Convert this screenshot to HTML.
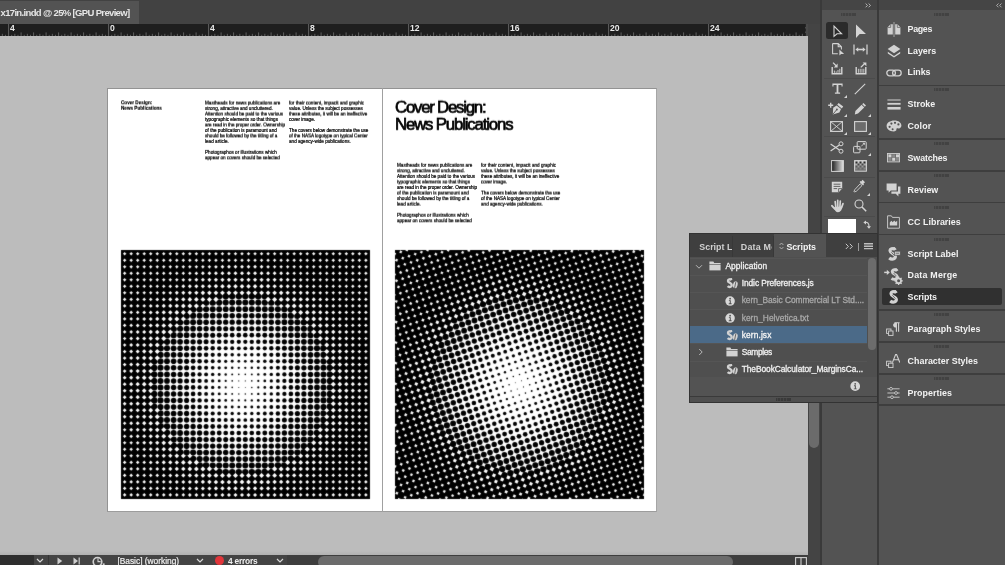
<!DOCTYPE html>
<html lang="en">
<head>
<meta charset="utf-8">
<title>x17in.indd @ 25% [GPU Preview]</title>
<style>
*{box-sizing:border-box;margin:0;padding:0}
html,body{width:1005px;height:565px;overflow:hidden;background:#bcbcbc}
body{position:relative;font-family:"Liberation Sans",sans-serif;color:#f0f0f0;-webkit-font-smoothing:antialiased}
.abs{position:absolute}
#tabbar{left:0;top:0;width:822px;height:23.5px;background:#424242}
#doctab{left:0;top:1px;width:139px;height:22.5px;background:#535353;font-weight:bold;font-size:9.5px;line-height:23.5px;letter-spacing:-0.655px;color:#e6e6e6;white-space:nowrap;padding-left:0.5px}
#ruler{left:0;top:23.6px;width:805.3px;height:12px;background:#1e1e1e;overflow:hidden}
#ruler .lbl{position:absolute;top:0.6px;font-size:8.6px;line-height:9px;color:#e8e8e8;font-weight:bold;letter-spacing:-0.2px}
#rulerend{left:805.3px;top:23.5px;width:2.7px;height:12px;background:#4a4a4a;border-left:1px dashed #262626}
#canvas{left:0;top:35.5px;width:808px;height:519.5px;background:linear-gradient(#bcbcbc 0,#bcbcbc 515px,#b0b0b0 519.5px)}
#vscroll{left:808px;top:23.5px;width:11.5px;height:541.5px;background:#444}
#vthumb{left:808.5px;top:240px;width:10.5px;height:208px;background:#6b6b6b;border-radius:0 0 5px 5px}
#vdiv{left:819.5px;top:0;width:2.5px;height:565px;background:#3a3a3a}
#spread{left:107px;top:87.7px;width:550.1px;height:424.8px;background:#fff;border:1.3px solid #939393;border-right:1px solid #a6a6a6;border-bottom:1px solid #9c9c9c}
#spine{left:381.8px;top:88px;width:1px;height:423.5px;background:#a0a0a0}
.doc{color:#000;font-family:"Liberation Sans",sans-serif}
.ht{position:absolute;overflow:hidden;background:#fff;filter:url(#soft)}
.ht svg{display:block}
/* toolbar */
#tbhead{left:822px;top:0;width:54.5px;height:10px;background:#454545}
#tb{left:822px;top:10px;width:54.5px;height:555px;background:#535353}
#tbgap{left:876.5px;top:0;width:2px;height:565px;background:#3a3a3a}
#dockhead{left:878.5px;top:0;width:126.5px;height:10.3px;background:#454545}
#dock{left:878.5px;top:10.3px;width:126.5px;height:554.7px;background:#535353}
.grip{position:absolute;height:3px;width:15.4px;background:repeating-linear-gradient(90deg,#424242 0 1.15px,#4c4c4c 1.15px 1.55px)}
.ddiv{position:absolute;left:878.5px;width:126.5px;height:1.6px;background:#3e3e3e}
.dlabel{position:absolute;left:907.6px;font-weight:bold;font-size:8.9px;line-height:12px;letter-spacing:0;color:#f2f2f2;white-space:nowrap}
.dicon{position:absolute}
.tdiv{position:absolute;left:824px;width:51px;height:1px;background:#4b4b4b}
/* status bar */
#status{left:0;top:554.8px;width:819.5px;height:11px;background:#444}
/* scripts panel */
#sp{left:688.5px;top:232.5px;width:189px;height:170px;background:#535353;border:1.5px solid #333;border-right-width:1px}
.dlabel,.sprt,.sptx,.stx,#doctab,#ruler .lbl{filter:blur(0.28px)}

#doctext{position:absolute;left:0;top:0;width:1005px;height:565px;pointer-events:none}
.dl{position:absolute;white-space:nowrap;color:#000;font-family:"Liberation Sans",sans-serif}
.bt{font-size:4.62px;line-height:6px;height:6px;-webkit-text-stroke:0.2px #000}
.sh{font-size:4.62px;line-height:6px;height:6px;font-weight:bold;-webkit-text-stroke:0.15px #000}
.bh{font-size:16.8px;line-height:20px;height:20px;-webkit-text-stroke:0.7px #000}

#st-left{left:0;top:554.8px;width:33.5px;height:11px;background:#2e2e2e}
#st-track{left:287px;top:554.8px;width:521px;height:11px;background:#3e3e3e}
.stx{position:absolute;-webkit-text-stroke:0.2px currentColor;top:555.3px;font-size:8.4px;line-height:12px;color:#f0f0f0;white-space:nowrap}
#hthumb{left:318px;top:556.2px;width:415px;height:12px;background:#6b6b6b;border-radius:6px}

.ti{position:absolute;overflow:visible}

#sptabs{left:690px;top:234px;width:187px;height:23px;background:#3f3f3f}
#sptab{left:773.5px;top:234px;width:52px;height:23px;background:#535353}
.sptx{position:absolute;top:240.8px;font-size:8.9px;font-weight:bold;line-height:12px;white-space:nowrap;color:#d0d0d0;overflow:hidden}
#splist{left:690px;top:257px;width:177px;height:119.7px;background:#4f4f4f}
.sprow{position:absolute;left:690px;width:177px;height:17.1px;border-top:1px solid #555}
.sprt{position:absolute;font-size:8.4px;-webkit-text-stroke:0.3px currentColor;line-height:12px;white-space:nowrap;color:#f0f0f0}
#spsb{left:867px;top:257px;width:10px;height:119.7px;background:#4f4f4f}
#spthumb{left:867.8px;top:258px;width:7.8px;height:91.5px;background:#6c6c6c;border-radius:4px}
#spfoot{left:690px;top:376.7px;width:187px;height:19px;background:#535353}
#spfootline{left:690px;top:395.6px;width:187px;height:1.4px;background:#3a3a3a}
#spbot{left:690px;top:397px;width:187px;height:4.6px;background:#4f4f4f}
</style>
</head>
<body>
<svg width="0" height="0" style="position:absolute"><filter id="soft" x="-2%" y="-2%" width="104%" height="104%" color-interpolation-filters="sRGB"><feConvolveMatrix order="3" kernelMatrix="0.3 1 0.3 1 9 1 0.3 1 0.3" divisor="14.2" edgeMode="duplicate" preserveAlpha="false"/></filter></svg>
<div id="canvas" class="abs"></div>
<div id="tabbar" class="abs"></div>
<div id="doctab" class="abs">x17in.indd @ 25% [GPU Preview]</div>
<div id="ruler" class="abs">
<svg width="805" height="12" style="position:absolute;left:0;top:0"><g stroke="#7c7c7c" stroke-width="0.7"><path d="M2.35 12v-2.2"/>
<path d="M5.47 12v-1.2"/>
<path d="M8.60 12v-12.0"/>
<path d="M11.72 12v-1.2"/>
<path d="M14.85 12v-2.2"/>
<path d="M17.97 12v-1.2"/>
<path d="M21.10 12v-3.6"/>
<path d="M24.22 12v-1.2"/>
<path d="M27.35 12v-2.2"/>
<path d="M30.47 12v-1.2"/>
<path d="M33.60 12v-3.6"/>
<path d="M36.72 12v-1.2"/>
<path d="M39.85 12v-2.2"/>
<path d="M42.97 12v-1.2"/>
<path d="M46.10 12v-3.6"/>
<path d="M49.22 12v-1.2"/>
<path d="M52.35 12v-2.2"/>
<path d="M55.47 12v-1.2"/>
<path d="M58.60 12v-3.6"/>
<path d="M61.72 12v-1.2"/>
<path d="M64.85 12v-2.2"/>
<path d="M67.97 12v-1.2"/>
<path d="M71.10 12v-3.6"/>
<path d="M74.22 12v-1.2"/>
<path d="M77.35 12v-2.2"/>
<path d="M80.47 12v-1.2"/>
<path d="M83.60 12v-3.6"/>
<path d="M86.72 12v-1.2"/>
<path d="M89.85 12v-2.2"/>
<path d="M92.97 12v-1.2"/>
<path d="M96.10 12v-3.6"/>
<path d="M99.22 12v-1.2"/>
<path d="M102.35 12v-2.2"/>
<path d="M105.47 12v-1.2"/>
<path d="M108.60 12v-12.0"/>
<path d="M111.72 12v-1.2"/>
<path d="M114.85 12v-2.2"/>
<path d="M117.97 12v-1.2"/>
<path d="M121.10 12v-3.6"/>
<path d="M124.22 12v-1.2"/>
<path d="M127.35 12v-2.2"/>
<path d="M130.47 12v-1.2"/>
<path d="M133.60 12v-3.6"/>
<path d="M136.72 12v-1.2"/>
<path d="M139.85 12v-2.2"/>
<path d="M142.97 12v-1.2"/>
<path d="M146.10 12v-3.6"/>
<path d="M149.22 12v-1.2"/>
<path d="M152.35 12v-2.2"/>
<path d="M155.47 12v-1.2"/>
<path d="M158.60 12v-3.6"/>
<path d="M161.72 12v-1.2"/>
<path d="M164.85 12v-2.2"/>
<path d="M167.97 12v-1.2"/>
<path d="M171.10 12v-3.6"/>
<path d="M174.22 12v-1.2"/>
<path d="M177.35 12v-2.2"/>
<path d="M180.47 12v-1.2"/>
<path d="M183.60 12v-3.6"/>
<path d="M186.72 12v-1.2"/>
<path d="M189.85 12v-2.2"/>
<path d="M192.97 12v-1.2"/>
<path d="M196.10 12v-3.6"/>
<path d="M199.22 12v-1.2"/>
<path d="M202.35 12v-2.2"/>
<path d="M205.47 12v-1.2"/>
<path d="M208.60 12v-12.0"/>
<path d="M211.72 12v-1.2"/>
<path d="M214.85 12v-2.2"/>
<path d="M217.97 12v-1.2"/>
<path d="M221.10 12v-3.6"/>
<path d="M224.22 12v-1.2"/>
<path d="M227.35 12v-2.2"/>
<path d="M230.47 12v-1.2"/>
<path d="M233.60 12v-3.6"/>
<path d="M236.72 12v-1.2"/>
<path d="M239.85 12v-2.2"/>
<path d="M242.97 12v-1.2"/>
<path d="M246.10 12v-3.6"/>
<path d="M249.22 12v-1.2"/>
<path d="M252.35 12v-2.2"/>
<path d="M255.47 12v-1.2"/>
<path d="M258.60 12v-3.6"/>
<path d="M261.73 12v-1.2"/>
<path d="M264.85 12v-2.2"/>
<path d="M267.98 12v-1.2"/>
<path d="M271.10 12v-3.6"/>
<path d="M274.23 12v-1.2"/>
<path d="M277.35 12v-2.2"/>
<path d="M280.48 12v-1.2"/>
<path d="M283.60 12v-3.6"/>
<path d="M286.73 12v-1.2"/>
<path d="M289.85 12v-2.2"/>
<path d="M292.98 12v-1.2"/>
<path d="M296.10 12v-3.6"/>
<path d="M299.23 12v-1.2"/>
<path d="M302.35 12v-2.2"/>
<path d="M305.48 12v-1.2"/>
<path d="M308.60 12v-12.0"/>
<path d="M311.73 12v-1.2"/>
<path d="M314.85 12v-2.2"/>
<path d="M317.98 12v-1.2"/>
<path d="M321.10 12v-3.6"/>
<path d="M324.23 12v-1.2"/>
<path d="M327.35 12v-2.2"/>
<path d="M330.48 12v-1.2"/>
<path d="M333.60 12v-3.6"/>
<path d="M336.73 12v-1.2"/>
<path d="M339.85 12v-2.2"/>
<path d="M342.98 12v-1.2"/>
<path d="M346.10 12v-3.6"/>
<path d="M349.23 12v-1.2"/>
<path d="M352.35 12v-2.2"/>
<path d="M355.48 12v-1.2"/>
<path d="M358.60 12v-3.6"/>
<path d="M361.73 12v-1.2"/>
<path d="M364.85 12v-2.2"/>
<path d="M367.98 12v-1.2"/>
<path d="M371.10 12v-3.6"/>
<path d="M374.23 12v-1.2"/>
<path d="M377.35 12v-2.2"/>
<path d="M380.48 12v-1.2"/>
<path d="M383.60 12v-3.6"/>
<path d="M386.73 12v-1.2"/>
<path d="M389.85 12v-2.2"/>
<path d="M392.98 12v-1.2"/>
<path d="M396.10 12v-3.6"/>
<path d="M399.23 12v-1.2"/>
<path d="M402.35 12v-2.2"/>
<path d="M405.48 12v-1.2"/>
<path d="M408.60 12v-12.0"/>
<path d="M411.73 12v-1.2"/>
<path d="M414.85 12v-2.2"/>
<path d="M417.98 12v-1.2"/>
<path d="M421.10 12v-3.6"/>
<path d="M424.23 12v-1.2"/>
<path d="M427.35 12v-2.2"/>
<path d="M430.48 12v-1.2"/>
<path d="M433.60 12v-3.6"/>
<path d="M436.73 12v-1.2"/>
<path d="M439.85 12v-2.2"/>
<path d="M442.98 12v-1.2"/>
<path d="M446.10 12v-3.6"/>
<path d="M449.23 12v-1.2"/>
<path d="M452.35 12v-2.2"/>
<path d="M455.48 12v-1.2"/>
<path d="M458.60 12v-3.6"/>
<path d="M461.73 12v-1.2"/>
<path d="M464.85 12v-2.2"/>
<path d="M467.98 12v-1.2"/>
<path d="M471.10 12v-3.6"/>
<path d="M474.23 12v-1.2"/>
<path d="M477.35 12v-2.2"/>
<path d="M480.48 12v-1.2"/>
<path d="M483.60 12v-3.6"/>
<path d="M486.73 12v-1.2"/>
<path d="M489.85 12v-2.2"/>
<path d="M492.98 12v-1.2"/>
<path d="M496.10 12v-3.6"/>
<path d="M499.23 12v-1.2"/>
<path d="M502.35 12v-2.2"/>
<path d="M505.48 12v-1.2"/>
<path d="M508.60 12v-12.0"/>
<path d="M511.73 12v-1.2"/>
<path d="M514.85 12v-2.2"/>
<path d="M517.98 12v-1.2"/>
<path d="M521.10 12v-3.6"/>
<path d="M524.23 12v-1.2"/>
<path d="M527.35 12v-2.2"/>
<path d="M530.48 12v-1.2"/>
<path d="M533.60 12v-3.6"/>
<path d="M536.73 12v-1.2"/>
<path d="M539.85 12v-2.2"/>
<path d="M542.98 12v-1.2"/>
<path d="M546.10 12v-3.6"/>
<path d="M549.23 12v-1.2"/>
<path d="M552.35 12v-2.2"/>
<path d="M555.48 12v-1.2"/>
<path d="M558.60 12v-3.6"/>
<path d="M561.73 12v-1.2"/>
<path d="M564.85 12v-2.2"/>
<path d="M567.98 12v-1.2"/>
<path d="M571.10 12v-3.6"/>
<path d="M574.23 12v-1.2"/>
<path d="M577.35 12v-2.2"/>
<path d="M580.48 12v-1.2"/>
<path d="M583.60 12v-3.6"/>
<path d="M586.73 12v-1.2"/>
<path d="M589.85 12v-2.2"/>
<path d="M592.98 12v-1.2"/>
<path d="M596.10 12v-3.6"/>
<path d="M599.23 12v-1.2"/>
<path d="M602.35 12v-2.2"/>
<path d="M605.48 12v-1.2"/>
<path d="M608.60 12v-12.0"/>
<path d="M611.73 12v-1.2"/>
<path d="M614.85 12v-2.2"/>
<path d="M617.98 12v-1.2"/>
<path d="M621.10 12v-3.6"/>
<path d="M624.23 12v-1.2"/>
<path d="M627.35 12v-2.2"/>
<path d="M630.48 12v-1.2"/>
<path d="M633.60 12v-3.6"/>
<path d="M636.73 12v-1.2"/>
<path d="M639.85 12v-2.2"/>
<path d="M642.98 12v-1.2"/>
<path d="M646.10 12v-3.6"/>
<path d="M649.23 12v-1.2"/>
<path d="M652.35 12v-2.2"/>
<path d="M655.48 12v-1.2"/>
<path d="M658.60 12v-3.6"/>
<path d="M661.73 12v-1.2"/>
<path d="M664.85 12v-2.2"/>
<path d="M667.98 12v-1.2"/>
<path d="M671.10 12v-3.6"/>
<path d="M674.23 12v-1.2"/>
<path d="M677.35 12v-2.2"/>
<path d="M680.48 12v-1.2"/>
<path d="M683.60 12v-3.6"/>
<path d="M686.73 12v-1.2"/>
<path d="M689.85 12v-2.2"/>
<path d="M692.98 12v-1.2"/>
<path d="M696.10 12v-3.6"/>
<path d="M699.23 12v-1.2"/>
<path d="M702.35 12v-2.2"/>
<path d="M705.48 12v-1.2"/>
<path d="M708.60 12v-12.0"/>
<path d="M711.73 12v-1.2"/>
<path d="M714.85 12v-2.2"/>
<path d="M717.98 12v-1.2"/>
<path d="M721.10 12v-3.6"/>
<path d="M724.23 12v-1.2"/>
<path d="M727.35 12v-2.2"/>
<path d="M730.48 12v-1.2"/>
<path d="M733.60 12v-3.6"/>
<path d="M736.73 12v-1.2"/>
<path d="M739.85 12v-2.2"/>
<path d="M742.98 12v-1.2"/>
<path d="M746.10 12v-3.6"/>
<path d="M749.23 12v-1.2"/>
<path d="M752.35 12v-2.2"/>
<path d="M755.48 12v-1.2"/>
<path d="M758.60 12v-3.6"/>
<path d="M761.73 12v-1.2"/>
<path d="M764.85 12v-2.2"/>
<path d="M767.98 12v-1.2"/>
<path d="M771.10 12v-3.6"/>
<path d="M774.23 12v-1.2"/>
<path d="M777.35 12v-2.2"/>
<path d="M780.48 12v-1.2"/>
<path d="M783.60 12v-3.6"/>
<path d="M786.73 12v-1.2"/>
<path d="M789.85 12v-2.2"/>
<path d="M792.98 12v-1.2"/>
<path d="M796.10 12v-3.6"/>
<path d="M799.23 12v-1.2"/>
<path d="M802.35 12v-2.2"/>
<path d="M805.48 12v-1.2"/></g></svg>
<div class="lbl" style="left:10.1px">4</div>
<div class="lbl" style="left:110.1px">0</div>
<div class="lbl" style="left:210.1px">4</div>
<div class="lbl" style="left:310.1px">8</div>
<div class="lbl" style="left:410.1px">12</div>
<div class="lbl" style="left:510.1px">16</div>
<div class="lbl" style="left:610.1px">20</div>
<div class="lbl" style="left:710.1px">24</div>
</div>
<div id="rulerend" class="abs"></div>

<!-- document spread -->
<div id="spread" class="abs"></div>
<div id="spine" class="abs"></div>
<div id="doctext">
<div class="dl bt" style="left:204.8px;top:100px;letter-spacing:0.013px;transform:perspective(1000px) translate3d(0,0.55px,0.1px)">Mastheads for news publications are</div>
<div class="dl bt" style="left:204.8px;top:106px;letter-spacing:-0.021px;transform:perspective(1000px) translate3d(0,0.03px,0.1px)">strong, attractive and uncluttered.</div>
<div class="dl bt" style="left:204.8px;top:111px;letter-spacing:-0.008px;transform:perspective(1000px) translate3d(0,0.51px,0.1px)">Attention should be paid to the various</div>
<div class="dl bt" style="left:204.8px;top:116px;letter-spacing:0.014px;transform:perspective(1000px) translate3d(0,0.99px,0.1px)">typographic elements so that things</div>
<div class="dl bt" style="left:204.8px;top:122px;letter-spacing:-0.018px;transform:perspective(1000px) translate3d(0,0.47px,0.1px)">are read in the proper order. Ownership</div>
<div class="dl bt" style="left:204.8px;top:127px;letter-spacing:0.001px;transform:perspective(1000px) translate3d(0,0.95px,0.1px)">of the publication is paramount and</div>
<div class="dl bt" style="left:204.8px;top:133px;letter-spacing:-0.017px;transform:perspective(1000px) translate3d(0,0.43px,0.1px)">should be followed by the titling of a</div>
<div class="dl bt" style="left:204.8px;top:138px;letter-spacing:0.017px;transform:perspective(1000px) translate3d(0,0.91px,0.1px)">lead article.</div>
<div class="dl bt" style="left:204.8px;top:149px;letter-spacing:0.009px;transform:perspective(1000px) translate3d(0,0.87px,0.1px)">Photographos or illustrations which</div>
<div class="dl bt" style="left:204.8px;top:155px;letter-spacing:-0.013px;transform:perspective(1000px) translate3d(0,0.35px,0.1px)">appear on covers should be selected</div>
<div class="dl bt" style="left:289.2px;top:100px;letter-spacing:0.007px;transform:perspective(1000px) translate3d(0,0.55px,0.1px)">for their content, impactt and graphic</div>
<div class="dl bt" style="left:289.2px;top:106px;letter-spacing:-0.017px;transform:perspective(1000px) translate3d(0,0.03px,0.1px)">value. Unless the subject possesses</div>
<div class="dl bt" style="left:289.2px;top:111px;letter-spacing:-0.013px;transform:perspective(1000px) translate3d(0,0.51px,0.1px)">these attributes, it will be an ineffective</div>
<div class="dl bt" style="left:289.2px;top:116px;letter-spacing:-0.041px;transform:perspective(1000px) translate3d(0,0.99px,0.1px)">cover image.</div>
<div class="dl bt" style="left:289.2px;top:127px;letter-spacing:-0.001px;transform:perspective(1000px) translate3d(0,0.95px,0.1px)">The covers below demonstrate the use</div>
<div class="dl bt" style="left:289.2px;top:133px;letter-spacing:-0.023px;transform:perspective(1000px) translate3d(0,0.43px,0.1px)">of the NASA logotype on typical Center</div>
<div class="dl bt" style="left:289.2px;top:138px;letter-spacing:0.001px;transform:perspective(1000px) translate3d(0,0.91px,0.1px)">and agency-wide publications.</div>
<div class="dl bt" style="left:396.6px;top:162px;letter-spacing:0.013px;transform:perspective(1000px) translate3d(0,0.80px,0.1px)">Mastheads for news publications are</div>
<div class="dl bt" style="left:396.6px;top:168px;letter-spacing:-0.021px;transform:perspective(1000px) translate3d(0,0.35px,0.1px)">strong, attractive and uncluttered.</div>
<div class="dl bt" style="left:396.6px;top:173px;letter-spacing:-0.008px;transform:perspective(1000px) translate3d(0,0.90px,0.1px)">Attention should be paid to the various</div>
<div class="dl bt" style="left:396.6px;top:179px;letter-spacing:0.014px;transform:perspective(1000px) translate3d(0,0.45px,0.1px)">typographic elements so that things</div>
<div class="dl bt" style="left:396.6px;top:185px;letter-spacing:-0.018px;transform:perspective(1000px) translate3d(0,0.00px,0.1px)">are read in the proper order. Ownership</div>
<div class="dl bt" style="left:396.6px;top:190px;letter-spacing:0.001px;transform:perspective(1000px) translate3d(0,0.55px,0.1px)">of the publication is paramount and</div>
<div class="dl bt" style="left:396.6px;top:196px;letter-spacing:-0.017px;transform:perspective(1000px) translate3d(0,0.10px,0.1px)">should be followed by the titling of a</div>
<div class="dl bt" style="left:396.6px;top:201px;letter-spacing:0.017px;transform:perspective(1000px) translate3d(0,0.65px,0.1px)">lead article.</div>
<div class="dl bt" style="left:396.6px;top:212px;letter-spacing:0.009px;transform:perspective(1000px) translate3d(0,0.75px,0.1px)">Photographos or illustrations which</div>
<div class="dl bt" style="left:396.6px;top:218px;letter-spacing:-0.013px;transform:perspective(1000px) translate3d(0,0.30px,0.1px)">appear on covers should be selected</div>
<div class="dl bt" style="left:481.0px;top:162px;letter-spacing:0.007px;transform:perspective(1000px) translate3d(0,0.80px,0.1px)">for their content, impactt and graphic</div>
<div class="dl bt" style="left:481.0px;top:168px;letter-spacing:-0.017px;transform:perspective(1000px) translate3d(0,0.35px,0.1px)">value. Unless the subject possesses</div>
<div class="dl bt" style="left:481.0px;top:173px;letter-spacing:-0.013px;transform:perspective(1000px) translate3d(0,0.90px,0.1px)">these attributes, it will be an ineffective</div>
<div class="dl bt" style="left:481.0px;top:179px;letter-spacing:-0.041px;transform:perspective(1000px) translate3d(0,0.45px,0.1px)">cover image.</div>
<div class="dl bt" style="left:481.0px;top:190px;letter-spacing:-0.001px;transform:perspective(1000px) translate3d(0,0.55px,0.1px)">The covers below demonstrate the use</div>
<div class="dl bt" style="left:481.0px;top:196px;letter-spacing:-0.023px;transform:perspective(1000px) translate3d(0,0.10px,0.1px)">of the NASA logotype on typical Center</div>
<div class="dl bt" style="left:481.0px;top:201px;letter-spacing:0.001px;transform:perspective(1000px) translate3d(0,0.65px,0.1px)">and agency-wide publications.</div>
<div class="dl sh" style="left:120.9px;top:100px;letter-spacing:0.004px;transform:perspective(1000px) translate3d(0,0.30px,0.1px)">Cover Design:</div>
<div class="dl sh" style="left:120.9px;top:105px;letter-spacing:0.010px;transform:perspective(1000px) translate3d(0,0.75px,0.1px)">News Publications</div>
<div class="dl bh" style="left:395.0px;top:97px;letter-spacing:-1.233px;transform:perspective(1000px) translate3d(0,0.70px,0.1px)">Cover Design:</div>
<div class="dl bh" style="left:395.0px;top:114px;letter-spacing:-1.160px;transform:perspective(1000px) translate3d(0,0.80px,0.1px)">News Publications</div>
</div>
<div class="ht" style="left:120.8px;top:250px;width:248.8px;height:248.8px"><svg width="248.8" height="248.8" viewBox="0 0 248.8 248.8" fill="#000">
<circle cx=".4" cy=".5" r="4.7"/>
<circle cx=".4" cy="7" r="4.7"/>
<circle cx=".4" cy="13.5" r="4.7"/>
<circle cx=".4" cy="20.1" r="4.7"/>
<circle cx=".4" cy="26.6" r="4.7"/>
<circle cx=".4" cy="33.1" r="4.7"/>
<circle cx=".4" cy="39.6" r="4.7"/>
<circle cx=".4" cy="46.1" r="4.7"/>
<circle cx=".4" cy="52.6" r="4.7"/>
<circle cx=".4" cy="59.2" r="4.7"/>
<circle cx=".4" cy="65.7" r="4.7"/>
<circle cx=".4" cy="72.2" r="4.7"/>
<circle cx=".4" cy="78.7" r="4.7"/>
<circle cx=".4" cy="85.2" r="4.7"/>
<circle cx=".4" cy="91.8" r="4.7"/>
<circle cx=".4" cy="98.3" r="4.7"/>
<circle cx=".4" cy="104.8" r="4.7"/>
<circle cx=".4" cy="111.3" r="4.7"/>
<circle cx=".4" cy="117.8" r="4.7"/>
<circle cx=".4" cy="124.4" r="4.7"/>
<circle cx=".4" cy="130.9" r="4.7"/>
<circle cx=".4" cy="137.4" r="4.7"/>
<circle cx=".4" cy="143.9" r="4.7"/>
<circle cx=".4" cy="150.4" r="4.7"/>
<circle cx=".4" cy="157" r="4.7"/>
<circle cx=".4" cy="163.5" r="4.7"/>
<circle cx=".4" cy="170" r="4.7"/>
<circle cx=".4" cy="176.5" r="4.7"/>
<circle cx=".4" cy="183" r="4.7"/>
<circle cx=".4" cy="189.6" r="4.7"/>
<circle cx=".4" cy="196.1" r="4.7"/>
<circle cx=".4" cy="202.6" r="4.7"/>
<circle cx=".4" cy="209.1" r="4.7"/>
<circle cx=".4" cy="215.6" r="4.7"/>
<circle cx=".4" cy="222.2" r="4.7"/>
<circle cx=".4" cy="228.7" r="4.7"/>
<circle cx=".4" cy="235.2" r="4.7"/>
<circle cx=".4" cy="241.7" r="4.7"/>
<circle cx=".4" cy="248.2" r="4.7"/>
<circle cx="6.9" cy=".5" r="4.7"/>
<circle cx="6.9" cy="7" r="4.7"/>
<circle cx="6.9" cy="13.5" r="4.7"/>
<circle cx="6.9" cy="20.1" r="4.7"/>
<circle cx="6.9" cy="26.6" r="4.7"/>
<circle cx="6.9" cy="33.1" r="4.7"/>
<circle cx="6.9" cy="39.6" r="4.7"/>
<circle cx="6.9" cy="46.1" r="4.7"/>
<circle cx="6.9" cy="52.6" r="4.7"/>
<circle cx="6.9" cy="59.2" r="4.7"/>
<circle cx="6.9" cy="65.7" r="4.7"/>
<circle cx="6.9" cy="72.2" r="4.7"/>
<circle cx="6.9" cy="78.7" r="4.7"/>
<circle cx="6.9" cy="85.2" r="4.7"/>
<circle cx="6.9" cy="91.8" r="4.7"/>
<circle cx="6.9" cy="98.3" r="4.7"/>
<circle cx="6.9" cy="104.8" r="4.7"/>
<circle cx="6.9" cy="111.3" r="4.7"/>
<circle cx="6.9" cy="117.8" r="4.7"/>
<circle cx="6.9" cy="124.4" r="4.7"/>
<circle cx="6.9" cy="130.9" r="4.7"/>
<circle cx="6.9" cy="137.4" r="4.7"/>
<circle cx="6.9" cy="143.9" r="4.7"/>
<circle cx="6.9" cy="150.4" r="4.7"/>
<circle cx="6.9" cy="157" r="4.7"/>
<circle cx="6.9" cy="163.5" r="4.7"/>
<circle cx="6.9" cy="170" r="4.7"/>
<circle cx="6.9" cy="176.5" r="4.7"/>
<circle cx="6.9" cy="183" r="4.7"/>
<circle cx="6.9" cy="189.6" r="4.7"/>
<circle cx="6.9" cy="196.1" r="4.7"/>
<circle cx="6.9" cy="202.6" r="4.7"/>
<circle cx="6.9" cy="209.1" r="4.7"/>
<circle cx="6.9" cy="215.6" r="4.7"/>
<circle cx="6.9" cy="222.2" r="4.7"/>
<circle cx="6.9" cy="228.7" r="4.7"/>
<circle cx="6.9" cy="235.2" r="4.7"/>
<circle cx="6.9" cy="241.7" r="4.7"/>
<circle cx="6.9" cy="248.2" r="4.7"/>
<circle cx="13.4" cy=".5" r="4.7"/>
<circle cx="13.4" cy="7" r="4.7"/>
<circle cx="13.4" cy="13.5" r="4.7"/>
<circle cx="13.4" cy="20.1" r="4.7"/>
<circle cx="13.4" cy="26.6" r="4.7"/>
<circle cx="13.4" cy="33.1" r="4.7"/>
<circle cx="13.4" cy="39.6" r="4.7"/>
<circle cx="13.4" cy="46.1" r="4.7"/>
<circle cx="13.4" cy="52.6" r="4.7"/>
<circle cx="13.4" cy="59.2" r="4.7"/>
<circle cx="13.4" cy="65.7" r="4.7"/>
<circle cx="13.4" cy="72.2" r="4.7"/>
<circle cx="13.4" cy="78.7" r="4.7"/>
<circle cx="13.4" cy="85.2" r="4.7"/>
<circle cx="13.4" cy="91.8" r="4.7"/>
<circle cx="13.4" cy="98.3" r="4.7"/>
<circle cx="13.4" cy="104.8" r="4.7"/>
<circle cx="13.4" cy="111.3" r="4.7"/>
<circle cx="13.4" cy="117.8" r="4.7"/>
<circle cx="13.4" cy="124.4" r="4.7"/>
<circle cx="13.4" cy="130.9" r="4.7"/>
<circle cx="13.4" cy="137.4" r="4.7"/>
<circle cx="13.4" cy="143.9" r="4.7"/>
<circle cx="13.4" cy="150.4" r="4.7"/>
<circle cx="13.4" cy="157" r="4.7"/>
<circle cx="13.4" cy="163.5" r="4.7"/>
<circle cx="13.4" cy="170" r="4.7"/>
<circle cx="13.4" cy="176.5" r="4.7"/>
<circle cx="13.4" cy="183" r="4.7"/>
<circle cx="13.4" cy="189.6" r="4.7"/>
<circle cx="13.4" cy="196.1" r="4.7"/>
<circle cx="13.4" cy="202.6" r="4.7"/>
<circle cx="13.4" cy="209.1" r="4.7"/>
<circle cx="13.4" cy="215.6" r="4.7"/>
<circle cx="13.4" cy="222.2" r="4.7"/>
<circle cx="13.4" cy="228.7" r="4.7"/>
<circle cx="13.4" cy="235.2" r="4.7"/>
<circle cx="13.4" cy="241.7" r="4.7"/>
<circle cx="13.4" cy="248.2" r="4.7"/>
<circle cx="20" cy=".5" r="4.7"/>
<circle cx="20" cy="7" r="4.7"/>
<circle cx="20" cy="13.5" r="4.7"/>
<circle cx="20" cy="20.1" r="4.7"/>
<circle cx="20" cy="26.6" r="4.7"/>
<circle cx="20" cy="33.1" r="4.7"/>
<circle cx="20" cy="39.6" r="4.7"/>
<circle cx="20" cy="46.1" r="4.7"/>
<circle cx="20" cy="52.6" r="4.7"/>
<circle cx="20" cy="59.2" r="4.7"/>
<circle cx="20" cy="65.7" r="4.7"/>
<circle cx="20" cy="72.2" r="4.7"/>
<circle cx="20" cy="78.7" r="4.7"/>
<circle cx="20" cy="85.2" r="4.7"/>
<circle cx="20" cy="91.8" r="4.7"/>
<circle cx="20" cy="98.3" r="4.7"/>
<circle cx="20" cy="104.8" r="4.7"/>
<circle cx="20" cy="111.3" r="4.7"/>
<circle cx="20" cy="117.8" r="4.7"/>
<circle cx="20" cy="124.4" r="4.7"/>
<circle cx="20" cy="130.9" r="4.7"/>
<circle cx="20" cy="137.4" r="4.7"/>
<circle cx="20" cy="143.9" r="4.7"/>
<circle cx="20" cy="150.4" r="4.7"/>
<circle cx="20" cy="157" r="4.7"/>
<circle cx="20" cy="163.5" r="4.7"/>
<circle cx="20" cy="170" r="4.7"/>
<circle cx="20" cy="176.5" r="4.7"/>
<circle cx="20" cy="183" r="4.7"/>
<circle cx="20" cy="189.6" r="4.7"/>
<circle cx="20" cy="196.1" r="4.7"/>
<circle cx="20" cy="202.6" r="4.7"/>
<circle cx="20" cy="209.1" r="4.7"/>
<circle cx="20" cy="215.6" r="4.7"/>
<circle cx="20" cy="222.2" r="4.7"/>
<circle cx="20" cy="228.7" r="4.7"/>
<circle cx="20" cy="235.2" r="4.7"/>
<circle cx="20" cy="241.7" r="4.7"/>
<circle cx="20" cy="248.2" r="4.7"/>
<circle cx="26.5" cy=".5" r="4.7"/>
<circle cx="26.5" cy="7" r="4.7"/>
<circle cx="26.5" cy="13.5" r="4.7"/>
<circle cx="26.5" cy="20.1" r="4.7"/>
<circle cx="26.5" cy="26.6" r="4.7"/>
<circle cx="26.5" cy="33.1" r="4.7"/>
<circle cx="26.5" cy="39.6" r="4.7"/>
<circle cx="26.5" cy="46.1" r="4.7"/>
<circle cx="26.5" cy="52.6" r="4.7"/>
<circle cx="26.5" cy="59.2" r="4.7"/>
<circle cx="26.5" cy="65.7" r="4.7"/>
<circle cx="26.5" cy="72.2" r="4.7"/>
<circle cx="26.5" cy="78.7" r="4.7"/>
<circle cx="26.5" cy="85.2" r="4.7"/>
<circle cx="26.5" cy="91.8" r="4.7"/>
<circle cx="26.5" cy="98.3" r="4.7"/>
<circle cx="26.5" cy="104.8" r="4.7"/>
<circle cx="26.5" cy="111.3" r="4.7"/>
<circle cx="26.5" cy="117.8" r="4.52"/>
<circle cx="26.5" cy="124.4" r="4.29"/>
<circle cx="26.5" cy="130.9" r="4.17"/>
<circle cx="26.5" cy="137.4" r="4.16"/>
<circle cx="26.5" cy="143.9" r="4.26"/>
<circle cx="26.5" cy="150.4" r="4.46"/>
<circle cx="26.5" cy="157" r="4.7"/>
<circle cx="26.5" cy="163.5" r="4.7"/>
<circle cx="26.5" cy="170" r="4.7"/>
<circle cx="26.5" cy="176.5" r="4.7"/>
<circle cx="26.5" cy="183" r="4.7"/>
<circle cx="26.5" cy="189.6" r="4.7"/>
<circle cx="26.5" cy="196.1" r="4.7"/>
<circle cx="26.5" cy="202.6" r="4.7"/>
<circle cx="26.5" cy="209.1" r="4.7"/>
<circle cx="26.5" cy="215.6" r="4.7"/>
<circle cx="26.5" cy="222.2" r="4.7"/>
<circle cx="26.5" cy="228.7" r="4.7"/>
<circle cx="26.5" cy="235.2" r="4.7"/>
<circle cx="26.5" cy="241.7" r="4.7"/>
<circle cx="26.5" cy="248.2" r="4.7"/>
<circle cx="33" cy=".5" r="4.7"/>
<circle cx="33" cy="7" r="4.7"/>
<circle cx="33" cy="13.5" r="4.7"/>
<circle cx="33" cy="20.1" r="4.7"/>
<circle cx="33" cy="26.6" r="4.7"/>
<circle cx="33" cy="33.1" r="4.7"/>
<circle cx="33" cy="39.6" r="4.7"/>
<circle cx="33" cy="46.1" r="4.7"/>
<circle cx="33" cy="52.6" r="4.7"/>
<circle cx="33" cy="59.2" r="4.7"/>
<circle cx="33" cy="65.7" r="4.7"/>
<circle cx="33" cy="72.2" r="4.7"/>
<circle cx="33" cy="78.7" r="4.7"/>
<circle cx="33" cy="85.2" r="4.7"/>
<circle cx="33" cy="91.8" r="4.7"/>
<circle cx="33" cy="98.3" r="4.33"/>
<circle cx="33" cy="104.8" r="3.78"/>
<circle cx="33" cy="111.3" r="3.45"/>
<circle cx="33" cy="117.8" r="3.34"/>
<circle cx="33" cy="124.4" r="3.26"/>
<circle cx="33" cy="130.9" r="3.22"/>
<circle cx="33" cy="137.4" r="3.22"/>
<circle cx="33" cy="143.9" r="3.25"/>
<circle cx="33" cy="150.4" r="3.32"/>
<circle cx="33" cy="157" r="3.42"/>
<circle cx="33" cy="163.5" r="3.68"/>
<circle cx="33" cy="170" r="4.21"/>
<circle cx="33" cy="176.5" r="4.7"/>
<circle cx="33" cy="183" r="4.7"/>
<circle cx="33" cy="189.6" r="4.7"/>
<circle cx="33" cy="196.1" r="4.7"/>
<circle cx="33" cy="202.6" r="4.7"/>
<circle cx="33" cy="209.1" r="4.7"/>
<circle cx="33" cy="215.6" r="4.7"/>
<circle cx="33" cy="222.2" r="4.7"/>
<circle cx="33" cy="228.7" r="4.7"/>
<circle cx="33" cy="235.2" r="4.7"/>
<circle cx="33" cy="241.7" r="4.7"/>
<circle cx="33" cy="248.2" r="4.7"/>
<circle cx="39.5" cy=".5" r="4.7"/>
<circle cx="39.5" cy="7" r="4.7"/>
<circle cx="39.5" cy="13.5" r="4.7"/>
<circle cx="39.5" cy="20.1" r="4.7"/>
<circle cx="39.5" cy="26.6" r="4.7"/>
<circle cx="39.5" cy="33.1" r="4.7"/>
<circle cx="39.5" cy="39.6" r="4.7"/>
<circle cx="39.5" cy="46.1" r="4.7"/>
<circle cx="39.5" cy="52.6" r="4.7"/>
<circle cx="39.5" cy="59.2" r="4.7"/>
<circle cx="39.5" cy="65.7" r="4.7"/>
<circle cx="39.5" cy="72.2" r="4.7"/>
<circle cx="39.5" cy="78.7" r="4.7"/>
<circle cx="39.5" cy="85.2" r="4.35"/>
<circle cx="39.5" cy="91.8" r="3.58"/>
<circle cx="39.5" cy="98.3" r="3.31"/>
<circle cx="39.5" cy="104.8" r="3.17"/>
<circle cx="39.5" cy="111.3" r="3.1"/>
<circle cx="39.5" cy="117.8" r="3.05"/>
<circle cx="39.5" cy="124.4" r="3.01"/>
<circle cx="39.5" cy="130.9" r="3"/>
<circle cx="39.5" cy="137.4" r="2.99"/>
<circle cx="39.5" cy="143.9" r="3.01"/>
<circle cx="39.5" cy="150.4" r="3.04"/>
<circle cx="39.5" cy="157" r="3.09"/>
<circle cx="39.5" cy="163.5" r="3.15"/>
<circle cx="39.5" cy="170" r="3.27"/>
<circle cx="39.5" cy="176.5" r="3.48"/>
<circle cx="39.5" cy="183" r="4.19"/>
<circle cx="39.5" cy="189.6" r="4.7"/>
<circle cx="39.5" cy="196.1" r="4.7"/>
<circle cx="39.5" cy="202.6" r="4.7"/>
<circle cx="39.5" cy="209.1" r="4.7"/>
<circle cx="39.5" cy="215.6" r="4.7"/>
<circle cx="39.5" cy="222.2" r="4.7"/>
<circle cx="39.5" cy="228.7" r="4.7"/>
<circle cx="39.5" cy="235.2" r="4.7"/>
<circle cx="39.5" cy="241.7" r="4.7"/>
<circle cx="39.5" cy="248.2" r="4.7"/>
<circle cx="46" cy=".5" r="4.7"/>
<circle cx="46" cy="7" r="4.7"/>
<circle cx="46" cy="13.5" r="4.7"/>
<circle cx="46" cy="20.1" r="4.7"/>
<circle cx="46" cy="26.6" r="4.7"/>
<circle cx="46" cy="33.1" r="4.7"/>
<circle cx="46" cy="39.6" r="4.7"/>
<circle cx="46" cy="46.1" r="4.7"/>
<circle cx="46" cy="52.6" r="4.7"/>
<circle cx="46" cy="59.2" r="4.7"/>
<circle cx="46" cy="65.7" r="4.7"/>
<circle cx="46" cy="72.2" r="4.7"/>
<circle cx="46" cy="78.7" r="3.93"/>
<circle cx="46" cy="85.2" r="3.35"/>
<circle cx="46" cy="91.8" r="3.15"/>
<circle cx="46" cy="98.3" r="3.05"/>
<circle cx="46" cy="104.8" r="2.98"/>
<circle cx="46" cy="111.3" r="2.93"/>
<circle cx="46" cy="117.8" r="2.89"/>
<circle cx="46" cy="124.4" r="2.87"/>
<circle cx="46" cy="130.9" r="2.86"/>
<circle cx="46" cy="137.4" r="2.85"/>
<circle cx="46" cy="143.9" r="2.87"/>
<circle cx="46" cy="150.4" r="2.89"/>
<circle cx="46" cy="157" r="2.92"/>
<circle cx="46" cy="163.5" r="2.97"/>
<circle cx="46" cy="170" r="3.03"/>
<circle cx="46" cy="176.5" r="3.13"/>
<circle cx="46" cy="183" r="3.3"/>
<circle cx="46" cy="189.6" r="3.74"/>
<circle cx="46" cy="196.1" r="4.7"/>
<circle cx="46" cy="202.6" r="4.7"/>
<circle cx="46" cy="209.1" r="4.7"/>
<circle cx="46" cy="215.6" r="4.7"/>
<circle cx="46" cy="222.2" r="4.7"/>
<circle cx="46" cy="228.7" r="4.7"/>
<circle cx="46" cy="235.2" r="4.7"/>
<circle cx="46" cy="241.7" r="4.7"/>
<circle cx="46" cy="248.2" r="4.7"/>
<circle cx="52.6" cy=".5" r="4.7"/>
<circle cx="52.6" cy="7" r="4.7"/>
<circle cx="52.6" cy="13.5" r="4.7"/>
<circle cx="52.6" cy="20.1" r="4.7"/>
<circle cx="52.6" cy="26.6" r="4.7"/>
<circle cx="52.6" cy="33.1" r="4.7"/>
<circle cx="52.6" cy="39.6" r="4.7"/>
<circle cx="52.6" cy="46.1" r="4.7"/>
<circle cx="52.6" cy="52.6" r="4.7"/>
<circle cx="52.6" cy="59.2" r="4.7"/>
<circle cx="52.6" cy="65.7" r="4.7"/>
<circle cx="52.6" cy="72.2" r="3.72"/>
<circle cx="52.6" cy="78.7" r="3.25"/>
<circle cx="52.6" cy="85.2" r="3.09"/>
<circle cx="52.6" cy="91.8" r="2.98"/>
<circle cx="52.6" cy="98.3" r="2.91"/>
<circle cx="52.6" cy="104.8" r="2.85"/>
<circle cx="52.6" cy="111.3" r="2.8"/>
<circle cx="52.6" cy="117.8" r="2.77"/>
<circle cx="52.6" cy="124.4" r="2.75"/>
<circle cx="52.6" cy="130.9" r="2.73"/>
<circle cx="52.6" cy="137.4" r="2.73"/>
<circle cx="52.6" cy="143.9" r="2.74"/>
<circle cx="52.6" cy="150.4" r="2.76"/>
<circle cx="52.6" cy="157" r="2.8"/>
<circle cx="52.6" cy="163.5" r="2.84"/>
<circle cx="52.6" cy="170" r="2.9"/>
<circle cx="52.6" cy="176.5" r="2.96"/>
<circle cx="52.6" cy="183" r="3.06"/>
<circle cx="52.6" cy="189.6" r="3.19"/>
<circle cx="52.6" cy="196.1" r="3.51"/>
<circle cx="52.6" cy="202.6" r="4.58"/>
<circle cx="52.6" cy="209.1" r="4.7"/>
<circle cx="52.6" cy="215.6" r="4.7"/>
<circle cx="52.6" cy="222.2" r="4.7"/>
<circle cx="52.6" cy="228.7" r="4.7"/>
<circle cx="52.6" cy="235.2" r="4.7"/>
<circle cx="52.6" cy="241.7" r="4.7"/>
<circle cx="52.6" cy="248.2" r="4.7"/>
<circle cx="59.1" cy=".5" r="4.7"/>
<circle cx="59.1" cy="7" r="4.7"/>
<circle cx="59.1" cy="13.5" r="4.7"/>
<circle cx="59.1" cy="20.1" r="4.7"/>
<circle cx="59.1" cy="26.6" r="4.7"/>
<circle cx="59.1" cy="33.1" r="4.7"/>
<circle cx="59.1" cy="39.6" r="4.7"/>
<circle cx="59.1" cy="46.1" r="4.7"/>
<circle cx="59.1" cy="52.6" r="4.7"/>
<circle cx="59.1" cy="59.2" r="4.7"/>
<circle cx="59.1" cy="65.7" r="3.72"/>
<circle cx="59.1" cy="72.2" r="3.21"/>
<circle cx="59.1" cy="78.7" r="3.06"/>
<circle cx="59.1" cy="85.2" r="2.95"/>
<circle cx="59.1" cy="91.8" r="2.86"/>
<circle cx="59.1" cy="98.3" r="2.8"/>
<circle cx="59.1" cy="104.8" r="2.74"/>
<circle cx="59.1" cy="111.3" r="2.69"/>
<circle cx="59.1" cy="117.8" r="2.66"/>
<circle cx="59.1" cy="124.4" r="2.64"/>
<circle cx="59.1" cy="130.9" r="2.62"/>
<circle cx="59.1" cy="137.4" r="2.62"/>
<circle cx="59.1" cy="143.9" r="2.63"/>
<circle cx="59.1" cy="150.4" r="2.65"/>
<circle cx="59.1" cy="157" r="2.69"/>
<circle cx="59.1" cy="163.5" r="2.73"/>
<circle cx="59.1" cy="170" r="2.78"/>
<circle cx="59.1" cy="176.5" r="2.85"/>
<circle cx="59.1" cy="183" r="2.93"/>
<circle cx="59.1" cy="189.6" r="3.03"/>
<circle cx="59.1" cy="196.1" r="3.18"/>
<circle cx="59.1" cy="202.6" r="3.5"/>
<circle cx="59.1" cy="209.1" r="4.67"/>
<circle cx="59.1" cy="215.6" r="4.7"/>
<circle cx="59.1" cy="222.2" r="4.7"/>
<circle cx="59.1" cy="228.7" r="4.7"/>
<circle cx="59.1" cy="235.2" r="4.7"/>
<circle cx="59.1" cy="241.7" r="4.7"/>
<circle cx="59.1" cy="248.2" r="4.7"/>
<circle cx="65.6" cy=".5" r="4.7"/>
<circle cx="65.6" cy="7" r="4.7"/>
<circle cx="65.6" cy="13.5" r="4.7"/>
<circle cx="65.6" cy="20.1" r="4.7"/>
<circle cx="65.6" cy="26.6" r="4.7"/>
<circle cx="65.6" cy="33.1" r="4.7"/>
<circle cx="65.6" cy="39.6" r="4.7"/>
<circle cx="65.6" cy="46.1" r="4.7"/>
<circle cx="65.6" cy="52.6" r="4.7"/>
<circle cx="65.6" cy="59.2" r="3.95"/>
<circle cx="65.6" cy="65.7" r="3.25"/>
<circle cx="65.6" cy="72.2" r="3.06"/>
<circle cx="65.6" cy="78.7" r="2.94"/>
<circle cx="65.6" cy="85.2" r="2.84"/>
<circle cx="65.6" cy="91.8" r="2.76"/>
<circle cx="65.6" cy="98.3" r="2.7"/>
<circle cx="65.6" cy="104.8" r="2.64"/>
<circle cx="65.6" cy="111.3" r="2.59"/>
<circle cx="65.6" cy="117.8" r="2.55"/>
<circle cx="65.6" cy="124.4" r="2.53"/>
<circle cx="65.6" cy="130.9" r="2.51"/>
<circle cx="65.6" cy="137.4" r="2.51"/>
<circle cx="65.6" cy="143.9" r="2.52"/>
<circle cx="65.6" cy="150.4" r="2.55"/>
<circle cx="65.6" cy="157" r="2.58"/>
<circle cx="65.6" cy="163.5" r="2.63"/>
<circle cx="65.6" cy="170" r="2.68"/>
<circle cx="65.6" cy="176.5" r="2.75"/>
<circle cx="65.6" cy="183" r="2.82"/>
<circle cx="65.6" cy="189.6" r="2.92"/>
<circle cx="65.6" cy="196.1" r="3.03"/>
<circle cx="65.6" cy="202.6" r="3.19"/>
<circle cx="65.6" cy="209.1" r="3.7"/>
<circle cx="65.6" cy="215.6" r="4.7"/>
<circle cx="65.6" cy="222.2" r="4.7"/>
<circle cx="65.6" cy="228.7" r="4.7"/>
<circle cx="65.6" cy="235.2" r="4.7"/>
<circle cx="65.6" cy="241.7" r="4.7"/>
<circle cx="65.6" cy="248.2" r="4.7"/>
<circle cx="72.1" cy=".5" r="4.7"/>
<circle cx="72.1" cy="7" r="4.7"/>
<circle cx="72.1" cy="13.5" r="4.7"/>
<circle cx="72.1" cy="20.1" r="4.7"/>
<circle cx="72.1" cy="26.6" r="4.7"/>
<circle cx="72.1" cy="33.1" r="4.7"/>
<circle cx="72.1" cy="39.6" r="4.7"/>
<circle cx="72.1" cy="46.1" r="4.7"/>
<circle cx="72.1" cy="52.6" r="4.39"/>
<circle cx="72.1" cy="59.2" r="3.36"/>
<circle cx="72.1" cy="65.7" r="3.09"/>
<circle cx="72.1" cy="72.2" r="2.95"/>
<circle cx="72.1" cy="78.7" r="2.84"/>
<circle cx="72.1" cy="85.2" r="2.75"/>
<circle cx="72.1" cy="91.8" r="2.67"/>
<circle cx="72.1" cy="98.3" r="2.61"/>
<circle cx="72.1" cy="104.8" r="2.54"/>
<circle cx="72.1" cy="111.3" r="2.48"/>
<circle cx="72.1" cy="117.8" r="2.4"/>
<circle cx="72.1" cy="124.4" r="2.35"/>
<circle cx="72.1" cy="130.9" r="2.32"/>
<circle cx="72.1" cy="137.4" r="2.32"/>
<circle cx="72.1" cy="143.9" r="2.34"/>
<circle cx="72.1" cy="150.4" r="2.39"/>
<circle cx="72.1" cy="157" r="2.46"/>
<circle cx="72.1" cy="163.5" r="2.53"/>
<circle cx="72.1" cy="170" r="2.59"/>
<circle cx="72.1" cy="176.5" r="2.66"/>
<circle cx="72.1" cy="183" r="2.74"/>
<circle cx="72.1" cy="189.6" r="2.82"/>
<circle cx="72.1" cy="196.1" r="2.93"/>
<circle cx="72.1" cy="202.6" r="3.06"/>
<circle cx="72.1" cy="209.1" r="3.28"/>
<circle cx="72.1" cy="215.6" r="4.12"/>
<circle cx="72.1" cy="222.2" r="4.7"/>
<circle cx="72.1" cy="228.7" r="4.7"/>
<circle cx="72.1" cy="235.2" r="4.7"/>
<circle cx="72.1" cy="241.7" r="4.7"/>
<circle cx="72.1" cy="248.2" r="4.7"/>
<circle cx="78.6" cy=".5" r="4.7"/>
<circle cx="78.6" cy="7" r="4.7"/>
<circle cx="78.6" cy="13.5" r="4.7"/>
<circle cx="78.6" cy="20.1" r="4.7"/>
<circle cx="78.6" cy="26.6" r="4.7"/>
<circle cx="78.6" cy="33.1" r="4.7"/>
<circle cx="78.6" cy="39.6" r="4.7"/>
<circle cx="78.6" cy="46.1" r="4.7"/>
<circle cx="78.6" cy="52.6" r="3.63"/>
<circle cx="78.6" cy="59.2" r="3.16"/>
<circle cx="78.6" cy="65.7" r="2.98"/>
<circle cx="78.6" cy="72.2" r="2.86"/>
<circle cx="78.6" cy="78.7" r="2.76"/>
<circle cx="78.6" cy="85.2" r="2.68"/>
<circle cx="78.6" cy="91.8" r="2.59"/>
<circle cx="78.6" cy="98.3" r="2.52"/>
<circle cx="78.6" cy="104.8" r="2.41"/>
<circle cx="78.6" cy="111.3" r="2.3"/>
<circle cx="78.6" cy="117.8" r="2.22"/>
<circle cx="78.6" cy="124.4" r="2.16"/>
<circle cx="78.6" cy="130.9" r="2.13"/>
<circle cx="78.6" cy="137.4" r="2.13"/>
<circle cx="78.6" cy="143.9" r="2.15"/>
<circle cx="78.6" cy="150.4" r="2.2"/>
<circle cx="78.6" cy="157" r="2.28"/>
<circle cx="78.6" cy="163.5" r="2.39"/>
<circle cx="78.6" cy="170" r="2.5"/>
<circle cx="78.6" cy="176.5" r="2.58"/>
<circle cx="78.6" cy="183" r="2.66"/>
<circle cx="78.6" cy="189.6" r="2.75"/>
<circle cx="78.6" cy="196.1" r="2.84"/>
<circle cx="78.6" cy="202.6" r="2.96"/>
<circle cx="78.6" cy="209.1" r="3.12"/>
<circle cx="78.6" cy="215.6" r="3.45"/>
<circle cx="78.6" cy="222.2" r="4.7"/>
<circle cx="78.6" cy="228.7" r="4.7"/>
<circle cx="78.6" cy="235.2" r="4.7"/>
<circle cx="78.6" cy="241.7" r="4.7"/>
<circle cx="78.6" cy="248.2" r="4.7"/>
<circle cx="85.1" cy=".5" r="4.7"/>
<circle cx="85.1" cy="7" r="4.7"/>
<circle cx="85.1" cy="13.5" r="4.7"/>
<circle cx="85.1" cy="20.1" r="4.7"/>
<circle cx="85.1" cy="26.6" r="4.7"/>
<circle cx="85.1" cy="33.1" r="4.7"/>
<circle cx="85.1" cy="39.6" r="4.7"/>
<circle cx="85.1" cy="46.1" r="4.39"/>
<circle cx="85.1" cy="52.6" r="3.33"/>
<circle cx="85.1" cy="59.2" r="3.06"/>
<circle cx="85.1" cy="65.7" r="2.91"/>
<circle cx="85.1" cy="72.2" r="2.8"/>
<circle cx="85.1" cy="78.7" r="2.7"/>
<circle cx="85.1" cy="85.2" r="2.61"/>
<circle cx="85.1" cy="91.8" r="2.52"/>
<circle cx="85.1" cy="98.3" r="2.38"/>
<circle cx="85.1" cy="104.8" r="2.25"/>
<circle cx="85.1" cy="111.3" r="2.14"/>
<circle cx="85.1" cy="117.8" r="2.04"/>
<circle cx="85.1" cy="124.4" r="1.95"/>
<circle cx="85.1" cy="130.9" r="1.91"/>
<circle cx="85.1" cy="137.4" r="1.9"/>
<circle cx="85.1" cy="143.9" r="1.94"/>
<circle cx="85.1" cy="150.4" r="2.02"/>
<circle cx="85.1" cy="157" r="2.12"/>
<circle cx="85.1" cy="163.5" r="2.22"/>
<circle cx="85.1" cy="170" r="2.36"/>
<circle cx="85.1" cy="176.5" r="2.5"/>
<circle cx="85.1" cy="183" r="2.59"/>
<circle cx="85.1" cy="189.6" r="2.68"/>
<circle cx="85.1" cy="196.1" r="2.78"/>
<circle cx="85.1" cy="202.6" r="2.89"/>
<circle cx="85.1" cy="209.1" r="3.02"/>
<circle cx="85.1" cy="215.6" r="3.24"/>
<circle cx="85.1" cy="222.2" r="4.1"/>
<circle cx="85.1" cy="228.7" r="4.7"/>
<circle cx="85.1" cy="235.2" r="4.7"/>
<circle cx="85.1" cy="241.7" r="4.7"/>
<circle cx="85.1" cy="248.2" r="4.7"/>
<circle cx="91.7" cy=".5" r="4.7"/>
<circle cx="91.7" cy="7" r="4.7"/>
<circle cx="91.7" cy="13.5" r="4.7"/>
<circle cx="91.7" cy="20.1" r="4.7"/>
<circle cx="91.7" cy="26.6" r="4.7"/>
<circle cx="91.7" cy="33.1" r="4.7"/>
<circle cx="91.7" cy="39.6" r="4.7"/>
<circle cx="91.7" cy="46.1" r="3.85"/>
<circle cx="91.7" cy="52.6" r="3.18"/>
<circle cx="91.7" cy="59.2" r="2.98"/>
<circle cx="91.7" cy="65.7" r="2.85"/>
<circle cx="91.7" cy="72.2" r="2.74"/>
<circle cx="91.7" cy="78.7" r="2.64"/>
<circle cx="91.7" cy="85.2" r="2.55"/>
<circle cx="91.7" cy="91.8" r="2.41"/>
<circle cx="91.7" cy="98.3" r="2.25"/>
<circle cx="91.7" cy="104.8" r="2.11"/>
<circle cx="91.7" cy="111.3" r="1.96"/>
<circle cx="91.7" cy="117.8" r="1.82"/>
<circle cx="91.7" cy="124.4" r="1.72"/>
<circle cx="91.7" cy="130.9" r="1.66"/>
<circle cx="91.7" cy="137.4" r="1.65"/>
<circle cx="91.7" cy="143.9" r="1.7"/>
<circle cx="91.7" cy="150.4" r="1.8"/>
<circle cx="91.7" cy="157" r="1.93"/>
<circle cx="91.7" cy="163.5" r="2.08"/>
<circle cx="91.7" cy="170" r="2.22"/>
<circle cx="91.7" cy="176.5" r="2.38"/>
<circle cx="91.7" cy="183" r="2.53"/>
<circle cx="91.7" cy="189.6" r="2.62"/>
<circle cx="91.7" cy="196.1" r="2.72"/>
<circle cx="91.7" cy="202.6" r="2.83"/>
<circle cx="91.7" cy="209.1" r="2.96"/>
<circle cx="91.7" cy="215.6" r="3.14"/>
<circle cx="91.7" cy="222.2" r="3.55"/>
<circle cx="91.7" cy="228.7" r="4.7"/>
<circle cx="91.7" cy="235.2" r="4.7"/>
<circle cx="91.7" cy="241.7" r="4.7"/>
<circle cx="91.7" cy="248.2" r="4.7"/>
<circle cx="98.2" cy=".5" r="4.7"/>
<circle cx="98.2" cy="7" r="4.7"/>
<circle cx="98.2" cy="13.5" r="4.7"/>
<circle cx="98.2" cy="20.1" r="4.7"/>
<circle cx="98.2" cy="26.6" r="4.7"/>
<circle cx="98.2" cy="33.1" r="4.7"/>
<circle cx="98.2" cy="39.6" r="4.7"/>
<circle cx="98.2" cy="46.1" r="3.47"/>
<circle cx="98.2" cy="52.6" r="3.11"/>
<circle cx="98.2" cy="59.2" r="2.94"/>
<circle cx="98.2" cy="65.7" r="2.81"/>
<circle cx="98.2" cy="72.2" r="2.7"/>
<circle cx="98.2" cy="78.7" r="2.6"/>
<circle cx="98.2" cy="85.2" r="2.49"/>
<circle cx="98.2" cy="91.8" r="2.31"/>
<circle cx="98.2" cy="98.3" r="2.14"/>
<circle cx="98.2" cy="104.8" r="1.97"/>
<circle cx="98.2" cy="111.3" r="1.78"/>
<circle cx="98.2" cy="117.8" r="1.61"/>
<circle cx="98.2" cy="124.4" r="1.48"/>
<circle cx="98.2" cy="130.9" r="1.4"/>
<circle cx="98.2" cy="137.4" r="1.39"/>
<circle cx="98.2" cy="143.9" r="1.46"/>
<circle cx="98.2" cy="150.4" r="1.58"/>
<circle cx="98.2" cy="157" r="1.74"/>
<circle cx="98.2" cy="163.5" r="1.93"/>
<circle cx="98.2" cy="170" r="2.11"/>
<circle cx="98.2" cy="176.5" r="2.27"/>
<circle cx="98.2" cy="183" r="2.45"/>
<circle cx="98.2" cy="189.6" r="2.58"/>
<circle cx="98.2" cy="196.1" r="2.68"/>
<circle cx="98.2" cy="202.6" r="2.79"/>
<circle cx="98.2" cy="209.1" r="2.91"/>
<circle cx="98.2" cy="215.6" r="3.07"/>
<circle cx="98.2" cy="222.2" r="3.38"/>
<circle cx="98.2" cy="228.7" r="4.62"/>
<circle cx="98.2" cy="235.2" r="4.7"/>
<circle cx="98.2" cy="241.7" r="4.7"/>
<circle cx="98.2" cy="248.2" r="4.7"/>
<circle cx="104.7" cy=".5" r="4.7"/>
<circle cx="104.7" cy="7" r="4.7"/>
<circle cx="104.7" cy="13.5" r="4.7"/>
<circle cx="104.7" cy="20.1" r="4.7"/>
<circle cx="104.7" cy="26.6" r="4.7"/>
<circle cx="104.7" cy="33.1" r="4.7"/>
<circle cx="104.7" cy="39.6" r="4.61"/>
<circle cx="104.7" cy="46.1" r="3.36"/>
<circle cx="104.7" cy="52.6" r="3.06"/>
<circle cx="104.7" cy="59.2" r="2.9"/>
<circle cx="104.7" cy="65.7" r="2.78"/>
<circle cx="104.7" cy="72.2" r="2.67"/>
<circle cx="104.7" cy="78.7" r="2.56"/>
<circle cx="104.7" cy="85.2" r="2.41"/>
<circle cx="104.7" cy="91.8" r="2.22"/>
<circle cx="104.7" cy="98.3" r="2.05"/>
<circle cx="104.7" cy="104.8" r="1.83"/>
<circle cx="104.7" cy="111.3" r="1.61"/>
<circle cx="104.7" cy="117.8" r="1.41"/>
<circle cx="104.7" cy="124.4" r="1.23"/>
<circle cx="104.7" cy="130.9" r="1.1"/>
<circle cx="104.7" cy="137.4" r="1.08"/>
<circle cx="104.7" cy="143.9" r="1.19"/>
<circle cx="104.7" cy="150.4" r="1.37"/>
<circle cx="104.7" cy="157" r="1.57"/>
<circle cx="104.7" cy="163.5" r="1.78"/>
<circle cx="104.7" cy="170" r="2.01"/>
<circle cx="104.7" cy="176.5" r="2.19"/>
<circle cx="104.7" cy="183" r="2.37"/>
<circle cx="104.7" cy="189.6" r="2.54"/>
<circle cx="104.7" cy="196.1" r="2.64"/>
<circle cx="104.7" cy="202.6" r="2.75"/>
<circle cx="104.7" cy="209.1" r="2.87"/>
<circle cx="104.7" cy="215.6" r="3.02"/>
<circle cx="104.7" cy="222.2" r="3.27"/>
<circle cx="104.7" cy="228.7" r="4.3"/>
<circle cx="104.7" cy="235.2" r="4.7"/>
<circle cx="104.7" cy="241.7" r="4.7"/>
<circle cx="104.7" cy="248.2" r="4.7"/>
<circle cx="111.2" cy=".5" r="4.7"/>
<circle cx="111.2" cy="7" r="4.7"/>
<circle cx="111.2" cy="13.5" r="4.7"/>
<circle cx="111.2" cy="20.1" r="4.7"/>
<circle cx="111.2" cy="26.6" r="4.7"/>
<circle cx="111.2" cy="33.1" r="4.7"/>
<circle cx="111.2" cy="39.6" r="4.39"/>
<circle cx="111.2" cy="46.1" r="3.29"/>
<circle cx="111.2" cy="52.6" r="3.03"/>
<circle cx="111.2" cy="59.2" r="2.88"/>
<circle cx="111.2" cy="65.7" r="2.75"/>
<circle cx="111.2" cy="72.2" r="2.64"/>
<circle cx="111.2" cy="78.7" r="2.53"/>
<circle cx="111.2" cy="85.2" r="2.36"/>
<circle cx="111.2" cy="91.8" r="2.17"/>
<circle cx="111.2" cy="98.3" r="1.97"/>
<circle cx="111.2" cy="104.8" r="1.73"/>
<circle cx="111.2" cy="111.3" r="1.49"/>
<circle cx="111.2" cy="117.8" r="1.23"/>
<circle cx="111.2" cy="124.4" r=".97"/>
<circle cx="111.2" cy="130.9" r=".8"/>
<circle cx="111.2" cy="137.4" r=".78"/>
<circle cx="111.2" cy="143.9" r=".93"/>
<circle cx="111.2" cy="150.4" r="1.18"/>
<circle cx="111.2" cy="157" r="1.44"/>
<circle cx="111.2" cy="163.5" r="1.68"/>
<circle cx="111.2" cy="170" r="1.92"/>
<circle cx="111.2" cy="176.5" r="2.13"/>
<circle cx="111.2" cy="183" r="2.32"/>
<circle cx="111.2" cy="189.6" r="2.51"/>
<circle cx="111.2" cy="196.1" r="2.62"/>
<circle cx="111.2" cy="202.6" r="2.73"/>
<circle cx="111.2" cy="209.1" r="2.85"/>
<circle cx="111.2" cy="215.6" r="2.99"/>
<circle cx="111.2" cy="222.2" r="3.2"/>
<circle cx="111.2" cy="228.7" r="4.08"/>
<circle cx="111.2" cy="235.2" r="4.7"/>
<circle cx="111.2" cy="241.7" r="4.7"/>
<circle cx="111.2" cy="248.2" r="4.7"/>
<circle cx="117.8" cy=".5" r="4.7"/>
<circle cx="117.8" cy="7" r="4.7"/>
<circle cx="117.8" cy="13.5" r="4.7"/>
<circle cx="117.8" cy="20.1" r="4.7"/>
<circle cx="117.8" cy="26.6" r="4.7"/>
<circle cx="117.8" cy="33.1" r="4.7"/>
<circle cx="117.8" cy="39.6" r="4.28"/>
<circle cx="117.8" cy="46.1" r="3.26"/>
<circle cx="117.8" cy="52.6" r="3.01"/>
<circle cx="117.8" cy="59.2" r="2.87"/>
<circle cx="117.8" cy="65.7" r="2.74"/>
<circle cx="117.8" cy="72.2" r="2.63"/>
<circle cx="117.8" cy="78.7" r="2.52"/>
<circle cx="117.8" cy="85.2" r="2.33"/>
<circle cx="117.8" cy="91.8" r="2.14"/>
<circle cx="117.8" cy="98.3" r="1.92"/>
<circle cx="117.8" cy="104.8" r="1.67"/>
<circle cx="117.8" cy="111.3" r="1.41"/>
<circle cx="117.8" cy="117.8" r="1.11"/>
<circle cx="117.8" cy="124.4" r=".81"/>
<circle cx="117.8" cy="130.9" r=".54"/>
<circle cx="117.8" cy="137.4" r=".5"/>
<circle cx="117.8" cy="143.9" r=".75"/>
<circle cx="117.8" cy="150.4" r="1.05"/>
<circle cx="117.8" cy="157" r="1.36"/>
<circle cx="117.8" cy="163.5" r="1.62"/>
<circle cx="117.8" cy="170" r="1.87"/>
<circle cx="117.8" cy="176.5" r="2.1"/>
<circle cx="117.8" cy="183" r="2.29"/>
<circle cx="117.8" cy="189.6" r="2.5"/>
<circle cx="117.8" cy="196.1" r="2.61"/>
<circle cx="117.8" cy="202.6" r="2.72"/>
<circle cx="117.8" cy="209.1" r="2.84"/>
<circle cx="117.8" cy="215.6" r="2.98"/>
<circle cx="117.8" cy="222.2" r="3.18"/>
<circle cx="117.8" cy="228.7" r="3.97"/>
<circle cx="117.8" cy="235.2" r="4.7"/>
<circle cx="117.8" cy="241.7" r="4.7"/>
<circle cx="117.8" cy="248.2" r="4.7"/>
<circle cx="124.3" cy=".5" r="4.7"/>
<circle cx="124.3" cy="7" r="4.7"/>
<circle cx="124.3" cy="13.5" r="4.7"/>
<circle cx="124.3" cy="20.1" r="4.7"/>
<circle cx="124.3" cy="26.6" r="4.7"/>
<circle cx="124.3" cy="33.1" r="4.7"/>
<circle cx="124.3" cy="39.6" r="4.28"/>
<circle cx="124.3" cy="46.1" r="3.25"/>
<circle cx="124.3" cy="52.6" r="3.01"/>
<circle cx="124.3" cy="59.2" r="2.86"/>
<circle cx="124.3" cy="65.7" r="2.74"/>
<circle cx="124.3" cy="72.2" r="2.63"/>
<circle cx="124.3" cy="78.7" r="2.52"/>
<circle cx="124.3" cy="85.2" r="2.33"/>
<circle cx="124.3" cy="91.8" r="2.14"/>
<circle cx="124.3" cy="98.3" r="1.92"/>
<circle cx="124.3" cy="104.8" r="1.67"/>
<circle cx="124.3" cy="111.3" r="1.41"/>
<circle cx="124.3" cy="117.8" r="1.11"/>
<circle cx="124.3" cy="124.4" r=".8"/>
<circle cx="124.3" cy="130.9" r=".53"/>
<circle cx="124.3" cy="137.4" r=".49"/>
<circle cx="124.3" cy="143.9" r=".75"/>
<circle cx="124.3" cy="150.4" r="1.05"/>
<circle cx="124.3" cy="157" r="1.36"/>
<circle cx="124.3" cy="163.5" r="1.62"/>
<circle cx="124.3" cy="170" r="1.87"/>
<circle cx="124.3" cy="176.5" r="2.1"/>
<circle cx="124.3" cy="183" r="2.29"/>
<circle cx="124.3" cy="189.6" r="2.5"/>
<circle cx="124.3" cy="196.1" r="2.61"/>
<circle cx="124.3" cy="202.6" r="2.72"/>
<circle cx="124.3" cy="209.1" r="2.84"/>
<circle cx="124.3" cy="215.6" r="2.98"/>
<circle cx="124.3" cy="222.2" r="3.18"/>
<circle cx="124.3" cy="228.7" r="3.97"/>
<circle cx="124.3" cy="235.2" r="4.7"/>
<circle cx="124.3" cy="241.7" r="4.7"/>
<circle cx="124.3" cy="248.2" r="4.7"/>
<circle cx="130.8" cy=".5" r="4.7"/>
<circle cx="130.8" cy="7" r="4.7"/>
<circle cx="130.8" cy="13.5" r="4.7"/>
<circle cx="130.8" cy="20.1" r="4.7"/>
<circle cx="130.8" cy="26.6" r="4.7"/>
<circle cx="130.8" cy="33.1" r="4.7"/>
<circle cx="130.8" cy="39.6" r="4.38"/>
<circle cx="130.8" cy="46.1" r="3.29"/>
<circle cx="130.8" cy="52.6" r="3.02"/>
<circle cx="130.8" cy="59.2" r="2.88"/>
<circle cx="130.8" cy="65.7" r="2.75"/>
<circle cx="130.8" cy="72.2" r="2.64"/>
<circle cx="130.8" cy="78.7" r="2.53"/>
<circle cx="130.8" cy="85.2" r="2.36"/>
<circle cx="130.8" cy="91.8" r="2.17"/>
<circle cx="130.8" cy="98.3" r="1.96"/>
<circle cx="130.8" cy="104.8" r="1.72"/>
<circle cx="130.8" cy="111.3" r="1.48"/>
<circle cx="130.8" cy="117.8" r="1.22"/>
<circle cx="130.8" cy="124.4" r=".96"/>
<circle cx="130.8" cy="130.9" r=".78"/>
<circle cx="130.8" cy="137.4" r=".76"/>
<circle cx="130.8" cy="143.9" r=".91"/>
<circle cx="130.8" cy="150.4" r="1.17"/>
<circle cx="130.8" cy="157" r="1.43"/>
<circle cx="130.8" cy="163.5" r="1.68"/>
<circle cx="130.8" cy="170" r="1.92"/>
<circle cx="130.8" cy="176.5" r="2.13"/>
<circle cx="130.8" cy="183" r="2.32"/>
<circle cx="130.8" cy="189.6" r="2.51"/>
<circle cx="130.8" cy="196.1" r="2.62"/>
<circle cx="130.8" cy="202.6" r="2.73"/>
<circle cx="130.8" cy="209.1" r="2.85"/>
<circle cx="130.8" cy="215.6" r="2.99"/>
<circle cx="130.8" cy="222.2" r="3.2"/>
<circle cx="130.8" cy="228.7" r="4.07"/>
<circle cx="130.8" cy="235.2" r="4.7"/>
<circle cx="130.8" cy="241.7" r="4.7"/>
<circle cx="130.8" cy="248.2" r="4.7"/>
<circle cx="137.3" cy=".5" r="4.7"/>
<circle cx="137.3" cy="7" r="4.7"/>
<circle cx="137.3" cy="13.5" r="4.7"/>
<circle cx="137.3" cy="20.1" r="4.7"/>
<circle cx="137.3" cy="26.6" r="4.7"/>
<circle cx="137.3" cy="33.1" r="4.7"/>
<circle cx="137.3" cy="39.6" r="4.59"/>
<circle cx="137.3" cy="46.1" r="3.36"/>
<circle cx="137.3" cy="52.6" r="3.06"/>
<circle cx="137.3" cy="59.2" r="2.9"/>
<circle cx="137.3" cy="65.7" r="2.78"/>
<circle cx="137.3" cy="72.2" r="2.66"/>
<circle cx="137.3" cy="78.7" r="2.56"/>
<circle cx="137.3" cy="85.2" r="2.41"/>
<circle cx="137.3" cy="91.8" r="2.22"/>
<circle cx="137.3" cy="98.3" r="2.05"/>
<circle cx="137.3" cy="104.8" r="1.82"/>
<circle cx="137.3" cy="111.3" r="1.61"/>
<circle cx="137.3" cy="117.8" r="1.4"/>
<circle cx="137.3" cy="124.4" r="1.21"/>
<circle cx="137.3" cy="130.9" r="1.08"/>
<circle cx="137.3" cy="137.4" r="1.07"/>
<circle cx="137.3" cy="143.9" r="1.18"/>
<circle cx="137.3" cy="150.4" r="1.36"/>
<circle cx="137.3" cy="157" r="1.57"/>
<circle cx="137.3" cy="163.5" r="1.78"/>
<circle cx="137.3" cy="170" r="2"/>
<circle cx="137.3" cy="176.5" r="2.19"/>
<circle cx="137.3" cy="183" r="2.37"/>
<circle cx="137.3" cy="189.6" r="2.54"/>
<circle cx="137.3" cy="196.1" r="2.64"/>
<circle cx="137.3" cy="202.6" r="2.75"/>
<circle cx="137.3" cy="209.1" r="2.87"/>
<circle cx="137.3" cy="215.6" r="3.01"/>
<circle cx="137.3" cy="222.2" r="3.26"/>
<circle cx="137.3" cy="228.7" r="4.28"/>
<circle cx="137.3" cy="235.2" r="4.7"/>
<circle cx="137.3" cy="241.7" r="4.7"/>
<circle cx="137.3" cy="248.2" r="4.7"/>
<circle cx="143.8" cy=".5" r="4.7"/>
<circle cx="143.8" cy="7" r="4.7"/>
<circle cx="143.8" cy="13.5" r="4.7"/>
<circle cx="143.8" cy="20.1" r="4.7"/>
<circle cx="143.8" cy="26.6" r="4.7"/>
<circle cx="143.8" cy="33.1" r="4.7"/>
<circle cx="143.8" cy="39.6" r="4.7"/>
<circle cx="143.8" cy="46.1" r="3.46"/>
<circle cx="143.8" cy="52.6" r="3.11"/>
<circle cx="143.8" cy="59.2" r="2.93"/>
<circle cx="143.8" cy="65.7" r="2.81"/>
<circle cx="143.8" cy="72.2" r="2.7"/>
<circle cx="143.8" cy="78.7" r="2.59"/>
<circle cx="143.8" cy="85.2" r="2.48"/>
<circle cx="143.8" cy="91.8" r="2.3"/>
<circle cx="143.8" cy="98.3" r="2.13"/>
<circle cx="143.8" cy="104.8" r="1.96"/>
<circle cx="143.8" cy="111.3" r="1.77"/>
<circle cx="143.8" cy="117.8" r="1.6"/>
<circle cx="143.8" cy="124.4" r="1.46"/>
<circle cx="143.8" cy="130.9" r="1.38"/>
<circle cx="143.8" cy="137.4" r="1.37"/>
<circle cx="143.8" cy="143.9" r="1.44"/>
<circle cx="143.8" cy="150.4" r="1.57"/>
<circle cx="143.8" cy="157" r="1.73"/>
<circle cx="143.8" cy="163.5" r="1.92"/>
<circle cx="143.8" cy="170" r="2.1"/>
<circle cx="143.8" cy="176.5" r="2.26"/>
<circle cx="143.8" cy="183" r="2.45"/>
<circle cx="143.8" cy="189.6" r="2.57"/>
<circle cx="143.8" cy="196.1" r="2.68"/>
<circle cx="143.8" cy="202.6" r="2.78"/>
<circle cx="143.8" cy="209.1" r="2.91"/>
<circle cx="143.8" cy="215.6" r="3.07"/>
<circle cx="143.8" cy="222.2" r="3.37"/>
<circle cx="143.8" cy="228.7" r="4.6"/>
<circle cx="143.8" cy="235.2" r="4.7"/>
<circle cx="143.8" cy="241.7" r="4.7"/>
<circle cx="143.8" cy="248.2" r="4.7"/>
<circle cx="150.3" cy=".5" r="4.7"/>
<circle cx="150.3" cy="7" r="4.7"/>
<circle cx="150.3" cy="13.5" r="4.7"/>
<circle cx="150.3" cy="20.1" r="4.7"/>
<circle cx="150.3" cy="26.6" r="4.7"/>
<circle cx="150.3" cy="33.1" r="4.7"/>
<circle cx="150.3" cy="39.6" r="4.7"/>
<circle cx="150.3" cy="46.1" r="3.82"/>
<circle cx="150.3" cy="52.6" r="3.17"/>
<circle cx="150.3" cy="59.2" r="2.98"/>
<circle cx="150.3" cy="65.7" r="2.85"/>
<circle cx="150.3" cy="72.2" r="2.74"/>
<circle cx="150.3" cy="78.7" r="2.64"/>
<circle cx="150.3" cy="85.2" r="2.54"/>
<circle cx="150.3" cy="91.8" r="2.41"/>
<circle cx="150.3" cy="98.3" r="2.24"/>
<circle cx="150.3" cy="104.8" r="2.1"/>
<circle cx="150.3" cy="111.3" r="1.95"/>
<circle cx="150.3" cy="117.8" r="1.81"/>
<circle cx="150.3" cy="124.4" r="1.7"/>
<circle cx="150.3" cy="130.9" r="1.64"/>
<circle cx="150.3" cy="137.4" r="1.64"/>
<circle cx="150.3" cy="143.9" r="1.69"/>
<circle cx="150.3" cy="150.4" r="1.78"/>
<circle cx="150.3" cy="157" r="1.92"/>
<circle cx="150.3" cy="163.5" r="2.08"/>
<circle cx="150.3" cy="170" r="2.21"/>
<circle cx="150.3" cy="176.5" r="2.37"/>
<circle cx="150.3" cy="183" r="2.52"/>
<circle cx="150.3" cy="189.6" r="2.62"/>
<circle cx="150.3" cy="196.1" r="2.72"/>
<circle cx="150.3" cy="202.6" r="2.83"/>
<circle cx="150.3" cy="209.1" r="2.95"/>
<circle cx="150.3" cy="215.6" r="3.13"/>
<circle cx="150.3" cy="222.2" r="3.53"/>
<circle cx="150.3" cy="228.7" r="4.7"/>
<circle cx="150.3" cy="235.2" r="4.7"/>
<circle cx="150.3" cy="241.7" r="4.7"/>
<circle cx="150.3" cy="248.2" r="4.7"/>
<circle cx="156.9" cy=".5" r="4.7"/>
<circle cx="156.9" cy="7" r="4.7"/>
<circle cx="156.9" cy="13.5" r="4.7"/>
<circle cx="156.9" cy="20.1" r="4.7"/>
<circle cx="156.9" cy="26.6" r="4.7"/>
<circle cx="156.9" cy="33.1" r="4.7"/>
<circle cx="156.9" cy="39.6" r="4.7"/>
<circle cx="156.9" cy="46.1" r="4.36"/>
<circle cx="156.9" cy="52.6" r="3.32"/>
<circle cx="156.9" cy="59.2" r="3.05"/>
<circle cx="156.9" cy="65.7" r="2.91"/>
<circle cx="156.9" cy="72.2" r="2.8"/>
<circle cx="156.9" cy="78.7" r="2.69"/>
<circle cx="156.9" cy="85.2" r="2.6"/>
<circle cx="156.9" cy="91.8" r="2.52"/>
<circle cx="156.9" cy="98.3" r="2.38"/>
<circle cx="156.9" cy="104.8" r="2.24"/>
<circle cx="156.9" cy="111.3" r="2.13"/>
<circle cx="156.9" cy="117.8" r="2.03"/>
<circle cx="156.9" cy="124.4" r="1.94"/>
<circle cx="156.9" cy="130.9" r="1.89"/>
<circle cx="156.9" cy="137.4" r="1.89"/>
<circle cx="156.9" cy="143.9" r="1.93"/>
<circle cx="156.9" cy="150.4" r="2.01"/>
<circle cx="156.9" cy="157" r="2.11"/>
<circle cx="156.9" cy="163.5" r="2.22"/>
<circle cx="156.9" cy="170" r="2.35"/>
<circle cx="156.9" cy="176.5" r="2.5"/>
<circle cx="156.9" cy="183" r="2.59"/>
<circle cx="156.9" cy="189.6" r="2.68"/>
<circle cx="156.9" cy="196.1" r="2.77"/>
<circle cx="156.9" cy="202.6" r="2.88"/>
<circle cx="156.9" cy="209.1" r="3.01"/>
<circle cx="156.9" cy="215.6" r="3.23"/>
<circle cx="156.9" cy="222.2" r="4.07"/>
<circle cx="156.9" cy="228.7" r="4.7"/>
<circle cx="156.9" cy="235.2" r="4.7"/>
<circle cx="156.9" cy="241.7" r="4.7"/>
<circle cx="156.9" cy="248.2" r="4.7"/>
<circle cx="163.4" cy=".5" r="4.7"/>
<circle cx="163.4" cy="7" r="4.7"/>
<circle cx="163.4" cy="13.5" r="4.7"/>
<circle cx="163.4" cy="20.1" r="4.7"/>
<circle cx="163.4" cy="26.6" r="4.7"/>
<circle cx="163.4" cy="33.1" r="4.7"/>
<circle cx="163.4" cy="39.6" r="4.7"/>
<circle cx="163.4" cy="46.1" r="4.7"/>
<circle cx="163.4" cy="52.6" r="3.58"/>
<circle cx="163.4" cy="59.2" r="3.15"/>
<circle cx="163.4" cy="65.7" r="2.98"/>
<circle cx="163.4" cy="72.2" r="2.86"/>
<circle cx="163.4" cy="78.7" r="2.76"/>
<circle cx="163.4" cy="85.2" r="2.67"/>
<circle cx="163.4" cy="91.8" r="2.59"/>
<circle cx="163.4" cy="98.3" r="2.51"/>
<circle cx="163.4" cy="104.8" r="2.4"/>
<circle cx="163.4" cy="111.3" r="2.29"/>
<circle cx="163.4" cy="117.8" r="2.21"/>
<circle cx="163.4" cy="124.4" r="2.15"/>
<circle cx="163.4" cy="130.9" r="2.12"/>
<circle cx="163.4" cy="137.4" r="2.11"/>
<circle cx="163.4" cy="143.9" r="2.14"/>
<circle cx="163.4" cy="150.4" r="2.19"/>
<circle cx="163.4" cy="157" r="2.27"/>
<circle cx="163.4" cy="163.5" r="2.38"/>
<circle cx="163.4" cy="170" r="2.5"/>
<circle cx="163.4" cy="176.5" r="2.57"/>
<circle cx="163.4" cy="183" r="2.65"/>
<circle cx="163.4" cy="189.6" r="2.74"/>
<circle cx="163.4" cy="196.1" r="2.84"/>
<circle cx="163.4" cy="202.6" r="2.95"/>
<circle cx="163.4" cy="209.1" r="3.12"/>
<circle cx="163.4" cy="215.6" r="3.44"/>
<circle cx="163.4" cy="222.2" r="4.7"/>
<circle cx="163.4" cy="228.7" r="4.7"/>
<circle cx="163.4" cy="235.2" r="4.7"/>
<circle cx="163.4" cy="241.7" r="4.7"/>
<circle cx="163.4" cy="248.2" r="4.7"/>
<circle cx="169.9" cy=".5" r="4.7"/>
<circle cx="169.9" cy="7" r="4.7"/>
<circle cx="169.9" cy="13.5" r="4.7"/>
<circle cx="169.9" cy="20.1" r="4.7"/>
<circle cx="169.9" cy="26.6" r="4.7"/>
<circle cx="169.9" cy="33.1" r="4.7"/>
<circle cx="169.9" cy="39.6" r="4.7"/>
<circle cx="169.9" cy="46.1" r="4.7"/>
<circle cx="169.9" cy="52.6" r="4.34"/>
<circle cx="169.9" cy="59.2" r="3.35"/>
<circle cx="169.9" cy="65.7" r="3.09"/>
<circle cx="169.9" cy="72.2" r="2.94"/>
<circle cx="169.9" cy="78.7" r="2.84"/>
<circle cx="169.9" cy="85.2" r="2.75"/>
<circle cx="169.9" cy="91.8" r="2.67"/>
<circle cx="169.9" cy="98.3" r="2.6"/>
<circle cx="169.9" cy="104.8" r="2.54"/>
<circle cx="169.9" cy="111.3" r="2.47"/>
<circle cx="169.9" cy="117.8" r="2.39"/>
<circle cx="169.9" cy="124.4" r="2.34"/>
<circle cx="169.9" cy="130.9" r="2.31"/>
<circle cx="169.9" cy="137.4" r="2.31"/>
<circle cx="169.9" cy="143.9" r="2.33"/>
<circle cx="169.9" cy="150.4" r="2.38"/>
<circle cx="169.9" cy="157" r="2.45"/>
<circle cx="169.9" cy="163.5" r="2.53"/>
<circle cx="169.9" cy="170" r="2.59"/>
<circle cx="169.9" cy="176.5" r="2.66"/>
<circle cx="169.9" cy="183" r="2.73"/>
<circle cx="169.9" cy="189.6" r="2.82"/>
<circle cx="169.9" cy="196.1" r="2.92"/>
<circle cx="169.9" cy="202.6" r="3.05"/>
<circle cx="169.9" cy="209.1" r="3.27"/>
<circle cx="169.9" cy="215.6" r="4.07"/>
<circle cx="169.9" cy="222.2" r="4.7"/>
<circle cx="169.9" cy="228.7" r="4.7"/>
<circle cx="169.9" cy="235.2" r="4.7"/>
<circle cx="169.9" cy="241.7" r="4.7"/>
<circle cx="169.9" cy="248.2" r="4.7"/>
<circle cx="176.4" cy=".5" r="4.7"/>
<circle cx="176.4" cy="7" r="4.7"/>
<circle cx="176.4" cy="13.5" r="4.7"/>
<circle cx="176.4" cy="20.1" r="4.7"/>
<circle cx="176.4" cy="26.6" r="4.7"/>
<circle cx="176.4" cy="33.1" r="4.7"/>
<circle cx="176.4" cy="39.6" r="4.7"/>
<circle cx="176.4" cy="46.1" r="4.7"/>
<circle cx="176.4" cy="52.6" r="4.7"/>
<circle cx="176.4" cy="59.2" r="3.9"/>
<circle cx="176.4" cy="65.7" r="3.24"/>
<circle cx="176.4" cy="72.2" r="3.05"/>
<circle cx="176.4" cy="78.7" r="2.93"/>
<circle cx="176.4" cy="85.2" r="2.84"/>
<circle cx="176.4" cy="91.8" r="2.76"/>
<circle cx="176.4" cy="98.3" r="2.69"/>
<circle cx="176.4" cy="104.8" r="2.63"/>
<circle cx="176.4" cy="111.3" r="2.59"/>
<circle cx="176.4" cy="117.8" r="2.55"/>
<circle cx="176.4" cy="124.4" r="2.52"/>
<circle cx="176.4" cy="130.9" r="2.51"/>
<circle cx="176.4" cy="137.4" r="2.5"/>
<circle cx="176.4" cy="143.9" r="2.52"/>
<circle cx="176.4" cy="150.4" r="2.54"/>
<circle cx="176.4" cy="157" r="2.58"/>
<circle cx="176.4" cy="163.5" r="2.62"/>
<circle cx="176.4" cy="170" r="2.68"/>
<circle cx="176.4" cy="176.5" r="2.74"/>
<circle cx="176.4" cy="183" r="2.82"/>
<circle cx="176.4" cy="189.6" r="2.91"/>
<circle cx="176.4" cy="196.1" r="3.02"/>
<circle cx="176.4" cy="202.6" r="3.18"/>
<circle cx="176.4" cy="209.1" r="3.64"/>
<circle cx="176.4" cy="215.6" r="4.7"/>
<circle cx="176.4" cy="222.2" r="4.7"/>
<circle cx="176.4" cy="228.7" r="4.7"/>
<circle cx="176.4" cy="235.2" r="4.7"/>
<circle cx="176.4" cy="241.7" r="4.7"/>
<circle cx="176.4" cy="248.2" r="4.7"/>
<circle cx="182.9" cy=".5" r="4.7"/>
<circle cx="182.9" cy="7" r="4.7"/>
<circle cx="182.9" cy="13.5" r="4.7"/>
<circle cx="182.9" cy="20.1" r="4.7"/>
<circle cx="182.9" cy="26.6" r="4.7"/>
<circle cx="182.9" cy="33.1" r="4.7"/>
<circle cx="182.9" cy="39.6" r="4.7"/>
<circle cx="182.9" cy="46.1" r="4.7"/>
<circle cx="182.9" cy="52.6" r="4.7"/>
<circle cx="182.9" cy="59.2" r="4.7"/>
<circle cx="182.9" cy="65.7" r="3.66"/>
<circle cx="182.9" cy="72.2" r="3.2"/>
<circle cx="182.9" cy="78.7" r="3.05"/>
<circle cx="182.9" cy="85.2" r="2.94"/>
<circle cx="182.9" cy="91.8" r="2.86"/>
<circle cx="182.9" cy="98.3" r="2.79"/>
<circle cx="182.9" cy="104.8" r="2.73"/>
<circle cx="182.9" cy="111.3" r="2.69"/>
<circle cx="182.9" cy="117.8" r="2.65"/>
<circle cx="182.9" cy="124.4" r="2.63"/>
<circle cx="182.9" cy="130.9" r="2.62"/>
<circle cx="182.9" cy="137.4" r="2.62"/>
<circle cx="182.9" cy="143.9" r="2.63"/>
<circle cx="182.9" cy="150.4" r="2.65"/>
<circle cx="182.9" cy="157" r="2.68"/>
<circle cx="182.9" cy="163.5" r="2.72"/>
<circle cx="182.9" cy="170" r="2.78"/>
<circle cx="182.9" cy="176.5" r="2.84"/>
<circle cx="182.9" cy="183" r="2.92"/>
<circle cx="182.9" cy="189.6" r="3.02"/>
<circle cx="182.9" cy="196.1" r="3.17"/>
<circle cx="182.9" cy="202.6" r="3.48"/>
<circle cx="182.9" cy="209.1" r="4.61"/>
<circle cx="182.9" cy="215.6" r="4.7"/>
<circle cx="182.9" cy="222.2" r="4.7"/>
<circle cx="182.9" cy="228.7" r="4.7"/>
<circle cx="182.9" cy="235.2" r="4.7"/>
<circle cx="182.9" cy="241.7" r="4.7"/>
<circle cx="182.9" cy="248.2" r="4.7"/>
<circle cx="189.5" cy=".5" r="4.7"/>
<circle cx="189.5" cy="7" r="4.7"/>
<circle cx="189.5" cy="13.5" r="4.7"/>
<circle cx="189.5" cy="20.1" r="4.7"/>
<circle cx="189.5" cy="26.6" r="4.7"/>
<circle cx="189.5" cy="33.1" r="4.7"/>
<circle cx="189.5" cy="39.6" r="4.7"/>
<circle cx="189.5" cy="46.1" r="4.7"/>
<circle cx="189.5" cy="52.6" r="4.7"/>
<circle cx="189.5" cy="59.2" r="4.7"/>
<circle cx="189.5" cy="65.7" r="4.7"/>
<circle cx="189.5" cy="72.2" r="3.65"/>
<circle cx="189.5" cy="78.7" r="3.23"/>
<circle cx="189.5" cy="85.2" r="3.08"/>
<circle cx="189.5" cy="91.8" r="2.97"/>
<circle cx="189.5" cy="98.3" r="2.9"/>
<circle cx="189.5" cy="104.8" r="2.84"/>
<circle cx="189.5" cy="111.3" r="2.8"/>
<circle cx="189.5" cy="117.8" r="2.76"/>
<circle cx="189.5" cy="124.4" r="2.74"/>
<circle cx="189.5" cy="130.9" r="2.73"/>
<circle cx="189.5" cy="137.4" r="2.73"/>
<circle cx="189.5" cy="143.9" r="2.74"/>
<circle cx="189.5" cy="150.4" r="2.76"/>
<circle cx="189.5" cy="157" r="2.79"/>
<circle cx="189.5" cy="163.5" r="2.83"/>
<circle cx="189.5" cy="170" r="2.89"/>
<circle cx="189.5" cy="176.5" r="2.96"/>
<circle cx="189.5" cy="183" r="3.05"/>
<circle cx="189.5" cy="189.6" r="3.18"/>
<circle cx="189.5" cy="196.1" r="3.48"/>
<circle cx="189.5" cy="202.6" r="4.51"/>
<circle cx="189.5" cy="209.1" r="4.7"/>
<circle cx="189.5" cy="215.6" r="4.7"/>
<circle cx="189.5" cy="222.2" r="4.7"/>
<circle cx="189.5" cy="228.7" r="4.7"/>
<circle cx="189.5" cy="235.2" r="4.7"/>
<circle cx="189.5" cy="241.7" r="4.7"/>
<circle cx="189.5" cy="248.2" r="4.7"/>
<circle cx="196" cy=".5" r="4.7"/>
<circle cx="196" cy="7" r="4.7"/>
<circle cx="196" cy="13.5" r="4.7"/>
<circle cx="196" cy="20.1" r="4.7"/>
<circle cx="196" cy="26.6" r="4.7"/>
<circle cx="196" cy="33.1" r="4.7"/>
<circle cx="196" cy="39.6" r="4.7"/>
<circle cx="196" cy="46.1" r="4.7"/>
<circle cx="196" cy="52.6" r="4.7"/>
<circle cx="196" cy="59.2" r="4.7"/>
<circle cx="196" cy="65.7" r="4.7"/>
<circle cx="196" cy="72.2" r="4.7"/>
<circle cx="196" cy="78.7" r="3.85"/>
<circle cx="196" cy="85.2" r="3.33"/>
<circle cx="196" cy="91.8" r="3.14"/>
<circle cx="196" cy="98.3" r="3.04"/>
<circle cx="196" cy="104.8" r="2.97"/>
<circle cx="196" cy="111.3" r="2.92"/>
<circle cx="196" cy="117.8" r="2.89"/>
<circle cx="196" cy="124.4" r="2.86"/>
<circle cx="196" cy="130.9" r="2.85"/>
<circle cx="196" cy="137.4" r="2.85"/>
<circle cx="196" cy="143.9" r="2.86"/>
<circle cx="196" cy="150.4" r="2.88"/>
<circle cx="196" cy="157" r="2.91"/>
<circle cx="196" cy="163.5" r="2.96"/>
<circle cx="196" cy="170" r="3.02"/>
<circle cx="196" cy="176.5" r="3.12"/>
<circle cx="196" cy="183" r="3.28"/>
<circle cx="196" cy="189.6" r="3.67"/>
<circle cx="196" cy="196.1" r="4.63"/>
<circle cx="196" cy="202.6" r="4.7"/>
<circle cx="196" cy="209.1" r="4.7"/>
<circle cx="196" cy="215.6" r="4.7"/>
<circle cx="196" cy="222.2" r="4.7"/>
<circle cx="196" cy="228.7" r="4.7"/>
<circle cx="196" cy="235.2" r="4.7"/>
<circle cx="196" cy="241.7" r="4.7"/>
<circle cx="196" cy="248.2" r="4.7"/>
<circle cx="202.5" cy=".5" r="4.7"/>
<circle cx="202.5" cy="7" r="4.7"/>
<circle cx="202.5" cy="13.5" r="4.7"/>
<circle cx="202.5" cy="20.1" r="4.7"/>
<circle cx="202.5" cy="26.6" r="4.7"/>
<circle cx="202.5" cy="33.1" r="4.7"/>
<circle cx="202.5" cy="39.6" r="4.7"/>
<circle cx="202.5" cy="46.1" r="4.7"/>
<circle cx="202.5" cy="52.6" r="4.7"/>
<circle cx="202.5" cy="59.2" r="4.7"/>
<circle cx="202.5" cy="65.7" r="4.7"/>
<circle cx="202.5" cy="72.2" r="4.7"/>
<circle cx="202.5" cy="78.7" r="4.7"/>
<circle cx="202.5" cy="85.2" r="4.27"/>
<circle cx="202.5" cy="91.8" r="3.5"/>
<circle cx="202.5" cy="98.3" r="3.28"/>
<circle cx="202.5" cy="104.8" r="3.16"/>
<circle cx="202.5" cy="111.3" r="3.09"/>
<circle cx="202.5" cy="117.8" r="3.04"/>
<circle cx="202.5" cy="124.4" r="3"/>
<circle cx="202.5" cy="130.9" r="2.99"/>
<circle cx="202.5" cy="137.4" r="2.99"/>
<circle cx="202.5" cy="143.9" r="3"/>
<circle cx="202.5" cy="150.4" r="3.03"/>
<circle cx="202.5" cy="157" r="3.08"/>
<circle cx="202.5" cy="163.5" r="3.14"/>
<circle cx="202.5" cy="170" r="3.25"/>
<circle cx="202.5" cy="176.5" r="3.45"/>
<circle cx="202.5" cy="183" r="4.11"/>
<circle cx="202.5" cy="189.6" r="4.7"/>
<circle cx="202.5" cy="196.1" r="4.7"/>
<circle cx="202.5" cy="202.6" r="4.7"/>
<circle cx="202.5" cy="209.1" r="4.7"/>
<circle cx="202.5" cy="215.6" r="4.7"/>
<circle cx="202.5" cy="222.2" r="4.7"/>
<circle cx="202.5" cy="228.7" r="4.7"/>
<circle cx="202.5" cy="235.2" r="4.7"/>
<circle cx="202.5" cy="241.7" r="4.7"/>
<circle cx="202.5" cy="248.2" r="4.7"/>
<circle cx="209" cy=".5" r="4.7"/>
<circle cx="209" cy="7" r="4.7"/>
<circle cx="209" cy="13.5" r="4.7"/>
<circle cx="209" cy="20.1" r="4.7"/>
<circle cx="209" cy="26.6" r="4.7"/>
<circle cx="209" cy="33.1" r="4.7"/>
<circle cx="209" cy="39.6" r="4.7"/>
<circle cx="209" cy="46.1" r="4.7"/>
<circle cx="209" cy="52.6" r="4.7"/>
<circle cx="209" cy="59.2" r="4.7"/>
<circle cx="209" cy="65.7" r="4.7"/>
<circle cx="209" cy="72.2" r="4.7"/>
<circle cx="209" cy="78.7" r="4.7"/>
<circle cx="209" cy="85.2" r="4.7"/>
<circle cx="209" cy="91.8" r="4.7"/>
<circle cx="209" cy="98.3" r="4.25"/>
<circle cx="209" cy="104.8" r="3.69"/>
<circle cx="209" cy="111.3" r="3.42"/>
<circle cx="209" cy="117.8" r="3.31"/>
<circle cx="209" cy="124.4" r="3.23"/>
<circle cx="209" cy="130.9" r="3.2"/>
<circle cx="209" cy="137.4" r="3.2"/>
<circle cx="209" cy="143.9" r="3.22"/>
<circle cx="209" cy="150.4" r="3.29"/>
<circle cx="209" cy="157" r="3.39"/>
<circle cx="209" cy="163.5" r="3.6"/>
<circle cx="209" cy="170" r="4.13"/>
<circle cx="209" cy="176.5" r="4.7"/>
<circle cx="209" cy="183" r="4.7"/>
<circle cx="209" cy="189.6" r="4.7"/>
<circle cx="209" cy="196.1" r="4.7"/>
<circle cx="209" cy="202.6" r="4.7"/>
<circle cx="209" cy="209.1" r="4.7"/>
<circle cx="209" cy="215.6" r="4.7"/>
<circle cx="209" cy="222.2" r="4.7"/>
<circle cx="209" cy="228.7" r="4.7"/>
<circle cx="209" cy="235.2" r="4.7"/>
<circle cx="209" cy="241.7" r="4.7"/>
<circle cx="209" cy="248.2" r="4.7"/>
<circle cx="215.6" cy=".5" r="4.7"/>
<circle cx="215.6" cy="7" r="4.7"/>
<circle cx="215.6" cy="13.5" r="4.7"/>
<circle cx="215.6" cy="20.1" r="4.7"/>
<circle cx="215.6" cy="26.6" r="4.7"/>
<circle cx="215.6" cy="33.1" r="4.7"/>
<circle cx="215.6" cy="39.6" r="4.7"/>
<circle cx="215.6" cy="46.1" r="4.7"/>
<circle cx="215.6" cy="52.6" r="4.7"/>
<circle cx="215.6" cy="59.2" r="4.7"/>
<circle cx="215.6" cy="65.7" r="4.7"/>
<circle cx="215.6" cy="72.2" r="4.7"/>
<circle cx="215.6" cy="78.7" r="4.7"/>
<circle cx="215.6" cy="85.2" r="4.7"/>
<circle cx="215.6" cy="91.8" r="4.7"/>
<circle cx="215.6" cy="98.3" r="4.7"/>
<circle cx="215.6" cy="104.8" r="4.7"/>
<circle cx="215.6" cy="111.3" r="4.7"/>
<circle cx="215.6" cy="117.8" r="4.43"/>
<circle cx="215.6" cy="124.4" r="4.2"/>
<circle cx="215.6" cy="130.9" r="4.08"/>
<circle cx="215.6" cy="137.4" r="4.07"/>
<circle cx="215.6" cy="143.9" r="4.17"/>
<circle cx="215.6" cy="150.4" r="4.37"/>
<circle cx="215.6" cy="157" r="4.68"/>
<circle cx="215.6" cy="163.5" r="4.7"/>
<circle cx="215.6" cy="170" r="4.7"/>
<circle cx="215.6" cy="176.5" r="4.7"/>
<circle cx="215.6" cy="183" r="4.7"/>
<circle cx="215.6" cy="189.6" r="4.7"/>
<circle cx="215.6" cy="196.1" r="4.7"/>
<circle cx="215.6" cy="202.6" r="4.7"/>
<circle cx="215.6" cy="209.1" r="4.7"/>
<circle cx="215.6" cy="215.6" r="4.7"/>
<circle cx="215.6" cy="222.2" r="4.7"/>
<circle cx="215.6" cy="228.7" r="4.7"/>
<circle cx="215.6" cy="235.2" r="4.7"/>
<circle cx="215.6" cy="241.7" r="4.7"/>
<circle cx="215.6" cy="248.2" r="4.7"/>
<circle cx="222.1" cy=".5" r="4.7"/>
<circle cx="222.1" cy="7" r="4.7"/>
<circle cx="222.1" cy="13.5" r="4.7"/>
<circle cx="222.1" cy="20.1" r="4.7"/>
<circle cx="222.1" cy="26.6" r="4.7"/>
<circle cx="222.1" cy="33.1" r="4.7"/>
<circle cx="222.1" cy="39.6" r="4.7"/>
<circle cx="222.1" cy="46.1" r="4.7"/>
<circle cx="222.1" cy="52.6" r="4.7"/>
<circle cx="222.1" cy="59.2" r="4.7"/>
<circle cx="222.1" cy="65.7" r="4.7"/>
<circle cx="222.1" cy="72.2" r="4.7"/>
<circle cx="222.1" cy="78.7" r="4.7"/>
<circle cx="222.1" cy="85.2" r="4.7"/>
<circle cx="222.1" cy="91.8" r="4.7"/>
<circle cx="222.1" cy="98.3" r="4.7"/>
<circle cx="222.1" cy="104.8" r="4.7"/>
<circle cx="222.1" cy="111.3" r="4.7"/>
<circle cx="222.1" cy="117.8" r="4.7"/>
<circle cx="222.1" cy="124.4" r="4.7"/>
<circle cx="222.1" cy="130.9" r="4.7"/>
<circle cx="222.1" cy="137.4" r="4.7"/>
<circle cx="222.1" cy="143.9" r="4.7"/>
<circle cx="222.1" cy="150.4" r="4.7"/>
<circle cx="222.1" cy="157" r="4.7"/>
<circle cx="222.1" cy="163.5" r="4.7"/>
<circle cx="222.1" cy="170" r="4.7"/>
<circle cx="222.1" cy="176.5" r="4.7"/>
<circle cx="222.1" cy="183" r="4.7"/>
<circle cx="222.1" cy="189.6" r="4.7"/>
<circle cx="222.1" cy="196.1" r="4.7"/>
<circle cx="222.1" cy="202.6" r="4.7"/>
<circle cx="222.1" cy="209.1" r="4.7"/>
<circle cx="222.1" cy="215.6" r="4.7"/>
<circle cx="222.1" cy="222.2" r="4.7"/>
<circle cx="222.1" cy="228.7" r="4.7"/>
<circle cx="222.1" cy="235.2" r="4.7"/>
<circle cx="222.1" cy="241.7" r="4.7"/>
<circle cx="222.1" cy="248.2" r="4.7"/>
<circle cx="228.6" cy=".5" r="4.7"/>
<circle cx="228.6" cy="7" r="4.7"/>
<circle cx="228.6" cy="13.5" r="4.7"/>
<circle cx="228.6" cy="20.1" r="4.7"/>
<circle cx="228.6" cy="26.6" r="4.7"/>
<circle cx="228.6" cy="33.1" r="4.7"/>
<circle cx="228.6" cy="39.6" r="4.7"/>
<circle cx="228.6" cy="46.1" r="4.7"/>
<circle cx="228.6" cy="52.6" r="4.7"/>
<circle cx="228.6" cy="59.2" r="4.7"/>
<circle cx="228.6" cy="65.7" r="4.7"/>
<circle cx="228.6" cy="72.2" r="4.7"/>
<circle cx="228.6" cy="78.7" r="4.7"/>
<circle cx="228.6" cy="85.2" r="4.7"/>
<circle cx="228.6" cy="91.8" r="4.7"/>
<circle cx="228.6" cy="98.3" r="4.7"/>
<circle cx="228.6" cy="104.8" r="4.7"/>
<circle cx="228.6" cy="111.3" r="4.7"/>
<circle cx="228.6" cy="117.8" r="4.7"/>
<circle cx="228.6" cy="124.4" r="4.7"/>
<circle cx="228.6" cy="130.9" r="4.7"/>
<circle cx="228.6" cy="137.4" r="4.7"/>
<circle cx="228.6" cy="143.9" r="4.7"/>
<circle cx="228.6" cy="150.4" r="4.7"/>
<circle cx="228.6" cy="157" r="4.7"/>
<circle cx="228.6" cy="163.5" r="4.7"/>
<circle cx="228.6" cy="170" r="4.7"/>
<circle cx="228.6" cy="176.5" r="4.7"/>
<circle cx="228.6" cy="183" r="4.7"/>
<circle cx="228.6" cy="189.6" r="4.7"/>
<circle cx="228.6" cy="196.1" r="4.7"/>
<circle cx="228.6" cy="202.6" r="4.7"/>
<circle cx="228.6" cy="209.1" r="4.7"/>
<circle cx="228.6" cy="215.6" r="4.7"/>
<circle cx="228.6" cy="222.2" r="4.7"/>
<circle cx="228.6" cy="228.7" r="4.7"/>
<circle cx="228.6" cy="235.2" r="4.7"/>
<circle cx="228.6" cy="241.7" r="4.7"/>
<circle cx="228.6" cy="248.2" r="4.7"/>
<circle cx="235.1" cy=".5" r="4.7"/>
<circle cx="235.1" cy="7" r="4.7"/>
<circle cx="235.1" cy="13.5" r="4.7"/>
<circle cx="235.1" cy="20.1" r="4.7"/>
<circle cx="235.1" cy="26.6" r="4.7"/>
<circle cx="235.1" cy="33.1" r="4.7"/>
<circle cx="235.1" cy="39.6" r="4.7"/>
<circle cx="235.1" cy="46.1" r="4.7"/>
<circle cx="235.1" cy="52.6" r="4.7"/>
<circle cx="235.1" cy="59.2" r="4.7"/>
<circle cx="235.1" cy="65.7" r="4.7"/>
<circle cx="235.1" cy="72.2" r="4.7"/>
<circle cx="235.1" cy="78.7" r="4.7"/>
<circle cx="235.1" cy="85.2" r="4.7"/>
<circle cx="235.1" cy="91.8" r="4.7"/>
<circle cx="235.1" cy="98.3" r="4.7"/>
<circle cx="235.1" cy="104.8" r="4.7"/>
<circle cx="235.1" cy="111.3" r="4.7"/>
<circle cx="235.1" cy="117.8" r="4.7"/>
<circle cx="235.1" cy="124.4" r="4.7"/>
<circle cx="235.1" cy="130.9" r="4.7"/>
<circle cx="235.1" cy="137.4" r="4.7"/>
<circle cx="235.1" cy="143.9" r="4.7"/>
<circle cx="235.1" cy="150.4" r="4.7"/>
<circle cx="235.1" cy="157" r="4.7"/>
<circle cx="235.1" cy="163.5" r="4.7"/>
<circle cx="235.1" cy="170" r="4.7"/>
<circle cx="235.1" cy="176.5" r="4.7"/>
<circle cx="235.1" cy="183" r="4.7"/>
<circle cx="235.1" cy="189.6" r="4.7"/>
<circle cx="235.1" cy="196.1" r="4.7"/>
<circle cx="235.1" cy="202.6" r="4.7"/>
<circle cx="235.1" cy="209.1" r="4.7"/>
<circle cx="235.1" cy="215.6" r="4.7"/>
<circle cx="235.1" cy="222.2" r="4.7"/>
<circle cx="235.1" cy="228.7" r="4.7"/>
<circle cx="235.1" cy="235.2" r="4.7"/>
<circle cx="235.1" cy="241.7" r="4.7"/>
<circle cx="235.1" cy="248.2" r="4.7"/>
<circle cx="241.6" cy=".5" r="4.7"/>
<circle cx="241.6" cy="7" r="4.7"/>
<circle cx="241.6" cy="13.5" r="4.7"/>
<circle cx="241.6" cy="20.1" r="4.7"/>
<circle cx="241.6" cy="26.6" r="4.7"/>
<circle cx="241.6" cy="33.1" r="4.7"/>
<circle cx="241.6" cy="39.6" r="4.7"/>
<circle cx="241.6" cy="46.1" r="4.7"/>
<circle cx="241.6" cy="52.6" r="4.7"/>
<circle cx="241.6" cy="59.2" r="4.7"/>
<circle cx="241.6" cy="65.7" r="4.7"/>
<circle cx="241.6" cy="72.2" r="4.7"/>
<circle cx="241.6" cy="78.7" r="4.7"/>
<circle cx="241.6" cy="85.2" r="4.7"/>
<circle cx="241.6" cy="91.8" r="4.7"/>
<circle cx="241.6" cy="98.3" r="4.7"/>
<circle cx="241.6" cy="104.8" r="4.7"/>
<circle cx="241.6" cy="111.3" r="4.7"/>
<circle cx="241.6" cy="117.8" r="4.7"/>
<circle cx="241.6" cy="124.4" r="4.7"/>
<circle cx="241.6" cy="130.9" r="4.7"/>
<circle cx="241.6" cy="137.4" r="4.7"/>
<circle cx="241.6" cy="143.9" r="4.7"/>
<circle cx="241.6" cy="150.4" r="4.7"/>
<circle cx="241.6" cy="157" r="4.7"/>
<circle cx="241.6" cy="163.5" r="4.7"/>
<circle cx="241.6" cy="170" r="4.7"/>
<circle cx="241.6" cy="176.5" r="4.7"/>
<circle cx="241.6" cy="183" r="4.7"/>
<circle cx="241.6" cy="189.6" r="4.7"/>
<circle cx="241.6" cy="196.1" r="4.7"/>
<circle cx="241.6" cy="202.6" r="4.7"/>
<circle cx="241.6" cy="209.1" r="4.7"/>
<circle cx="241.6" cy="215.6" r="4.7"/>
<circle cx="241.6" cy="222.2" r="4.7"/>
<circle cx="241.6" cy="228.7" r="4.7"/>
<circle cx="241.6" cy="235.2" r="4.7"/>
<circle cx="241.6" cy="241.7" r="4.7"/>
<circle cx="241.6" cy="248.2" r="4.7"/>
<circle cx="248.1" cy=".5" r="4.7"/>
<circle cx="248.1" cy="7" r="4.7"/>
<circle cx="248.1" cy="13.5" r="4.7"/>
<circle cx="248.1" cy="20.1" r="4.7"/>
<circle cx="248.1" cy="26.6" r="4.7"/>
<circle cx="248.1" cy="33.1" r="4.7"/>
<circle cx="248.1" cy="39.6" r="4.7"/>
<circle cx="248.1" cy="46.1" r="4.7"/>
<circle cx="248.1" cy="52.6" r="4.7"/>
<circle cx="248.1" cy="59.2" r="4.7"/>
<circle cx="248.1" cy="65.7" r="4.7"/>
<circle cx="248.1" cy="72.2" r="4.7"/>
<circle cx="248.1" cy="78.7" r="4.7"/>
<circle cx="248.1" cy="85.2" r="4.7"/>
<circle cx="248.1" cy="91.8" r="4.7"/>
<circle cx="248.1" cy="98.3" r="4.7"/>
<circle cx="248.1" cy="104.8" r="4.7"/>
<circle cx="248.1" cy="111.3" r="4.7"/>
<circle cx="248.1" cy="117.8" r="4.7"/>
<circle cx="248.1" cy="124.4" r="4.7"/>
<circle cx="248.1" cy="130.9" r="4.7"/>
<circle cx="248.1" cy="137.4" r="4.7"/>
<circle cx="248.1" cy="143.9" r="4.7"/>
<circle cx="248.1" cy="150.4" r="4.7"/>
<circle cx="248.1" cy="157" r="4.7"/>
<circle cx="248.1" cy="163.5" r="4.7"/>
<circle cx="248.1" cy="170" r="4.7"/>
<circle cx="248.1" cy="176.5" r="4.7"/>
<circle cx="248.1" cy="183" r="4.7"/>
<circle cx="248.1" cy="189.6" r="4.7"/>
<circle cx="248.1" cy="196.1" r="4.7"/>
<circle cx="248.1" cy="202.6" r="4.7"/>
<circle cx="248.1" cy="209.1" r="4.7"/>
<circle cx="248.1" cy="215.6" r="4.7"/>
<circle cx="248.1" cy="222.2" r="4.7"/>
<circle cx="248.1" cy="228.7" r="4.7"/>
<circle cx="248.1" cy="235.2" r="4.7"/>
<circle cx="248.1" cy="241.7" r="4.7"/>
<circle cx="248.1" cy="248.2" r="4.7"/>
<path fill="#fff" d="M-2.87 -4.63q.77 1.09 1.86 1.86q-1.09 .77 -1.86 1.86q-.77 -1.09 -1.86 -1.86q1.09 -.77 1.86 -1.86z
M-2.87 1.89q.77 1.09 1.86 1.86q-1.09 .77 -1.86 1.86q-.77 -1.09 -1.86 -1.86q1.09 -.77 1.86 -1.86z
M-2.87 8.41q.77 1.09 1.86 1.86q-1.09 .77 -1.86 1.86q-.77 -1.09 -1.86 -1.86q1.09 -.77 1.86 -1.86z
M-2.87 14.93q.77 1.09 1.86 1.86q-1.09 .77 -1.86 1.86q-.77 -1.09 -1.86 -1.86q1.09 -.77 1.86 -1.86z
M-2.87 21.44q.77 1.09 1.87 1.87q-1.09 .77 -1.87 1.87q-.77 -1.09 -1.87 -1.87q1.09 -.77 1.87 -1.87z
M-2.87 27.96q.78 1.09 1.87 1.87q-1.09 .78 -1.87 1.87q-.78 -1.09 -1.87 -1.87q1.09 -.78 1.87 -1.87z
M-2.87 34.48q.78 1.09 1.87 1.87q-1.09 .78 -1.87 1.87q-.78 -1.09 -1.87 -1.87q1.09 -.78 1.87 -1.87z
M-2.87 41q.78 1.09 1.87 1.87q-1.09 .78 -1.87 1.87q-.78 -1.09 -1.87 -1.87q1.09 -.78 1.87 -1.87z
M-2.87 47.52q.78 1.09 1.87 1.87q-1.09 .78 -1.87 1.87q-.78 -1.09 -1.87 -1.87q1.09 -.78 1.87 -1.87z
M-2.87 54.04q.78 1.09 1.87 1.87q-1.09 .78 -1.87 1.87q-.78 -1.09 -1.87 -1.87q1.09 -.78 1.87 -1.87z
M-2.87 60.56q.78 1.09 1.87 1.87q-1.09 .78 -1.87 1.87q-.78 -1.09 -1.87 -1.87q1.09 -.78 1.87 -1.87z
M-2.87 67.08q.78 1.09 1.87 1.87q-1.09 .78 -1.87 1.87q-.78 -1.09 -1.87 -1.87q1.09 -.78 1.87 -1.87z
M-2.87 73.6q.78 1.09 1.87 1.87q-1.09 .78 -1.87 1.87q-.78 -1.09 -1.87 -1.87q1.09 -.78 1.87 -1.87z
M-2.87 80.12q.78 1.09 1.87 1.87q-1.09 .78 -1.87 1.87q-.78 -1.09 -1.87 -1.87q1.09 -.78 1.87 -1.87z
M-2.87 86.64q.78 1.09 1.87 1.87q-1.09 .78 -1.87 1.87q-.78 -1.09 -1.87 -1.87q1.09 -.78 1.87 -1.87z
M-2.87 93.16q.78 1.09 1.87 1.87q-1.09 .78 -1.87 1.87q-.78 -1.09 -1.87 -1.87q1.09 -.78 1.87 -1.87z
M-2.87 99.68q.78 1.09 1.87 1.87q-1.09 .78 -1.87 1.87q-.78 -1.09 -1.87 -1.87q1.09 -.78 1.87 -1.87z
M-2.87 106.2q.78 1.09 1.87 1.87q-1.09 .78 -1.87 1.87q-.78 -1.09 -1.87 -1.87q1.09 -.78 1.87 -1.87z
M-2.87 112.72q.78 1.09 1.87 1.87q-1.09 .78 -1.87 1.87q-.78 -1.09 -1.87 -1.87q1.09 -.78 1.87 -1.87z
M-2.87 119.24q.79 1.09 1.87 1.87q-1.09 .79 -1.87 1.87q-.79 -1.09 -1.87 -1.87q1.09 -.79 1.87 -1.87z
M-2.87 125.75q.79 1.09 1.88 1.88q-1.09 .79 -1.88 1.88q-.79 -1.09 -1.88 -1.88q1.09 -.79 1.88 -1.88z
M-2.87 132.27q.79 1.09 1.88 1.88q-1.09 .79 -1.88 1.88q-.79 -1.09 -1.88 -1.88q1.09 -.79 1.88 -1.88z
M-2.87 138.79q.79 1.09 1.88 1.88q-1.09 .79 -1.88 1.88q-.79 -1.09 -1.88 -1.88q1.09 -.79 1.88 -1.88z
M-2.87 145.32q.79 1.09 1.87 1.87q-1.09 .79 -1.87 1.87q-.79 -1.09 -1.87 -1.87q1.09 -.79 1.87 -1.87z
M-2.87 151.84q.78 1.09 1.87 1.87q-1.09 .78 -1.87 1.87q-.78 -1.09 -1.87 -1.87q1.09 -.78 1.87 -1.87z
M-2.87 158.36q.78 1.09 1.87 1.87q-1.09 .78 -1.87 1.87q-.78 -1.09 -1.87 -1.87q1.09 -.78 1.87 -1.87z
M-2.87 164.88q.78 1.09 1.87 1.87q-1.09 .78 -1.87 1.87q-.78 -1.09 -1.87 -1.87q1.09 -.78 1.87 -1.87z
M-2.87 171.4q.78 1.09 1.87 1.87q-1.09 .78 -1.87 1.87q-.78 -1.09 -1.87 -1.87q1.09 -.78 1.87 -1.87z
M-2.87 177.92q.78 1.09 1.87 1.87q-1.09 .78 -1.87 1.87q-.78 -1.09 -1.87 -1.87q1.09 -.78 1.87 -1.87z
M-2.87 184.44q.78 1.09 1.87 1.87q-1.09 .78 -1.87 1.87q-.78 -1.09 -1.87 -1.87q1.09 -.78 1.87 -1.87z
M-2.87 190.96q.78 1.09 1.87 1.87q-1.09 .78 -1.87 1.87q-.78 -1.09 -1.87 -1.87q1.09 -.78 1.87 -1.87z
M-2.87 197.48q.78 1.09 1.87 1.87q-1.09 .78 -1.87 1.87q-.78 -1.09 -1.87 -1.87q1.09 -.78 1.87 -1.87z
M-2.87 204q.78 1.09 1.87 1.87q-1.09 .78 -1.87 1.87q-.78 -1.09 -1.87 -1.87q1.09 -.78 1.87 -1.87z
M-2.87 210.52q.78 1.09 1.87 1.87q-1.09 .78 -1.87 1.87q-.78 -1.09 -1.87 -1.87q1.09 -.78 1.87 -1.87z
M-2.87 217.04q.78 1.09 1.87 1.87q-1.09 .78 -1.87 1.87q-.78 -1.09 -1.87 -1.87q1.09 -.78 1.87 -1.87z
M-2.87 223.56q.78 1.09 1.87 1.87q-1.09 .78 -1.87 1.87q-.78 -1.09 -1.87 -1.87q1.09 -.78 1.87 -1.87z
M-2.87 230.08q.78 1.09 1.87 1.87q-1.09 .78 -1.87 1.87q-.78 -1.09 -1.87 -1.87q1.09 -.78 1.87 -1.87z
M-2.87 236.6q.78 1.09 1.87 1.87q-1.09 .78 -1.87 1.87q-.78 -1.09 -1.87 -1.87q1.09 -.78 1.87 -1.87z
M-2.87 243.12q.77 1.09 1.87 1.87q-1.09 .77 -1.87 1.87q-.77 -1.09 -1.87 -1.87q1.09 -.77 1.87 -1.87z
M-2.87 249.65q.77 1.09 1.86 1.86q-1.09 .77 -1.86 1.86q-.77 -1.09 -1.86 -1.86q1.09 -.77 1.86 -1.86z
M3.65 -4.63q.77 1.09 1.86 1.86q-1.09 .77 -1.86 1.86q-.77 -1.09 -1.86 -1.86q1.09 -.77 1.86 -1.86z
M3.65 1.89q.77 1.09 1.86 1.86q-1.09 .77 -1.86 1.86q-.77 -1.09 -1.86 -1.86q1.09 -.77 1.86 -1.86z
M3.65 8.41q.77 1.09 1.86 1.86q-1.09 .77 -1.86 1.86q-.77 -1.09 -1.86 -1.86q1.09 -.77 1.86 -1.86z
M3.65 14.92q.77 1.09 1.87 1.87q-1.09 .77 -1.87 1.87q-.77 -1.09 -1.87 -1.87q1.09 -.77 1.87 -1.87z
M3.65 21.44q.78 1.09 1.87 1.87q-1.09 .78 -1.87 1.87q-.78 -1.09 -1.87 -1.87q1.09 -.78 1.87 -1.87z
M3.65 27.96q.78 1.09 1.87 1.87q-1.09 .78 -1.87 1.87q-.78 -1.09 -1.87 -1.87q1.09 -.78 1.87 -1.87z
M3.65 34.48q.78 1.09 1.87 1.87q-1.09 .78 -1.87 1.87q-.78 -1.09 -1.87 -1.87q1.09 -.78 1.87 -1.87z
M3.65 41q.78 1.09 1.87 1.87q-1.09 .78 -1.87 1.87q-.78 -1.09 -1.87 -1.87q1.09 -.78 1.87 -1.87z
M3.65 47.52q.78 1.09 1.87 1.87q-1.09 .78 -1.87 1.87q-.78 -1.09 -1.87 -1.87q1.09 -.78 1.87 -1.87z
M3.65 54.04q.78 1.09 1.87 1.87q-1.09 .78 -1.87 1.87q-.78 -1.09 -1.87 -1.87q1.09 -.78 1.87 -1.87z
M3.65 60.56q.78 1.09 1.87 1.87q-1.09 .78 -1.87 1.87q-.78 -1.09 -1.87 -1.87q1.09 -.78 1.87 -1.87z
M3.65 67.08q.78 1.09 1.87 1.87q-1.09 .78 -1.87 1.87q-.78 -1.09 -1.87 -1.87q1.09 -.78 1.87 -1.87z
M3.65 73.6q.78 1.09 1.87 1.87q-1.09 .78 -1.87 1.87q-.78 -1.09 -1.87 -1.87q1.09 -.78 1.87 -1.87z
M3.65 80.12q.78 1.09 1.87 1.87q-1.09 .78 -1.87 1.87q-.78 -1.09 -1.87 -1.87q1.09 -.78 1.87 -1.87z
M3.65 86.64q.78 1.09 1.87 1.87q-1.09 .78 -1.87 1.87q-.78 -1.09 -1.87 -1.87q1.09 -.78 1.87 -1.87z
M3.65 93.15q.79 1.09 1.88 1.88q-1.09 .79 -1.88 1.88q-.79 -1.09 -1.88 -1.88q1.09 -.79 1.88 -1.88z
M3.65 99.65q.8 1.1 1.9 1.9q-1.1 .8 -1.9 1.9q-.8 -1.1 -1.9 -1.9q1.1 -.8 1.9 -1.9z
M3.65 106.16q.81 1.1 1.91 1.91q-1.1 .81 -1.91 1.91q-.81 -1.1 -1.91 -1.91q1.1 -.81 1.91 -1.91z
M3.65 112.66q.83 1.1 1.93 1.93q-1.1 .83 -1.93 1.93q-.83 -1.1 -1.93 -1.93q1.1 -.83 1.93 -1.93z
M3.65 119.17q.84 1.1 1.94 1.94q-1.1 .84 -1.94 1.94q-.84 -1.1 -1.94 -1.94q1.1 -.84 1.94 -1.94z
M3.65 125.69q.85 1.1 1.94 1.94q-1.1 .85 -1.94 1.94q-.85 -1.1 -1.94 -1.94q1.1 -.85 1.94 -1.94z
M3.65 132.21q.85 1.1 1.94 1.94q-1.1 .85 -1.94 1.94q-.85 -1.1 -1.94 -1.94q1.1 -.85 1.94 -1.94z
M3.65 138.73q.85 1.1 1.94 1.94q-1.1 .85 -1.94 1.94q-.85 -1.1 -1.94 -1.94q1.1 -.85 1.94 -1.94z
M3.65 145.25q.84 1.1 1.94 1.94q-1.1 .84 -1.94 1.94q-.84 -1.1 -1.94 -1.94q1.1 -.84 1.94 -1.94z
M3.65 151.78q.83 1.1 1.93 1.93q-1.1 .83 -1.93 1.93q-.83 -1.1 -1.93 -1.93q1.1 -.83 1.93 -1.93z
M3.65 158.31q.82 1.1 1.92 1.92q-1.1 .82 -1.92 1.92q-.82 -1.1 -1.92 -1.92q1.1 -.82 1.92 -1.92z
M3.65 164.85q.8 1.1 1.9 1.9q-1.1 .8 -1.9 1.9q-.8 -1.1 -1.9 -1.9q1.1 -.8 1.9 -1.9z
M3.65 171.39q.79 1.09 1.88 1.88q-1.09 .79 -1.88 1.88q-.79 -1.09 -1.88 -1.88q1.09 -.79 1.88 -1.88z
M3.65 177.92q.78 1.09 1.87 1.87q-1.09 .78 -1.87 1.87q-.78 -1.09 -1.87 -1.87q1.09 -.78 1.87 -1.87z
M3.65 184.44q.78 1.09 1.87 1.87q-1.09 .78 -1.87 1.87q-.78 -1.09 -1.87 -1.87q1.09 -.78 1.87 -1.87z
M3.65 190.96q.78 1.09 1.87 1.87q-1.09 .78 -1.87 1.87q-.78 -1.09 -1.87 -1.87q1.09 -.78 1.87 -1.87z
M3.65 197.48q.78 1.09 1.87 1.87q-1.09 .78 -1.87 1.87q-.78 -1.09 -1.87 -1.87q1.09 -.78 1.87 -1.87z
M3.65 204q.78 1.09 1.87 1.87q-1.09 .78 -1.87 1.87q-.78 -1.09 -1.87 -1.87q1.09 -.78 1.87 -1.87z
M3.65 210.52q.78 1.09 1.87 1.87q-1.09 .78 -1.87 1.87q-.78 -1.09 -1.87 -1.87q1.09 -.78 1.87 -1.87z
M3.65 217.04q.78 1.09 1.87 1.87q-1.09 .78 -1.87 1.87q-.78 -1.09 -1.87 -1.87q1.09 -.78 1.87 -1.87z
M3.65 223.56q.78 1.09 1.87 1.87q-1.09 .78 -1.87 1.87q-.78 -1.09 -1.87 -1.87q1.09 -.78 1.87 -1.87z
M3.65 230.08q.78 1.09 1.87 1.87q-1.09 .78 -1.87 1.87q-.78 -1.09 -1.87 -1.87q1.09 -.78 1.87 -1.87z
M3.65 236.6q.78 1.09 1.87 1.87q-1.09 .78 -1.87 1.87q-.78 -1.09 -1.87 -1.87q1.09 -.78 1.87 -1.87z
M3.65 243.12q.78 1.09 1.87 1.87q-1.09 .78 -1.87 1.87q-.78 -1.09 -1.87 -1.87q1.09 -.78 1.87 -1.87z
M3.65 249.64q.77 1.09 1.87 1.87q-1.09 .77 -1.87 1.87q-.77 -1.09 -1.87 -1.87q1.09 -.77 1.87 -1.87z
M10.17 -4.63q.77 1.09 1.86 1.86q-1.09 .77 -1.86 1.86q-.77 -1.09 -1.86 -1.86q1.09 -.77 1.86 -1.86z
M10.17 1.89q.77 1.09 1.86 1.86q-1.09 .77 -1.86 1.86q-.77 -1.09 -1.86 -1.86q1.09 -.77 1.86 -1.86z
M10.17 8.4q.77 1.09 1.87 1.87q-1.09 .77 -1.87 1.87q-.77 -1.09 -1.87 -1.87q1.09 -.77 1.87 -1.87z
M10.17 14.92q.78 1.09 1.87 1.87q-1.09 .78 -1.87 1.87q-.78 -1.09 -1.87 -1.87q1.09 -.78 1.87 -1.87z
M10.17 21.44q.78 1.09 1.87 1.87q-1.09 .78 -1.87 1.87q-.78 -1.09 -1.87 -1.87q1.09 -.78 1.87 -1.87z
M10.17 27.96q.78 1.09 1.87 1.87q-1.09 .78 -1.87 1.87q-.78 -1.09 -1.87 -1.87q1.09 -.78 1.87 -1.87z
M10.17 34.48q.78 1.09 1.87 1.87q-1.09 .78 -1.87 1.87q-.78 -1.09 -1.87 -1.87q1.09 -.78 1.87 -1.87z
M10.17 41q.78 1.09 1.87 1.87q-1.09 .78 -1.87 1.87q-.78 -1.09 -1.87 -1.87q1.09 -.78 1.87 -1.87z
M10.17 47.52q.78 1.09 1.87 1.87q-1.09 .78 -1.87 1.87q-.78 -1.09 -1.87 -1.87q1.09 -.78 1.87 -1.87z
M10.17 54.04q.78 1.09 1.87 1.87q-1.09 .78 -1.87 1.87q-.78 -1.09 -1.87 -1.87q1.09 -.78 1.87 -1.87z
M10.17 60.56q.78 1.09 1.87 1.87q-1.09 .78 -1.87 1.87q-.78 -1.09 -1.87 -1.87q1.09 -.78 1.87 -1.87z
M10.17 67.08q.78 1.09 1.87 1.87q-1.09 .78 -1.87 1.87q-.78 -1.09 -1.87 -1.87q1.09 -.78 1.87 -1.87z
M10.17 73.6q.78 1.09 1.87 1.87q-1.09 .78 -1.87 1.87q-.78 -1.09 -1.87 -1.87q1.09 -.78 1.87 -1.87z
M10.17 80.1q.79 1.1 1.89 1.89q-1.1 .79 -1.89 1.89q-.79 -1.1 -1.89 -1.89q1.1 -.79 1.89 -1.89z
M10.17 86.59q.82 1.1 1.92 1.92q-1.1 .82 -1.92 1.92q-.82 -1.1 -1.92 -1.92q1.1 -.82 1.92 -1.92z
M10.17 93.09q.84 1.1 1.94 1.94q-1.1 .84 -1.94 1.94q-.84 -1.1 -1.94 -1.94q1.1 -.84 1.94 -1.94z
M10.17 99.59q.87 1.09 1.96 1.96q-1.09 .87 -1.96 1.96q-.87 -1.09 -1.96 -1.96q1.09 -.87 1.96 -1.96z
M10.17 106.09q.89 1.09 1.98 1.98q-1.09 .89 -1.98 1.98q-.89 -1.09 -1.98 -1.98q1.09 -.89 1.98 -1.98z
M10.17 112.58q.91 1.1 2.01 2.01q-1.1 .91 -2.01 2.01q-.91 -1.1 -2.01 -2.01q1.1 -.91 2.01 -2.01z
M10.17 119.08q.93 1.1 2.03 2.03q-1.1 .93 -2.03 2.03q-.93 -1.1 -2.03 -2.03q1.1 -.93 2.03 -2.03z
M10.17 125.59q.94 1.1 2.04 2.04q-1.1 .94 -2.04 2.04q-.94 -1.1 -2.04 -2.04q1.1 -.94 2.04 -2.04z
M10.17 132.11q.94 1.1 2.04 2.04q-1.1 .94 -2.04 2.04q-.94 -1.1 -2.04 -2.04q1.1 -.94 2.04 -2.04z
M10.17 138.63q.94 1.1 2.04 2.04q-1.1 .94 -2.04 2.04q-.94 -1.1 -2.04 -2.04q1.1 -.94 2.04 -2.04z
M10.17 145.16q.93 1.1 2.03 2.03q-1.1 .93 -2.03 2.03q-.93 -1.1 -2.03 -2.03q1.1 -.93 2.03 -2.03z
M10.17 151.7q.91 1.1 2.01 2.01q-1.1 .91 -2.01 2.01q-.91 -1.1 -2.01 -2.01q1.1 -.91 2.01 -2.01z
M10.17 158.24q.89 1.1 1.99 1.99q-1.1 .89 -1.99 1.99q-.89 -1.1 -1.99 -1.99q1.1 -.89 1.99 -1.99z
M10.17 164.79q.87 1.09 1.96 1.96q-1.09 .87 -1.96 1.96q-.87 -1.09 -1.96 -1.96q1.09 -.87 1.96 -1.96z
M10.17 171.33q.85 1.1 1.94 1.94q-1.1 .85 -1.94 1.94q-.85 -1.1 -1.94 -1.94q1.1 -.85 1.94 -1.94z
M10.17 177.87q.82 1.1 1.92 1.92q-1.1 .82 -1.92 1.92q-.82 -1.1 -1.92 -1.92q1.1 -.82 1.92 -1.92z
M10.17 184.41q.8 1.1 1.9 1.9q-1.1 .8 -1.9 1.9q-.8 -1.1 -1.9 -1.9q1.1 -.8 1.9 -1.9z
M10.17 190.96q.78 1.09 1.87 1.87q-1.09 .78 -1.87 1.87q-.78 -1.09 -1.87 -1.87q1.09 -.78 1.87 -1.87z
M10.17 197.48q.78 1.09 1.87 1.87q-1.09 .78 -1.87 1.87q-.78 -1.09 -1.87 -1.87q1.09 -.78 1.87 -1.87z
M10.17 204q.78 1.09 1.87 1.87q-1.09 .78 -1.87 1.87q-.78 -1.09 -1.87 -1.87q1.09 -.78 1.87 -1.87z
M10.17 210.52q.78 1.09 1.87 1.87q-1.09 .78 -1.87 1.87q-.78 -1.09 -1.87 -1.87q1.09 -.78 1.87 -1.87z
M10.17 217.04q.78 1.09 1.87 1.87q-1.09 .78 -1.87 1.87q-.78 -1.09 -1.87 -1.87q1.09 -.78 1.87 -1.87z
M10.17 223.56q.78 1.09 1.87 1.87q-1.09 .78 -1.87 1.87q-.78 -1.09 -1.87 -1.87q1.09 -.78 1.87 -1.87z
M10.17 230.08q.78 1.09 1.87 1.87q-1.09 .78 -1.87 1.87q-.78 -1.09 -1.87 -1.87q1.09 -.78 1.87 -1.87z
M10.17 236.6q.78 1.09 1.87 1.87q-1.09 .78 -1.87 1.87q-.78 -1.09 -1.87 -1.87q1.09 -.78 1.87 -1.87z
M10.17 243.12q.78 1.09 1.87 1.87q-1.09 .78 -1.87 1.87q-.78 -1.09 -1.87 -1.87q1.09 -.78 1.87 -1.87z
M10.17 249.64q.78 1.09 1.87 1.87q-1.09 .78 -1.87 1.87q-.78 -1.09 -1.87 -1.87q1.09 -.78 1.87 -1.87z
M16.69 -4.63q.77 1.09 1.86 1.86q-1.09 .77 -1.86 1.86q-.77 -1.09 -1.86 -1.86q1.09 -.77 1.86 -1.86z
M16.69 1.88q.77 1.09 1.87 1.87q-1.09 .77 -1.87 1.87q-.77 -1.09 -1.87 -1.87q1.09 -.77 1.87 -1.87z
M16.69 8.4q.78 1.09 1.87 1.87q-1.09 .78 -1.87 1.87q-.78 -1.09 -1.87 -1.87q1.09 -.78 1.87 -1.87z
M16.69 14.92q.78 1.09 1.87 1.87q-1.09 .78 -1.87 1.87q-.78 -1.09 -1.87 -1.87q1.09 -.78 1.87 -1.87z
M16.69 21.44q.78 1.09 1.87 1.87q-1.09 .78 -1.87 1.87q-.78 -1.09 -1.87 -1.87q1.09 -.78 1.87 -1.87z
M16.69 27.96q.78 1.09 1.87 1.87q-1.09 .78 -1.87 1.87q-.78 -1.09 -1.87 -1.87q1.09 -.78 1.87 -1.87z
M16.69 34.48q.78 1.09 1.87 1.87q-1.09 .78 -1.87 1.87q-.78 -1.09 -1.87 -1.87q1.09 -.78 1.87 -1.87z
M16.69 41q.78 1.09 1.87 1.87q-1.09 .78 -1.87 1.87q-.78 -1.09 -1.87 -1.87q1.09 -.78 1.87 -1.87z
M16.69 47.52q.78 1.09 1.87 1.87q-1.09 .78 -1.87 1.87q-.78 -1.09 -1.87 -1.87q1.09 -.78 1.87 -1.87z
M16.69 54.04q.78 1.09 1.87 1.87q-1.09 .78 -1.87 1.87q-.78 -1.09 -1.87 -1.87q1.09 -.78 1.87 -1.87z
M16.69 60.56q.78 1.09 1.87 1.87q-1.09 .78 -1.87 1.87q-.78 -1.09 -1.87 -1.87q1.09 -.78 1.87 -1.87z
M16.69 67.07q.79 1.09 1.88 1.88q-1.09 .79 -1.88 1.88q-.79 -1.09 -1.88 -1.88q1.09 -.79 1.88 -1.88z
M16.69 73.55q.82 1.1 1.92 1.92q-1.1 .82 -1.92 1.92q-.82 -1.1 -1.92 -1.92q1.1 -.82 1.92 -1.92z
M16.69 80.04q.85 1.1 1.95 1.95q-1.1 .85 -1.95 1.95q-.85 -1.1 -1.95 -1.95q1.1 -.85 1.95 -1.95z
M16.69 86.53q.89 1.09 1.98 1.98q-1.09 .89 -1.98 1.98q-.89 -1.09 -1.98 -1.98q1.09 -.89 1.98 -1.98z
M16.69 93q.93 1.1 2.03 2.03q-1.1 .93 -2.03 2.03q-.93 -1.1 -2.03 -2.03q1.1 -.93 2.03 -2.03z
M16.69 99.48q.96 1.11 2.07 2.07q-1.11 .96 -2.07 2.07q-.96 -1.11 -2.07 -2.07q1.11 -.96 2.07 -2.07z
M16.69 105.97q.99 1.11 2.1 2.1q-1.11 .99 -2.1 2.1q-.99 -1.11 -2.1 -2.1q1.11 -.99 2.1 -2.1z
M16.69 112.47q1.01 1.11 2.12 2.12q-1.11 1.01 -2.12 2.12q-1.01 -1.11 -2.12 -2.12q1.11 -1.01 2.12 -2.12z
M16.69 118.97q1.03 1.11 2.14 2.14q-1.11 1.03 -2.14 2.14q-1.03 -1.11 -2.14 -2.14q1.11 -1.03 2.14 -2.14z
M16.69 125.47q1.04 1.12 2.16 2.16q-1.12 1.04 -2.16 2.16q-1.04 -1.12 -2.16 -2.16q1.12 -1.04 2.16 -2.16z
M16.69 131.99q1.05 1.12 2.16 2.16q-1.12 1.05 -2.16 2.16q-1.05 -1.12 -2.16 -2.16q1.12 -1.05 2.16 -2.16z
M16.69 138.51q1.04 1.12 2.16 2.16q-1.12 1.04 -2.16 2.16q-1.04 -1.12 -2.16 -2.16q1.12 -1.04 2.16 -2.16z
M16.69 145.04q1.03 1.11 2.15 2.15q-1.11 1.03 -2.15 2.15q-1.03 -1.11 -2.15 -2.15q1.11 -1.03 2.15 -2.15z
M16.69 151.58q1.02 1.11 2.13 2.13q-1.11 1.02 -2.13 2.13q-1.02 -1.11 -2.13 -2.13q1.11 -1.02 2.13 -2.13z
M16.69 158.13q.99 1.11 2.1 2.1q-1.11 .99 -2.1 2.1q-.99 -1.11 -2.1 -2.1q1.11 -.99 2.1 -2.1z
M16.69 164.68q.97 1.11 2.07 2.07q-1.11 .97 -2.07 2.07q-.97 -1.11 -2.07 -2.07q1.11 -.97 2.07 -2.07z
M16.69 171.23q.93 1.1 2.04 2.04q-1.1 .93 -2.04 2.04q-.93 -1.1 -2.04 -2.04q1.1 -.93 2.04 -2.04z
M16.69 177.8q.9 1.1 1.99 1.99q-1.1 .9 -1.99 1.99q-.9 -1.1 -1.99 -1.99q1.1 -.9 1.99 -1.99z
M16.69 184.36q.86 1.09 1.95 1.95q-1.09 .86 -1.95 1.95q-.86 -1.09 -1.95 -1.95q1.09 -.86 1.95 -1.95z
M16.69 190.91q.83 1.1 1.92 1.92q-1.1 .83 -1.92 1.92q-.83 -1.1 -1.92 -1.92q1.1 -.83 1.92 -1.92z
M16.69 197.46q.79 1.1 1.89 1.89q-1.1 .79 -1.89 1.89q-.79 -1.1 -1.89 -1.89q1.1 -.79 1.89 -1.89z
M16.69 204q.78 1.09 1.87 1.87q-1.09 .78 -1.87 1.87q-.78 -1.09 -1.87 -1.87q1.09 -.78 1.87 -1.87z
M16.69 210.52q.78 1.09 1.87 1.87q-1.09 .78 -1.87 1.87q-.78 -1.09 -1.87 -1.87q1.09 -.78 1.87 -1.87z
M16.69 217.04q.78 1.09 1.87 1.87q-1.09 .78 -1.87 1.87q-.78 -1.09 -1.87 -1.87q1.09 -.78 1.87 -1.87z
M16.69 223.56q.78 1.09 1.87 1.87q-1.09 .78 -1.87 1.87q-.78 -1.09 -1.87 -1.87q1.09 -.78 1.87 -1.87z
M16.69 230.08q.78 1.09 1.87 1.87q-1.09 .78 -1.87 1.87q-.78 -1.09 -1.87 -1.87q1.09 -.78 1.87 -1.87z
M16.69 236.6q.78 1.09 1.87 1.87q-1.09 .78 -1.87 1.87q-.78 -1.09 -1.87 -1.87q1.09 -.78 1.87 -1.87z
M16.69 243.12q.78 1.09 1.87 1.87q-1.09 .78 -1.87 1.87q-.78 -1.09 -1.87 -1.87q1.09 -.78 1.87 -1.87z
M16.69 249.64q.78 1.09 1.87 1.87q-1.09 .78 -1.87 1.87q-.78 -1.09 -1.87 -1.87q1.09 -.78 1.87 -1.87z
M23.21 -4.63q.77 1.09 1.86 1.86q-1.09 .77 -1.86 1.86q-.77 -1.09 -1.86 -1.86q1.09 -.77 1.86 -1.86z
M23.21 1.88q.77 1.09 1.87 1.87q-1.09 .77 -1.87 1.87q-.77 -1.09 -1.87 -1.87q1.09 -.77 1.87 -1.87z
M23.21 8.4q.78 1.09 1.87 1.87q-1.09 .78 -1.87 1.87q-.78 -1.09 -1.87 -1.87q1.09 -.78 1.87 -1.87z
M23.21 14.92q.78 1.09 1.87 1.87q-1.09 .78 -1.87 1.87q-.78 -1.09 -1.87 -1.87q1.09 -.78 1.87 -1.87z
M23.21 21.44q.78 1.09 1.87 1.87q-1.09 .78 -1.87 1.87q-.78 -1.09 -1.87 -1.87q1.09 -.78 1.87 -1.87z
M23.21 27.96q.78 1.09 1.87 1.87q-1.09 .78 -1.87 1.87q-.78 -1.09 -1.87 -1.87q1.09 -.78 1.87 -1.87z
M23.21 34.48q.78 1.09 1.87 1.87q-1.09 .78 -1.87 1.87q-.78 -1.09 -1.87 -1.87q1.09 -.78 1.87 -1.87z
M23.21 41q.78 1.09 1.87 1.87q-1.09 .78 -1.87 1.87q-.78 -1.09 -1.87 -1.87q1.09 -.78 1.87 -1.87z
M23.21 47.52q.78 1.09 1.87 1.87q-1.09 .78 -1.87 1.87q-.78 -1.09 -1.87 -1.87q1.09 -.78 1.87 -1.87z
M23.21 54.04q.78 1.09 1.87 1.87q-1.09 .78 -1.87 1.87q-.78 -1.09 -1.87 -1.87q1.09 -.78 1.87 -1.87z
M23.21 60.53q.8 1.1 1.9 1.9q-1.1 .8 -1.9 1.9q-.8 -1.1 -1.9 -1.9q1.1 -.8 1.9 -1.9z
M23.21 67.01q.84 1.1 1.94 1.94q-1.1 .84 -1.94 1.94q-.84 -1.1 -1.94 -1.94q1.1 -.84 1.94 -1.94z
M23.21 73.49q.88 1.09 1.98 1.98q-1.09 .88 -1.98 1.98q-.88 -1.09 -1.98 -1.98q1.09 -.88 1.98 -1.98z
M23.21 79.95q.93 1.1 2.04 2.04q-1.1 .93 -2.04 2.04q-.93 -1.1 -2.04 -2.04q1.1 -.93 2.04 -2.04z
M23.21 86.42q.98 1.11 2.09 2.09q-1.11 .98 -2.09 2.09q-.98 -1.11 -2.09 -2.09q1.11 -.98 2.09 -2.09z
M23.21 92.89q1.02 1.11 2.14 2.14q-1.11 1.02 -2.14 2.14q-1.02 -1.11 -2.14 -2.14q1.11 -1.02 2.14 -2.14z
M23.21 99.36q1.07 1.12 2.19 2.19q-1.12 1.07 -2.19 2.19q-1.07 -1.12 -2.19 -2.19q1.12 -1.07 2.19 -2.19z
M23.21 105.83q1.11 1.13 2.24 2.24q-1.13 1.11 -2.24 2.24q-1.11 -1.13 -2.24 -2.24q1.13 -1.11 2.24 -2.24z
M23.21 112.32q1.14 1.14 2.27 2.27q-1.14 1.14 -2.27 2.27q-1.14 -1.14 -2.27 -2.27q1.14 -1.14 2.27 -2.27z
M23.21 118.81q1.15 1.15 2.3 2.3q-1.15 1.15 -2.3 2.3q-1.15 -1.15 -2.3 -2.3q1.15 -1.15 2.3 -2.3z
M23.21 125.31q1.16 1.16 2.32 2.32q-1.16 1.16 -2.32 2.32q-1.16 -1.16 -2.32 -2.32q1.16 -1.16 2.32 -2.32z
M23.21 131.82q1.16 1.16 2.33 2.33q-1.16 1.16 -2.33 2.33q-1.16 -1.16 -2.33 -2.33q1.16 -1.16 2.33 -2.33z
M23.21 138.35q1.16 1.16 2.32 2.32q-1.16 1.16 -2.32 2.32q-1.16 -1.16 -2.32 -2.32q1.16 -1.16 2.32 -2.32z
M23.21 144.88q1.15 1.15 2.31 2.31q-1.15 1.15 -2.31 2.31q-1.15 -1.15 -2.31 -2.31q1.15 -1.15 2.31 -2.31z
M23.21 151.43q1.14 1.14 2.28 2.28q-1.14 1.14 -2.28 2.28q-1.14 -1.14 -2.28 -2.28q1.14 -1.14 2.28 -2.28z
M23.21 157.99q1.11 1.13 2.24 2.24q-1.13 1.11 -2.24 2.24q-1.11 -1.13 -2.24 -2.24q1.13 -1.11 2.24 -2.24z
M23.21 164.55q1.07 1.12 2.2 2.2q-1.12 1.07 -2.2 2.2q-1.07 -1.12 -2.2 -2.2q1.12 -1.07 2.2 -2.2z
M23.21 171.12q1.03 1.11 2.15 2.15q-1.11 1.03 -2.15 2.15q-1.03 -1.11 -2.15 -2.15q1.11 -1.03 2.15 -2.15z
M23.21 177.69q.99 1.11 2.1 2.1q-1.11 .99 -2.1 2.1q-.99 -1.11 -2.1 -2.1q1.11 -.99 2.1 -2.1z
M23.21 184.26q.94 1.1 2.05 2.05q-1.1 .94 -2.05 2.05q-.94 -1.1 -2.05 -2.05q1.1 -.94 2.05 -2.05z
M23.21 190.84q.89 1.1 1.99 1.99q-1.1 .89 -1.99 1.99q-.89 -1.1 -1.99 -1.99q1.1 -.89 1.99 -1.99z
M23.21 197.4q.85 1.1 1.95 1.95q-1.1 .85 -1.95 1.95q-.85 -1.1 -1.95 -1.95q1.1 -.85 1.95 -1.95z
M23.21 203.96q.81 1.1 1.91 1.91q-1.1 .81 -1.91 1.91q-.81 -1.1 -1.91 -1.91q1.1 -.81 1.91 -1.91z
M23.21 210.52q.78 1.09 1.87 1.87q-1.09 .78 -1.87 1.87q-.78 -1.09 -1.87 -1.87q1.09 -.78 1.87 -1.87z
M23.21 217.04q.78 1.09 1.87 1.87q-1.09 .78 -1.87 1.87q-.78 -1.09 -1.87 -1.87q1.09 -.78 1.87 -1.87z
M23.21 223.56q.78 1.09 1.87 1.87q-1.09 .78 -1.87 1.87q-.78 -1.09 -1.87 -1.87q1.09 -.78 1.87 -1.87z
M23.21 230.08q.78 1.09 1.87 1.87q-1.09 .78 -1.87 1.87q-.78 -1.09 -1.87 -1.87q1.09 -.78 1.87 -1.87z
M23.21 236.6q.78 1.09 1.87 1.87q-1.09 .78 -1.87 1.87q-.78 -1.09 -1.87 -1.87q1.09 -.78 1.87 -1.87z
M23.21 243.12q.78 1.09 1.87 1.87q-1.09 .78 -1.87 1.87q-.78 -1.09 -1.87 -1.87q1.09 -.78 1.87 -1.87z
M23.21 249.64q.78 1.09 1.87 1.87q-1.09 .78 -1.87 1.87q-.78 -1.09 -1.87 -1.87q1.09 -.78 1.87 -1.87z
M29.73 -4.64q.77 1.09 1.87 1.87q-1.09 .77 -1.87 1.87q-.77 -1.09 -1.87 -1.87q1.09 -.77 1.87 -1.87z
M29.73 1.88q.78 1.09 1.87 1.87q-1.09 .78 -1.87 1.87q-.78 -1.09 -1.87 -1.87q1.09 -.78 1.87 -1.87z
M29.73 8.4q.78 1.09 1.87 1.87q-1.09 .78 -1.87 1.87q-.78 -1.09 -1.87 -1.87q1.09 -.78 1.87 -1.87z
M29.73 14.92q.78 1.09 1.87 1.87q-1.09 .78 -1.87 1.87q-.78 -1.09 -1.87 -1.87q1.09 -.78 1.87 -1.87z
M29.73 21.44q.78 1.09 1.87 1.87q-1.09 .78 -1.87 1.87q-.78 -1.09 -1.87 -1.87q1.09 -.78 1.87 -1.87z
M29.73 27.96q.78 1.09 1.87 1.87q-1.09 .78 -1.87 1.87q-.78 -1.09 -1.87 -1.87q1.09 -.78 1.87 -1.87z
M29.73 34.48q.78 1.09 1.87 1.87q-1.09 .78 -1.87 1.87q-.78 -1.09 -1.87 -1.87q1.09 -.78 1.87 -1.87z
M29.73 41q.78 1.09 1.87 1.87q-1.09 .78 -1.87 1.87q-.78 -1.09 -1.87 -1.87q1.09 -.78 1.87 -1.87z
M29.73 47.52q.78 1.09 1.87 1.87q-1.09 .78 -1.87 1.87q-.78 -1.09 -1.87 -1.87q1.09 -.78 1.87 -1.87z
M29.73 54q.81 1.1 1.91 1.91q-1.1 .81 -1.91 1.91q-.81 -1.1 -1.91 -1.91q1.1 -.81 1.91 -1.91z
M29.73 60.48q.86 1.1 1.95 1.95q-1.1 .86 -1.95 1.95q-.86 -1.1 -1.95 -1.95q1.1 -.86 1.95 -1.95z
M29.73 66.94q.91 1.1 2.01 2.01q-1.1 .91 -2.01 2.01q-.91 -1.1 -2.01 -2.01q1.1 -.91 2.01 -2.01z
M29.73 73.39q.97 1.11 2.08 2.08q-1.11 .97 -2.08 2.08q-.97 -1.11 -2.08 -2.08q1.11 -.97 2.08 -2.08z
M29.73 79.85q1.03 1.11 2.14 2.14q-1.11 1.03 -2.14 2.14q-1.03 -1.11 -2.14 -2.14q1.11 -1.03 2.14 -2.14z
M29.73 86.3q1.09 1.13 2.21 2.21q-1.13 1.09 -2.21 2.21q-1.09 -1.13 -2.21 -2.21q1.13 -1.09 2.21 -2.21z
M29.73 92.75q1.14 1.14 2.28 2.28q-1.14 1.14 -2.28 2.28q-1.14 -1.14 -2.28 -2.28q1.14 -1.14 2.28 -2.28z
M29.73 99.21q1.17 1.17 2.34 2.34q-1.17 1.17 -2.34 2.34q-1.17 -1.17 -2.34 -2.34q1.17 -1.17 2.34 -2.34z
M29.73 105.68q1.2 1.2 2.39 2.39q-1.2 1.2 -2.39 2.39q-1.2 -1.2 -2.39 -2.39q1.2 -1.2 2.39 -2.39z
M29.73 112.15q1.22 1.22 2.44 2.44q-1.22 1.22 -2.44 2.44q-1.22 -1.22 -2.44 -2.44q1.22 -1.22 2.44 -2.44z
M29.73 118.63q1.24 1.24 2.48 2.48q-1.24 1.24 -2.48 2.48q-1.24 -1.24 -2.48 -2.48q1.24 -1.24 2.48 -2.48z
M29.73 125.13q1.25 1.25 2.5 2.5q-1.25 1.25 -2.5 2.5q-1.25 -1.25 -2.5 -2.5q1.25 -1.25 2.5 -2.5z
M29.73 131.64q1.25 1.25 2.51 2.51q-1.25 1.25 -2.51 2.51q-1.25 -1.25 -2.51 -2.51q1.25 -1.25 2.51 -2.51z
M29.73 138.17q1.25 1.25 2.5 2.5q-1.25 1.25 -2.5 2.5q-1.25 -1.25 -2.5 -2.5q1.25 -1.25 2.5 -2.5z
M29.73 144.71q1.24 1.24 2.48 2.48q-1.24 1.24 -2.48 2.48q-1.24 -1.24 -2.48 -2.48q1.24 -1.24 2.48 -2.48z
M29.73 151.26q1.22 1.22 2.45 2.45q-1.22 1.22 -2.45 2.45q-1.22 -1.22 -2.45 -2.45q1.22 -1.22 2.45 -2.45z
M29.73 157.83q1.2 1.2 2.4 2.4q-1.2 1.2 -2.4 2.4q-1.2 -1.2 -2.4 -2.4q1.2 -1.2 2.4 -2.4z
M29.73 164.4q1.18 1.18 2.35 2.35q-1.18 1.18 -2.35 2.35q-1.18 -1.18 -2.35 -2.35q1.18 -1.18 2.35 -2.35z
M29.73 170.98q1.15 1.15 2.29 2.29q-1.15 1.15 -2.29 2.29q-1.15 -1.15 -2.29 -2.29q1.15 -1.15 2.29 -2.29z
M29.73 177.56q1.1 1.13 2.23 2.23q-1.13 1.1 -2.23 2.23q-1.1 -1.13 -2.23 -2.23q1.13 -1.1 2.23 -2.23z
M29.73 184.16q1.04 1.11 2.15 2.15q-1.11 1.04 -2.15 2.15q-1.04 -1.11 -2.15 -2.15q1.11 -1.04 2.15 -2.15z
M29.73 190.74q.98 1.11 2.09 2.09q-1.11 .98 -2.09 2.09q-.98 -1.11 -2.09 -2.09q1.11 -.98 2.09 -2.09z
M29.73 197.33q.92 1.1 2.02 2.02q-1.1 .92 -2.02 2.02q-.92 -1.1 -2.02 -2.02q1.1 -.92 2.02 -2.02z
M29.73 203.91q.87 1.09 1.96 1.96q-1.09 .87 -1.96 1.96q-.87 -1.09 -1.96 -1.96q1.09 -.87 1.96 -1.96z
M29.73 210.47q.82 1.1 1.92 1.92q-1.1 .82 -1.92 1.92q-.82 -1.1 -1.92 -1.92q1.1 -.82 1.92 -1.92z
M29.73 217.03q.79 1.09 1.88 1.88q-1.09 .79 -1.88 1.88q-.79 -1.09 -1.88 -1.88q1.09 -.79 1.88 -1.88z
M29.73 223.56q.78 1.09 1.87 1.87q-1.09 .78 -1.87 1.87q-.78 -1.09 -1.87 -1.87q1.09 -.78 1.87 -1.87z
M29.73 230.08q.78 1.09 1.87 1.87q-1.09 .78 -1.87 1.87q-.78 -1.09 -1.87 -1.87q1.09 -.78 1.87 -1.87z
M29.73 236.6q.78 1.09 1.87 1.87q-1.09 .78 -1.87 1.87q-.78 -1.09 -1.87 -1.87q1.09 -.78 1.87 -1.87z
M29.73 243.12q.78 1.09 1.87 1.87q-1.09 .78 -1.87 1.87q-.78 -1.09 -1.87 -1.87q1.09 -.78 1.87 -1.87z
M29.73 249.64q.78 1.09 1.87 1.87q-1.09 .78 -1.87 1.87q-.78 -1.09 -1.87 -1.87q1.09 -.78 1.87 -1.87z
M36.25 -4.64q.78 1.09 1.87 1.87q-1.09 .78 -1.87 1.87q-.78 -1.09 -1.87 -1.87q1.09 -.78 1.87 -1.87z
M36.25 1.88q.78 1.09 1.87 1.87q-1.09 .78 -1.87 1.87q-.78 -1.09 -1.87 -1.87q1.09 -.78 1.87 -1.87z
M36.25 8.4q.78 1.09 1.87 1.87q-1.09 .78 -1.87 1.87q-.78 -1.09 -1.87 -1.87q1.09 -.78 1.87 -1.87z
M36.25 14.92q.78 1.09 1.87 1.87q-1.09 .78 -1.87 1.87q-.78 -1.09 -1.87 -1.87q1.09 -.78 1.87 -1.87z
M36.25 21.44q.78 1.09 1.87 1.87q-1.09 .78 -1.87 1.87q-.78 -1.09 -1.87 -1.87q1.09 -.78 1.87 -1.87z
M36.25 27.96q.78 1.09 1.87 1.87q-1.09 .78 -1.87 1.87q-.78 -1.09 -1.87 -1.87q1.09 -.78 1.87 -1.87z
M36.25 34.48q.78 1.09 1.87 1.87q-1.09 .78 -1.87 1.87q-.78 -1.09 -1.87 -1.87q1.09 -.78 1.87 -1.87z
M36.25 41q.78 1.09 1.87 1.87q-1.09 .78 -1.87 1.87q-.78 -1.09 -1.87 -1.87q1.09 -.78 1.87 -1.87z
M36.25 47.47q.82 1.1 1.92 1.92q-1.1 .82 -1.92 1.92q-.82 -1.1 -1.92 -1.92q1.1 -.82 1.92 -1.92z
M36.25 53.95q.87 1.09 1.96 1.96q-1.09 .87 -1.96 1.96q-.87 -1.09 -1.96 -1.96q1.09 -.87 1.96 -1.96z
M36.25 60.4q.93 1.1 2.03 2.03q-1.1 .93 -2.03 2.03q-.93 -1.1 -2.03 -2.03q1.1 -.93 2.03 -2.03z
M36.25 66.84q1 1.11 2.11 2.11q-1.11 1 -2.11 2.11q-1 -1.11 -2.11 -2.11q1.11 -1 2.11 -2.11z
M36.25 73.29q1.06 1.12 2.18 2.18q-1.12 1.06 -2.18 2.18q-1.06 -1.12 -2.18 -2.18q1.12 -1.06 2.18 -2.18z
M36.25 79.72q1.14 1.14 2.27 2.27q-1.14 1.14 -2.27 2.27q-1.14 -1.14 -2.27 -2.27q1.14 -1.14 2.27 -2.27z
M36.25 86.15q1.18 1.18 2.36 2.36q-1.18 1.18 -2.36 2.36q-1.18 -1.18 -2.36 -2.36q1.18 -1.18 2.36 -2.36z
M36.25 92.59q1.22 1.22 2.44 2.44q-1.22 1.22 -2.44 2.44q-1.22 -1.22 -2.44 -2.44q1.22 -1.22 2.44 -2.44z
M36.25 99.03q1.26 1.26 2.52 2.52q-1.26 1.26 -2.52 2.52q-1.26 -1.26 -2.52 -2.52q1.26 -1.26 2.52 -2.52z
M36.25 105.49q1.29 1.29 2.58 2.58q-1.29 1.29 -2.58 2.58q-1.29 -1.29 -2.58 -2.58q1.29 -1.29 2.58 -2.58z
M36.25 113.52q.53 .53 1.07 1.07q-.53 .53 -1.07 1.07q-.53 -.53 -1.07 -1.07q.53 -.53 1.07 -1.07z
M36.25 153.02q.34 .34 .69 .69q-.34 .34 -.69 .69q-.34 -.34 -.69 -.69q.34 -.34 .69 -.69z
M36.25 157.64q1.3 1.3 2.59 2.59q-1.3 1.3 -2.59 2.59q-1.3 -1.3 -2.59 -2.59q1.3 -1.3 2.59 -2.59z
M36.25 164.22q1.27 1.27 2.53 2.53q-1.27 1.27 -2.53 2.53q-1.27 -1.27 -2.53 -2.53q1.27 -1.27 2.53 -2.53z
M36.25 170.82q1.23 1.23 2.45 2.45q-1.23 1.23 -2.45 2.45q-1.23 -1.23 -2.45 -2.45q1.23 -1.23 2.45 -2.45z
M36.25 177.42q1.19 1.19 2.37 2.37q-1.19 1.19 -2.37 2.37q-1.19 -1.19 -2.37 -2.37q1.19 -1.19 2.37 -2.37z
M36.25 184.02q1.15 1.15 2.29 2.29q-1.15 1.15 -2.29 2.29q-1.15 -1.15 -2.29 -2.29q1.15 -1.15 2.29 -2.29z
M36.25 190.63q1.08 1.12 2.2 2.2q-1.12 1.08 -2.2 2.2q-1.08 -1.12 -2.2 -2.2q1.12 -1.08 2.2 -2.2z
M36.25 197.23q1.01 1.11 2.12 2.12q-1.11 1.01 -2.12 2.12q-1.01 -1.11 -2.12 -2.12q1.11 -1.01 2.12 -2.12z
M36.25 203.82q.94 1.1 2.05 2.05q-1.1 .94 -2.05 2.05q-.94 -1.1 -2.05 -2.05q1.1 -.94 2.05 -2.05z
M36.25 210.42q.88 1.09 1.97 1.97q-1.09 .88 -1.97 1.97q-.88 -1.09 -1.97 -1.97q1.09 -.88 1.97 -1.97z
M36.25 216.99q.83 1.1 1.92 1.92q-1.1 .83 -1.92 1.92q-.83 -1.1 -1.92 -1.92q1.1 -.83 1.92 -1.92z
M36.25 223.55q.79 1.09 1.88 1.88q-1.09 .79 -1.88 1.88q-.79 -1.09 -1.88 -1.88q1.09 -.79 1.88 -1.88z
M36.25 230.08q.78 1.09 1.87 1.87q-1.09 .78 -1.87 1.87q-.78 -1.09 -1.87 -1.87q1.09 -.78 1.87 -1.87z
M36.25 236.6q.78 1.09 1.87 1.87q-1.09 .78 -1.87 1.87q-.78 -1.09 -1.87 -1.87q1.09 -.78 1.87 -1.87z
M36.25 243.12q.78 1.09 1.87 1.87q-1.09 .78 -1.87 1.87q-.78 -1.09 -1.87 -1.87q1.09 -.78 1.87 -1.87z
M36.25 249.64q.78 1.09 1.87 1.87q-1.09 .78 -1.87 1.87q-.78 -1.09 -1.87 -1.87q1.09 -.78 1.87 -1.87z
M42.77 -4.64q.78 1.09 1.87 1.87q-1.09 .78 -1.87 1.87q-.78 -1.09 -1.87 -1.87q1.09 -.78 1.87 -1.87z
M42.77 1.88q.78 1.09 1.87 1.87q-1.09 .78 -1.87 1.87q-.78 -1.09 -1.87 -1.87q1.09 -.78 1.87 -1.87z
M42.77 8.4q.78 1.09 1.87 1.87q-1.09 .78 -1.87 1.87q-.78 -1.09 -1.87 -1.87q1.09 -.78 1.87 -1.87z
M42.77 14.92q.78 1.09 1.87 1.87q-1.09 .78 -1.87 1.87q-.78 -1.09 -1.87 -1.87q1.09 -.78 1.87 -1.87z
M42.77 21.44q.78 1.09 1.87 1.87q-1.09 .78 -1.87 1.87q-.78 -1.09 -1.87 -1.87q1.09 -.78 1.87 -1.87z
M42.77 27.96q.78 1.09 1.87 1.87q-1.09 .78 -1.87 1.87q-.78 -1.09 -1.87 -1.87q1.09 -.78 1.87 -1.87z
M42.77 34.48q.78 1.09 1.87 1.87q-1.09 .78 -1.87 1.87q-.78 -1.09 -1.87 -1.87q1.09 -.78 1.87 -1.87z
M42.77 40.96q.81 1.1 1.91 1.91q-1.1 .81 -1.91 1.91q-.81 -1.1 -1.91 -1.91q1.1 -.81 1.91 -1.91z
M42.77 47.43q.87 1.09 1.96 1.96q-1.09 .87 -1.96 1.96q-.87 -1.09 -1.96 -1.96q1.09 -.87 1.96 -1.96z
M42.77 53.87q.94 1.1 2.04 2.04q-1.1 .94 -2.04 2.04q-.94 -1.1 -2.04 -2.04q1.1 -.94 2.04 -2.04z
M42.77 60.31q1.01 1.11 2.12 2.12q-1.11 1.01 -2.12 2.12q-1.01 -1.11 -2.12 -2.12q1.11 -1.01 2.12 -2.12z
M42.77 66.74q1.09 1.13 2.21 2.21q-1.13 1.09 -2.21 2.21q-1.09 -1.13 -2.21 -2.21q1.13 -1.09 2.21 -2.21z
M42.77 73.15q1.16 1.16 2.32 2.32q-1.16 1.16 -2.32 2.32q-1.16 -1.16 -2.32 -2.32q1.16 -1.16 2.32 -2.32z
M42.77 79.58q1.21 1.21 2.41 2.41q-1.21 1.21 -2.41 2.41q-1.21 -1.21 -2.41 -2.41q1.21 -1.21 2.41 -2.41z
M42.77 85.99q1.26 1.26 2.52 2.52q-1.26 1.26 -2.52 2.52q-1.26 -1.26 -2.52 -2.52q1.26 -1.26 2.52 -2.52z
M42.77 93.16q.93 .93 1.87 1.87q-.93 .93 -1.87 1.87q-.93 -.93 -1.87 -1.87q.93 -.93 1.87 -1.87z
M42.77 172.16q.56 .56 1.11 1.11q-.56 .56 -1.11 1.11q-.56 -.56 -1.11 -1.11q.56 -.56 1.11 -1.11z
M42.77 177.25q1.27 1.27 2.54 2.54q-1.27 1.27 -2.54 2.54q-1.27 -1.27 -2.54 -2.54q1.27 -1.27 2.54 -2.54z
M42.77 183.87q1.22 1.22 2.44 2.44q-1.22 1.22 -2.44 2.44q-1.22 -1.22 -2.44 -2.44q1.22 -1.22 2.44 -2.44z
M42.77 190.49q1.17 1.17 2.34 2.34q-1.17 1.17 -2.34 2.34q-1.17 -1.17 -2.34 -2.34q1.17 -1.17 2.34 -2.34z
M42.77 197.11q1.1 1.13 2.24 2.24q-1.13 1.1 -2.24 2.24q-1.1 -1.13 -2.24 -2.24q1.13 -1.1 2.24 -2.24z
M42.77 203.74q1.02 1.11 2.13 2.13q-1.11 1.02 -2.13 2.13q-1.02 -1.11 -2.13 -2.13q1.11 -1.02 2.13 -2.13z
M42.77 210.34q.95 1.1 2.05 2.05q-1.1 .95 -2.05 2.05q-.95 -1.1 -2.05 -2.05q1.1 -.95 2.05 -2.05z
M42.77 216.94q.88 1.09 1.97 1.97q-1.09 .88 -1.97 1.97q-.88 -1.09 -1.97 -1.97q1.09 -.88 1.97 -1.97z
M42.77 223.51q.82 1.1 1.92 1.92q-1.1 .82 -1.92 1.92q-.82 -1.1 -1.92 -1.92q1.1 -.82 1.92 -1.92z
M42.77 230.08q.79 1.09 1.87 1.87q-1.09 .79 -1.87 1.87q-.79 -1.09 -1.87 -1.87q1.09 -.79 1.87 -1.87z
M42.77 236.6q.78 1.09 1.87 1.87q-1.09 .78 -1.87 1.87q-.78 -1.09 -1.87 -1.87q1.09 -.78 1.87 -1.87z
M42.77 243.12q.78 1.09 1.87 1.87q-1.09 .78 -1.87 1.87q-.78 -1.09 -1.87 -1.87q1.09 -.78 1.87 -1.87z
M42.77 249.64q.78 1.09 1.87 1.87q-1.09 .78 -1.87 1.87q-.78 -1.09 -1.87 -1.87q1.09 -.78 1.87 -1.87z
M49.29 -4.64q.78 1.09 1.87 1.87q-1.09 .78 -1.87 1.87q-.78 -1.09 -1.87 -1.87q1.09 -.78 1.87 -1.87z
M49.29 1.88q.78 1.09 1.87 1.87q-1.09 .78 -1.87 1.87q-.78 -1.09 -1.87 -1.87q1.09 -.78 1.87 -1.87z
M49.29 8.4q.78 1.09 1.87 1.87q-1.09 .78 -1.87 1.87q-.78 -1.09 -1.87 -1.87q1.09 -.78 1.87 -1.87z
M49.29 14.92q.78 1.09 1.87 1.87q-1.09 .78 -1.87 1.87q-.78 -1.09 -1.87 -1.87q1.09 -.78 1.87 -1.87z
M49.29 21.44q.78 1.09 1.87 1.87q-1.09 .78 -1.87 1.87q-.78 -1.09 -1.87 -1.87q1.09 -.78 1.87 -1.87z
M49.29 27.96q.78 1.09 1.87 1.87q-1.09 .78 -1.87 1.87q-.78 -1.09 -1.87 -1.87q1.09 -.78 1.87 -1.87z
M49.29 34.45q.8 1.1 1.9 1.9q-1.1 .8 -1.9 1.9q-.8 -1.1 -1.9 -1.9q1.1 -.8 1.9 -1.9z
M49.29 40.92q.86 1.1 1.95 1.95q-1.1 .86 -1.95 1.95q-.86 -1.1 -1.95 -1.95q1.1 -.86 1.95 -1.95z
M49.29 47.36q.93 1.1 2.03 2.03q-1.1 .93 -2.03 2.03q-.93 -1.1 -2.03 -2.03q1.1 -.93 2.03 -2.03z
M49.29 53.79q1.01 1.11 2.12 2.12q-1.11 1.01 -2.12 2.12q-1.01 -1.11 -2.12 -2.12q1.11 -1.01 2.12 -2.12z
M49.29 60.21q1.1 1.13 2.22 2.22q-1.13 1.1 -2.22 2.22q-1.1 -1.13 -2.22 -2.22q1.13 -1.1 2.22 -2.22z
M49.29 66.61q1.17 1.17 2.34 2.34q-1.17 1.17 -2.34 2.34q-1.17 -1.17 -2.34 -2.34q1.17 -1.17 2.34 -2.34z
M49.29 73.02q1.23 1.23 2.45 2.45q-1.23 1.23 -2.45 2.45q-1.23 -1.23 -2.45 -2.45q1.23 -1.23 2.45 -2.45z
M49.29 79.41q1.29 1.29 2.58 2.58q-1.29 1.29 -2.58 2.58q-1.29 -1.29 -2.58 -2.58q1.29 -1.29 2.58 -2.58z
M49.29 183.77q1.27 1.27 2.54 2.54q-1.27 1.27 -2.54 2.54q-1.27 -1.27 -2.54 -2.54q1.27 -1.27 2.54 -2.54z
M49.29 190.35q1.24 1.24 2.48 2.48q-1.24 1.24 -2.48 2.48q-1.24 -1.24 -2.48 -2.48q1.24 -1.24 2.48 -2.48z
M49.29 196.99q1.18 1.18 2.36 2.36q-1.18 1.18 -2.36 2.36q-1.18 -1.18 -2.36 -2.36q1.18 -1.18 2.36 -2.36z
M49.29 203.62q1.11 1.13 2.25 2.25q-1.13 1.11 -2.25 2.25q-1.11 -1.13 -2.25 -2.25q1.13 -1.11 2.25 -2.25z
M49.29 210.25q1.02 1.11 2.14 2.14q-1.11 1.02 -2.14 2.14q-1.02 -1.11 -2.14 -2.14q1.11 -1.02 2.14 -2.14z
M49.29 216.86q.94 1.1 2.05 2.05q-1.1 .94 -2.05 2.05q-.94 -1.1 -2.05 -2.05q1.1 -.94 2.05 -2.05z
M49.29 223.47q.87 1.09 1.96 1.96q-1.09 .87 -1.96 1.96q-.87 -1.09 -1.96 -1.96q1.09 -.87 1.96 -1.96z
M49.29 230.04q.81 1.1 1.91 1.91q-1.1 .81 -1.91 1.91q-.81 -1.1 -1.91 -1.91q1.1 -.81 1.91 -1.91z
M49.29 236.6q.78 1.09 1.87 1.87q-1.09 .78 -1.87 1.87q-.78 -1.09 -1.87 -1.87q1.09 -.78 1.87 -1.87z
M49.29 243.12q.78 1.09 1.87 1.87q-1.09 .78 -1.87 1.87q-.78 -1.09 -1.87 -1.87q1.09 -.78 1.87 -1.87z
M49.29 249.64q.78 1.09 1.87 1.87q-1.09 .78 -1.87 1.87q-.78 -1.09 -1.87 -1.87q1.09 -.78 1.87 -1.87z
M55.81 -4.64q.78 1.09 1.87 1.87q-1.09 .78 -1.87 1.87q-.78 -1.09 -1.87 -1.87q1.09 -.78 1.87 -1.87z
M55.81 1.88q.78 1.09 1.87 1.87q-1.09 .78 -1.87 1.87q-.78 -1.09 -1.87 -1.87q1.09 -.78 1.87 -1.87z
M55.81 8.4q.78 1.09 1.87 1.87q-1.09 .78 -1.87 1.87q-.78 -1.09 -1.87 -1.87q1.09 -.78 1.87 -1.87z
M55.81 14.92q.78 1.09 1.87 1.87q-1.09 .78 -1.87 1.87q-.78 -1.09 -1.87 -1.87q1.09 -.78 1.87 -1.87z
M55.81 21.44q.78 1.09 1.87 1.87q-1.09 .78 -1.87 1.87q-.78 -1.09 -1.87 -1.87q1.09 -.78 1.87 -1.87z
M55.81 27.95q.79 1.09 1.88 1.88q-1.09 .79 -1.88 1.88q-.79 -1.09 -1.88 -1.88q1.09 -.79 1.88 -1.88z
M55.81 34.41q.84 1.1 1.94 1.94q-1.1 .84 -1.94 1.94q-.84 -1.1 -1.94 -1.94q1.1 -.84 1.94 -1.94z
M55.81 40.86q.91 1.1 2.01 2.01q-1.1 .91 -2.01 2.01q-.91 -1.1 -2.01 -2.01q1.1 -.91 2.01 -2.01z
M55.81 47.29q.99 1.11 2.1 2.1q-1.11 .99 -2.1 2.1q-.99 -1.11 -2.1 -2.1q1.11 -.99 2.1 -2.1z
M55.81 53.7q1.09 1.13 2.21 2.21q-1.13 1.09 -2.21 2.21q-1.09 -1.13 -2.21 -2.21q1.13 -1.09 2.21 -2.21z
M55.81 60.09q1.17 1.17 2.34 2.34q-1.17 1.17 -2.34 2.34q-1.17 -1.17 -2.34 -2.34q1.17 -1.17 2.34 -2.34z
M55.81 66.48q1.23 1.23 2.47 2.47q-1.23 1.23 -2.47 2.47q-1.23 -1.23 -2.47 -2.47q1.23 -1.23 2.47 -2.47z
M55.81 73.14q1.17 1.17 2.33 2.33q-1.17 1.17 -2.33 2.33q-1.17 -1.17 -2.33 -2.33q1.17 -1.17 2.33 -2.33z
M55.81 191.63q.6 .6 1.2 1.2q-.6 .6 -1.2 1.2q-.6 -.6 -1.2 -1.2q.6 -.6 1.2 -1.2z
M55.81 196.85q1.25 1.25 2.5 2.5q-1.25 1.25 -2.5 2.5q-1.25 -1.25 -2.5 -2.5q1.25 -1.25 2.5 -2.5z
M55.81 203.51q1.18 1.18 2.36 2.36q-1.18 1.18 -2.36 2.36q-1.18 -1.18 -2.36 -2.36q1.18 -1.18 2.36 -2.36z
M55.81 210.15q1.11 1.13 2.24 2.24q-1.13 1.11 -2.24 2.24q-1.11 -1.13 -2.24 -2.24q1.13 -1.11 2.24 -2.24z
M55.81 216.79q1.01 1.11 2.12 2.12q-1.11 1.01 -2.12 2.12q-1.01 -1.11 -2.12 -2.12q1.11 -1.01 2.12 -2.12z
M55.81 223.4q.93 1.1 2.03 2.03q-1.1 .93 -2.03 2.03q-.93 -1.1 -2.03 -2.03q1.1 -.93 2.03 -2.03z
M55.81 230q.85 1.1 1.95 1.95q-1.1 .85 -1.95 1.95q-.85 -1.1 -1.95 -1.95q1.1 -.85 1.95 -1.95z
M55.81 236.58q.8 1.1 1.89 1.89q-1.1 .8 -1.89 1.89q-.8 -1.1 -1.89 -1.89q1.1 -.8 1.89 -1.89z
M55.81 243.12q.78 1.09 1.87 1.87q-1.09 .78 -1.87 1.87q-.78 -1.09 -1.87 -1.87q1.09 -.78 1.87 -1.87z
M55.81 249.64q.78 1.09 1.87 1.87q-1.09 .78 -1.87 1.87q-.78 -1.09 -1.87 -1.87q1.09 -.78 1.87 -1.87z
M62.33 -4.64q.78 1.09 1.87 1.87q-1.09 .78 -1.87 1.87q-.78 -1.09 -1.87 -1.87q1.09 -.78 1.87 -1.87z
M62.33 1.88q.78 1.09 1.87 1.87q-1.09 .78 -1.87 1.87q-.78 -1.09 -1.87 -1.87q1.09 -.78 1.87 -1.87z
M62.33 8.4q.78 1.09 1.87 1.87q-1.09 .78 -1.87 1.87q-.78 -1.09 -1.87 -1.87q1.09 -.78 1.87 -1.87z
M62.33 14.92q.78 1.09 1.87 1.87q-1.09 .78 -1.87 1.87q-.78 -1.09 -1.87 -1.87q1.09 -.78 1.87 -1.87z
M62.33 21.44q.78 1.09 1.87 1.87q-1.09 .78 -1.87 1.87q-.78 -1.09 -1.87 -1.87q1.09 -.78 1.87 -1.87z
M62.33 27.91q.82 1.1 1.92 1.92q-1.1 .82 -1.92 1.92q-.82 -1.1 -1.92 -1.92q1.1 -.82 1.92 -1.92z
M62.33 34.37q.88 1.09 1.98 1.98q-1.09 .88 -1.98 1.98q-.88 -1.09 -1.98 -1.98q1.09 -.88 1.98 -1.98z
M62.33 40.79q.97 1.11 2.08 2.08q-1.11 .97 -2.08 2.08q-.97 -1.11 -2.08 -2.08q1.11 -.97 2.08 -2.08z
M62.33 47.21q1.06 1.12 2.18 2.18q-1.12 1.06 -2.18 2.18q-1.06 -1.12 -2.18 -2.18q1.12 -1.06 2.18 -2.18z
M62.33 53.6q1.16 1.16 2.31 2.31q-1.16 1.16 -2.31 2.31q-1.16 -1.16 -2.31 -2.31q1.16 -1.16 2.31 -2.31z
M62.33 59.98q1.23 1.23 2.45 2.45q-1.23 1.23 -2.45 2.45q-1.23 -1.23 -2.45 -2.45q1.23 -1.23 2.45 -2.45z
M62.33 66.57q1.19 1.19 2.38 2.38q-1.19 1.19 -2.38 2.38q-1.19 -1.19 -2.38 -2.38q1.19 -1.19 2.38 -2.38z
M62.33 198.23q.56 .56 1.12 1.12q-.56 .56 -1.12 1.12q-.56 -.56 -1.12 -1.12q.56 -.56 1.12 -1.12z
M62.33 203.39q1.24 1.24 2.48 2.48q-1.24 1.24 -2.48 2.48q-1.24 -1.24 -2.48 -2.48q1.24 -1.24 2.48 -2.48z
M62.33 210.05q1.17 1.17 2.34 2.34q-1.17 1.17 -2.34 2.34q-1.17 -1.17 -2.34 -2.34q1.17 -1.17 2.34 -2.34z
M62.33 216.7q1.08 1.13 2.21 2.21q-1.13 1.08 -2.21 2.21q-1.08 -1.13 -2.21 -2.21q1.13 -1.08 2.21 -2.21z
M62.33 223.34q.99 1.11 2.09 2.09q-1.11 .99 -2.09 2.09q-.99 -1.11 -2.09 -2.09q1.11 -.99 2.09 -2.09z
M62.33 229.95q.9 1.1 2 2q-1.1 .9 -2 2q-.9 -1.1 -2 -2q1.1 -.9 2 -2z
M62.33 236.54q.83 1.1 1.93 1.93q-1.1 .83 -1.93 1.93q-.83 -1.1 -1.93 -1.93q1.1 -.83 1.93 -1.93z
M62.33 243.12q.79 1.09 1.87 1.87q-1.09 .79 -1.87 1.87q-.79 -1.09 -1.87 -1.87q1.09 -.79 1.87 -1.87z
M62.33 249.64q.78 1.09 1.87 1.87q-1.09 .78 -1.87 1.87q-.78 -1.09 -1.87 -1.87q1.09 -.78 1.87 -1.87z
M68.85 -4.64q.78 1.09 1.87 1.87q-1.09 .78 -1.87 1.87q-.78 -1.09 -1.87 -1.87q1.09 -.78 1.87 -1.87z
M68.85 1.88q.78 1.09 1.87 1.87q-1.09 .78 -1.87 1.87q-.78 -1.09 -1.87 -1.87q1.09 -.78 1.87 -1.87z
M68.85 8.4q.78 1.09 1.87 1.87q-1.09 .78 -1.87 1.87q-.78 -1.09 -1.87 -1.87q1.09 -.78 1.87 -1.87z
M68.85 14.92q.78 1.09 1.87 1.87q-1.09 .78 -1.87 1.87q-.78 -1.09 -1.87 -1.87q1.09 -.78 1.87 -1.87z
M68.85 21.42q.79 1.1 1.89 1.89q-1.1 .79 -1.89 1.89q-.79 -1.1 -1.89 -1.89q1.1 -.79 1.89 -1.89z
M68.85 27.88q.85 1.1 1.95 1.95q-1.1 .85 -1.95 1.95q-.85 -1.1 -1.95 -1.95q1.1 -.85 1.95 -1.95z
M68.85 34.32q.93 1.1 2.03 2.03q-1.1 .93 -2.03 2.03q-.93 -1.1 -2.03 -2.03q1.1 -.93 2.03 -2.03z
M68.85 40.73q1.02 1.11 2.14 2.14q-1.11 1.02 -2.14 2.14q-1.02 -1.11 -2.14 -2.14q1.11 -1.02 2.14 -2.14z
M68.85 47.12q1.13 1.14 2.27 2.27q-1.14 1.13 -2.27 2.27q-1.13 -1.14 -2.27 -2.27q1.14 -1.13 2.27 -2.27z
M68.85 53.5q1.2 1.2 2.41 2.41q-1.2 1.2 -2.41 2.41q-1.2 -1.2 -2.41 -2.41q1.2 -1.2 2.41 -2.41z
M68.85 59.86q1.29 1.29 2.57 2.57q-1.29 1.29 -2.57 2.57q-1.29 -1.29 -2.57 -2.57q1.29 -1.29 2.57 -2.57z
M68.85 203.57q1.15 1.15 2.3 2.3q-1.15 1.15 -2.3 2.3q-1.15 -1.15 -2.3 -2.3q1.15 -1.15 2.3 -2.3z
M68.85 209.95q1.22 1.22 2.44 2.44q-1.22 1.22 -2.44 2.44q-1.22 -1.22 -2.44 -2.44q1.22 -1.22 2.44 -2.44z
M68.85 216.61q1.15 1.15 2.3 2.3q-1.15 1.15 -2.3 2.3q-1.15 -1.15 -2.3 -2.3q1.15 -1.15 2.3 -2.3z
M68.85 223.27q1.04 1.12 2.16 2.16q-1.12 1.04 -2.16 2.16q-1.04 -1.12 -2.16 -2.16q1.12 -1.04 2.16 -2.16z
M68.85 229.9q.95 1.1 2.05 2.05q-1.1 .95 -2.05 2.05q-.95 -1.1 -2.05 -2.05q1.1 -.95 2.05 -2.05z
M68.85 236.51q.86 1.09 1.96 1.96q-1.09 .86 -1.96 1.96q-.86 -1.09 -1.96 -1.96q1.09 -.86 1.96 -1.96z
M68.85 243.09q.8 1.1 1.9 1.9q-1.1 .8 -1.9 1.9q-.8 -1.1 -1.9 -1.9q1.1 -.8 1.9 -1.9z
M68.85 249.64q.78 1.09 1.87 1.87q-1.09 .78 -1.87 1.87q-.78 -1.09 -1.87 -1.87q1.09 -.78 1.87 -1.87z
M75.37 -4.64q.78 1.09 1.87 1.87q-1.09 .78 -1.87 1.87q-.78 -1.09 -1.87 -1.87q1.09 -.78 1.87 -1.87z
M75.37 1.88q.78 1.09 1.87 1.87q-1.09 .78 -1.87 1.87q-.78 -1.09 -1.87 -1.87q1.09 -.78 1.87 -1.87z
M75.37 8.4q.78 1.09 1.87 1.87q-1.09 .78 -1.87 1.87q-.78 -1.09 -1.87 -1.87q1.09 -.78 1.87 -1.87z
M75.37 14.92q.78 1.09 1.87 1.87q-1.09 .78 -1.87 1.87q-.78 -1.09 -1.87 -1.87q1.09 -.78 1.87 -1.87z
M75.37 21.4q.81 1.1 1.91 1.91q-1.1 .81 -1.91 1.91q-.81 -1.1 -1.91 -1.91q1.1 -.81 1.91 -1.91z
M75.37 27.85q.88 1.09 1.98 1.98q-1.09 .88 -1.98 1.98q-.88 -1.09 -1.98 -1.98q1.09 -.88 1.98 -1.98z
M75.37 34.26q.98 1.11 2.09 2.09q-1.11 .98 -2.09 2.09q-.98 -1.11 -2.09 -2.09q1.11 -.98 2.09 -2.09z
M75.37 40.66q1.08 1.13 2.21 2.21q-1.13 1.08 -2.21 2.21q-1.08 -1.13 -2.21 -2.21q1.13 -1.08 2.21 -2.21z
M75.37 47.04q1.18 1.18 2.35 2.35q-1.18 1.18 -2.35 2.35q-1.18 -1.18 -2.35 -2.35q1.18 -1.18 2.35 -2.35z
M75.37 53.39q1.26 1.26 2.52 2.52q-1.26 1.26 -2.52 2.52q-1.26 -1.26 -2.52 -2.52q1.26 -1.26 2.52 -2.52z
M75.37 209.84q1.28 1.28 2.55 2.55q-1.28 1.28 -2.55 2.55q-1.28 -1.28 -2.55 -2.55q1.28 -1.28 2.55 -2.55z
M75.37 216.53q1.19 1.19 2.38 2.38q-1.19 1.19 -2.38 2.38q-1.19 -1.19 -2.38 -2.38q1.19 -1.19 2.38 -2.38z
M75.37 223.19q1.11 1.13 2.24 2.24q-1.13 1.11 -2.24 2.24q-1.11 -1.13 -2.24 -2.24q1.13 -1.11 2.24 -2.24z
M75.37 229.84q1 1.11 2.11 2.11q-1.11 1 -2.11 2.11q-1 -1.11 -2.11 -2.11q1.11 -1 2.11 -2.11z
M75.37 236.47q.9 1.1 2 2q-1.1 .9 -2 2q-.9 -1.1 -2 -2q1.1 -.9 2 -2z
M75.37 243.06q.83 1.1 1.93 1.93q-1.1 .83 -1.93 1.93q-.83 -1.1 -1.93 -1.93q1.1 -.83 1.93 -1.93z
M75.37 249.64q.78 1.09 1.87 1.87q-1.09 .78 -1.87 1.87q-.78 -1.09 -1.87 -1.87q1.09 -.78 1.87 -1.87z
M81.89 -4.64q.78 1.09 1.87 1.87q-1.09 .78 -1.87 1.87q-.78 -1.09 -1.87 -1.87q1.09 -.78 1.87 -1.87z
M81.89 1.88q.78 1.09 1.87 1.87q-1.09 .78 -1.87 1.87q-.78 -1.09 -1.87 -1.87q1.09 -.78 1.87 -1.87z
M81.89 8.4q.78 1.09 1.87 1.87q-1.09 .78 -1.87 1.87q-.78 -1.09 -1.87 -1.87q1.09 -.78 1.87 -1.87z
M81.89 14.91q.79 1.09 1.88 1.88q-1.09 .79 -1.88 1.88q-.79 -1.09 -1.88 -1.88q1.09 -.79 1.88 -1.88z
M81.89 21.37q.84 1.1 1.94 1.94q-1.1 .84 -1.94 1.94q-.84 -1.1 -1.94 -1.94q1.1 -.84 1.94 -1.94z
M81.89 27.81q.92 1.1 2.02 2.02q-1.1 .92 -2.02 2.02q-.92 -1.1 -2.02 -2.02q1.1 -.92 2.02 -2.02z
M81.89 34.22q1.02 1.11 2.13 2.13q-1.11 1.02 -2.13 2.13q-1.02 -1.11 -2.13 -2.13q1.11 -1.02 2.13 -2.13z
M81.89 40.59q1.14 1.14 2.28 2.28q-1.14 1.14 -2.28 2.28q-1.14 -1.14 -2.28 -2.28q1.14 -1.14 2.28 -2.28z
M81.89 46.96q1.22 1.22 2.43 2.43q-1.22 1.22 -2.43 2.43q-1.22 -1.22 -2.43 -2.43q1.22 -1.22 2.43 -2.43z
M81.89 53.78q1.07 1.07 2.13 2.13q-1.07 1.07 -2.13 2.13q-1.07 -1.07 -2.13 -2.13q1.07 -1.07 2.13 -2.13z
M81.89 211.77q.31 .31 .62 .62q-.31 .31 -.62 .62q-.31 -.31 -.62 -.62q.31 -.31 .62 -.62z
M81.89 216.44q1.23 1.23 2.47 2.47q-1.23 1.23 -2.47 2.47q-1.23 -1.23 -2.47 -2.47q1.23 -1.23 2.47 -2.47z
M81.89 223.12q1.15 1.15 2.31 2.31q-1.15 1.15 -2.31 2.31q-1.15 -1.15 -2.31 -2.31q1.15 -1.15 2.31 -2.31z
M81.89 229.8q1.04 1.12 2.15 2.15q-1.12 1.04 -2.15 2.15q-1.04 -1.12 -2.15 -2.15q1.12 -1.04 2.15 -2.15z
M81.89 236.43q.94 1.1 2.04 2.04q-1.1 .94 -2.04 2.04q-.94 -1.1 -2.04 -2.04q1.1 -.94 2.04 -2.04z
M81.89 243.04q.85 1.1 1.95 1.95q-1.1 .85 -1.95 1.95q-.85 -1.1 -1.95 -1.95q1.1 -.85 1.95 -1.95z
M81.89 249.62q.79 1.1 1.89 1.89q-1.1 .79 -1.89 1.89q-.79 -1.1 -1.89 -1.89q1.1 -.79 1.89 -1.89z
M88.41 -4.64q.78 1.09 1.87 1.87q-1.09 .78 -1.87 1.87q-.78 -1.09 -1.87 -1.87q1.09 -.78 1.87 -1.87z
M88.41 1.88q.78 1.09 1.87 1.87q-1.09 .78 -1.87 1.87q-.78 -1.09 -1.87 -1.87q1.09 -.78 1.87 -1.87z
M88.41 8.4q.78 1.09 1.87 1.87q-1.09 .78 -1.87 1.87q-.78 -1.09 -1.87 -1.87q1.09 -.78 1.87 -1.87z
M88.41 14.89q.8 1.1 1.9 1.9q-1.1 .8 -1.9 1.9q-.8 -1.1 -1.9 -1.9q1.1 -.8 1.9 -1.9z
M88.41 21.35q.86 1.09 1.96 1.96q-1.09 .86 -1.96 1.96q-.86 -1.09 -1.96 -1.96q1.09 -.86 1.96 -1.96z
M88.41 27.77q.96 1.1 2.06 2.06q-1.1 .96 -2.06 2.06q-.96 -1.1 -2.06 -2.06q1.1 -.96 2.06 -2.06z
M88.41 34.17q1.06 1.12 2.18 2.18q-1.12 1.06 -2.18 2.18q-1.06 -1.12 -2.18 -2.18q1.12 -1.06 2.18 -2.18z
M88.41 40.54q1.17 1.17 2.33 2.33q-1.17 1.17 -2.33 2.33q-1.17 -1.17 -2.33 -2.33q1.17 -1.17 2.33 -2.33z
M88.41 46.88q1.25 1.25 2.51 2.51q-1.25 1.25 -2.51 2.51q-1.25 -1.25 -2.51 -2.51q1.25 -1.25 2.51 -2.51z
M88.41 216.36q1.27 1.27 2.55 2.55q-1.27 1.27 -2.55 2.55q-1.27 -1.27 -2.55 -2.55q1.27 -1.27 2.55 -2.55z
M88.41 223.06q1.18 1.18 2.37 2.37q-1.18 1.18 -2.37 2.37q-1.18 -1.18 -2.37 -2.37q1.18 -1.18 2.37 -2.37z
M88.41 229.74q1.09 1.13 2.21 2.21q-1.13 1.09 -2.21 2.21q-1.09 -1.13 -2.21 -2.21q1.13 -1.09 2.21 -2.21z
M88.41 236.39q.98 1.11 2.08 2.08q-1.11 .98 -2.08 2.08q-.98 -1.11 -2.08 -2.08q1.11 -.98 2.08 -2.08z
M88.41 243.02q.88 1.09 1.97 1.97q-1.09 .88 -1.97 1.97q-.88 -1.09 -1.97 -1.97q1.09 -.88 1.97 -1.97z
M88.41 249.6q.81 1.1 1.91 1.91q-1.1 .81 -1.91 1.91q-.81 -1.1 -1.91 -1.91q1.1 -.81 1.91 -1.91z
M94.93 -4.64q.78 1.09 1.87 1.87q-1.09 .78 -1.87 1.87q-.78 -1.09 -1.87 -1.87q1.09 -.78 1.87 -1.87z
M94.93 1.88q.78 1.09 1.87 1.87q-1.09 .78 -1.87 1.87q-.78 -1.09 -1.87 -1.87q1.09 -.78 1.87 -1.87z
M94.93 8.4q.78 1.09 1.87 1.87q-1.09 .78 -1.87 1.87q-.78 -1.09 -1.87 -1.87q1.09 -.78 1.87 -1.87z
M94.93 14.88q.81 1.1 1.91 1.91q-1.1 .81 -1.91 1.91q-.81 -1.1 -1.91 -1.91q1.1 -.81 1.91 -1.91z
M94.93 21.33q.88 1.09 1.98 1.98q-1.09 .88 -1.98 1.98q-.88 -1.09 -1.98 -1.98q1.09 -.88 1.98 -1.98z
M94.93 27.74q.98 1.11 2.09 2.09q-1.11 .98 -2.09 2.09q-.98 -1.11 -2.09 -2.09q1.11 -.98 2.09 -2.09z
M94.93 34.12q1.1 1.13 2.23 2.23q-1.13 1.1 -2.23 2.23q-1.1 -1.13 -2.23 -2.23q1.13 -1.1 2.23 -2.23z
M94.93 40.49q1.19 1.19 2.38 2.38q-1.19 1.19 -2.38 2.38q-1.19 -1.19 -2.38 -2.38q1.19 -1.19 2.38 -2.38z
M94.93 46.82q1.29 1.29 2.57 2.57q-1.29 1.29 -2.57 2.57q-1.29 -1.29 -2.57 -2.57q1.29 -1.29 2.57 -2.57z
M94.93 216.81q1.05 1.05 2.1 2.1q-1.05 1.05 -2.1 2.1q-1.05 -1.05 -2.1 -2.1q1.05 -1.05 2.1 -2.1z
M94.93 223.01q1.21 1.21 2.42 2.42q-1.21 1.21 -2.42 2.42q-1.21 -1.21 -2.42 -2.42q1.21 -1.21 2.42 -2.42z
M94.93 229.69q1.12 1.13 2.26 2.26q-1.13 1.12 -2.26 2.26q-1.12 -1.13 -2.26 -2.26q1.13 -1.12 2.26 -2.26z
M94.93 236.36q1 1.11 2.11 2.11q-1.11 1 -2.11 2.11q-1 -1.11 -2.11 -2.11q1.11 -1 2.11 -2.11z
M94.93 242.99q.9 1.1 2 2q-1.1 .9 -2 2q-.9 -1.1 -2 -2q1.1 -.9 2 -2z
M94.93 249.59q.82 1.1 1.92 1.92q-1.1 .82 -1.92 1.92q-.82 -1.1 -1.92 -1.92q1.1 -.82 1.92 -1.92z
M101.45 -4.64q.78 1.09 1.87 1.87q-1.09 .78 -1.87 1.87q-.78 -1.09 -1.87 -1.87q1.09 -.78 1.87 -1.87z
M101.45 1.88q.78 1.09 1.87 1.87q-1.09 .78 -1.87 1.87q-.78 -1.09 -1.87 -1.87q1.09 -.78 1.87 -1.87z
M101.45 8.4q.78 1.09 1.87 1.87q-1.09 .78 -1.87 1.87q-.78 -1.09 -1.87 -1.87q1.09 -.78 1.87 -1.87z
M101.45 14.87q.82 1.1 1.92 1.92q-1.1 .82 -1.92 1.92q-.82 -1.1 -1.92 -1.92q1.1 -.82 1.92 -1.92z
M101.45 21.31q.9 1.1 2 2q-1.1 .9 -2 2q-.9 -1.1 -2 -2q1.1 -.9 2 -2z
M101.45 27.71q1.01 1.11 2.12 2.12q-1.11 1.01 -2.12 2.12q-1.01 -1.11 -2.12 -2.12q1.11 -1.01 2.12 -2.12z
M101.45 34.09q1.13 1.14 2.26 2.26q-1.14 1.13 -2.26 2.26q-1.13 -1.14 -2.26 -2.26q1.14 -1.13 2.26 -2.26z
M101.45 40.44q1.21 1.21 2.43 2.43q-1.21 1.21 -2.43 2.43q-1.21 -1.21 -2.43 -2.43q1.21 -1.21 2.43 -2.43z
M101.45 47.88q.76 .76 1.51 1.51q-.76 .76 -1.51 1.51q-.76 -.76 -1.51 -1.51q.76 -.76 1.51 -1.51z
M101.45 222.96q1.23 1.23 2.47 2.47q-1.23 1.23 -2.47 2.47q-1.23 -1.23 -2.47 -2.47q1.23 -1.23 2.47 -2.47z
M101.45 229.65q1.15 1.15 2.3 2.3q-1.15 1.15 -2.3 2.3q-1.15 -1.15 -2.3 -2.3q1.15 -1.15 2.3 -2.3z
M101.45 236.33q1.03 1.11 2.14 2.14q-1.11 1.03 -2.14 2.14q-1.03 -1.11 -2.14 -2.14q1.11 -1.03 2.14 -2.14z
M101.45 242.97q.92 1.1 2.02 2.02q-1.1 .92 -2.02 2.02q-.92 -1.1 -2.02 -2.02q1.1 -.92 2.02 -2.02z
M101.45 249.57q.84 1.1 1.94 1.94q-1.1 .84 -1.94 1.94q-.84 -1.1 -1.94 -1.94q1.1 -.84 1.94 -1.94z
M107.97 -4.64q.78 1.09 1.87 1.87q-1.09 .78 -1.87 1.87q-.78 -1.09 -1.87 -1.87q1.09 -.78 1.87 -1.87z
M107.97 1.88q.78 1.09 1.87 1.87q-1.09 .78 -1.87 1.87q-.78 -1.09 -1.87 -1.87q1.09 -.78 1.87 -1.87z
M107.97 8.4q.78 1.09 1.87 1.87q-1.09 .78 -1.87 1.87q-.78 -1.09 -1.87 -1.87q1.09 -.78 1.87 -1.87z
M107.97 14.86q.83 1.1 1.93 1.93q-1.1 .83 -1.93 1.93q-.83 -1.1 -1.93 -1.93q1.1 -.83 1.93 -1.93z
M107.97 21.29q.92 1.1 2.02 2.02q-1.1 .92 -2.02 2.02q-.92 -1.1 -2.02 -2.02q1.1 -.92 2.02 -2.02z
M107.97 27.69q1.02 1.11 2.14 2.14q-1.11 1.02 -2.14 2.14q-1.02 -1.11 -2.14 -2.14q1.11 -1.02 2.14 -2.14z
M107.97 34.06q1.15 1.15 2.29 2.29q-1.15 1.15 -2.29 2.29q-1.15 -1.15 -2.29 -2.29q1.15 -1.15 2.29 -2.29z
M107.97 40.4q1.23 1.23 2.47 2.47q-1.23 1.23 -2.47 2.47q-1.23 -1.23 -2.47 -2.47q1.23 -1.23 2.47 -2.47z
M107.97 222.93q1.25 1.25 2.5 2.5q-1.25 1.25 -2.5 2.5q-1.25 -1.25 -2.5 -2.5q1.25 -1.25 2.5 -2.5z
M107.97 229.63q1.16 1.16 2.32 2.32q-1.16 1.16 -2.32 2.32q-1.16 -1.16 -2.32 -2.32q1.16 -1.16 2.32 -2.32z
M107.97 236.31q1.05 1.12 2.16 2.16q-1.12 1.05 -2.16 2.16q-1.05 -1.12 -2.16 -2.16q1.12 -1.05 2.16 -2.16z
M107.97 242.95q.94 1.1 2.04 2.04q-1.1 .94 -2.04 2.04q-.94 -1.1 -2.04 -2.04q1.1 -.94 2.04 -2.04z
M107.97 249.56q.85 1.1 1.95 1.95q-1.1 .85 -1.95 1.95q-.85 -1.1 -1.95 -1.95q1.1 -.85 1.95 -1.95z
M114.49 -4.64q.78 1.09 1.87 1.87q-1.09 .78 -1.87 1.87q-.78 -1.09 -1.87 -1.87q1.09 -.78 1.87 -1.87z
M114.49 1.88q.78 1.09 1.87 1.87q-1.09 .78 -1.87 1.87q-.78 -1.09 -1.87 -1.87q1.09 -.78 1.87 -1.87z
M114.49 8.4q.79 1.09 1.87 1.87q-1.09 .79 -1.87 1.87q-.79 -1.09 -1.87 -1.87q1.09 -.79 1.87 -1.87z
M114.49 14.85q.84 1.1 1.94 1.94q-1.1 .84 -1.94 1.94q-.84 -1.1 -1.94 -1.94q1.1 -.84 1.94 -1.94z
M114.49 21.28q.93 1.1 2.03 2.03q-1.1 .93 -2.03 2.03q-.93 -1.1 -2.03 -2.03q1.1 -.93 2.03 -2.03z
M114.49 27.68q1.03 1.11 2.15 2.15q-1.11 1.03 -2.15 2.15q-1.03 -1.11 -2.15 -2.15q1.11 -1.03 2.15 -2.15z
M114.49 34.04q1.15 1.15 2.31 2.31q-1.15 1.15 -2.31 2.31q-1.15 -1.15 -2.31 -2.31q1.15 -1.15 2.31 -2.31z
M114.49 40.38q1.24 1.24 2.49 2.49q-1.24 1.24 -2.49 2.49q-1.24 -1.24 -2.49 -2.49q1.24 -1.24 2.49 -2.49z
M114.49 222.9q1.26 1.26 2.53 2.53q-1.26 1.26 -2.53 2.53q-1.26 -1.26 -2.53 -2.53q1.26 -1.26 2.53 -2.53z
M114.49 229.61q1.17 1.17 2.34 2.34q-1.17 1.17 -2.34 2.34q-1.17 -1.17 -2.34 -2.34q1.17 -1.17 2.34 -2.34z
M114.49 236.29q1.06 1.12 2.18 2.18q-1.12 1.06 -2.18 2.18q-1.06 -1.12 -2.18 -2.18q1.12 -1.06 2.18 -2.18z
M114.49 242.94q.95 1.1 2.05 2.05q-1.1 .95 -2.05 2.05q-.95 -1.1 -2.05 -2.05q1.1 -.95 2.05 -2.05z
M114.49 249.56q.86 1.1 1.95 1.95q-1.1 .86 -1.95 1.95q-.86 -1.1 -1.95 -1.95q1.1 -.86 1.95 -1.95z
M121.01 -4.64q.78 1.09 1.87 1.87q-1.09 .78 -1.87 1.87q-.78 -1.09 -1.87 -1.87q1.09 -.78 1.87 -1.87z
M121.01 1.88q.78 1.09 1.87 1.87q-1.09 .78 -1.87 1.87q-.78 -1.09 -1.87 -1.87q1.09 -.78 1.87 -1.87z
M121.01 8.4q.79 1.09 1.87 1.87q-1.09 .79 -1.87 1.87q-.79 -1.09 -1.87 -1.87q1.09 -.79 1.87 -1.87z
M121.01 14.85q.84 1.1 1.94 1.94q-1.1 .84 -1.94 1.94q-.84 -1.1 -1.94 -1.94q1.1 -.84 1.94 -1.94z
M121.01 21.28q.93 1.1 2.03 2.03q-1.1 .93 -2.03 2.03q-.93 -1.1 -2.03 -2.03q1.1 -.93 2.03 -2.03z
M121.01 27.68q1.04 1.11 2.15 2.15q-1.11 1.04 -2.15 2.15q-1.04 -1.11 -2.15 -2.15q1.11 -1.04 2.15 -2.15z
M121.01 34.04q1.16 1.16 2.31 2.31q-1.16 1.16 -2.31 2.31q-1.16 -1.16 -2.31 -2.31q1.16 -1.16 2.31 -2.31z
M121.01 40.38q1.25 1.25 2.49 2.49q-1.25 1.25 -2.49 2.49q-1.25 -1.25 -2.49 -2.49q1.25 -1.25 2.49 -2.49z
M121.01 222.9q1.27 1.27 2.53 2.53q-1.27 1.27 -2.53 2.53q-1.27 -1.27 -2.53 -2.53q1.27 -1.27 2.53 -2.53z
M121.01 229.6q1.17 1.17 2.35 2.35q-1.17 1.17 -2.35 2.35q-1.17 -1.17 -2.35 -2.35q1.17 -1.17 2.35 -2.35z
M121.01 236.29q1.06 1.12 2.18 2.18q-1.12 1.06 -2.18 2.18q-1.06 -1.12 -2.18 -2.18q1.12 -1.06 2.18 -2.18z
M121.01 242.93q.95 1.1 2.06 2.06q-1.1 .95 -2.06 2.06q-.95 -1.1 -2.06 -2.06q1.1 -.95 2.06 -2.06z
M121.01 249.56q.86 1.1 1.95 1.95q-1.1 .86 -1.95 1.95q-.86 -1.1 -1.95 -1.95q1.1 -.86 1.95 -1.95z
M127.53 -4.64q.78 1.09 1.87 1.87q-1.09 .78 -1.87 1.87q-.78 -1.09 -1.87 -1.87q1.09 -.78 1.87 -1.87z
M127.53 1.88q.78 1.09 1.87 1.87q-1.09 .78 -1.87 1.87q-.78 -1.09 -1.87 -1.87q1.09 -.78 1.87 -1.87z
M127.53 8.4q.79 1.09 1.87 1.87q-1.09 .79 -1.87 1.87q-.79 -1.09 -1.87 -1.87q1.09 -.79 1.87 -1.87z
M127.53 14.85q.84 1.1 1.94 1.94q-1.1 .84 -1.94 1.94q-.84 -1.1 -1.94 -1.94q1.1 -.84 1.94 -1.94z
M127.53 21.28q.93 1.1 2.03 2.03q-1.1 .93 -2.03 2.03q-.93 -1.1 -2.03 -2.03q1.1 -.93 2.03 -2.03z
M127.53 27.68q1.03 1.11 2.15 2.15q-1.11 1.03 -2.15 2.15q-1.03 -1.11 -2.15 -2.15q1.11 -1.03 2.15 -2.15z
M127.53 34.04q1.15 1.15 2.31 2.31q-1.15 1.15 -2.31 2.31q-1.15 -1.15 -2.31 -2.31q1.15 -1.15 2.31 -2.31z
M127.53 40.38q1.24 1.24 2.49 2.49q-1.24 1.24 -2.49 2.49q-1.24 -1.24 -2.49 -2.49q1.24 -1.24 2.49 -2.49z
M127.53 222.9q1.26 1.26 2.53 2.53q-1.26 1.26 -2.53 2.53q-1.26 -1.26 -2.53 -2.53q1.26 -1.26 2.53 -2.53z
M127.53 229.61q1.17 1.17 2.34 2.34q-1.17 1.17 -2.34 2.34q-1.17 -1.17 -2.34 -2.34q1.17 -1.17 2.34 -2.34z
M127.53 236.29q1.06 1.12 2.18 2.18q-1.12 1.06 -2.18 2.18q-1.06 -1.12 -2.18 -2.18q1.12 -1.06 2.18 -2.18z
M127.53 242.94q.95 1.1 2.05 2.05q-1.1 .95 -2.05 2.05q-.95 -1.1 -2.05 -2.05q1.1 -.95 2.05 -2.05z
M127.53 249.56q.86 1.1 1.95 1.95q-1.1 .86 -1.95 1.95q-.86 -1.1 -1.95 -1.95q1.1 -.86 1.95 -1.95z
M134.05 -4.64q.78 1.09 1.87 1.87q-1.09 .78 -1.87 1.87q-.78 -1.09 -1.87 -1.87q1.09 -.78 1.87 -1.87z
M134.05 1.88q.78 1.09 1.87 1.87q-1.09 .78 -1.87 1.87q-.78 -1.09 -1.87 -1.87q1.09 -.78 1.87 -1.87z
M134.05 8.4q.78 1.09 1.87 1.87q-1.09 .78 -1.87 1.87q-.78 -1.09 -1.87 -1.87q1.09 -.78 1.87 -1.87z
M134.05 14.86q.83 1.1 1.93 1.93q-1.1 .83 -1.93 1.93q-.83 -1.1 -1.93 -1.93q1.1 -.83 1.93 -1.93z
M134.05 21.29q.92 1.1 2.02 2.02q-1.1 .92 -2.02 2.02q-.92 -1.1 -2.02 -2.02q1.1 -.92 2.02 -2.02z
M134.05 27.69q1.02 1.11 2.14 2.14q-1.11 1.02 -2.14 2.14q-1.02 -1.11 -2.14 -2.14q1.11 -1.02 2.14 -2.14z
M134.05 34.06q1.15 1.15 2.29 2.29q-1.15 1.15 -2.29 2.29q-1.15 -1.15 -2.29 -2.29q1.15 -1.15 2.29 -2.29z
M134.05 40.4q1.23 1.23 2.47 2.47q-1.23 1.23 -2.47 2.47q-1.23 -1.23 -2.47 -2.47q1.23 -1.23 2.47 -2.47z
M134.05 222.92q1.25 1.25 2.51 2.51q-1.25 1.25 -2.51 2.51q-1.25 -1.25 -2.51 -2.51q1.25 -1.25 2.51 -2.51z
M134.05 229.62q1.16 1.16 2.33 2.33q-1.16 1.16 -2.33 2.33q-1.16 -1.16 -2.33 -2.33q1.16 -1.16 2.33 -2.33z
M134.05 236.31q1.05 1.12 2.16 2.16q-1.12 1.05 -2.16 2.16q-1.05 -1.12 -2.16 -2.16q1.12 -1.05 2.16 -2.16z
M134.05 242.95q.94 1.1 2.04 2.04q-1.1 .94 -2.04 2.04q-.94 -1.1 -2.04 -2.04q1.1 -.94 2.04 -2.04z
M134.05 249.56q.85 1.1 1.95 1.95q-1.1 .85 -1.95 1.95q-.85 -1.1 -1.95 -1.95q1.1 -.85 1.95 -1.95z
M140.57 -4.64q.78 1.09 1.87 1.87q-1.09 .78 -1.87 1.87q-.78 -1.09 -1.87 -1.87q1.09 -.78 1.87 -1.87z
M140.57 1.88q.78 1.09 1.87 1.87q-1.09 .78 -1.87 1.87q-.78 -1.09 -1.87 -1.87q1.09 -.78 1.87 -1.87z
M140.57 8.4q.78 1.09 1.87 1.87q-1.09 .78 -1.87 1.87q-.78 -1.09 -1.87 -1.87q1.09 -.78 1.87 -1.87z
M140.57 14.87q.82 1.1 1.92 1.92q-1.1 .82 -1.92 1.92q-.82 -1.1 -1.92 -1.92q1.1 -.82 1.92 -1.92z
M140.57 21.31q.91 1.1 2 2q-1.1 .91 -2 2q-.91 -1.1 -2 -2q1.1 -.91 2 -2z
M140.57 27.71q1.01 1.11 2.12 2.12q-1.11 1.01 -2.12 2.12q-1.01 -1.11 -2.12 -2.12q1.11 -1.01 2.12 -2.12z
M140.57 34.08q1.13 1.14 2.27 2.27q-1.14 1.13 -2.27 2.27q-1.13 -1.14 -2.27 -2.27q1.14 -1.13 2.27 -2.27z
M140.57 40.44q1.22 1.22 2.43 2.43q-1.22 1.22 -2.43 2.43q-1.22 -1.22 -2.43 -2.43q1.22 -1.22 2.43 -2.43z
M140.57 47.99q.7 .7 1.4 1.4q-.7 .7 -1.4 1.4q-.7 -.7 -1.4 -1.4q.7 -.7 1.4 -1.4z
M140.57 222.96q1.24 1.24 2.47 2.47q-1.24 1.24 -2.47 2.47q-1.24 -1.24 -2.47 -2.47q1.24 -1.24 2.47 -2.47z
M140.57 229.65q1.15 1.15 2.3 2.3q-1.15 1.15 -2.3 2.3q-1.15 -1.15 -2.3 -2.3q1.15 -1.15 2.3 -2.3z
M140.57 236.33q1.03 1.11 2.14 2.14q-1.11 1.03 -2.14 2.14q-1.03 -1.11 -2.14 -2.14q1.11 -1.03 2.14 -2.14z
M140.57 242.96q.93 1.1 2.03 2.03q-1.1 .93 -2.03 2.03q-.93 -1.1 -2.03 -2.03q1.1 -.93 2.03 -2.03z
M140.57 249.57q.84 1.1 1.94 1.94q-1.1 .84 -1.94 1.94q-.84 -1.1 -1.94 -1.94q1.1 -.84 1.94 -1.94z
M147.09 -4.64q.78 1.09 1.87 1.87q-1.09 .78 -1.87 1.87q-.78 -1.09 -1.87 -1.87q1.09 -.78 1.87 -1.87z
M147.09 1.88q.78 1.09 1.87 1.87q-1.09 .78 -1.87 1.87q-.78 -1.09 -1.87 -1.87q1.09 -.78 1.87 -1.87z
M147.09 8.4q.78 1.09 1.87 1.87q-1.09 .78 -1.87 1.87q-.78 -1.09 -1.87 -1.87q1.09 -.78 1.87 -1.87z
M147.09 14.88q.81 1.1 1.91 1.91q-1.1 .81 -1.91 1.91q-.81 -1.1 -1.91 -1.91q1.1 -.81 1.91 -1.91z
M147.09 21.33q.89 1.09 1.98 1.98q-1.09 .89 -1.98 1.98q-.89 -1.09 -1.98 -1.98q1.09 -.89 1.98 -1.98z
M147.09 27.74q.99 1.11 2.09 2.09q-1.11 .99 -2.09 2.09q-.99 -1.11 -2.09 -2.09q1.11 -.99 2.09 -2.09z
M147.09 34.12q1.1 1.13 2.23 2.23q-1.13 1.1 -2.23 2.23q-1.1 -1.13 -2.23 -2.23q1.13 -1.1 2.23 -2.23z
M147.09 40.48q1.19 1.19 2.39 2.39q-1.19 1.19 -2.39 2.39q-1.19 -1.19 -2.39 -2.39q1.19 -1.19 2.39 -2.39z
M147.09 46.81q1.29 1.29 2.58 2.58q-1.29 1.29 -2.58 2.58q-1.29 -1.29 -2.58 -2.58q1.29 -1.29 2.58 -2.58z
M147.09 216.95q.98 .98 1.96 1.96q-.98 .98 -1.96 1.96q-.98 -.98 -1.96 -1.96q.98 -.98 1.96 -1.96z
M147.09 223.01q1.21 1.21 2.42 2.42q-1.21 1.21 -2.42 2.42q-1.21 -1.21 -2.42 -2.42q1.21 -1.21 2.42 -2.42z
M147.09 229.69q1.13 1.14 2.26 2.26q-1.14 1.13 -2.26 2.26q-1.13 -1.14 -2.26 -2.26q1.14 -1.13 2.26 -2.26z
M147.09 236.35q1.01 1.11 2.12 2.12q-1.11 1.01 -2.12 2.12q-1.01 -1.11 -2.12 -2.12q1.11 -1.01 2.12 -2.12z
M147.09 242.99q.91 1.1 2 2q-1.1 .91 -2 2q-.91 -1.1 -2 -2q1.1 -.91 2 -2z
M147.09 249.59q.83 1.1 1.92 1.92q-1.1 .83 -1.92 1.92q-.83 -1.1 -1.92 -1.92q1.1 -.83 1.92 -1.92z
M153.61 -4.64q.78 1.09 1.87 1.87q-1.09 .78 -1.87 1.87q-.78 -1.09 -1.87 -1.87q1.09 -.78 1.87 -1.87z
M153.61 1.88q.78 1.09 1.87 1.87q-1.09 .78 -1.87 1.87q-.78 -1.09 -1.87 -1.87q1.09 -.78 1.87 -1.87z
M153.61 8.4q.78 1.09 1.87 1.87q-1.09 .78 -1.87 1.87q-.78 -1.09 -1.87 -1.87q1.09 -.78 1.87 -1.87z
M153.61 14.89q.8 1.1 1.9 1.9q-1.1 .8 -1.9 1.9q-.8 -1.1 -1.9 -1.9q1.1 -.8 1.9 -1.9z
M153.61 21.35q.86 1.09 1.96 1.96q-1.09 .86 -1.96 1.96q-.86 -1.09 -1.96 -1.96q1.09 -.86 1.96 -1.96z
M153.61 27.77q.96 1.11 2.06 2.06q-1.11 .96 -2.06 2.06q-.96 -1.11 -2.06 -2.06q1.11 -.96 2.06 -2.06z
M153.61 34.17q1.06 1.12 2.18 2.18q-1.12 1.06 -2.18 2.18q-1.06 -1.12 -2.18 -2.18q1.12 -1.06 2.18 -2.18z
M153.61 40.53q1.17 1.17 2.34 2.34q-1.17 1.17 -2.34 2.34q-1.17 -1.17 -2.34 -2.34q1.17 -1.17 2.34 -2.34z
M153.61 46.88q1.26 1.26 2.51 2.51q-1.26 1.26 -2.51 2.51q-1.26 -1.26 -2.51 -2.51q1.26 -1.26 2.51 -2.51z
M153.61 216.36q1.27 1.27 2.55 2.55q-1.27 1.27 -2.55 2.55q-1.27 -1.27 -2.55 -2.55q1.27 -1.27 2.55 -2.55z
M153.61 223.06q1.18 1.18 2.37 2.37q-1.18 1.18 -2.37 2.37q-1.18 -1.18 -2.37 -2.37q1.18 -1.18 2.37 -2.37z
M153.61 229.74q1.09 1.13 2.21 2.21q-1.13 1.09 -2.21 2.21q-1.09 -1.13 -2.21 -2.21q1.13 -1.09 2.21 -2.21z
M153.61 236.39q.98 1.11 2.08 2.08q-1.11 .98 -2.08 2.08q-.98 -1.11 -2.08 -2.08q1.11 -.98 2.08 -2.08z
M153.61 243.02q.88 1.09 1.97 1.97q-1.09 .88 -1.97 1.97q-.88 -1.09 -1.97 -1.97q1.09 -.88 1.97 -1.97z
M153.61 249.6q.81 1.1 1.91 1.91q-1.1 .81 -1.91 1.91q-.81 -1.1 -1.91 -1.91q1.1 -.81 1.91 -1.91z
M160.13 -4.64q.78 1.09 1.87 1.87q-1.09 .78 -1.87 1.87q-.78 -1.09 -1.87 -1.87q1.09 -.78 1.87 -1.87z
M160.13 1.88q.78 1.09 1.87 1.87q-1.09 .78 -1.87 1.87q-.78 -1.09 -1.87 -1.87q1.09 -.78 1.87 -1.87z
M160.13 8.4q.78 1.09 1.87 1.87q-1.09 .78 -1.87 1.87q-.78 -1.09 -1.87 -1.87q1.09 -.78 1.87 -1.87z
M160.13 14.91q.79 1.09 1.88 1.88q-1.09 .79 -1.88 1.88q-.79 -1.09 -1.88 -1.88q1.09 -.79 1.88 -1.88z
M160.13 21.37q.84 1.1 1.94 1.94q-1.1 .84 -1.94 1.94q-.84 -1.1 -1.94 -1.94q1.1 -.84 1.94 -1.94z
M160.13 27.81q.92 1.1 2.02 2.02q-1.1 .92 -2.02 2.02q-.92 -1.1 -2.02 -2.02q1.1 -.92 2.02 -2.02z
M160.13 34.22q1.02 1.11 2.13 2.13q-1.11 1.02 -2.13 2.13q-1.02 -1.11 -2.13 -2.13q1.11 -1.02 2.13 -2.13z
M160.13 40.59q1.14 1.14 2.28 2.28q-1.14 1.14 -2.28 2.28q-1.14 -1.14 -2.28 -2.28q1.14 -1.14 2.28 -2.28z
M160.13 46.96q1.22 1.22 2.43 2.43q-1.22 1.22 -2.43 2.43q-1.22 -1.22 -2.43 -2.43q1.22 -1.22 2.43 -2.43z
M160.13 54q.96 .96 1.91 1.91q-.96 .96 -1.91 1.91q-.96 -.96 -1.91 -1.91q.96 -.96 1.91 -1.91z
M160.13 211.99q.2 .2 .4 .4q-.2 .2 -.4 .4q-.2 -.2 -.4 -.4q.2 -.2 .4 -.4z
M160.13 216.44q1.24 1.24 2.47 2.47q-1.24 1.24 -2.47 2.47q-1.24 -1.24 -2.47 -2.47q1.24 -1.24 2.47 -2.47z
M160.13 223.12q1.15 1.15 2.31 2.31q-1.15 1.15 -2.31 2.31q-1.15 -1.15 -2.31 -2.31q1.15 -1.15 2.31 -2.31z
M160.13 229.79q1.04 1.12 2.16 2.16q-1.12 1.04 -2.16 2.16q-1.04 -1.12 -2.16 -2.16q1.12 -1.04 2.16 -2.16z
M160.13 236.42q.94 1.1 2.05 2.05q-1.1 .94 -2.05 2.05q-.94 -1.1 -2.05 -2.05q1.1 -.94 2.05 -2.05z
M160.13 243.04q.86 1.1 1.95 1.95q-1.1 .86 -1.95 1.95q-.86 -1.1 -1.95 -1.95q1.1 -.86 1.95 -1.95z
M160.13 249.62q.79 1.1 1.89 1.89q-1.1 .79 -1.89 1.89q-.79 -1.1 -1.89 -1.89q1.1 -.79 1.89 -1.89z
M166.65 -4.64q.78 1.09 1.87 1.87q-1.09 .78 -1.87 1.87q-.78 -1.09 -1.87 -1.87q1.09 -.78 1.87 -1.87z
M166.65 1.88q.78 1.09 1.87 1.87q-1.09 .78 -1.87 1.87q-.78 -1.09 -1.87 -1.87q1.09 -.78 1.87 -1.87z
M166.65 8.4q.78 1.09 1.87 1.87q-1.09 .78 -1.87 1.87q-.78 -1.09 -1.87 -1.87q1.09 -.78 1.87 -1.87z
M166.65 14.92q.78 1.09 1.87 1.87q-1.09 .78 -1.87 1.87q-.78 -1.09 -1.87 -1.87q1.09 -.78 1.87 -1.87z
M166.65 21.39q.82 1.1 1.92 1.92q-1.1 .82 -1.92 1.92q-.82 -1.1 -1.92 -1.92q1.1 -.82 1.92 -1.92z
M166.65 27.85q.89 1.09 1.98 1.98q-1.09 .89 -1.98 1.98q-.89 -1.09 -1.98 -1.98q1.09 -.89 1.98 -1.98z
M166.65 34.26q.98 1.11 2.09 2.09q-1.11 .98 -2.09 2.09q-.98 -1.11 -2.09 -2.09q1.11 -.98 2.09 -2.09z
M166.65 40.66q1.09 1.13 2.21 2.21q-1.13 1.09 -2.21 2.21q-1.09 -1.13 -2.21 -2.21q1.13 -1.09 2.21 -2.21z
M166.65 47.03q1.18 1.18 2.36 2.36q-1.18 1.18 -2.36 2.36q-1.18 -1.18 -2.36 -2.36q1.18 -1.18 2.36 -2.36z
M166.65 53.39q1.26 1.26 2.52 2.52q-1.26 1.26 -2.52 2.52q-1.26 -1.26 -2.52 -2.52q1.26 -1.26 2.52 -2.52z
M166.65 209.83q1.28 1.28 2.56 2.56q-1.28 1.28 -2.56 2.56q-1.28 -1.28 -2.56 -2.56q1.28 -1.28 2.56 -2.56z
M166.65 216.53q1.19 1.19 2.38 2.38q-1.19 1.19 -2.38 2.38q-1.19 -1.19 -2.38 -2.38q1.19 -1.19 2.38 -2.38z
M166.65 223.19q1.11 1.13 2.24 2.24q-1.13 1.11 -2.24 2.24q-1.11 -1.13 -2.24 -2.24q1.13 -1.11 2.24 -2.24z
M166.65 229.84q1 1.11 2.11 2.11q-1.11 1 -2.11 2.11q-1 -1.11 -2.11 -2.11q1.11 -1 2.11 -2.11z
M166.65 236.47q.91 1.1 2 2q-1.1 .91 -2 2q-.91 -1.1 -2 -2q1.1 -.91 2 -2z
M166.65 243.06q.83 1.1 1.93 1.93q-1.1 .83 -1.93 1.93q-.83 -1.1 -1.93 -1.93q1.1 -.83 1.93 -1.93z
M166.65 249.64q.78 1.09 1.87 1.87q-1.09 .78 -1.87 1.87q-.78 -1.09 -1.87 -1.87q1.09 -.78 1.87 -1.87z
M173.17 -4.64q.78 1.09 1.87 1.87q-1.09 .78 -1.87 1.87q-.78 -1.09 -1.87 -1.87q1.09 -.78 1.87 -1.87z
M173.17 1.88q.78 1.09 1.87 1.87q-1.09 .78 -1.87 1.87q-.78 -1.09 -1.87 -1.87q1.09 -.78 1.87 -1.87z
M173.17 8.4q.78 1.09 1.87 1.87q-1.09 .78 -1.87 1.87q-.78 -1.09 -1.87 -1.87q1.09 -.78 1.87 -1.87z
M173.17 14.92q.78 1.09 1.87 1.87q-1.09 .78 -1.87 1.87q-.78 -1.09 -1.87 -1.87q1.09 -.78 1.87 -1.87z
M173.17 21.42q.79 1.1 1.89 1.89q-1.1 .79 -1.89 1.89q-.79 -1.1 -1.89 -1.89q1.1 -.79 1.89 -1.89z
M173.17 27.88q.85 1.1 1.95 1.95q-1.1 .85 -1.95 1.95q-.85 -1.1 -1.95 -1.95q1.1 -.85 1.95 -1.95z
M173.17 34.31q.93 1.1 2.04 2.04q-1.1 .93 -2.04 2.04q-.93 -1.1 -2.04 -2.04q1.1 -.93 2.04 -2.04z
M173.17 40.73q1.03 1.11 2.14 2.14q-1.11 1.03 -2.14 2.14q-1.03 -1.11 -2.14 -2.14q1.11 -1.03 2.14 -2.14z
M173.17 47.11q1.14 1.14 2.28 2.28q-1.14 1.14 -2.28 2.28q-1.14 -1.14 -2.28 -2.28q1.14 -1.14 2.28 -2.28z
M173.17 53.49q1.21 1.21 2.42 2.42q-1.21 1.21 -2.42 2.42q-1.21 -1.21 -2.42 -2.42q1.21 -1.21 2.42 -2.42z
M173.17 59.85q1.29 1.29 2.58 2.58q-1.29 1.29 -2.58 2.58q-1.29 -1.29 -2.58 -2.58q1.29 -1.29 2.58 -2.58z
M173.17 203.86q1 1 2.01 2.01q-1 1 -2.01 2.01q-1 -1 -2.01 -2.01q1 -1 2.01 -2.01z
M173.17 209.94q1.22 1.22 2.45 2.45q-1.22 1.22 -2.45 2.45q-1.22 -1.22 -2.45 -2.45q1.22 -1.22 2.45 -2.45z
M173.17 216.61q1.15 1.15 2.3 2.3q-1.15 1.15 -2.3 2.3q-1.15 -1.15 -2.3 -2.3q1.15 -1.15 2.3 -2.3z
M173.17 223.27q1.05 1.12 2.16 2.16q-1.12 1.05 -2.16 2.16q-1.05 -1.12 -2.16 -2.16q1.12 -1.05 2.16 -2.16z
M173.17 229.89q.95 1.1 2.06 2.06q-1.1 .95 -2.06 2.06q-.95 -1.1 -2.06 -2.06q1.1 -.95 2.06 -2.06z
M173.17 236.51q.87 1.09 1.96 1.96q-1.09 .87 -1.96 1.96q-.87 -1.09 -1.96 -1.96q1.09 -.87 1.96 -1.96z
M173.17 243.09q.8 1.1 1.9 1.9q-1.1 .8 -1.9 1.9q-.8 -1.1 -1.9 -1.9q1.1 -.8 1.9 -1.9z
M173.17 249.64q.78 1.09 1.87 1.87q-1.09 .78 -1.87 1.87q-.78 -1.09 -1.87 -1.87q1.09 -.78 1.87 -1.87z
M179.69 -4.64q.78 1.09 1.87 1.87q-1.09 .78 -1.87 1.87q-.78 -1.09 -1.87 -1.87q1.09 -.78 1.87 -1.87z
M179.69 1.88q.78 1.09 1.87 1.87q-1.09 .78 -1.87 1.87q-.78 -1.09 -1.87 -1.87q1.09 -.78 1.87 -1.87z
M179.69 8.4q.78 1.09 1.87 1.87q-1.09 .78 -1.87 1.87q-.78 -1.09 -1.87 -1.87q1.09 -.78 1.87 -1.87z
M179.69 14.92q.78 1.09 1.87 1.87q-1.09 .78 -1.87 1.87q-.78 -1.09 -1.87 -1.87q1.09 -.78 1.87 -1.87z
M179.69 21.44q.78 1.09 1.87 1.87q-1.09 .78 -1.87 1.87q-.78 -1.09 -1.87 -1.87q1.09 -.78 1.87 -1.87z
M179.69 27.91q.82 1.1 1.92 1.92q-1.1 .82 -1.92 1.92q-.82 -1.1 -1.92 -1.92q1.1 -.82 1.92 -1.92z
M179.69 34.37q.88 1.09 1.98 1.98q-1.09 .88 -1.98 1.98q-.88 -1.09 -1.98 -1.98q1.09 -.88 1.98 -1.98z
M179.69 40.79q.97 1.11 2.08 2.08q-1.11 .97 -2.08 2.08q-.97 -1.11 -2.08 -2.08q1.11 -.97 2.08 -2.08z
M179.69 47.2q1.07 1.12 2.19 2.19q-1.12 1.07 -2.19 2.19q-1.07 -1.12 -2.19 -2.19q1.12 -1.07 2.19 -2.19z
M179.69 53.59q1.16 1.16 2.32 2.32q-1.16 1.16 -2.32 2.32q-1.16 -1.16 -2.32 -2.32q1.16 -1.16 2.32 -2.32z
M179.69 59.97q1.23 1.23 2.46 2.46q-1.23 1.23 -2.46 2.46q-1.23 -1.23 -2.46 -2.46q1.23 -1.23 2.46 -2.46z
M179.69 66.9q1.02 1.02 2.05 2.05q-1.02 1.02 -2.05 2.05q-1.02 -1.02 -2.05 -2.05q1.02 -1.02 2.05 -2.05z
M179.69 198.56q.4 .4 .79 .79q-.4 .4 -.79 .79q-.4 -.4 -.79 -.79q.4 -.4 .79 -.79z
M179.69 203.38q1.25 1.25 2.49 2.49q-1.25 1.25 -2.49 2.49q-1.25 -1.25 -2.49 -2.49q1.25 -1.25 2.49 -2.49z
M179.69 210.04q1.17 1.17 2.35 2.35q-1.17 1.17 -2.35 2.35q-1.17 -1.17 -2.35 -2.35q1.17 -1.17 2.35 -2.35z
M179.69 216.7q1.09 1.13 2.21 2.21q-1.13 1.09 -2.21 2.21q-1.09 -1.13 -2.21 -2.21q1.13 -1.09 2.21 -2.21z
M179.69 223.33q.99 1.11 2.1 2.1q-1.11 .99 -2.1 2.1q-.99 -1.11 -2.1 -2.1q1.11 -.99 2.1 -2.1z
M179.69 229.95q.9 1.1 2 2q-1.1 .9 -2 2q-.9 -1.1 -2 -2q1.1 -.9 2 -2z
M179.69 236.54q.83 1.1 1.93 1.93q-1.1 .83 -1.93 1.93q-.83 -1.1 -1.93 -1.93q1.1 -.83 1.93 -1.93z
M179.69 243.12q.79 1.09 1.87 1.87q-1.09 .79 -1.87 1.87q-.79 -1.09 -1.87 -1.87q1.09 -.79 1.87 -1.87z
M179.69 249.64q.78 1.09 1.87 1.87q-1.09 .78 -1.87 1.87q-.78 -1.09 -1.87 -1.87q1.09 -.78 1.87 -1.87z
M186.21 -4.64q.78 1.09 1.87 1.87q-1.09 .78 -1.87 1.87q-.78 -1.09 -1.87 -1.87q1.09 -.78 1.87 -1.87z
M186.21 1.88q.78 1.09 1.87 1.87q-1.09 .78 -1.87 1.87q-.78 -1.09 -1.87 -1.87q1.09 -.78 1.87 -1.87z
M186.21 8.4q.78 1.09 1.87 1.87q-1.09 .78 -1.87 1.87q-.78 -1.09 -1.87 -1.87q1.09 -.78 1.87 -1.87z
M186.21 14.92q.78 1.09 1.87 1.87q-1.09 .78 -1.87 1.87q-.78 -1.09 -1.87 -1.87q1.09 -.78 1.87 -1.87z
M186.21 21.44q.78 1.09 1.87 1.87q-1.09 .78 -1.87 1.87q-.78 -1.09 -1.87 -1.87q1.09 -.78 1.87 -1.87z
M186.21 27.94q.79 1.09 1.89 1.89q-1.09 .79 -1.89 1.89q-.79 -1.09 -1.89 -1.89q1.09 -.79 1.89 -1.89z
M186.21 34.41q.84 1.1 1.94 1.94q-1.1 .84 -1.94 1.94q-.84 -1.1 -1.94 -1.94q1.1 -.84 1.94 -1.94z
M186.21 40.86q.91 1.1 2.01 2.01q-1.1 .91 -2.01 2.01q-.91 -1.1 -2.01 -2.01q1.1 -.91 2.01 -2.01z
M186.21 47.28q1 1.11 2.11 2.11q-1.11 1 -2.11 2.11q-1 -1.11 -2.11 -2.11q1.11 -1 2.11 -2.11z
M186.21 53.69q1.09 1.13 2.22 2.22q-1.13 1.09 -2.22 2.22q-1.09 -1.13 -2.22 -2.22q1.13 -1.09 2.22 -2.22z
M186.21 60.09q1.17 1.17 2.34 2.34q-1.17 1.17 -2.34 2.34q-1.17 -1.17 -2.34 -2.34q1.17 -1.17 2.34 -2.34z
M186.21 66.47q1.24 1.24 2.48 2.48q-1.24 1.24 -2.48 2.48q-1.24 -1.24 -2.48 -2.48q1.24 -1.24 2.48 -2.48z
M186.21 73.5q.98 .98 1.97 1.97q-.98 .98 -1.97 1.97q-.98 -.98 -1.97 -1.97q.98 -.98 1.97 -1.97z
M186.21 192q.42 .42 .83 .83q-.42 .42 -.83 .83q-.42 -.42 -.83 -.83q.42 -.42 .83 -.83z
M186.21 196.85q1.25 1.25 2.5 2.5q-1.25 1.25 -2.5 2.5q-1.25 -1.25 -2.5 -2.5q1.25 -1.25 2.5 -2.5z
M186.21 203.5q1.18 1.18 2.37 2.37q-1.18 1.18 -2.37 2.37q-1.18 -1.18 -2.37 -2.37q1.18 -1.18 2.37 -2.37z
M186.21 210.15q1.11 1.13 2.24 2.24q-1.13 1.11 -2.24 2.24q-1.11 -1.13 -2.24 -2.24q1.13 -1.11 2.24 -2.24z
M186.21 216.78q1.01 1.11 2.13 2.13q-1.11 1.01 -2.13 2.13q-1.01 -1.11 -2.13 -2.13q1.11 -1.01 2.13 -2.13z
M186.21 223.4q.93 1.1 2.03 2.03q-1.1 .93 -2.03 2.03q-.93 -1.1 -2.03 -2.03q1.1 -.93 2.03 -2.03z
M186.21 230q.86 1.1 1.95 1.95q-1.1 .86 -1.95 1.95q-.86 -1.1 -1.95 -1.95q1.1 -.86 1.95 -1.95z
M186.21 236.57q.8 1.1 1.9 1.9q-1.1 .8 -1.9 1.9q-.8 -1.1 -1.9 -1.9q1.1 -.8 1.9 -1.9z
M186.21 243.12q.78 1.09 1.87 1.87q-1.09 .78 -1.87 1.87q-.78 -1.09 -1.87 -1.87q1.09 -.78 1.87 -1.87z
M186.21 249.64q.78 1.09 1.87 1.87q-1.09 .78 -1.87 1.87q-.78 -1.09 -1.87 -1.87q1.09 -.78 1.87 -1.87z
M192.73 -4.64q.78 1.09 1.87 1.87q-1.09 .78 -1.87 1.87q-.78 -1.09 -1.87 -1.87q1.09 -.78 1.87 -1.87z
M192.73 1.88q.78 1.09 1.87 1.87q-1.09 .78 -1.87 1.87q-.78 -1.09 -1.87 -1.87q1.09 -.78 1.87 -1.87z
M192.73 8.4q.78 1.09 1.87 1.87q-1.09 .78 -1.87 1.87q-.78 -1.09 -1.87 -1.87q1.09 -.78 1.87 -1.87z
M192.73 14.92q.78 1.09 1.87 1.87q-1.09 .78 -1.87 1.87q-.78 -1.09 -1.87 -1.87q1.09 -.78 1.87 -1.87z
M192.73 21.44q.78 1.09 1.87 1.87q-1.09 .78 -1.87 1.87q-.78 -1.09 -1.87 -1.87q1.09 -.78 1.87 -1.87z
M192.73 27.96q.78 1.09 1.87 1.87q-1.09 .78 -1.87 1.87q-.78 -1.09 -1.87 -1.87q1.09 -.78 1.87 -1.87z
M192.73 34.45q.8 1.1 1.9 1.9q-1.1 .8 -1.9 1.9q-.8 -1.1 -1.9 -1.9q1.1 -.8 1.9 -1.9z
M192.73 40.91q.86 1.09 1.96 1.96q-1.09 .86 -1.96 1.96q-.86 -1.09 -1.96 -1.96q1.09 -.86 1.96 -1.96z
M192.73 47.36q.93 1.1 2.03 2.03q-1.1 .93 -2.03 2.03q-.93 -1.1 -2.03 -2.03q1.1 -.93 2.03 -2.03z
M192.73 53.79q1.01 1.11 2.12 2.12q-1.11 1.01 -2.12 2.12q-1.01 -1.11 -2.12 -2.12q1.11 -1.01 2.12 -2.12z
M192.73 60.2q1.1 1.13 2.23 2.23q-1.13 1.1 -2.23 2.23q-1.1 -1.13 -2.23 -2.23q1.13 -1.1 2.23 -2.23z
M192.73 66.61q1.17 1.17 2.34 2.34q-1.17 1.17 -2.34 2.34q-1.17 -1.17 -2.34 -2.34q1.17 -1.17 2.34 -2.34z
M192.73 73.01q1.23 1.23 2.46 2.46q-1.23 1.23 -2.46 2.46q-1.23 -1.23 -2.46 -2.46q1.23 -1.23 2.46 -2.46z
M192.73 79.4q1.29 1.29 2.59 2.59q-1.29 1.29 -2.59 2.59q-1.29 -1.29 -2.59 -2.59q1.29 -1.29 2.59 -2.59z
M192.73 184.17q1.07 1.07 2.14 2.14q-1.07 1.07 -2.14 2.14q-1.07 -1.07 -2.14 -2.14q1.07 -1.07 2.14 -2.14z
M192.73 190.34q1.24 1.24 2.49 2.49q-1.24 1.24 -2.49 2.49q-1.24 -1.24 -2.49 -2.49q1.24 -1.24 2.49 -2.49z
M192.73 196.98q1.18 1.18 2.37 2.37q-1.18 1.18 -2.37 2.37q-1.18 -1.18 -2.37 -2.37q1.18 -1.18 2.37 -2.37z
M192.73 203.62q1.12 1.13 2.25 2.25q-1.13 1.12 -2.25 2.25q-1.12 -1.13 -2.25 -2.25q1.13 -1.12 2.25 -2.25z
M192.73 210.25q1.03 1.11 2.14 2.14q-1.11 1.03 -2.14 2.14q-1.03 -1.11 -2.14 -2.14q1.11 -1.03 2.14 -2.14z
M192.73 216.86q.95 1.1 2.05 2.05q-1.1 .95 -2.05 2.05q-.95 -1.1 -2.05 -2.05q1.1 -.95 2.05 -2.05z
M192.73 223.46q.87 1.09 1.97 1.97q-1.09 .87 -1.97 1.97q-.87 -1.09 -1.97 -1.97q1.09 -.87 1.97 -1.97z
M192.73 230.04q.81 1.1 1.91 1.91q-1.1 .81 -1.91 1.91q-.81 -1.1 -1.91 -1.91q1.1 -.81 1.91 -1.91z
M192.73 236.6q.78 1.09 1.87 1.87q-1.09 .78 -1.87 1.87q-.78 -1.09 -1.87 -1.87q1.09 -.78 1.87 -1.87z
M192.73 243.12q.78 1.09 1.87 1.87q-1.09 .78 -1.87 1.87q-.78 -1.09 -1.87 -1.87q1.09 -.78 1.87 -1.87z
M192.73 249.64q.78 1.09 1.87 1.87q-1.09 .78 -1.87 1.87q-.78 -1.09 -1.87 -1.87q1.09 -.78 1.87 -1.87z
M199.25 -4.64q.78 1.09 1.87 1.87q-1.09 .78 -1.87 1.87q-.78 -1.09 -1.87 -1.87q1.09 -.78 1.87 -1.87z
M199.25 1.88q.78 1.09 1.87 1.87q-1.09 .78 -1.87 1.87q-.78 -1.09 -1.87 -1.87q1.09 -.78 1.87 -1.87z
M199.25 8.4q.78 1.09 1.87 1.87q-1.09 .78 -1.87 1.87q-.78 -1.09 -1.87 -1.87q1.09 -.78 1.87 -1.87z
M199.25 14.92q.78 1.09 1.87 1.87q-1.09 .78 -1.87 1.87q-.78 -1.09 -1.87 -1.87q1.09 -.78 1.87 -1.87z
M199.25 21.44q.78 1.09 1.87 1.87q-1.09 .78 -1.87 1.87q-.78 -1.09 -1.87 -1.87q1.09 -.78 1.87 -1.87z
M199.25 27.96q.78 1.09 1.87 1.87q-1.09 .78 -1.87 1.87q-.78 -1.09 -1.87 -1.87q1.09 -.78 1.87 -1.87z
M199.25 34.48q.78 1.09 1.87 1.87q-1.09 .78 -1.87 1.87q-.78 -1.09 -1.87 -1.87q1.09 -.78 1.87 -1.87z
M199.25 40.96q.81 1.1 1.91 1.91q-1.1 .81 -1.91 1.91q-.81 -1.1 -1.91 -1.91q1.1 -.81 1.91 -1.91z
M199.25 47.43q.87 1.09 1.96 1.96q-1.09 .87 -1.96 1.96q-.87 -1.09 -1.96 -1.96q1.09 -.87 1.96 -1.96z
M199.25 53.87q.94 1.1 2.04 2.04q-1.1 .94 -2.04 2.04q-.94 -1.1 -2.04 -2.04q1.1 -.94 2.04 -2.04z
M199.25 60.31q1.01 1.11 2.12 2.12q-1.11 1.01 -2.12 2.12q-1.01 -1.11 -2.12 -2.12q1.11 -1.01 2.12 -2.12z
M199.25 66.73q1.09 1.13 2.22 2.22q-1.13 1.09 -2.22 2.22q-1.09 -1.13 -2.22 -2.22q1.13 -1.09 2.22 -2.22z
M199.25 73.15q1.16 1.16 2.32 2.32q-1.16 1.16 -2.32 2.32q-1.16 -1.16 -2.32 -2.32q1.16 -1.16 2.32 -2.32z
M199.25 79.57q1.21 1.21 2.42 2.42q-1.21 1.21 -2.42 2.42q-1.21 -1.21 -2.42 -2.42q1.21 -1.21 2.42 -2.42z
M199.25 85.98q1.27 1.27 2.53 2.53q-1.27 1.27 -2.53 2.53q-1.27 -1.27 -2.53 -2.53q1.27 -1.27 2.53 -2.53z
M199.25 93.6q.71 .71 1.43 1.43q-.71 .71 -1.43 1.43q-.71 -.71 -1.43 -1.43q.71 -.71 1.43 -1.43z
M199.25 172.6q.34 .34 .67 .67q-.34 .34 -.67 .67q-.34 -.34 -.67 -.67q.34 -.34 .67 -.67z
M199.25 177.24q1.28 1.28 2.55 2.55q-1.28 1.28 -2.55 2.55q-1.28 -1.28 -2.55 -2.55q1.28 -1.28 2.55 -2.55z
M199.25 183.86q1.22 1.22 2.45 2.45q-1.22 1.22 -2.45 2.45q-1.22 -1.22 -2.45 -2.45q1.22 -1.22 2.45 -2.45z
M199.25 190.49q1.17 1.17 2.34 2.34q-1.17 1.17 -2.34 2.34q-1.17 -1.17 -2.34 -2.34q1.17 -1.17 2.34 -2.34z
M199.25 197.11q1.11 1.13 2.24 2.24q-1.13 1.11 -2.24 2.24q-1.11 -1.13 -2.24 -2.24q1.13 -1.11 2.24 -2.24z
M199.25 203.73q1.03 1.11 2.14 2.14q-1.11 1.03 -2.14 2.14q-1.03 -1.11 -2.14 -2.14q1.11 -1.03 2.14 -2.14z
M199.25 210.33q.95 1.1 2.06 2.06q-1.1 .95 -2.06 2.06q-.95 -1.1 -2.06 -2.06q1.1 -.95 2.06 -2.06z
M199.25 216.94q.88 1.09 1.97 1.97q-1.09 .88 -1.97 1.97q-.88 -1.09 -1.97 -1.97q1.09 -.88 1.97 -1.97z
M199.25 223.51q.82 1.1 1.92 1.92q-1.1 .82 -1.92 1.92q-.82 -1.1 -1.92 -1.92q1.1 -.82 1.92 -1.92z
M199.25 230.08q.79 1.09 1.87 1.87q-1.09 .79 -1.87 1.87q-.79 -1.09 -1.87 -1.87q1.09 -.79 1.87 -1.87z
M199.25 236.6q.78 1.09 1.87 1.87q-1.09 .78 -1.87 1.87q-.78 -1.09 -1.87 -1.87q1.09 -.78 1.87 -1.87z
M199.25 243.12q.78 1.09 1.87 1.87q-1.09 .78 -1.87 1.87q-.78 -1.09 -1.87 -1.87q1.09 -.78 1.87 -1.87z
M199.25 249.64q.78 1.09 1.87 1.87q-1.09 .78 -1.87 1.87q-.78 -1.09 -1.87 -1.87q1.09 -.78 1.87 -1.87z
M205.77 -4.64q.78 1.09 1.87 1.87q-1.09 .78 -1.87 1.87q-.78 -1.09 -1.87 -1.87q1.09 -.78 1.87 -1.87z
M205.77 1.88q.78 1.09 1.87 1.87q-1.09 .78 -1.87 1.87q-.78 -1.09 -1.87 -1.87q1.09 -.78 1.87 -1.87z
M205.77 8.4q.78 1.09 1.87 1.87q-1.09 .78 -1.87 1.87q-.78 -1.09 -1.87 -1.87q1.09 -.78 1.87 -1.87z
M205.77 14.92q.78 1.09 1.87 1.87q-1.09 .78 -1.87 1.87q-.78 -1.09 -1.87 -1.87q1.09 -.78 1.87 -1.87z
M205.77 21.44q.78 1.09 1.87 1.87q-1.09 .78 -1.87 1.87q-.78 -1.09 -1.87 -1.87q1.09 -.78 1.87 -1.87z
M205.77 27.96q.78 1.09 1.87 1.87q-1.09 .78 -1.87 1.87q-.78 -1.09 -1.87 -1.87q1.09 -.78 1.87 -1.87z
M205.77 34.48q.78 1.09 1.87 1.87q-1.09 .78 -1.87 1.87q-.78 -1.09 -1.87 -1.87q1.09 -.78 1.87 -1.87z
M205.77 41q.79 1.09 1.87 1.87q-1.09 .79 -1.87 1.87q-.79 -1.09 -1.87 -1.87q1.09 -.79 1.87 -1.87z
M205.77 47.47q.82 1.1 1.92 1.92q-1.1 .82 -1.92 1.92q-.82 -1.1 -1.92 -1.92q1.1 -.82 1.92 -1.92z
M205.77 53.95q.87 1.09 1.96 1.96q-1.09 .87 -1.96 1.96q-.87 -1.09 -1.96 -1.96q1.09 -.87 1.96 -1.96z
M205.77 60.39q.93 1.1 2.04 2.04q-1.1 .93 -2.04 2.04q-.93 -1.1 -2.04 -2.04q1.1 -.93 2.04 -2.04z
M205.77 66.84q1 1.11 2.11 2.11q-1.11 1 -2.11 2.11q-1 -1.11 -2.11 -2.11q1.11 -1 2.11 -2.11z
M205.77 73.28q1.07 1.12 2.19 2.19q-1.12 1.07 -2.19 2.19q-1.07 -1.12 -2.19 -2.19q1.12 -1.07 2.19 -2.19z
M205.77 79.71q1.14 1.14 2.28 2.28q-1.14 1.14 -2.28 2.28q-1.14 -1.14 -2.28 -2.28q1.14 -1.14 2.28 -2.28z
M205.77 86.15q1.18 1.18 2.36 2.36q-1.18 1.18 -2.36 2.36q-1.18 -1.18 -2.36 -2.36q1.18 -1.18 2.36 -2.36z
M205.77 92.58q1.22 1.22 2.45 2.45q-1.22 1.22 -2.45 2.45q-1.22 -1.22 -2.45 -2.45q1.22 -1.22 2.45 -2.45z
M205.77 99.02q1.26 1.26 2.53 2.53q-1.26 1.26 -2.53 2.53q-1.26 -1.26 -2.53 -2.53q1.26 -1.26 2.53 -2.53z
M205.77 105.48q1.3 1.3 2.59 2.59q-1.3 1.3 -2.59 2.59q-1.3 -1.3 -2.59 -2.59q1.3 -1.3 2.59 -2.59z
M205.77 114q.29 .29 .59 .59q-.29 .29 -.59 .59q-.29 -.29 -.59 -.59q.29 -.29 .59 -.59z
M205.77 153.5q.1 .1 .21 .21q-.1 .1 -.21 .21q-.1 -.1 -.21 -.21q.1 -.1 .21 -.21z
M205.77 157.88q1.18 1.18 2.35 2.35q-1.18 1.18 -2.35 2.35q-1.18 -1.18 -2.35 -2.35q1.18 -1.18 2.35 -2.35z
M205.77 164.21q1.27 1.27 2.54 2.54q-1.27 1.27 -2.54 2.54q-1.27 -1.27 -2.54 -2.54q1.27 -1.27 2.54 -2.54z
M205.77 170.81q1.23 1.23 2.46 2.46q-1.23 1.23 -2.46 2.46q-1.23 -1.23 -2.46 -2.46q1.23 -1.23 2.46 -2.46z
M205.77 177.41q1.19 1.19 2.38 2.38q-1.19 1.19 -2.38 2.38q-1.19 -1.19 -2.38 -2.38q1.19 -1.19 2.38 -2.38z
M205.77 184.01q1.15 1.15 2.3 2.3q-1.15 1.15 -2.3 2.3q-1.15 -1.15 -2.3 -2.3q1.15 -1.15 2.3 -2.3z
M205.77 190.62q1.08 1.13 2.21 2.21q-1.13 1.08 -2.21 2.21q-1.08 -1.13 -2.21 -2.21q1.13 -1.08 2.21 -2.21z
M205.77 197.23q1.01 1.11 2.12 2.12q-1.11 1.01 -2.12 2.12q-1.01 -1.11 -2.12 -2.12q1.11 -1.01 2.12 -2.12z
M205.77 203.82q.95 1.1 2.05 2.05q-1.1 .95 -2.05 2.05q-.95 -1.1 -2.05 -2.05q1.1 -.95 2.05 -2.05z
M205.77 210.42q.88 1.09 1.97 1.97q-1.09 .88 -1.97 1.97q-.88 -1.09 -1.97 -1.97q1.09 -.88 1.97 -1.97z
M205.77 216.98q.83 1.1 1.93 1.93q-1.1 .83 -1.93 1.93q-.83 -1.1 -1.93 -1.93q1.1 -.83 1.93 -1.93z
M205.77 223.55q.79 1.09 1.88 1.88q-1.09 .79 -1.88 1.88q-.79 -1.09 -1.88 -1.88q1.09 -.79 1.88 -1.88z
M205.77 230.08q.78 1.09 1.87 1.87q-1.09 .78 -1.87 1.87q-.78 -1.09 -1.87 -1.87q1.09 -.78 1.87 -1.87z
M205.77 236.6q.78 1.09 1.87 1.87q-1.09 .78 -1.87 1.87q-.78 -1.09 -1.87 -1.87q1.09 -.78 1.87 -1.87z
M205.77 243.12q.78 1.09 1.87 1.87q-1.09 .78 -1.87 1.87q-.78 -1.09 -1.87 -1.87q1.09 -.78 1.87 -1.87z
M205.77 249.64q.78 1.09 1.87 1.87q-1.09 .78 -1.87 1.87q-.78 -1.09 -1.87 -1.87q1.09 -.78 1.87 -1.87z
M212.29 -4.64q.77 1.09 1.87 1.87q-1.09 .77 -1.87 1.87q-.77 -1.09 -1.87 -1.87q1.09 -.77 1.87 -1.87z
M212.29 1.88q.78 1.09 1.87 1.87q-1.09 .78 -1.87 1.87q-.78 -1.09 -1.87 -1.87q1.09 -.78 1.87 -1.87z
M212.29 8.4q.78 1.09 1.87 1.87q-1.09 .78 -1.87 1.87q-.78 -1.09 -1.87 -1.87q1.09 -.78 1.87 -1.87z
M212.29 14.92q.78 1.09 1.87 1.87q-1.09 .78 -1.87 1.87q-.78 -1.09 -1.87 -1.87q1.09 -.78 1.87 -1.87z
M212.29 21.44q.78 1.09 1.87 1.87q-1.09 .78 -1.87 1.87q-.78 -1.09 -1.87 -1.87q1.09 -.78 1.87 -1.87z
M212.29 27.96q.78 1.09 1.87 1.87q-1.09 .78 -1.87 1.87q-.78 -1.09 -1.87 -1.87q1.09 -.78 1.87 -1.87z
M212.29 34.48q.78 1.09 1.87 1.87q-1.09 .78 -1.87 1.87q-.78 -1.09 -1.87 -1.87q1.09 -.78 1.87 -1.87z
M212.29 41q.78 1.09 1.87 1.87q-1.09 .78 -1.87 1.87q-.78 -1.09 -1.87 -1.87q1.09 -.78 1.87 -1.87z
M212.29 47.52q.79 1.09 1.87 1.87q-1.09 .79 -1.87 1.87q-.79 -1.09 -1.87 -1.87q1.09 -.79 1.87 -1.87z
M212.29 54q.81 1.1 1.91 1.91q-1.1 .81 -1.91 1.91q-.81 -1.1 -1.91 -1.91q1.1 -.81 1.91 -1.91z
M212.29 60.47q.86 1.09 1.96 1.96q-1.09 .86 -1.96 1.96q-.86 -1.09 -1.96 -1.96q1.09 -.86 1.96 -1.96z
M212.29 66.93q.92 1.1 2.02 2.02q-1.1 .92 -2.02 2.02q-.92 -1.1 -2.02 -2.02q1.1 -.92 2.02 -2.02z
M212.29 73.39q.98 1.11 2.08 2.08q-1.11 .98 -2.08 2.08q-.98 -1.11 -2.08 -2.08q1.11 -.98 2.08 -2.08z
M212.29 79.85q1.03 1.11 2.14 2.14q-1.11 1.03 -2.14 2.14q-1.03 -1.11 -2.14 -2.14q1.11 -1.03 2.14 -2.14z
M212.29 86.29q1.09 1.13 2.22 2.22q-1.13 1.09 -2.22 2.22q-1.09 -1.13 -2.22 -2.22q1.13 -1.09 2.22 -2.22z
M212.29 92.74q1.15 1.15 2.29 2.29q-1.15 1.15 -2.29 2.29q-1.15 -1.15 -2.29 -2.29q1.15 -1.15 2.29 -2.29z
M212.29 99.2q1.18 1.18 2.35 2.35q-1.18 1.18 -2.35 2.35q-1.18 -1.18 -2.35 -2.35q1.18 -1.18 2.35 -2.35z
M212.29 105.67q1.2 1.2 2.4 2.4q-1.2 1.2 -2.4 2.4q-1.2 -1.2 -2.4 -2.4q1.2 -1.2 2.4 -2.4z
M212.29 112.14q1.23 1.23 2.45 2.45q-1.23 1.23 -2.45 2.45q-1.23 -1.23 -2.45 -2.45q1.23 -1.23 2.45 -2.45z
M212.29 118.62q1.24 1.24 2.49 2.49q-1.24 1.24 -2.49 2.49q-1.24 -1.24 -2.49 -2.49q1.24 -1.24 2.49 -2.49z
M212.29 125.12q1.26 1.26 2.51 2.51q-1.26 1.26 -2.51 2.51q-1.26 -1.26 -2.51 -2.51q1.26 -1.26 2.51 -2.51z
M212.29 131.63q1.26 1.26 2.52 2.52q-1.26 1.26 -2.52 2.52q-1.26 -1.26 -2.52 -2.52q1.26 -1.26 2.52 -2.52z
M212.29 138.16q1.26 1.26 2.51 2.51q-1.26 1.26 -2.51 2.51q-1.26 -1.26 -2.51 -2.51q1.26 -1.26 2.51 -2.51z
M212.29 144.7q1.25 1.25 2.49 2.49q-1.25 1.25 -2.49 2.49q-1.25 -1.25 -2.49 -2.49q1.25 -1.25 2.49 -2.49z
M212.29 151.25q1.23 1.23 2.46 2.46q-1.23 1.23 -2.46 2.46q-1.23 -1.23 -2.46 -2.46q1.23 -1.23 2.46 -2.46z
M212.29 157.82q1.21 1.21 2.41 2.41q-1.21 1.21 -2.41 2.41q-1.21 -1.21 -2.41 -2.41q1.21 -1.21 2.41 -2.41z
M212.29 164.39q1.18 1.18 2.36 2.36q-1.18 1.18 -2.36 2.36q-1.18 -1.18 -2.36 -2.36q1.18 -1.18 2.36 -2.36z
M212.29 170.97q1.15 1.15 2.3 2.3q-1.15 1.15 -2.3 2.3q-1.15 -1.15 -2.3 -2.3q1.15 -1.15 2.3 -2.3z
M212.29 177.55q1.1 1.13 2.24 2.24q-1.13 1.1 -2.24 2.24q-1.1 -1.13 -2.24 -2.24q1.13 -1.1 2.24 -2.24z
M212.29 184.15q1.04 1.12 2.16 2.16q-1.12 1.04 -2.16 2.16q-1.04 -1.12 -2.16 -2.16q1.12 -1.04 2.16 -2.16z
M212.29 190.73q.99 1.11 2.1 2.1q-1.11 .99 -2.1 2.1q-.99 -1.11 -2.1 -2.1q1.11 -.99 2.1 -2.1z
M212.29 197.32q.93 1.1 2.03 2.03q-1.1 .93 -2.03 2.03q-.93 -1.1 -2.03 -2.03q1.1 -.93 2.03 -2.03z
M212.29 203.91q.87 1.09 1.96 1.96q-1.09 .87 -1.96 1.96q-.87 -1.09 -1.96 -1.96q1.09 -.87 1.96 -1.96z
M212.29 210.47q.82 1.1 1.92 1.92q-1.1 .82 -1.92 1.92q-.82 -1.1 -1.92 -1.92q1.1 -.82 1.92 -1.92z
M212.29 217.03q.79 1.09 1.88 1.88q-1.09 .79 -1.88 1.88q-.79 -1.09 -1.88 -1.88q1.09 -.79 1.88 -1.88z
M212.29 223.56q.78 1.09 1.87 1.87q-1.09 .78 -1.87 1.87q-.78 -1.09 -1.87 -1.87q1.09 -.78 1.87 -1.87z
M212.29 230.08q.78 1.09 1.87 1.87q-1.09 .78 -1.87 1.87q-.78 -1.09 -1.87 -1.87q1.09 -.78 1.87 -1.87z
M212.29 236.6q.78 1.09 1.87 1.87q-1.09 .78 -1.87 1.87q-.78 -1.09 -1.87 -1.87q1.09 -.78 1.87 -1.87z
M212.29 243.12q.78 1.09 1.87 1.87q-1.09 .78 -1.87 1.87q-.78 -1.09 -1.87 -1.87q1.09 -.78 1.87 -1.87z
M212.29 249.64q.78 1.09 1.87 1.87q-1.09 .78 -1.87 1.87q-.78 -1.09 -1.87 -1.87q1.09 -.78 1.87 -1.87z
M218.81 -4.64q.77 1.09 1.87 1.87q-1.09 .77 -1.87 1.87q-.77 -1.09 -1.87 -1.87q1.09 -.77 1.87 -1.87z
M218.81 1.88q.77 1.09 1.87 1.87q-1.09 .77 -1.87 1.87q-.77 -1.09 -1.87 -1.87q1.09 -.77 1.87 -1.87z
M218.81 8.4q.78 1.09 1.87 1.87q-1.09 .78 -1.87 1.87q-.78 -1.09 -1.87 -1.87q1.09 -.78 1.87 -1.87z
M218.81 14.92q.78 1.09 1.87 1.87q-1.09 .78 -1.87 1.87q-.78 -1.09 -1.87 -1.87q1.09 -.78 1.87 -1.87z
M218.81 21.44q.78 1.09 1.87 1.87q-1.09 .78 -1.87 1.87q-.78 -1.09 -1.87 -1.87q1.09 -.78 1.87 -1.87z
M218.81 27.96q.78 1.09 1.87 1.87q-1.09 .78 -1.87 1.87q-.78 -1.09 -1.87 -1.87q1.09 -.78 1.87 -1.87z
M218.81 34.48q.78 1.09 1.87 1.87q-1.09 .78 -1.87 1.87q-.78 -1.09 -1.87 -1.87q1.09 -.78 1.87 -1.87z
M218.81 41q.78 1.09 1.87 1.87q-1.09 .78 -1.87 1.87q-.78 -1.09 -1.87 -1.87q1.09 -.78 1.87 -1.87z
M218.81 47.52q.78 1.09 1.87 1.87q-1.09 .78 -1.87 1.87q-.78 -1.09 -1.87 -1.87q1.09 -.78 1.87 -1.87z
M218.81 54.04q.78 1.09 1.87 1.87q-1.09 .78 -1.87 1.87q-.78 -1.09 -1.87 -1.87q1.09 -.78 1.87 -1.87z
M218.81 60.53q.8 1.1 1.9 1.9q-1.1 .8 -1.9 1.9q-.8 -1.1 -1.9 -1.9q1.1 -.8 1.9 -1.9z
M218.81 67.01q.85 1.1 1.94 1.94q-1.1 .85 -1.94 1.94q-.85 -1.1 -1.94 -1.94q1.1 -.85 1.94 -1.94z
M218.81 73.49q.89 1.09 1.98 1.98q-1.09 .89 -1.98 1.98q-.89 -1.09 -1.98 -1.98q1.09 -.89 1.98 -1.98z
M218.81 79.95q.94 1.1 2.04 2.04q-1.1 .94 -2.04 2.04q-.94 -1.1 -2.04 -2.04q1.1 -.94 2.04 -2.04z
M218.81 86.41q.99 1.11 2.1 2.1q-1.11 .99 -2.1 2.1q-.99 -1.11 -2.1 -2.1q1.11 -.99 2.1 -2.1z
M218.81 92.89q1.03 1.11 2.14 2.14q-1.11 1.03 -2.14 2.14q-1.03 -1.11 -2.14 -2.14q1.11 -1.03 2.14 -2.14z
M218.81 99.35q1.07 1.12 2.2 2.2q-1.12 1.07 -2.2 2.2q-1.07 -1.12 -2.2 -2.2q1.12 -1.07 2.2 -2.2z
M218.81 105.83q1.11 1.13 2.24 2.24q-1.13 1.11 -2.24 2.24q-1.11 -1.13 -2.24 -2.24q1.13 -1.11 2.24 -2.24z
M218.81 112.31q1.14 1.14 2.28 2.28q-1.14 1.14 -2.28 2.28q-1.14 -1.14 -2.28 -2.28q1.14 -1.14 2.28 -2.28z
M218.81 118.8q1.16 1.16 2.31 2.31q-1.16 1.16 -2.31 2.31q-1.16 -1.16 -2.31 -2.31q1.16 -1.16 2.31 -2.31z
M218.81 125.3q1.16 1.16 2.33 2.33q-1.16 1.16 -2.33 2.33q-1.16 -1.16 -2.33 -2.33q1.16 -1.16 2.33 -2.33z
M218.81 131.82q1.17 1.17 2.33 2.33q-1.17 1.17 -2.33 2.33q-1.17 -1.17 -2.33 -2.33q1.17 -1.17 2.33 -2.33z
M218.81 138.34q1.17 1.17 2.33 2.33q-1.17 1.17 -2.33 2.33q-1.17 -1.17 -2.33 -2.33q1.17 -1.17 2.33 -2.33z
M218.81 144.87q1.16 1.16 2.32 2.32q-1.16 1.16 -2.32 2.32q-1.16 -1.16 -2.32 -2.32q1.16 -1.16 2.32 -2.32z
M218.81 151.42q1.14 1.14 2.29 2.29q-1.14 1.14 -2.29 2.29q-1.14 -1.14 -2.29 -2.29q1.14 -1.14 2.29 -2.29z
M218.81 157.98q1.12 1.13 2.25 2.25q-1.13 1.12 -2.25 2.25q-1.12 -1.13 -2.25 -2.25q1.13 -1.12 2.25 -2.25z
M218.81 164.54q1.08 1.13 2.21 2.21q-1.13 1.08 -2.21 2.21q-1.08 -1.13 -2.21 -2.21q1.13 -1.08 2.21 -2.21z
M218.81 171.12q1.04 1.11 2.15 2.15q-1.11 1.04 -2.15 2.15q-1.04 -1.11 -2.15 -2.15q1.11 -1.04 2.15 -2.15z
M218.81 177.68q1 1.11 2.11 2.11q-1.11 1 -2.11 2.11q-1 -1.11 -2.11 -2.11q1.11 -1 2.11 -2.11z
M218.81 184.26q.95 1.1 2.05 2.05q-1.1 .95 -2.05 2.05q-.95 -1.1 -2.05 -2.05q1.1 -.95 2.05 -2.05z
M218.81 190.83q.9 1.1 2 2q-1.1 .9 -2 2q-.9 -1.1 -2 -2q1.1 -.9 2 -2z
M218.81 197.4q.85 1.1 1.95 1.95q-1.1 .85 -1.95 1.95q-.85 -1.1 -1.95 -1.95q1.1 -.85 1.95 -1.95z
M218.81 203.96q.81 1.1 1.91 1.91q-1.1 .81 -1.91 1.91q-.81 -1.1 -1.91 -1.91q1.1 -.81 1.91 -1.91z
M218.81 210.52q.79 1.09 1.87 1.87q-1.09 .79 -1.87 1.87q-.79 -1.09 -1.87 -1.87q1.09 -.79 1.87 -1.87z
M218.81 217.04q.78 1.09 1.87 1.87q-1.09 .78 -1.87 1.87q-.78 -1.09 -1.87 -1.87q1.09 -.78 1.87 -1.87z
M218.81 223.56q.78 1.09 1.87 1.87q-1.09 .78 -1.87 1.87q-.78 -1.09 -1.87 -1.87q1.09 -.78 1.87 -1.87z
M218.81 230.08q.78 1.09 1.87 1.87q-1.09 .78 -1.87 1.87q-.78 -1.09 -1.87 -1.87q1.09 -.78 1.87 -1.87z
M218.81 236.6q.78 1.09 1.87 1.87q-1.09 .78 -1.87 1.87q-.78 -1.09 -1.87 -1.87q1.09 -.78 1.87 -1.87z
M218.81 243.12q.78 1.09 1.87 1.87q-1.09 .78 -1.87 1.87q-.78 -1.09 -1.87 -1.87q1.09 -.78 1.87 -1.87z
M218.81 249.64q.78 1.09 1.87 1.87q-1.09 .78 -1.87 1.87q-.78 -1.09 -1.87 -1.87q1.09 -.78 1.87 -1.87z
M225.33 -4.63q.77 1.09 1.86 1.86q-1.09 .77 -1.86 1.86q-.77 -1.09 -1.86 -1.86q1.09 -.77 1.86 -1.86z
M225.33 1.88q.77 1.09 1.87 1.87q-1.09 .77 -1.87 1.87q-.77 -1.09 -1.87 -1.87q1.09 -.77 1.87 -1.87z
M225.33 8.4q.78 1.09 1.87 1.87q-1.09 .78 -1.87 1.87q-.78 -1.09 -1.87 -1.87q1.09 -.78 1.87 -1.87z
M225.33 14.92q.78 1.09 1.87 1.87q-1.09 .78 -1.87 1.87q-.78 -1.09 -1.87 -1.87q1.09 -.78 1.87 -1.87z
M225.33 21.44q.78 1.09 1.87 1.87q-1.09 .78 -1.87 1.87q-.78 -1.09 -1.87 -1.87q1.09 -.78 1.87 -1.87z
M225.33 27.96q.78 1.09 1.87 1.87q-1.09 .78 -1.87 1.87q-.78 -1.09 -1.87 -1.87q1.09 -.78 1.87 -1.87z
M225.33 34.48q.78 1.09 1.87 1.87q-1.09 .78 -1.87 1.87q-.78 -1.09 -1.87 -1.87q1.09 -.78 1.87 -1.87z
M225.33 41q.78 1.09 1.87 1.87q-1.09 .78 -1.87 1.87q-.78 -1.09 -1.87 -1.87q1.09 -.78 1.87 -1.87z
M225.33 47.52q.78 1.09 1.87 1.87q-1.09 .78 -1.87 1.87q-.78 -1.09 -1.87 -1.87q1.09 -.78 1.87 -1.87z
M225.33 54.04q.78 1.09 1.87 1.87q-1.09 .78 -1.87 1.87q-.78 -1.09 -1.87 -1.87q1.09 -.78 1.87 -1.87z
M225.33 60.56q.78 1.09 1.87 1.87q-1.09 .78 -1.87 1.87q-.78 -1.09 -1.87 -1.87q1.09 -.78 1.87 -1.87z
M225.33 67.06q.79 1.1 1.89 1.89q-1.1 .79 -1.89 1.89q-.79 -1.1 -1.89 -1.89q1.1 -.79 1.89 -1.89z
M225.33 73.55q.82 1.1 1.92 1.92q-1.1 .82 -1.92 1.92q-.82 -1.1 -1.92 -1.92q1.1 -.82 1.92 -1.92z
M225.33 80.04q.86 1.1 1.95 1.95q-1.1 .86 -1.95 1.95q-.86 -1.1 -1.95 -1.95q1.1 -.86 1.95 -1.95z
M225.33 86.52q.89 1.1 1.99 1.99q-1.1 .89 -1.99 1.99q-.89 -1.1 -1.99 -1.99q1.1 -.89 1.99 -1.99z
M225.33 93q.93 1.1 2.03 2.03q-1.1 .93 -2.03 2.03q-.93 -1.1 -2.03 -2.03q1.1 -.93 2.03 -2.03z
M225.33 99.48q.97 1.11 2.07 2.07q-1.11 .97 -2.07 2.07q-.97 -1.11 -2.07 -2.07q1.11 -.97 2.07 -2.07z
M225.33 105.97q.99 1.11 2.1 2.1q-1.11 .99 -2.1 2.1q-.99 -1.11 -2.1 -2.1q1.11 -.99 2.1 -2.1z
M225.33 112.46q1.02 1.11 2.13 2.13q-1.11 1.02 -2.13 2.13q-1.02 -1.11 -2.13 -2.13q1.11 -1.02 2.13 -2.13z
M225.33 118.96q1.04 1.11 2.15 2.15q-1.11 1.04 -2.15 2.15q-1.04 -1.11 -2.15 -2.15q1.11 -1.04 2.15 -2.15z
M225.33 125.46q1.05 1.12 2.17 2.17q-1.12 1.05 -2.17 2.17q-1.05 -1.12 -2.17 -2.17q1.12 -1.05 2.17 -2.17z
M225.33 131.98q1.05 1.12 2.17 2.17q-1.12 1.05 -2.17 2.17q-1.05 -1.12 -2.17 -2.17q1.12 -1.05 2.17 -2.17z
M225.33 138.5q1.05 1.12 2.17 2.17q-1.12 1.05 -2.17 2.17q-1.05 -1.12 -2.17 -2.17q1.12 -1.05 2.17 -2.17z
M225.33 145.04q1.04 1.11 2.15 2.15q-1.11 1.04 -2.15 2.15q-1.04 -1.11 -2.15 -2.15q1.11 -1.04 2.15 -2.15z
M225.33 151.57q1.02 1.11 2.14 2.14q-1.11 1.02 -2.14 2.14q-1.02 -1.11 -2.14 -2.14q1.11 -1.02 2.14 -2.14z
M225.33 158.12q1 1.11 2.11 2.11q-1.11 1 -2.11 2.11q-1 -1.11 -2.11 -2.11q1.11 -1 2.11 -2.11z
M225.33 164.67q.97 1.11 2.08 2.08q-1.11 .97 -2.08 2.08q-.97 -1.11 -2.08 -2.08q1.11 -.97 2.08 -2.08z
M225.33 171.23q.94 1.1 2.04 2.04q-1.1 .94 -2.04 2.04q-.94 -1.1 -2.04 -2.04q1.1 -.94 2.04 -2.04z
M225.33 177.79q.9 1.1 2 2q-1.1 .9 -2 2q-.9 -1.1 -2 -2q1.1 -.9 2 -2z
M225.33 184.35q.86 1.09 1.96 1.96q-1.09 .86 -1.96 1.96q-.86 -1.09 -1.96 -1.96q1.09 -.86 1.96 -1.96z
M225.33 190.9q.83 1.1 1.93 1.93q-1.1 .83 -1.93 1.93q-.83 -1.1 -1.93 -1.93q1.1 -.83 1.93 -1.93z
M225.33 197.46q.8 1.1 1.89 1.89q-1.1 .8 -1.89 1.89q-.8 -1.1 -1.89 -1.89q1.1 -.8 1.89 -1.89z
M225.33 204q.78 1.09 1.87 1.87q-1.09 .78 -1.87 1.87q-.78 -1.09 -1.87 -1.87q1.09 -.78 1.87 -1.87z
M225.33 210.52q.78 1.09 1.87 1.87q-1.09 .78 -1.87 1.87q-.78 -1.09 -1.87 -1.87q1.09 -.78 1.87 -1.87z
M225.33 217.04q.78 1.09 1.87 1.87q-1.09 .78 -1.87 1.87q-.78 -1.09 -1.87 -1.87q1.09 -.78 1.87 -1.87z
M225.33 223.56q.78 1.09 1.87 1.87q-1.09 .78 -1.87 1.87q-.78 -1.09 -1.87 -1.87q1.09 -.78 1.87 -1.87z
M225.33 230.08q.78 1.09 1.87 1.87q-1.09 .78 -1.87 1.87q-.78 -1.09 -1.87 -1.87q1.09 -.78 1.87 -1.87z
M225.33 236.6q.78 1.09 1.87 1.87q-1.09 .78 -1.87 1.87q-.78 -1.09 -1.87 -1.87q1.09 -.78 1.87 -1.87z
M225.33 243.12q.78 1.09 1.87 1.87q-1.09 .78 -1.87 1.87q-.78 -1.09 -1.87 -1.87q1.09 -.78 1.87 -1.87z
M225.33 249.64q.78 1.09 1.87 1.87q-1.09 .78 -1.87 1.87q-.78 -1.09 -1.87 -1.87q1.09 -.78 1.87 -1.87z
M231.85 -4.63q.77 1.09 1.86 1.86q-1.09 .77 -1.86 1.86q-.77 -1.09 -1.86 -1.86q1.09 -.77 1.86 -1.86z
M231.85 1.89q.77 1.09 1.86 1.86q-1.09 .77 -1.86 1.86q-.77 -1.09 -1.86 -1.86q1.09 -.77 1.86 -1.86z
M231.85 8.4q.77 1.09 1.87 1.87q-1.09 .77 -1.87 1.87q-.77 -1.09 -1.87 -1.87q1.09 -.77 1.87 -1.87z
M231.85 14.92q.78 1.09 1.87 1.87q-1.09 .78 -1.87 1.87q-.78 -1.09 -1.87 -1.87q1.09 -.78 1.87 -1.87z
M231.85 21.44q.78 1.09 1.87 1.87q-1.09 .78 -1.87 1.87q-.78 -1.09 -1.87 -1.87q1.09 -.78 1.87 -1.87z
M231.85 27.96q.78 1.09 1.87 1.87q-1.09 .78 -1.87 1.87q-.78 -1.09 -1.87 -1.87q1.09 -.78 1.87 -1.87z
M231.85 34.48q.78 1.09 1.87 1.87q-1.09 .78 -1.87 1.87q-.78 -1.09 -1.87 -1.87q1.09 -.78 1.87 -1.87z
M231.85 41q.78 1.09 1.87 1.87q-1.09 .78 -1.87 1.87q-.78 -1.09 -1.87 -1.87q1.09 -.78 1.87 -1.87z
M231.85 47.52q.78 1.09 1.87 1.87q-1.09 .78 -1.87 1.87q-.78 -1.09 -1.87 -1.87q1.09 -.78 1.87 -1.87z
M231.85 54.04q.78 1.09 1.87 1.87q-1.09 .78 -1.87 1.87q-.78 -1.09 -1.87 -1.87q1.09 -.78 1.87 -1.87z
M231.85 60.56q.78 1.09 1.87 1.87q-1.09 .78 -1.87 1.87q-.78 -1.09 -1.87 -1.87q1.09 -.78 1.87 -1.87z
M231.85 67.08q.78 1.09 1.87 1.87q-1.09 .78 -1.87 1.87q-.78 -1.09 -1.87 -1.87q1.09 -.78 1.87 -1.87z
M231.85 73.6q.78 1.09 1.87 1.87q-1.09 .78 -1.87 1.87q-.78 -1.09 -1.87 -1.87q1.09 -.78 1.87 -1.87z
M231.85 80.1q.8 1.1 1.89 1.89q-1.1 .8 -1.89 1.89q-.8 -1.1 -1.89 -1.89q1.1 -.8 1.89 -1.89z
M231.85 86.59q.82 1.1 1.92 1.92q-1.1 .82 -1.92 1.92q-.82 -1.1 -1.92 -1.92q1.1 -.82 1.92 -1.92z
M231.85 93.09q.85 1.1 1.94 1.94q-1.1 .85 -1.94 1.94q-.85 -1.1 -1.94 -1.94q1.1 -.85 1.94 -1.94z
M231.85 99.59q.87 1.09 1.96 1.96q-1.09 .87 -1.96 1.96q-.87 -1.09 -1.96 -1.96q1.09 -.87 1.96 -1.96z
M231.85 106.08q.9 1.1 1.99 1.99q-1.1 .9 -1.99 1.99q-.9 -1.1 -1.99 -1.99q1.1 -.9 1.99 -1.99z
M231.85 112.57q.92 1.1 2.02 2.02q-1.1 .92 -2.02 2.02q-.92 -1.1 -2.02 -2.02q1.1 -.92 2.02 -2.02z
M231.85 119.08q.93 1.1 2.03 2.03q-1.1 .93 -2.03 2.03q-.93 -1.1 -2.03 -2.03q1.1 -.93 2.03 -2.03z
M231.85 125.59q.94 1.1 2.04 2.04q-1.1 .94 -2.04 2.04q-.94 -1.1 -2.04 -2.04q1.1 -.94 2.04 -2.04z
M231.85 132.1q.94 1.1 2.05 2.05q-1.1 .94 -2.05 2.05q-.94 -1.1 -2.05 -2.05q1.1 -.94 2.05 -2.05z
M231.85 138.62q.94 1.1 2.05 2.05q-1.1 .94 -2.05 2.05q-.94 -1.1 -2.05 -2.05q1.1 -.94 2.05 -2.05z
M231.85 145.15q.93 1.1 2.04 2.04q-1.1 .93 -2.04 2.04q-.93 -1.1 -2.04 -2.04q1.1 -.93 2.04 -2.04z
M231.85 151.69q.92 1.1 2.02 2.02q-1.1 .92 -2.02 2.02q-.92 -1.1 -2.02 -2.02q1.1 -.92 2.02 -2.02z
M231.85 158.23q.9 1.1 2 2q-1.1 .9 -2 2q-.9 -1.1 -2 -2q1.1 -.9 2 -2z
M231.85 164.78q.88 1.09 1.97 1.97q-1.09 .88 -1.97 1.97q-.88 -1.09 -1.97 -1.97q1.09 -.88 1.97 -1.97z
M231.85 171.32q.85 1.1 1.95 1.95q-1.1 .85 -1.95 1.95q-.85 -1.1 -1.95 -1.95q1.1 -.85 1.95 -1.95z
M231.85 177.86q.83 1.1 1.93 1.93q-1.1 .83 -1.93 1.93q-.83 -1.1 -1.93 -1.93q1.1 -.83 1.93 -1.93z
M231.85 184.41q.8 1.1 1.9 1.9q-1.1 .8 -1.9 1.9q-.8 -1.1 -1.9 -1.9q1.1 -.8 1.9 -1.9z
M231.85 190.96q.79 1.09 1.87 1.87q-1.09 .79 -1.87 1.87q-.79 -1.09 -1.87 -1.87q1.09 -.79 1.87 -1.87z
M231.85 197.48q.78 1.09 1.87 1.87q-1.09 .78 -1.87 1.87q-.78 -1.09 -1.87 -1.87q1.09 -.78 1.87 -1.87z
M231.85 204q.78 1.09 1.87 1.87q-1.09 .78 -1.87 1.87q-.78 -1.09 -1.87 -1.87q1.09 -.78 1.87 -1.87z
M231.85 210.52q.78 1.09 1.87 1.87q-1.09 .78 -1.87 1.87q-.78 -1.09 -1.87 -1.87q1.09 -.78 1.87 -1.87z
M231.85 217.04q.78 1.09 1.87 1.87q-1.09 .78 -1.87 1.87q-.78 -1.09 -1.87 -1.87q1.09 -.78 1.87 -1.87z
M231.85 223.56q.78 1.09 1.87 1.87q-1.09 .78 -1.87 1.87q-.78 -1.09 -1.87 -1.87q1.09 -.78 1.87 -1.87z
M231.85 230.08q.78 1.09 1.87 1.87q-1.09 .78 -1.87 1.87q-.78 -1.09 -1.87 -1.87q1.09 -.78 1.87 -1.87z
M231.85 236.6q.78 1.09 1.87 1.87q-1.09 .78 -1.87 1.87q-.78 -1.09 -1.87 -1.87q1.09 -.78 1.87 -1.87z
M231.85 243.12q.78 1.09 1.87 1.87q-1.09 .78 -1.87 1.87q-.78 -1.09 -1.87 -1.87q1.09 -.78 1.87 -1.87z
M231.85 249.64q.78 1.09 1.87 1.87q-1.09 .78 -1.87 1.87q-.78 -1.09 -1.87 -1.87q1.09 -.78 1.87 -1.87z
M238.37 -4.63q.77 1.09 1.86 1.86q-1.09 .77 -1.86 1.86q-.77 -1.09 -1.86 -1.86q1.09 -.77 1.86 -1.86z
M238.37 1.89q.77 1.09 1.86 1.86q-1.09 .77 -1.86 1.86q-.77 -1.09 -1.86 -1.86q1.09 -.77 1.86 -1.86z
M238.37 8.41q.77 1.09 1.86 1.86q-1.09 .77 -1.86 1.86q-.77 -1.09 -1.86 -1.86q1.09 -.77 1.86 -1.86z
M238.37 14.92q.77 1.09 1.87 1.87q-1.09 .77 -1.87 1.87q-.77 -1.09 -1.87 -1.87q1.09 -.77 1.87 -1.87z
M238.37 21.44q.78 1.09 1.87 1.87q-1.09 .78 -1.87 1.87q-.78 -1.09 -1.87 -1.87q1.09 -.78 1.87 -1.87z
M238.37 27.96q.78 1.09 1.87 1.87q-1.09 .78 -1.87 1.87q-.78 -1.09 -1.87 -1.87q1.09 -.78 1.87 -1.87z
M238.37 34.48q.78 1.09 1.87 1.87q-1.09 .78 -1.87 1.87q-.78 -1.09 -1.87 -1.87q1.09 -.78 1.87 -1.87z
M238.37 41q.78 1.09 1.87 1.87q-1.09 .78 -1.87 1.87q-.78 -1.09 -1.87 -1.87q1.09 -.78 1.87 -1.87z
M238.37 47.52q.78 1.09 1.87 1.87q-1.09 .78 -1.87 1.87q-.78 -1.09 -1.87 -1.87q1.09 -.78 1.87 -1.87z
M238.37 54.04q.78 1.09 1.87 1.87q-1.09 .78 -1.87 1.87q-.78 -1.09 -1.87 -1.87q1.09 -.78 1.87 -1.87z
M238.37 60.56q.78 1.09 1.87 1.87q-1.09 .78 -1.87 1.87q-.78 -1.09 -1.87 -1.87q1.09 -.78 1.87 -1.87z
M238.37 67.08q.78 1.09 1.87 1.87q-1.09 .78 -1.87 1.87q-.78 -1.09 -1.87 -1.87q1.09 -.78 1.87 -1.87z
M238.37 73.6q.78 1.09 1.87 1.87q-1.09 .78 -1.87 1.87q-.78 -1.09 -1.87 -1.87q1.09 -.78 1.87 -1.87z
M238.37 80.12q.78 1.09 1.87 1.87q-1.09 .78 -1.87 1.87q-.78 -1.09 -1.87 -1.87q1.09 -.78 1.87 -1.87z
M238.37 86.64q.78 1.09 1.87 1.87q-1.09 .78 -1.87 1.87q-.78 -1.09 -1.87 -1.87q1.09 -.78 1.87 -1.87z
M238.37 93.15q.79 1.09 1.88 1.88q-1.09 .79 -1.88 1.88q-.79 -1.09 -1.88 -1.88q1.09 -.79 1.88 -1.88z
M238.37 99.65q.8 1.1 1.9 1.9q-1.1 .8 -1.9 1.9q-.8 -1.1 -1.9 -1.9q1.1 -.8 1.9 -1.9z
M238.37 106.15q.82 1.1 1.92 1.92q-1.1 .82 -1.92 1.92q-.82 -1.1 -1.92 -1.92q1.1 -.82 1.92 -1.92z
M238.37 112.66q.83 1.1 1.93 1.93q-1.1 .83 -1.93 1.93q-.83 -1.1 -1.93 -1.93q1.1 -.83 1.93 -1.93z
M238.37 119.17q.84 1.1 1.94 1.94q-1.1 .84 -1.94 1.94q-.84 -1.1 -1.94 -1.94q1.1 -.84 1.94 -1.94z
M238.37 125.68q.85 1.1 1.95 1.95q-1.1 .85 -1.95 1.95q-.85 -1.1 -1.95 -1.95q1.1 -.85 1.95 -1.95z
M238.37 132.2q.85 1.1 1.95 1.95q-1.1 .85 -1.95 1.95q-.85 -1.1 -1.95 -1.95q1.1 -.85 1.95 -1.95z
M238.37 138.72q.85 1.1 1.95 1.95q-1.1 .85 -1.95 1.95q-.85 -1.1 -1.95 -1.95q1.1 -.85 1.95 -1.95z
M238.37 145.25q.85 1.1 1.94 1.94q-1.1 .85 -1.94 1.94q-.85 -1.1 -1.94 -1.94q1.1 -.85 1.94 -1.94z
M238.37 151.78q.84 1.1 1.93 1.93q-1.1 .84 -1.93 1.93q-.84 -1.1 -1.93 -1.93q1.1 -.84 1.93 -1.93z
M238.37 158.31q.82 1.1 1.92 1.92q-1.1 .82 -1.92 1.92q-.82 -1.1 -1.92 -1.92q1.1 -.82 1.92 -1.92z
M238.37 164.84q.8 1.1 1.91 1.91q-1.1 .8 -1.91 1.91q-.8 -1.1 -1.91 -1.91q1.1 -.8 1.91 -1.91z
M238.37 171.38q.79 1.09 1.89 1.89q-1.09 .79 -1.89 1.89q-.79 -1.09 -1.89 -1.89q1.09 -.79 1.89 -1.89z
M238.37 177.92q.78 1.09 1.87 1.87q-1.09 .78 -1.87 1.87q-.78 -1.09 -1.87 -1.87q1.09 -.78 1.87 -1.87z
M238.37 184.44q.78 1.09 1.87 1.87q-1.09 .78 -1.87 1.87q-.78 -1.09 -1.87 -1.87q1.09 -.78 1.87 -1.87z
M238.37 190.96q.78 1.09 1.87 1.87q-1.09 .78 -1.87 1.87q-.78 -1.09 -1.87 -1.87q1.09 -.78 1.87 -1.87z
M238.37 197.48q.78 1.09 1.87 1.87q-1.09 .78 -1.87 1.87q-.78 -1.09 -1.87 -1.87q1.09 -.78 1.87 -1.87z
M238.37 204q.78 1.09 1.87 1.87q-1.09 .78 -1.87 1.87q-.78 -1.09 -1.87 -1.87q1.09 -.78 1.87 -1.87z
M238.37 210.52q.78 1.09 1.87 1.87q-1.09 .78 -1.87 1.87q-.78 -1.09 -1.87 -1.87q1.09 -.78 1.87 -1.87z
M238.37 217.04q.78 1.09 1.87 1.87q-1.09 .78 -1.87 1.87q-.78 -1.09 -1.87 -1.87q1.09 -.78 1.87 -1.87z
M238.37 223.56q.78 1.09 1.87 1.87q-1.09 .78 -1.87 1.87q-.78 -1.09 -1.87 -1.87q1.09 -.78 1.87 -1.87z
M238.37 230.08q.78 1.09 1.87 1.87q-1.09 .78 -1.87 1.87q-.78 -1.09 -1.87 -1.87q1.09 -.78 1.87 -1.87z
M238.37 236.6q.78 1.09 1.87 1.87q-1.09 .78 -1.87 1.87q-.78 -1.09 -1.87 -1.87q1.09 -.78 1.87 -1.87z
M238.37 243.12q.78 1.09 1.87 1.87q-1.09 .78 -1.87 1.87q-.78 -1.09 -1.87 -1.87q1.09 -.78 1.87 -1.87z
M238.37 249.64q.77 1.09 1.87 1.87q-1.09 .77 -1.87 1.87q-.77 -1.09 -1.87 -1.87q1.09 -.77 1.87 -1.87z
M244.89 -4.63q.77 1.09 1.86 1.86q-1.09 .77 -1.86 1.86q-.77 -1.09 -1.86 -1.86q1.09 -.77 1.86 -1.86z
M244.89 1.89q.77 1.09 1.86 1.86q-1.09 .77 -1.86 1.86q-.77 -1.09 -1.86 -1.86q1.09 -.77 1.86 -1.86z
M244.89 8.41q.77 1.09 1.86 1.86q-1.09 .77 -1.86 1.86q-.77 -1.09 -1.86 -1.86q1.09 -.77 1.86 -1.86z
M244.89 14.93q.77 1.09 1.86 1.86q-1.09 .77 -1.86 1.86q-.77 -1.09 -1.86 -1.86q1.09 -.77 1.86 -1.86z
M244.89 21.44q.77 1.09 1.87 1.87q-1.09 .77 -1.87 1.87q-.77 -1.09 -1.87 -1.87q1.09 -.77 1.87 -1.87z
M244.89 27.96q.78 1.09 1.87 1.87q-1.09 .78 -1.87 1.87q-.78 -1.09 -1.87 -1.87q1.09 -.78 1.87 -1.87z
M244.89 34.48q.78 1.09 1.87 1.87q-1.09 .78 -1.87 1.87q-.78 -1.09 -1.87 -1.87q1.09 -.78 1.87 -1.87z
M244.89 41q.78 1.09 1.87 1.87q-1.09 .78 -1.87 1.87q-.78 -1.09 -1.87 -1.87q1.09 -.78 1.87 -1.87z
M244.89 47.52q.78 1.09 1.87 1.87q-1.09 .78 -1.87 1.87q-.78 -1.09 -1.87 -1.87q1.09 -.78 1.87 -1.87z
M244.89 54.04q.78 1.09 1.87 1.87q-1.09 .78 -1.87 1.87q-.78 -1.09 -1.87 -1.87q1.09 -.78 1.87 -1.87z
M244.89 60.56q.78 1.09 1.87 1.87q-1.09 .78 -1.87 1.87q-.78 -1.09 -1.87 -1.87q1.09 -.78 1.87 -1.87z
M244.89 67.08q.78 1.09 1.87 1.87q-1.09 .78 -1.87 1.87q-.78 -1.09 -1.87 -1.87q1.09 -.78 1.87 -1.87z
M244.89 73.6q.78 1.09 1.87 1.87q-1.09 .78 -1.87 1.87q-.78 -1.09 -1.87 -1.87q1.09 -.78 1.87 -1.87z
M244.89 80.12q.78 1.09 1.87 1.87q-1.09 .78 -1.87 1.87q-.78 -1.09 -1.87 -1.87q1.09 -.78 1.87 -1.87z
M244.89 86.64q.78 1.09 1.87 1.87q-1.09 .78 -1.87 1.87q-.78 -1.09 -1.87 -1.87q1.09 -.78 1.87 -1.87z
M244.89 93.16q.78 1.09 1.87 1.87q-1.09 .78 -1.87 1.87q-.78 -1.09 -1.87 -1.87q1.09 -.78 1.87 -1.87z
M244.89 99.68q.78 1.09 1.87 1.87q-1.09 .78 -1.87 1.87q-.78 -1.09 -1.87 -1.87q1.09 -.78 1.87 -1.87z
M244.89 106.2q.78 1.09 1.87 1.87q-1.09 .78 -1.87 1.87q-.78 -1.09 -1.87 -1.87q1.09 -.78 1.87 -1.87z
M244.89 112.72q.78 1.09 1.87 1.87q-1.09 .78 -1.87 1.87q-.78 -1.09 -1.87 -1.87q1.09 -.78 1.87 -1.87z
M244.89 119.23q.79 1.09 1.88 1.88q-1.09 .79 -1.88 1.88q-.79 -1.09 -1.88 -1.88q1.09 -.79 1.88 -1.88z
M244.89 125.75q.79 1.09 1.88 1.88q-1.09 .79 -1.88 1.88q-.79 -1.09 -1.88 -1.88q1.09 -.79 1.88 -1.88z
M244.89 132.27q.79 1.09 1.88 1.88q-1.09 .79 -1.88 1.88q-.79 -1.09 -1.88 -1.88q1.09 -.79 1.88 -1.88z
M244.89 138.79q.79 1.09 1.88 1.88q-1.09 .79 -1.88 1.88q-.79 -1.09 -1.88 -1.88q1.09 -.79 1.88 -1.88z
M244.89 145.31q.79 1.09 1.88 1.88q-1.09 .79 -1.88 1.88q-.79 -1.09 -1.88 -1.88q1.09 -.79 1.88 -1.88z
M244.89 151.84q.78 1.09 1.87 1.87q-1.09 .78 -1.87 1.87q-.78 -1.09 -1.87 -1.87q1.09 -.78 1.87 -1.87z
M244.89 158.36q.78 1.09 1.87 1.87q-1.09 .78 -1.87 1.87q-.78 -1.09 -1.87 -1.87q1.09 -.78 1.87 -1.87z
M244.89 164.88q.78 1.09 1.87 1.87q-1.09 .78 -1.87 1.87q-.78 -1.09 -1.87 -1.87q1.09 -.78 1.87 -1.87z
M244.89 171.4q.78 1.09 1.87 1.87q-1.09 .78 -1.87 1.87q-.78 -1.09 -1.87 -1.87q1.09 -.78 1.87 -1.87z
M244.89 177.92q.78 1.09 1.87 1.87q-1.09 .78 -1.87 1.87q-.78 -1.09 -1.87 -1.87q1.09 -.78 1.87 -1.87z
M244.89 184.44q.78 1.09 1.87 1.87q-1.09 .78 -1.87 1.87q-.78 -1.09 -1.87 -1.87q1.09 -.78 1.87 -1.87z
M244.89 190.96q.78 1.09 1.87 1.87q-1.09 .78 -1.87 1.87q-.78 -1.09 -1.87 -1.87q1.09 -.78 1.87 -1.87z
M244.89 197.48q.78 1.09 1.87 1.87q-1.09 .78 -1.87 1.87q-.78 -1.09 -1.87 -1.87q1.09 -.78 1.87 -1.87z
M244.89 204q.78 1.09 1.87 1.87q-1.09 .78 -1.87 1.87q-.78 -1.09 -1.87 -1.87q1.09 -.78 1.87 -1.87z
M244.89 210.52q.78 1.09 1.87 1.87q-1.09 .78 -1.87 1.87q-.78 -1.09 -1.87 -1.87q1.09 -.78 1.87 -1.87z
M244.89 217.04q.78 1.09 1.87 1.87q-1.09 .78 -1.87 1.87q-.78 -1.09 -1.87 -1.87q1.09 -.78 1.87 -1.87z
M244.89 223.56q.78 1.09 1.87 1.87q-1.09 .78 -1.87 1.87q-.78 -1.09 -1.87 -1.87q1.09 -.78 1.87 -1.87z
M244.89 230.08q.78 1.09 1.87 1.87q-1.09 .78 -1.87 1.87q-.78 -1.09 -1.87 -1.87q1.09 -.78 1.87 -1.87z
M244.89 236.6q.78 1.09 1.87 1.87q-1.09 .78 -1.87 1.87q-.78 -1.09 -1.87 -1.87q1.09 -.78 1.87 -1.87z
M244.89 243.12q.77 1.09 1.87 1.87q-1.09 .77 -1.87 1.87q-.77 -1.09 -1.87 -1.87q1.09 -.77 1.87 -1.87z
M244.89 249.65q.77 1.09 1.86 1.86q-1.09 .77 -1.86 1.86q-.77 -1.09 -1.86 -1.86q1.09 -.77 1.86 -1.86z
M251.41 -4.63q.77 1.09 1.86 1.86q-1.09 .77 -1.86 1.86q-.77 -1.09 -1.86 -1.86q1.09 -.77 1.86 -1.86z
M251.41 1.89q.77 1.09 1.86 1.86q-1.09 .77 -1.86 1.86q-.77 -1.09 -1.86 -1.86q1.09 -.77 1.86 -1.86z
M251.41 8.41q.77 1.09 1.86 1.86q-1.09 .77 -1.86 1.86q-.77 -1.09 -1.86 -1.86q1.09 -.77 1.86 -1.86z
M251.41 14.93q.77 1.09 1.86 1.86q-1.09 .77 -1.86 1.86q-.77 -1.09 -1.86 -1.86q1.09 -.77 1.86 -1.86z
M251.41 21.45q.77 1.09 1.86 1.86q-1.09 .77 -1.86 1.86q-.77 -1.09 -1.86 -1.86q1.09 -.77 1.86 -1.86z
M251.41 27.96q.77 1.09 1.87 1.87q-1.09 .77 -1.87 1.87q-.77 -1.09 -1.87 -1.87q1.09 -.77 1.87 -1.87z
M251.41 34.48q.77 1.09 1.87 1.87q-1.09 .77 -1.87 1.87q-.77 -1.09 -1.87 -1.87q1.09 -.77 1.87 -1.87z
M251.41 41q.78 1.09 1.87 1.87q-1.09 .78 -1.87 1.87q-.78 -1.09 -1.87 -1.87q1.09 -.78 1.87 -1.87z
M251.41 47.52q.78 1.09 1.87 1.87q-1.09 .78 -1.87 1.87q-.78 -1.09 -1.87 -1.87q1.09 -.78 1.87 -1.87z
M251.41 54.04q.78 1.09 1.87 1.87q-1.09 .78 -1.87 1.87q-.78 -1.09 -1.87 -1.87q1.09 -.78 1.87 -1.87z
M251.41 60.56q.78 1.09 1.87 1.87q-1.09 .78 -1.87 1.87q-.78 -1.09 -1.87 -1.87q1.09 -.78 1.87 -1.87z
M251.41 67.08q.78 1.09 1.87 1.87q-1.09 .78 -1.87 1.87q-.78 -1.09 -1.87 -1.87q1.09 -.78 1.87 -1.87z
M251.41 73.6q.78 1.09 1.87 1.87q-1.09 .78 -1.87 1.87q-.78 -1.09 -1.87 -1.87q1.09 -.78 1.87 -1.87z
M251.41 80.12q.78 1.09 1.87 1.87q-1.09 .78 -1.87 1.87q-.78 -1.09 -1.87 -1.87q1.09 -.78 1.87 -1.87z
M251.41 86.64q.78 1.09 1.87 1.87q-1.09 .78 -1.87 1.87q-.78 -1.09 -1.87 -1.87q1.09 -.78 1.87 -1.87z
M251.41 93.16q.78 1.09 1.87 1.87q-1.09 .78 -1.87 1.87q-.78 -1.09 -1.87 -1.87q1.09 -.78 1.87 -1.87z
M251.41 99.68q.78 1.09 1.87 1.87q-1.09 .78 -1.87 1.87q-.78 -1.09 -1.87 -1.87q1.09 -.78 1.87 -1.87z
M251.41 106.2q.78 1.09 1.87 1.87q-1.09 .78 -1.87 1.87q-.78 -1.09 -1.87 -1.87q1.09 -.78 1.87 -1.87z
M251.41 112.72q.78 1.09 1.87 1.87q-1.09 .78 -1.87 1.87q-.78 -1.09 -1.87 -1.87q1.09 -.78 1.87 -1.87z
M251.41 119.24q.78 1.09 1.87 1.87q-1.09 .78 -1.87 1.87q-.78 -1.09 -1.87 -1.87q1.09 -.78 1.87 -1.87z
M251.41 125.76q.78 1.09 1.87 1.87q-1.09 .78 -1.87 1.87q-.78 -1.09 -1.87 -1.87q1.09 -.78 1.87 -1.87z
M251.41 132.28q.78 1.09 1.87 1.87q-1.09 .78 -1.87 1.87q-.78 -1.09 -1.87 -1.87q1.09 -.78 1.87 -1.87z
M251.41 138.8q.78 1.09 1.87 1.87q-1.09 .78 -1.87 1.87q-.78 -1.09 -1.87 -1.87q1.09 -.78 1.87 -1.87z
M251.41 145.32q.78 1.09 1.87 1.87q-1.09 .78 -1.87 1.87q-.78 -1.09 -1.87 -1.87q1.09 -.78 1.87 -1.87z
M251.41 151.84q.78 1.09 1.87 1.87q-1.09 .78 -1.87 1.87q-.78 -1.09 -1.87 -1.87q1.09 -.78 1.87 -1.87z
M251.41 158.36q.78 1.09 1.87 1.87q-1.09 .78 -1.87 1.87q-.78 -1.09 -1.87 -1.87q1.09 -.78 1.87 -1.87z
M251.41 164.88q.78 1.09 1.87 1.87q-1.09 .78 -1.87 1.87q-.78 -1.09 -1.87 -1.87q1.09 -.78 1.87 -1.87z
M251.41 171.4q.78 1.09 1.87 1.87q-1.09 .78 -1.87 1.87q-.78 -1.09 -1.87 -1.87q1.09 -.78 1.87 -1.87z
M251.41 177.92q.78 1.09 1.87 1.87q-1.09 .78 -1.87 1.87q-.78 -1.09 -1.87 -1.87q1.09 -.78 1.87 -1.87z
M251.41 184.44q.78 1.09 1.87 1.87q-1.09 .78 -1.87 1.87q-.78 -1.09 -1.87 -1.87q1.09 -.78 1.87 -1.87z
M251.41 190.96q.78 1.09 1.87 1.87q-1.09 .78 -1.87 1.87q-.78 -1.09 -1.87 -1.87q1.09 -.78 1.87 -1.87z
M251.41 197.48q.78 1.09 1.87 1.87q-1.09 .78 -1.87 1.87q-.78 -1.09 -1.87 -1.87q1.09 -.78 1.87 -1.87z
M251.41 204q.78 1.09 1.87 1.87q-1.09 .78 -1.87 1.87q-.78 -1.09 -1.87 -1.87q1.09 -.78 1.87 -1.87z
M251.41 210.52q.78 1.09 1.87 1.87q-1.09 .78 -1.87 1.87q-.78 -1.09 -1.87 -1.87q1.09 -.78 1.87 -1.87z
M251.41 217.04q.78 1.09 1.87 1.87q-1.09 .78 -1.87 1.87q-.78 -1.09 -1.87 -1.87q1.09 -.78 1.87 -1.87z
M251.41 223.56q.78 1.09 1.87 1.87q-1.09 .78 -1.87 1.87q-.78 -1.09 -1.87 -1.87q1.09 -.78 1.87 -1.87z
M251.41 230.08q.78 1.09 1.87 1.87q-1.09 .78 -1.87 1.87q-.78 -1.09 -1.87 -1.87q1.09 -.78 1.87 -1.87z
M251.41 236.6q.77 1.09 1.87 1.87q-1.09 .77 -1.87 1.87q-.77 -1.09 -1.87 -1.87q1.09 -.77 1.87 -1.87z
M251.41 243.13q.77 1.09 1.86 1.86q-1.09 .77 -1.86 1.86q-.77 -1.09 -1.86 -1.86q1.09 -.77 1.86 -1.86z
M251.41 249.65q.77 1.09 1.86 1.86q-1.09 .77 -1.86 1.86q-.77 -1.09 -1.86 -1.86q1.09 -.77 1.86 -1.86z"/>
</svg></div>
<div class="ht" style="left:394.5px;top:250px;width:249.2px;height:248.8px"><svg width="249.2" height="248.8" viewBox="0 0 249.2 248.8" fill="#000">
<circle cx="-4.2" cy="234.8" r="4.7"/>
<circle cx="-2.2" cy="241" r="4.7"/>
<circle cx="-.2" cy="247.2" r="4.7"/>
<circle cx="1.8" cy="253.4" r="4.7"/>
<circle cx="-4.1" cy="214.2" r="4.7"/>
<circle cx="-2" cy="220.4" r="4.7"/>
<circle cx="0" cy="226.6" r="4.7"/>
<circle cx="2" cy="232.8" r="4.7"/>
<circle cx="4" cy="239" r="4.7"/>
<circle cx="6" cy="245.2" r="4.7"/>
<circle cx="8" cy="251.4" r="4.7"/>
<circle cx="-3.9" cy="193.6" r="4.7"/>
<circle cx="-1.9" cy="199.8" r="4.7"/>
<circle cx=".1" cy="206" r="4.7"/>
<circle cx="2.1" cy="212.2" r="4.7"/>
<circle cx="4.2" cy="218.4" r="4.7"/>
<circle cx="6.2" cy="224.6" r="4.7"/>
<circle cx="8.2" cy="230.8" r="4.7"/>
<circle cx="10.2" cy="237" r="4.7"/>
<circle cx="12.2" cy="243.2" r="4.7"/>
<circle cx="14.2" cy="249.4" r="4.7"/>
<circle cx="-3.7" cy="173" r="4.7"/>
<circle cx="-1.7" cy="179.2" r="4.7"/>
<circle cx=".3" cy="185.4" r="4.7"/>
<circle cx="2.3" cy="191.6" r="4.7"/>
<circle cx="4.3" cy="197.8" r="4.7"/>
<circle cx="6.3" cy="204" r="4.7"/>
<circle cx="8.3" cy="210.2" r="4.7"/>
<circle cx="10.4" cy="216.4" r="4.7"/>
<circle cx="12.4" cy="222.6" r="4.7"/>
<circle cx="14.4" cy="228.8" r="4.7"/>
<circle cx="16.4" cy="235" r="4.7"/>
<circle cx="18.4" cy="241.2" r="4.7"/>
<circle cx="20.4" cy="247.4" r="4.7"/>
<circle cx="22.4" cy="253.6" r="4.7"/>
<circle cx="-3.6" cy="152.3" r="4.7"/>
<circle cx="-1.6" cy="158.5" r="4.7"/>
<circle cx=".4" cy="164.7" r="4.7"/>
<circle cx="2.5" cy="170.9" r="4.7"/>
<circle cx="4.5" cy="177.1" r="4.7"/>
<circle cx="6.5" cy="183.3" r="4.7"/>
<circle cx="8.5" cy="189.6" r="4.7"/>
<circle cx="10.5" cy="195.8" r="4.7"/>
<circle cx="12.5" cy="202" r="4.7"/>
<circle cx="14.5" cy="208.2" r="4.7"/>
<circle cx="16.6" cy="214.4" r="4.7"/>
<circle cx="18.6" cy="220.6" r="4.7"/>
<circle cx="20.6" cy="226.8" r="4.7"/>
<circle cx="22.6" cy="233" r="4.7"/>
<circle cx="24.6" cy="239.2" r="4.7"/>
<circle cx="26.6" cy="245.4" r="4.7"/>
<circle cx="28.6" cy="251.6" r="4.7"/>
<circle cx="-3.4" cy="131.7" r="4.7"/>
<circle cx="-1.4" cy="137.9" r="4.7"/>
<circle cx=".6" cy="144.1" r="4.7"/>
<circle cx="2.6" cy="150.3" r="4.7"/>
<circle cx="4.6" cy="156.5" r="4.7"/>
<circle cx="6.6" cy="162.7" r="4.7"/>
<circle cx="8.7" cy="168.9" r="4.7"/>
<circle cx="10.7" cy="175.1" r="4.7"/>
<circle cx="12.7" cy="181.3" r="4.7"/>
<circle cx="14.7" cy="187.5" r="4.7"/>
<circle cx="16.7" cy="193.7" r="4.7"/>
<circle cx="18.7" cy="199.9" r="4.7"/>
<circle cx="20.7" cy="206.1" r="4.7"/>
<circle cx="22.8" cy="212.3" r="4.7"/>
<circle cx="24.8" cy="218.5" r="4.7"/>
<circle cx="26.8" cy="224.7" r="4.7"/>
<circle cx="28.8" cy="230.9" r="4.7"/>
<circle cx="30.8" cy="237.1" r="4.7"/>
<circle cx="32.8" cy="243.3" r="4.7"/>
<circle cx="34.8" cy="249.5" r="4.7"/>
<circle cx="-3.3" cy="111.1" r="4.7"/>
<circle cx="-1.3" cy="117.3" r="4.7"/>
<circle cx=".8" cy="123.5" r="4.7"/>
<circle cx="2.8" cy="129.7" r="4.7"/>
<circle cx="4.8" cy="135.9" r="4.7"/>
<circle cx="6.8" cy="142.1" r="4.7"/>
<circle cx="8.8" cy="148.3" r="4.7"/>
<circle cx="10.8" cy="154.5" r="4.7"/>
<circle cx="12.8" cy="160.7" r="4.7"/>
<circle cx="14.9" cy="166.9" r="4.7"/>
<circle cx="16.9" cy="173.1" r="4.7"/>
<circle cx="18.9" cy="179.3" r="4.7"/>
<circle cx="20.9" cy="185.5" r="4.7"/>
<circle cx="22.9" cy="191.7" r="4.7"/>
<circle cx="24.9" cy="197.9" r="4.7"/>
<circle cx="26.9" cy="204.1" r="4.7"/>
<circle cx="29" cy="210.3" r="4.7"/>
<circle cx="31" cy="216.5" r="4.7"/>
<circle cx="33" cy="222.7" r="4.7"/>
<circle cx="35" cy="228.9" r="4.7"/>
<circle cx="37" cy="235.1" r="4.7"/>
<circle cx="39" cy="241.3" r="4.7"/>
<circle cx="41" cy="247.5" r="4.7"/>
<circle cx="43.1" cy="253.7" r="4.7"/>
<circle cx="-3.1" cy="90.5" r="4.7"/>
<circle cx="-1.1" cy="96.7" r="4.7"/>
<circle cx=".9" cy="102.9" r="4.7"/>
<circle cx="2.9" cy="109.1" r="4.7"/>
<circle cx="4.9" cy="115.3" r="4.7"/>
<circle cx="7" cy="121.5" r="4.7"/>
<circle cx="9" cy="127.7" r="4.7"/>
<circle cx="11" cy="133.9" r="4.7"/>
<circle cx="13" cy="140.1" r="4.7"/>
<circle cx="15" cy="146.3" r="4.7"/>
<circle cx="17" cy="152.5" r="4.7"/>
<circle cx="19" cy="158.7" r="4.7"/>
<circle cx="21.1" cy="164.9" r="4.7"/>
<circle cx="23.1" cy="171.1" r="4.7"/>
<circle cx="25.1" cy="177.3" r="4.7"/>
<circle cx="27.1" cy="183.5" r="4.7"/>
<circle cx="29.1" cy="189.7" r="4.7"/>
<circle cx="31.1" cy="195.9" r="4.7"/>
<circle cx="33.1" cy="202.1" r="4.7"/>
<circle cx="35.2" cy="208.3" r="4.7"/>
<circle cx="37.2" cy="214.5" r="4.7"/>
<circle cx="39.2" cy="220.7" r="4.7"/>
<circle cx="41.2" cy="226.9" r="4.7"/>
<circle cx="43.2" cy="233.1" r="4.7"/>
<circle cx="45.2" cy="239.3" r="4.7"/>
<circle cx="47.2" cy="245.5" r="4.7"/>
<circle cx="49.3" cy="251.7" r="4.7"/>
<circle cx="-5" cy="63.7" r="4.7"/>
<circle cx="-3" cy="69.9" r="4.7"/>
<circle cx="-.9" cy="76.1" r="4.7"/>
<circle cx="1.1" cy="82.3" r="4.7"/>
<circle cx="3.1" cy="88.5" r="4.7"/>
<circle cx="5.1" cy="94.7" r="4.7"/>
<circle cx="7.1" cy="100.9" r="4.7"/>
<circle cx="9.1" cy="107.1" r="4.7"/>
<circle cx="11.1" cy="113.3" r="4.7"/>
<circle cx="13.2" cy="119.5" r="4.7"/>
<circle cx="15.2" cy="125.7" r="4.7"/>
<circle cx="17.2" cy="131.9" r="4.7"/>
<circle cx="19.2" cy="138.1" r="4.7"/>
<circle cx="21.2" cy="144.3" r="4.7"/>
<circle cx="23.2" cy="150.5" r="4.7"/>
<circle cx="25.2" cy="156.7" r="4.7"/>
<circle cx="27.3" cy="162.9" r="4.7"/>
<circle cx="29.3" cy="169.1" r="4.7"/>
<circle cx="31.3" cy="175.3" r="4.7"/>
<circle cx="33.3" cy="181.5" r="4.7"/>
<circle cx="35.3" cy="187.7" r="4.7"/>
<circle cx="37.3" cy="193.9" r="4.7"/>
<circle cx="39.3" cy="200.1" r="4.7"/>
<circle cx="41.4" cy="206.3" r="4.7"/>
<circle cx="43.4" cy="212.5" r="4.7"/>
<circle cx="45.4" cy="218.7" r="4.7"/>
<circle cx="47.4" cy="224.9" r="4.7"/>
<circle cx="49.4" cy="231.1" r="4.7"/>
<circle cx="51.4" cy="237.3" r="4.7"/>
<circle cx="53.5" cy="243.5" r="4.7"/>
<circle cx="55.5" cy="249.7" r="4.7"/>
<circle cx="-4.8" cy="43.1" r="4.7"/>
<circle cx="-2.8" cy="49.3" r="4.7"/>
<circle cx="-.8" cy="55.5" r="4.7"/>
<circle cx="1.2" cy="61.7" r="4.7"/>
<circle cx="3.2" cy="67.9" r="4.7"/>
<circle cx="5.3" cy="74.1" r="4.7"/>
<circle cx="7.3" cy="80.3" r="4.7"/>
<circle cx="9.3" cy="86.5" r="4.7"/>
<circle cx="11.3" cy="92.7" r="4.7"/>
<circle cx="13.3" cy="98.9" r="4.7"/>
<circle cx="15.3" cy="105.1" r="4.7"/>
<circle cx="17.3" cy="111.3" r="4.7"/>
<circle cx="19.4" cy="117.5" r="4.7"/>
<circle cx="21.4" cy="123.7" r="4.7"/>
<circle cx="23.4" cy="129.9" r="4.7"/>
<circle cx="25.4" cy="136.1" r="4.7"/>
<circle cx="27.4" cy="142.3" r="4.68"/>
<circle cx="29.4" cy="148.5" r="4.36"/>
<circle cx="31.4" cy="154.7" r="4.15"/>
<circle cx="33.5" cy="160.9" r="4.05"/>
<circle cx="35.5" cy="167.1" r="4.06"/>
<circle cx="37.5" cy="173.3" r="4.17"/>
<circle cx="39.5" cy="179.5" r="4.39"/>
<circle cx="41.5" cy="185.7" r="4.7"/>
<circle cx="43.5" cy="191.9" r="4.7"/>
<circle cx="45.5" cy="198.1" r="4.7"/>
<circle cx="47.6" cy="204.3" r="4.7"/>
<circle cx="49.6" cy="210.5" r="4.7"/>
<circle cx="51.6" cy="216.7" r="4.7"/>
<circle cx="53.6" cy="222.9" r="4.7"/>
<circle cx="55.6" cy="229.1" r="4.7"/>
<circle cx="57.6" cy="235.3" r="4.7"/>
<circle cx="59.7" cy="241.5" r="4.7"/>
<circle cx="61.7" cy="247.7" r="4.7"/>
<circle cx="-4.7" cy="22.4" r="4.7"/>
<circle cx="-2.7" cy="28.6" r="4.7"/>
<circle cx="-.6" cy="34.8" r="4.7"/>
<circle cx="1.4" cy="41" r="4.7"/>
<circle cx="3.4" cy="47.2" r="4.7"/>
<circle cx="5.4" cy="53.4" r="4.7"/>
<circle cx="7.4" cy="59.6" r="4.7"/>
<circle cx="9.4" cy="65.8" r="4.7"/>
<circle cx="11.5" cy="72" r="4.7"/>
<circle cx="13.5" cy="78.2" r="4.7"/>
<circle cx="15.5" cy="84.4" r="4.7"/>
<circle cx="17.5" cy="90.6" r="4.7"/>
<circle cx="19.5" cy="96.8" r="4.7"/>
<circle cx="21.5" cy="103.1" r="4.7"/>
<circle cx="23.5" cy="109.3" r="4.7"/>
<circle cx="25.6" cy="115.5" r="4.7"/>
<circle cx="27.6" cy="121.7" r="4.7"/>
<circle cx="29.6" cy="127.9" r="4.14"/>
<circle cx="31.6" cy="134.1" r="3.6"/>
<circle cx="33.6" cy="140.3" r="3.39"/>
<circle cx="35.6" cy="146.5" r="3.29"/>
<circle cx="37.6" cy="152.7" r="3.22"/>
<circle cx="39.7" cy="158.9" r="3.19"/>
<circle cx="41.7" cy="165.1" r="3.19"/>
<circle cx="43.7" cy="171.3" r="3.22"/>
<circle cx="45.7" cy="177.5" r="3.3"/>
<circle cx="47.7" cy="183.7" r="3.41"/>
<circle cx="49.7" cy="189.9" r="3.65"/>
<circle cx="51.7" cy="196.1" r="4.2"/>
<circle cx="53.8" cy="202.3" r="4.7"/>
<circle cx="55.8" cy="208.5" r="4.7"/>
<circle cx="57.8" cy="214.7" r="4.7"/>
<circle cx="59.8" cy="220.9" r="4.7"/>
<circle cx="61.8" cy="227.1" r="4.7"/>
<circle cx="63.8" cy="233.3" r="4.7"/>
<circle cx="65.9" cy="239.5" r="4.7"/>
<circle cx="67.9" cy="245.7" r="4.7"/>
<circle cx="69.9" cy="251.9" r="4.7"/>
<circle cx="-4.5" cy="1.8" r="4.7"/>
<circle cx="-2.5" cy="8" r="4.7"/>
<circle cx="-.5" cy="14.2" r="4.7"/>
<circle cx="1.5" cy="20.4" r="4.7"/>
<circle cx="3.6" cy="26.6" r="4.7"/>
<circle cx="5.6" cy="32.8" r="4.7"/>
<circle cx="7.6" cy="39" r="4.7"/>
<circle cx="9.6" cy="45.2" r="4.7"/>
<circle cx="11.6" cy="51.4" r="4.7"/>
<circle cx="13.6" cy="57.6" r="4.7"/>
<circle cx="15.6" cy="63.8" r="4.7"/>
<circle cx="17.7" cy="70" r="4.7"/>
<circle cx="19.7" cy="76.2" r="4.7"/>
<circle cx="21.7" cy="82.4" r="4.7"/>
<circle cx="23.7" cy="88.6" r="4.7"/>
<circle cx="25.7" cy="94.8" r="4.7"/>
<circle cx="27.7" cy="101" r="4.7"/>
<circle cx="29.7" cy="107.2" r="4.7"/>
<circle cx="31.8" cy="113.4" r="4.13"/>
<circle cx="33.8" cy="119.6" r="3.46"/>
<circle cx="35.8" cy="125.8" r="3.25"/>
<circle cx="37.8" cy="132" r="3.14"/>
<circle cx="39.8" cy="138.2" r="3.08"/>
<circle cx="41.8" cy="144.4" r="3.03"/>
<circle cx="43.8" cy="150.6" r="2.99"/>
<circle cx="45.9" cy="156.8" r="2.98"/>
<circle cx="47.9" cy="163" r="2.99"/>
<circle cx="49.9" cy="169.2" r="3"/>
<circle cx="51.9" cy="175.4" r="3.03"/>
<circle cx="53.9" cy="181.6" r="3.08"/>
<circle cx="55.9" cy="187.8" r="3.15"/>
<circle cx="57.9" cy="194" r="3.27"/>
<circle cx="60" cy="200.3" r="3.48"/>
<circle cx="62" cy="206.5" r="4.22"/>
<circle cx="64" cy="212.7" r="4.7"/>
<circle cx="66" cy="218.9" r="4.7"/>
<circle cx="68" cy="225.1" r="4.7"/>
<circle cx="70" cy="231.3" r="4.7"/>
<circle cx="72.1" cy="237.5" r="4.7"/>
<circle cx="74.1" cy="243.7" r="4.7"/>
<circle cx="76.1" cy="249.9" r="4.7"/>
<circle cx="1.7" cy="-.2" r="4.7"/>
<circle cx="3.7" cy="6" r="4.7"/>
<circle cx="5.7" cy="12.2" r="4.7"/>
<circle cx="7.7" cy="18.4" r="4.7"/>
<circle cx="9.8" cy="24.6" r="4.7"/>
<circle cx="11.8" cy="30.8" r="4.7"/>
<circle cx="13.8" cy="37" r="4.7"/>
<circle cx="15.8" cy="43.2" r="4.7"/>
<circle cx="17.8" cy="49.4" r="4.7"/>
<circle cx="19.8" cy="55.6" r="4.7"/>
<circle cx="21.8" cy="61.8" r="4.7"/>
<circle cx="23.9" cy="68" r="4.7"/>
<circle cx="25.9" cy="74.2" r="4.7"/>
<circle cx="27.9" cy="80.4" r="4.7"/>
<circle cx="29.9" cy="86.6" r="4.7"/>
<circle cx="31.9" cy="92.8" r="4.7"/>
<circle cx="33.9" cy="99" r="4.65"/>
<circle cx="35.9" cy="105.2" r="3.69"/>
<circle cx="38" cy="111.4" r="3.28"/>
<circle cx="40" cy="117.6" r="3.12"/>
<circle cx="42" cy="123.8" r="3.02"/>
<circle cx="44" cy="130" r="2.96"/>
<circle cx="46" cy="136.2" r="2.91"/>
<circle cx="48" cy="142.4" r="2.88"/>
<circle cx="50" cy="148.6" r="2.86"/>
<circle cx="52.1" cy="154.8" r="2.85"/>
<circle cx="54.1" cy="161" r="2.85"/>
<circle cx="56.1" cy="167.2" r="2.86"/>
<circle cx="58.1" cy="173.4" r="2.88"/>
<circle cx="60.1" cy="179.6" r="2.92"/>
<circle cx="62.1" cy="185.8" r="2.97"/>
<circle cx="64.2" cy="192" r="3.03"/>
<circle cx="66.2" cy="198.2" r="3.14"/>
<circle cx="68.2" cy="204.4" r="3.31"/>
<circle cx="70.2" cy="210.6" r="3.8"/>
<circle cx="72.2" cy="216.8" r="4.7"/>
<circle cx="74.2" cy="223" r="4.7"/>
<circle cx="76.2" cy="229.2" r="4.7"/>
<circle cx="78.3" cy="235.4" r="4.7"/>
<circle cx="80.3" cy="241.6" r="4.7"/>
<circle cx="82.3" cy="247.8" r="4.7"/>
<circle cx="7.9" cy="-2.2" r="4.7"/>
<circle cx="9.9" cy="4" r="4.7"/>
<circle cx="11.9" cy="10.2" r="4.7"/>
<circle cx="13.9" cy="16.4" r="4.7"/>
<circle cx="16" cy="22.6" r="4.7"/>
<circle cx="18" cy="28.8" r="4.7"/>
<circle cx="20" cy="35" r="4.7"/>
<circle cx="22" cy="41.2" r="4.7"/>
<circle cx="24" cy="47.4" r="4.7"/>
<circle cx="26" cy="53.6" r="4.7"/>
<circle cx="28" cy="59.8" r="4.7"/>
<circle cx="30.1" cy="66" r="4.7"/>
<circle cx="32.1" cy="72.2" r="4.7"/>
<circle cx="34.1" cy="78.4" r="4.7"/>
<circle cx="36.1" cy="84.6" r="4.7"/>
<circle cx="38.1" cy="90.8" r="4.55"/>
<circle cx="40.1" cy="97" r="3.49"/>
<circle cx="42.1" cy="103.2" r="3.19"/>
<circle cx="44.2" cy="109.4" r="3.06"/>
<circle cx="46.2" cy="115.6" r="2.96"/>
<circle cx="48.2" cy="121.8" r="2.89"/>
<circle cx="50.2" cy="128" r="2.83"/>
<circle cx="52.2" cy="134.2" r="2.79"/>
<circle cx="54.2" cy="140.4" r="2.76"/>
<circle cx="56.2" cy="146.6" r="2.74"/>
<circle cx="58.3" cy="152.8" r="2.72"/>
<circle cx="60.3" cy="159" r="2.73"/>
<circle cx="62.3" cy="165.2" r="2.74"/>
<circle cx="64.3" cy="171.4" r="2.76"/>
<circle cx="66.3" cy="177.6" r="2.79"/>
<circle cx="68.3" cy="183.8" r="2.84"/>
<circle cx="70.4" cy="190" r="2.9"/>
<circle cx="72.4" cy="196.2" r="2.97"/>
<circle cx="74.4" cy="202.4" r="3.07"/>
<circle cx="76.4" cy="208.6" r="3.21"/>
<circle cx="78.4" cy="214.8" r="3.59"/>
<circle cx="80.4" cy="221" r="4.67"/>
<circle cx="82.4" cy="227.2" r="4.7"/>
<circle cx="84.5" cy="233.4" r="4.7"/>
<circle cx="86.5" cy="239.6" r="4.7"/>
<circle cx="88.5" cy="245.8" r="4.7"/>
<circle cx="90.5" cy="252" r="4.7"/>
<circle cx="14.1" cy="-4.2" r="4.7"/>
<circle cx="16.1" cy="2" r="4.7"/>
<circle cx="18.1" cy="8.2" r="4.7"/>
<circle cx="20.1" cy="14.4" r="4.7"/>
<circle cx="22.2" cy="20.6" r="4.7"/>
<circle cx="24.2" cy="26.8" r="4.7"/>
<circle cx="26.2" cy="33" r="4.7"/>
<circle cx="28.2" cy="39.2" r="4.7"/>
<circle cx="30.2" cy="45.4" r="4.7"/>
<circle cx="32.2" cy="51.6" r="4.7"/>
<circle cx="34.2" cy="57.8" r="4.7"/>
<circle cx="36.3" cy="64" r="4.7"/>
<circle cx="38.3" cy="70.2" r="4.7"/>
<circle cx="40.3" cy="76.4" r="4.7"/>
<circle cx="42.3" cy="82.6" r="4.65"/>
<circle cx="44.3" cy="88.8" r="3.49"/>
<circle cx="46.3" cy="95" r="3.17"/>
<circle cx="48.3" cy="101.2" r="3.02"/>
<circle cx="50.4" cy="107.4" r="2.92"/>
<circle cx="52.4" cy="113.6" r="2.84"/>
<circle cx="54.4" cy="119.8" r="2.78"/>
<circle cx="56.4" cy="126" r="2.72"/>
<circle cx="58.4" cy="132.2" r="2.68"/>
<circle cx="60.4" cy="138.4" r="2.65"/>
<circle cx="62.4" cy="144.6" r="2.63"/>
<circle cx="64.5" cy="150.8" r="2.62"/>
<circle cx="66.5" cy="157" r="2.62"/>
<circle cx="68.5" cy="163.2" r="2.63"/>
<circle cx="70.5" cy="169.4" r="2.65"/>
<circle cx="72.5" cy="175.6" r="2.68"/>
<circle cx="74.5" cy="181.8" r="2.73"/>
<circle cx="76.6" cy="188" r="2.79"/>
<circle cx="78.6" cy="194.2" r="2.85"/>
<circle cx="80.6" cy="200.4" r="2.93"/>
<circle cx="82.6" cy="206.6" r="3.04"/>
<circle cx="84.6" cy="212.8" r="3.19"/>
<circle cx="86.6" cy="219" r="3.6"/>
<circle cx="88.6" cy="225.2" r="4.7"/>
<circle cx="90.7" cy="231.4" r="4.7"/>
<circle cx="92.7" cy="237.6" r="4.7"/>
<circle cx="94.7" cy="243.8" r="4.7"/>
<circle cx="96.7" cy="250" r="4.7"/>
<circle cx="22.3" cy="0" r="4.7"/>
<circle cx="24.3" cy="6.2" r="4.7"/>
<circle cx="26.3" cy="12.4" r="4.7"/>
<circle cx="28.4" cy="18.6" r="4.7"/>
<circle cx="30.4" cy="24.8" r="4.7"/>
<circle cx="32.4" cy="31" r="4.7"/>
<circle cx="34.4" cy="37.2" r="4.7"/>
<circle cx="36.4" cy="43.4" r="4.7"/>
<circle cx="38.4" cy="49.6" r="4.7"/>
<circle cx="40.4" cy="55.8" r="4.7"/>
<circle cx="42.5" cy="62" r="4.7"/>
<circle cx="44.5" cy="68.2" r="4.7"/>
<circle cx="46.5" cy="74.4" r="4.7"/>
<circle cx="48.5" cy="80.6" r="3.69"/>
<circle cx="50.5" cy="86.8" r="3.19"/>
<circle cx="52.5" cy="93" r="3.02"/>
<circle cx="54.5" cy="99.2" r="2.91"/>
<circle cx="56.6" cy="105.4" r="2.82"/>
<circle cx="58.6" cy="111.6" r="2.74"/>
<circle cx="60.6" cy="117.8" r="2.68"/>
<circle cx="62.6" cy="124" r="2.62"/>
<circle cx="64.6" cy="130.2" r="2.58"/>
<circle cx="66.6" cy="136.4" r="2.54"/>
<circle cx="68.6" cy="142.6" r="2.52"/>
<circle cx="70.7" cy="148.8" r="2.5"/>
<circle cx="72.7" cy="155" r="2.5"/>
<circle cx="74.7" cy="161.2" r="2.52"/>
<circle cx="76.7" cy="167.4" r="2.54"/>
<circle cx="78.7" cy="173.6" r="2.58"/>
<circle cx="80.7" cy="179.8" r="2.63"/>
<circle cx="82.8" cy="186" r="2.69"/>
<circle cx="84.8" cy="192.2" r="2.75"/>
<circle cx="86.8" cy="198.4" r="2.83"/>
<circle cx="88.8" cy="204.6" r="2.92"/>
<circle cx="90.8" cy="210.8" r="3.04"/>
<circle cx="92.8" cy="217" r="3.21"/>
<circle cx="94.8" cy="223.2" r="3.83"/>
<circle cx="96.9" cy="229.4" r="4.7"/>
<circle cx="98.9" cy="235.6" r="4.7"/>
<circle cx="100.9" cy="241.8" r="4.7"/>
<circle cx="102.9" cy="248" r="4.7"/>
<circle cx="28.5" cy="-2.1" r="4.7"/>
<circle cx="30.5" cy="4.1" r="4.7"/>
<circle cx="32.5" cy="10.4" r="4.7"/>
<circle cx="34.6" cy="16.6" r="4.7"/>
<circle cx="36.6" cy="22.8" r="4.7"/>
<circle cx="38.6" cy="29" r="4.7"/>
<circle cx="40.6" cy="35.2" r="4.7"/>
<circle cx="42.6" cy="41.4" r="4.7"/>
<circle cx="44.6" cy="47.6" r="4.7"/>
<circle cx="46.6" cy="53.8" r="4.7"/>
<circle cx="48.7" cy="60" r="4.7"/>
<circle cx="50.7" cy="66.2" r="4.7"/>
<circle cx="52.7" cy="72.4" r="4.12"/>
<circle cx="54.7" cy="78.6" r="3.28"/>
<circle cx="56.7" cy="84.8" r="3.06"/>
<circle cx="58.7" cy="91" r="2.92"/>
<circle cx="60.7" cy="97.2" r="2.82"/>
<circle cx="62.8" cy="103.4" r="2.73"/>
<circle cx="64.8" cy="109.6" r="2.66"/>
<circle cx="66.8" cy="115.8" r="2.59"/>
<circle cx="68.8" cy="122" r="2.53"/>
<circle cx="70.8" cy="128.2" r="2.45"/>
<circle cx="72.8" cy="134.4" r="2.38"/>
<circle cx="74.9" cy="140.6" r="2.33"/>
<circle cx="76.9" cy="146.8" r="2.3"/>
<circle cx="78.9" cy="153" r="2.3"/>
<circle cx="80.9" cy="159.2" r="2.33"/>
<circle cx="82.9" cy="165.4" r="2.39"/>
<circle cx="84.9" cy="171.6" r="2.46"/>
<circle cx="86.9" cy="177.8" r="2.53"/>
<circle cx="89" cy="184" r="2.6"/>
<circle cx="91" cy="190.2" r="2.67"/>
<circle cx="93" cy="196.4" r="2.74"/>
<circle cx="95" cy="202.6" r="2.83"/>
<circle cx="97" cy="208.8" r="2.94"/>
<circle cx="99" cy="215" r="3.08"/>
<circle cx="101" cy="221.2" r="3.33"/>
<circle cx="103.1" cy="227.4" r="4.27"/>
<circle cx="105.1" cy="233.6" r="4.7"/>
<circle cx="107.1" cy="239.8" r="4.7"/>
<circle cx="109.1" cy="246" r="4.7"/>
<circle cx="111.1" cy="252.2" r="4.7"/>
<circle cx="34.7" cy="-4.1" r="4.7"/>
<circle cx="36.7" cy="2.1" r="4.7"/>
<circle cx="38.7" cy="8.3" r="4.7"/>
<circle cx="40.8" cy="14.5" r="4.7"/>
<circle cx="42.8" cy="20.7" r="4.7"/>
<circle cx="44.8" cy="26.9" r="4.7"/>
<circle cx="46.8" cy="33.1" r="4.7"/>
<circle cx="48.8" cy="39.3" r="4.7"/>
<circle cx="50.8" cy="45.5" r="4.7"/>
<circle cx="52.8" cy="51.7" r="4.7"/>
<circle cx="54.9" cy="57.9" r="4.7"/>
<circle cx="56.9" cy="64.1" r="4.7"/>
<circle cx="58.9" cy="70.3" r="3.46"/>
<circle cx="60.9" cy="76.5" r="3.12"/>
<circle cx="62.9" cy="82.7" r="2.96"/>
<circle cx="64.9" cy="88.9" r="2.84"/>
<circle cx="66.9" cy="95.1" r="2.74"/>
<circle cx="69" cy="101.3" r="2.66"/>
<circle cx="71" cy="107.5" r="2.58"/>
<circle cx="73" cy="113.8" r="2.5"/>
<circle cx="75" cy="120" r="2.38"/>
<circle cx="77" cy="126.2" r="2.27"/>
<circle cx="79" cy="132.4" r="2.19"/>
<circle cx="81.1" cy="138.6" r="2.14"/>
<circle cx="83.1" cy="144.8" r="2.11"/>
<circle cx="85.1" cy="151" r="2.11"/>
<circle cx="87.1" cy="157.2" r="2.14"/>
<circle cx="89.1" cy="163.4" r="2.2"/>
<circle cx="91.1" cy="169.6" r="2.28"/>
<circle cx="93.1" cy="175.8" r="2.39"/>
<circle cx="95.2" cy="182" r="2.51"/>
<circle cx="97.2" cy="188.2" r="2.59"/>
<circle cx="99.2" cy="194.4" r="2.67"/>
<circle cx="101.2" cy="200.6" r="2.76"/>
<circle cx="103.2" cy="206.8" r="2.85"/>
<circle cx="105.2" cy="213" r="2.97"/>
<circle cx="107.2" cy="219.2" r="3.14"/>
<circle cx="109.3" cy="225.4" r="3.51"/>
<circle cx="111.3" cy="231.6" r="4.7"/>
<circle cx="113.3" cy="237.8" r="4.7"/>
<circle cx="115.3" cy="244" r="4.7"/>
<circle cx="117.3" cy="250.2" r="4.7"/>
<circle cx="42.9" cy=".1" r="4.7"/>
<circle cx="44.9" cy="6.3" r="4.7"/>
<circle cx="47" cy="12.5" r="4.7"/>
<circle cx="49" cy="18.7" r="4.7"/>
<circle cx="51" cy="24.9" r="4.7"/>
<circle cx="53" cy="31.1" r="4.7"/>
<circle cx="55" cy="37.3" r="4.7"/>
<circle cx="57" cy="43.5" r="4.7"/>
<circle cx="59" cy="49.7" r="4.7"/>
<circle cx="61.1" cy="55.9" r="4.7"/>
<circle cx="63.1" cy="62.1" r="4.12"/>
<circle cx="65.1" cy="68.3" r="3.24"/>
<circle cx="67.1" cy="74.5" r="3.02"/>
<circle cx="69.1" cy="80.7" r="2.89"/>
<circle cx="71.1" cy="86.9" r="2.78"/>
<circle cx="73.1" cy="93.1" r="2.68"/>
<circle cx="75.2" cy="99.3" r="2.59"/>
<circle cx="77.2" cy="105.5" r="2.5"/>
<circle cx="79.2" cy="111.7" r="2.35"/>
<circle cx="81.2" cy="117.9" r="2.22"/>
<circle cx="83.2" cy="124.1" r="2.11"/>
<circle cx="85.2" cy="130.3" r="2.01"/>
<circle cx="87.3" cy="136.5" r="1.93"/>
<circle cx="89.3" cy="142.7" r="1.88"/>
<circle cx="91.3" cy="148.9" r="1.89"/>
<circle cx="93.3" cy="155.1" r="1.93"/>
<circle cx="95.3" cy="161.3" r="2.02"/>
<circle cx="97.3" cy="167.5" r="2.12"/>
<circle cx="99.3" cy="173.7" r="2.23"/>
<circle cx="101.4" cy="179.9" r="2.37"/>
<circle cx="103.4" cy="186.1" r="2.51"/>
<circle cx="105.4" cy="192.3" r="2.6"/>
<circle cx="107.4" cy="198.5" r="2.69"/>
<circle cx="109.4" cy="204.7" r="2.79"/>
<circle cx="111.4" cy="211" r="2.9"/>
<circle cx="113.4" cy="217.2" r="3.04"/>
<circle cx="115.5" cy="223.4" r="3.29"/>
<circle cx="117.5" cy="229.6" r="4.29"/>
<circle cx="119.5" cy="235.8" r="4.7"/>
<circle cx="121.5" cy="242" r="4.7"/>
<circle cx="123.5" cy="248.2" r="4.7"/>
<circle cx="49.1" cy="-1.9" r="4.7"/>
<circle cx="51.1" cy="4.3" r="4.7"/>
<circle cx="53.2" cy="10.5" r="4.7"/>
<circle cx="55.2" cy="16.7" r="4.7"/>
<circle cx="57.2" cy="22.9" r="4.7"/>
<circle cx="59.2" cy="29.1" r="4.7"/>
<circle cx="61.2" cy="35.3" r="4.7"/>
<circle cx="63.2" cy="41.5" r="4.7"/>
<circle cx="65.2" cy="47.7" r="4.7"/>
<circle cx="67.3" cy="53.9" r="4.7"/>
<circle cx="69.3" cy="60.1" r="3.58"/>
<circle cx="71.3" cy="66.3" r="3.14"/>
<circle cx="73.3" cy="72.5" r="2.96"/>
<circle cx="75.3" cy="78.7" r="2.83"/>
<circle cx="77.3" cy="84.9" r="2.72"/>
<circle cx="79.3" cy="91.1" r="2.62"/>
<circle cx="81.4" cy="97.3" r="2.53"/>
<circle cx="83.4" cy="103.5" r="2.38"/>
<circle cx="85.4" cy="109.7" r="2.22"/>
<circle cx="87.4" cy="115.9" r="2.08"/>
<circle cx="89.4" cy="122.1" r="1.92"/>
<circle cx="91.4" cy="128.3" r="1.79"/>
<circle cx="93.5" cy="134.5" r="1.69"/>
<circle cx="95.5" cy="140.7" r="1.63"/>
<circle cx="97.5" cy="146.9" r="1.64"/>
<circle cx="99.5" cy="153.1" r="1.7"/>
<circle cx="101.5" cy="159.3" r="1.8"/>
<circle cx="103.5" cy="165.5" r="1.94"/>
<circle cx="105.5" cy="171.7" r="2.09"/>
<circle cx="107.6" cy="177.9" r="2.23"/>
<circle cx="109.6" cy="184.1" r="2.4"/>
<circle cx="111.6" cy="190.3" r="2.54"/>
<circle cx="113.6" cy="196.5" r="2.63"/>
<circle cx="115.6" cy="202.7" r="2.73"/>
<circle cx="117.6" cy="208.9" r="2.84"/>
<circle cx="119.6" cy="215.1" r="2.97"/>
<circle cx="121.7" cy="221.3" r="3.16"/>
<circle cx="123.7" cy="227.5" r="3.75"/>
<circle cx="125.7" cy="233.7" r="4.7"/>
<circle cx="127.7" cy="239.9" r="4.7"/>
<circle cx="129.7" cy="246.1" r="4.7"/>
<circle cx="131.7" cy="252.3" r="4.7"/>
<circle cx="55.3" cy="-3.9" r="4.7"/>
<circle cx="57.3" cy="2.3" r="4.7"/>
<circle cx="59.4" cy="8.5" r="4.7"/>
<circle cx="61.4" cy="14.7" r="4.7"/>
<circle cx="63.4" cy="20.9" r="4.7"/>
<circle cx="65.4" cy="27.1" r="4.7"/>
<circle cx="67.4" cy="33.3" r="4.7"/>
<circle cx="69.4" cy="39.5" r="4.7"/>
<circle cx="71.4" cy="45.7" r="4.7"/>
<circle cx="73.5" cy="51.9" r="4.66"/>
<circle cx="75.5" cy="58.1" r="3.39"/>
<circle cx="77.5" cy="64.3" r="3.07"/>
<circle cx="79.5" cy="70.5" r="2.91"/>
<circle cx="81.5" cy="76.7" r="2.79"/>
<circle cx="83.5" cy="82.9" r="2.68"/>
<circle cx="85.6" cy="89.1" r="2.58"/>
<circle cx="87.6" cy="95.3" r="2.45"/>
<circle cx="89.6" cy="101.5" r="2.27"/>
<circle cx="91.6" cy="107.7" r="2.11"/>
<circle cx="93.6" cy="113.9" r="1.92"/>
<circle cx="95.6" cy="120.1" r="1.74"/>
<circle cx="97.6" cy="126.3" r="1.57"/>
<circle cx="99.7" cy="132.5" r="1.44"/>
<circle cx="101.7" cy="138.7" r="1.37"/>
<circle cx="103.7" cy="144.9" r="1.38"/>
<circle cx="105.7" cy="151.1" r="1.45"/>
<circle cx="107.7" cy="157.3" r="1.59"/>
<circle cx="109.7" cy="163.5" r="1.76"/>
<circle cx="111.7" cy="169.7" r="1.95"/>
<circle cx="113.8" cy="175.9" r="2.13"/>
<circle cx="115.8" cy="182.1" r="2.29"/>
<circle cx="117.8" cy="188.3" r="2.47"/>
<circle cx="119.8" cy="194.5" r="2.59"/>
<circle cx="121.8" cy="200.7" r="2.69"/>
<circle cx="123.8" cy="206.9" r="2.8"/>
<circle cx="125.8" cy="213.1" r="2.93"/>
<circle cx="127.9" cy="219.3" r="3.1"/>
<circle cx="129.9" cy="225.5" r="3.44"/>
<circle cx="131.9" cy="231.7" r="4.7"/>
<circle cx="133.9" cy="237.9" r="4.7"/>
<circle cx="135.9" cy="244.1" r="4.7"/>
<circle cx="137.9" cy="250.3" r="4.7"/>
<circle cx="63.5" cy=".3" r="4.7"/>
<circle cx="65.6" cy="6.5" r="4.7"/>
<circle cx="67.6" cy="12.7" r="4.7"/>
<circle cx="69.6" cy="18.9" r="4.7"/>
<circle cx="71.6" cy="25.1" r="4.7"/>
<circle cx="73.6" cy="31.3" r="4.7"/>
<circle cx="75.6" cy="37.5" r="4.7"/>
<circle cx="77.6" cy="43.7" r="4.7"/>
<circle cx="79.7" cy="49.9" r="4.35"/>
<circle cx="81.7" cy="56.1" r="3.28"/>
<circle cx="83.7" cy="62.3" r="3.02"/>
<circle cx="85.7" cy="68.5" r="2.88"/>
<circle cx="87.7" cy="74.7" r="2.76"/>
<circle cx="89.7" cy="80.9" r="2.65"/>
<circle cx="91.8" cy="87.1" r="2.54"/>
<circle cx="93.8" cy="93.3" r="2.38"/>
<circle cx="95.8" cy="99.5" r="2.19"/>
<circle cx="97.8" cy="105.7" r="2.01"/>
<circle cx="99.8" cy="111.9" r="1.78"/>
<circle cx="101.8" cy="118.1" r="1.57"/>
<circle cx="103.8" cy="124.3" r="1.37"/>
<circle cx="105.9" cy="130.5" r="1.18"/>
<circle cx="107.9" cy="136.7" r="1.06"/>
<circle cx="109.9" cy="142.9" r="1.07"/>
<circle cx="111.9" cy="149.1" r="1.2"/>
<circle cx="113.9" cy="155.3" r="1.39"/>
<circle cx="115.9" cy="161.5" r="1.6"/>
<circle cx="117.9" cy="167.7" r="1.81"/>
<circle cx="120" cy="173.9" r="2.03"/>
<circle cx="122" cy="180.1" r="2.21"/>
<circle cx="124" cy="186.3" r="2.4"/>
<circle cx="126" cy="192.5" r="2.55"/>
<circle cx="128" cy="198.7" r="2.66"/>
<circle cx="130" cy="204.9" r="2.77"/>
<circle cx="132" cy="211.1" r="2.89"/>
<circle cx="134.1" cy="217.3" r="3.05"/>
<circle cx="136.1" cy="223.5" r="3.34"/>
<circle cx="138.1" cy="229.7" r="4.52"/>
<circle cx="140.1" cy="235.9" r="4.7"/>
<circle cx="142.1" cy="242.1" r="4.7"/>
<circle cx="144.1" cy="248.3" r="4.7"/>
<circle cx="69.7" cy="-1.7" r="4.7"/>
<circle cx="71.8" cy="4.5" r="4.7"/>
<circle cx="73.8" cy="10.7" r="4.7"/>
<circle cx="75.8" cy="16.9" r="4.7"/>
<circle cx="77.8" cy="23.1" r="4.7"/>
<circle cx="79.8" cy="29.3" r="4.7"/>
<circle cx="81.8" cy="35.5" r="4.7"/>
<circle cx="83.8" cy="41.7" r="4.7"/>
<circle cx="85.9" cy="47.9" r="4.14"/>
<circle cx="87.9" cy="54.1" r="3.21"/>
<circle cx="89.9" cy="60.3" r="2.99"/>
<circle cx="91.9" cy="66.5" r="2.85"/>
<circle cx="93.9" cy="72.7" r="2.73"/>
<circle cx="95.9" cy="78.9" r="2.63"/>
<circle cx="98" cy="85.1" r="2.51"/>
<circle cx="100" cy="91.3" r="2.33"/>
<circle cx="102" cy="97.5" r="2.14"/>
<circle cx="104" cy="103.7" r="1.92"/>
<circle cx="106" cy="109.9" r="1.68"/>
<circle cx="108" cy="116.1" r="1.44"/>
<circle cx="110" cy="122.3" r="1.18"/>
<circle cx="112.1" cy="128.5" r=".92"/>
<circle cx="114.1" cy="134.7" r=".76"/>
<circle cx="116.1" cy="140.9" r=".77"/>
<circle cx="118.1" cy="147.1" r=".95"/>
<circle cx="120.1" cy="153.3" r="1.21"/>
<circle cx="122.1" cy="159.5" r="1.47"/>
<circle cx="124.1" cy="165.7" r="1.71"/>
<circle cx="126.2" cy="171.9" r="1.95"/>
<circle cx="128.2" cy="178.1" r="2.16"/>
<circle cx="130.2" cy="184.3" r="2.35"/>
<circle cx="132.2" cy="190.5" r="2.53"/>
<circle cx="134.2" cy="196.7" r="2.64"/>
<circle cx="136.2" cy="202.9" r="2.75"/>
<circle cx="138.2" cy="209.1" r="2.87"/>
<circle cx="140.3" cy="215.3" r="3.01"/>
<circle cx="142.3" cy="221.5" r="3.27"/>
<circle cx="144.3" cy="227.7" r="4.31"/>
<circle cx="146.3" cy="233.9" r="4.7"/>
<circle cx="148.3" cy="240.1" r="4.7"/>
<circle cx="150.3" cy="246.3" r="4.7"/>
<circle cx="152.4" cy="252.5" r="4.7"/>
<circle cx="75.9" cy="-3.8" r="4.7"/>
<circle cx="78" cy="2.4" r="4.7"/>
<circle cx="80" cy="8.6" r="4.7"/>
<circle cx="82" cy="14.8" r="4.7"/>
<circle cx="84" cy="21.1" r="4.7"/>
<circle cx="86" cy="27.3" r="4.7"/>
<circle cx="88" cy="33.5" r="4.7"/>
<circle cx="90" cy="39.7" r="4.7"/>
<circle cx="92.1" cy="45.9" r="4.03"/>
<circle cx="94.1" cy="52.1" r="3.19"/>
<circle cx="96.1" cy="58.3" r="2.98"/>
<circle cx="98.1" cy="64.5" r="2.84"/>
<circle cx="100.1" cy="70.7" r="2.72"/>
<circle cx="102.1" cy="76.9" r="2.61"/>
<circle cx="104.2" cy="83.1" r="2.5"/>
<circle cx="106.2" cy="89.3" r="2.3"/>
<circle cx="108.2" cy="95.5" r="2.11"/>
<circle cx="110.2" cy="101.7" r="1.88"/>
<circle cx="112.2" cy="107.9" r="1.63"/>
<circle cx="114.2" cy="114.1" r="1.37"/>
<circle cx="116.2" cy="120.3" r="1.06"/>
<circle cx="118.3" cy="126.5" r=".76"/>
<circle cx="120.3" cy="132.7" r=".49"/>
<circle cx="122.3" cy="138.9" r=".52"/>
<circle cx="124.3" cy="145.1" r=".79"/>
<circle cx="126.3" cy="151.3" r="1.1"/>
<circle cx="128.3" cy="157.5" r="1.4"/>
<circle cx="130.3" cy="163.7" r="1.66"/>
<circle cx="132.4" cy="169.9" r="1.91"/>
<circle cx="134.4" cy="176.1" r="2.13"/>
<circle cx="136.4" cy="182.3" r="2.32"/>
<circle cx="138.4" cy="188.5" r="2.51"/>
<circle cx="140.4" cy="194.7" r="2.63"/>
<circle cx="142.4" cy="200.9" r="2.74"/>
<circle cx="144.4" cy="207.1" r="2.86"/>
<circle cx="146.5" cy="213.3" r="3"/>
<circle cx="148.5" cy="219.5" r="3.23"/>
<circle cx="150.5" cy="225.7" r="4.21"/>
<circle cx="152.5" cy="231.9" r="4.7"/>
<circle cx="154.5" cy="238.1" r="4.7"/>
<circle cx="156.5" cy="244.3" r="4.7"/>
<circle cx="158.6" cy="250.5" r="4.7"/>
<circle cx="84.2" cy=".4" r="4.7"/>
<circle cx="86.2" cy="6.6" r="4.7"/>
<circle cx="88.2" cy="12.8" r="4.7"/>
<circle cx="90.2" cy="19" r="4.7"/>
<circle cx="92.2" cy="25.2" r="4.7"/>
<circle cx="94.2" cy="31.4" r="4.7"/>
<circle cx="96.3" cy="37.6" r="4.7"/>
<circle cx="98.3" cy="43.8" r="4.04"/>
<circle cx="100.3" cy="50" r="3.19"/>
<circle cx="102.3" cy="56.2" r="2.98"/>
<circle cx="104.3" cy="62.4" r="2.84"/>
<circle cx="106.3" cy="68.6" r="2.72"/>
<circle cx="108.3" cy="74.8" r="2.61"/>
<circle cx="110.4" cy="81" r="2.5"/>
<circle cx="112.4" cy="87.2" r="2.3"/>
<circle cx="114.4" cy="93.4" r="2.11"/>
<circle cx="116.4" cy="99.6" r="1.88"/>
<circle cx="118.4" cy="105.8" r="1.63"/>
<circle cx="120.4" cy="112" r="1.37"/>
<circle cx="122.4" cy="118.2" r="1.07"/>
<circle cx="124.5" cy="124.5" r=".77"/>
<circle cx="126.5" cy="130.7" r=".51"/>
<circle cx="128.5" cy="136.9" r=".54"/>
<circle cx="130.5" cy="143.1" r=".8"/>
<circle cx="132.5" cy="149.3" r="1.1"/>
<circle cx="134.5" cy="155.5" r="1.4"/>
<circle cx="136.5" cy="161.7" r="1.66"/>
<circle cx="138.6" cy="167.9" r="1.91"/>
<circle cx="140.6" cy="174.1" r="2.13"/>
<circle cx="142.6" cy="180.3" r="2.32"/>
<circle cx="144.6" cy="186.5" r="2.52"/>
<circle cx="146.6" cy="192.7" r="2.63"/>
<circle cx="148.6" cy="198.9" r="2.74"/>
<circle cx="150.7" cy="205.1" r="2.86"/>
<circle cx="152.7" cy="211.3" r="3"/>
<circle cx="154.7" cy="217.5" r="3.23"/>
<circle cx="156.7" cy="223.7" r="4.21"/>
<circle cx="158.7" cy="229.9" r="4.7"/>
<circle cx="160.7" cy="236.1" r="4.7"/>
<circle cx="162.7" cy="242.3" r="4.7"/>
<circle cx="164.8" cy="248.5" r="4.7"/>
<circle cx="90.4" cy="-1.6" r="4.7"/>
<circle cx="92.4" cy="4.6" r="4.7"/>
<circle cx="94.4" cy="10.8" r="4.7"/>
<circle cx="96.4" cy="17" r="4.7"/>
<circle cx="98.4" cy="23.2" r="4.7"/>
<circle cx="100.4" cy="29.4" r="4.7"/>
<circle cx="102.5" cy="35.6" r="4.7"/>
<circle cx="104.5" cy="41.8" r="4.15"/>
<circle cx="106.5" cy="48" r="3.22"/>
<circle cx="108.5" cy="54.2" r="2.99"/>
<circle cx="110.5" cy="60.4" r="2.86"/>
<circle cx="112.5" cy="66.6" r="2.74"/>
<circle cx="114.5" cy="72.8" r="2.63"/>
<circle cx="116.6" cy="79" r="2.52"/>
<circle cx="118.6" cy="85.2" r="2.33"/>
<circle cx="120.6" cy="91.4" r="2.14"/>
<circle cx="122.6" cy="97.6" r="1.93"/>
<circle cx="124.6" cy="103.8" r="1.69"/>
<circle cx="126.6" cy="110" r="1.45"/>
<circle cx="128.6" cy="116.2" r="1.19"/>
<circle cx="130.7" cy="122.4" r=".94"/>
<circle cx="132.7" cy="128.6" r=".79"/>
<circle cx="134.7" cy="134.8" r=".8"/>
<circle cx="136.7" cy="141" r=".96"/>
<circle cx="138.7" cy="147.2" r="1.22"/>
<circle cx="140.7" cy="153.4" r="1.48"/>
<circle cx="142.7" cy="159.6" r="1.72"/>
<circle cx="144.8" cy="165.8" r="1.96"/>
<circle cx="146.8" cy="172" r="2.16"/>
<circle cx="148.8" cy="178.2" r="2.35"/>
<circle cx="150.8" cy="184.4" r="2.53"/>
<circle cx="152.8" cy="190.6" r="2.64"/>
<circle cx="154.8" cy="196.8" r="2.75"/>
<circle cx="156.9" cy="203" r="2.87"/>
<circle cx="158.9" cy="209.2" r="3.02"/>
<circle cx="160.9" cy="215.4" r="3.27"/>
<circle cx="162.9" cy="221.7" r="4.32"/>
<circle cx="164.9" cy="227.9" r="4.7"/>
<circle cx="166.9" cy="234.1" r="4.7"/>
<circle cx="168.9" cy="240.3" r="4.7"/>
<circle cx="171" cy="246.5" r="4.7"/>
<circle cx="173" cy="252.7" r="4.7"/>
<circle cx="96.6" cy="-3.6" r="4.7"/>
<circle cx="98.6" cy="2.6" r="4.7"/>
<circle cx="100.6" cy="8.8" r="4.7"/>
<circle cx="102.6" cy="15" r="4.7"/>
<circle cx="104.6" cy="21.2" r="4.7"/>
<circle cx="106.6" cy="27.4" r="4.7"/>
<circle cx="108.7" cy="33.6" r="4.7"/>
<circle cx="110.7" cy="39.8" r="4.37"/>
<circle cx="112.7" cy="46" r="3.29"/>
<circle cx="114.7" cy="52.2" r="3.03"/>
<circle cx="116.7" cy="58.4" r="2.88"/>
<circle cx="118.7" cy="64.6" r="2.76"/>
<circle cx="120.7" cy="70.8" r="2.65"/>
<circle cx="122.8" cy="77" r="2.54"/>
<circle cx="124.8" cy="83.2" r="2.38"/>
<circle cx="126.8" cy="89.4" r="2.2"/>
<circle cx="128.8" cy="95.6" r="2.02"/>
<circle cx="130.8" cy="101.8" r="1.8"/>
<circle cx="132.8" cy="108" r="1.59"/>
<circle cx="134.8" cy="114.2" r="1.38"/>
<circle cx="136.9" cy="120.4" r="1.2"/>
<circle cx="138.9" cy="126.6" r="1.09"/>
<circle cx="140.9" cy="132.8" r="1.1"/>
<circle cx="142.9" cy="139" r="1.22"/>
<circle cx="144.9" cy="145.2" r="1.4"/>
<circle cx="146.9" cy="151.4" r="1.61"/>
<circle cx="148.9" cy="157.6" r="1.82"/>
<circle cx="151" cy="163.8" r="2.04"/>
<circle cx="153" cy="170" r="2.22"/>
<circle cx="155" cy="176.2" r="2.41"/>
<circle cx="157" cy="182.4" r="2.55"/>
<circle cx="159" cy="188.6" r="2.66"/>
<circle cx="161" cy="194.8" r="2.77"/>
<circle cx="163.1" cy="201" r="2.9"/>
<circle cx="165.1" cy="207.2" r="3.05"/>
<circle cx="167.1" cy="213.4" r="3.34"/>
<circle cx="169.1" cy="219.6" r="4.54"/>
<circle cx="171.1" cy="225.8" r="4.7"/>
<circle cx="173.1" cy="232" r="4.7"/>
<circle cx="175.1" cy="238.2" r="4.7"/>
<circle cx="177.2" cy="244.4" r="4.7"/>
<circle cx="179.2" cy="250.6" r="4.7"/>
<circle cx="104.8" cy=".6" r="4.7"/>
<circle cx="106.8" cy="6.8" r="4.7"/>
<circle cx="108.8" cy="13" r="4.7"/>
<circle cx="110.8" cy="19.2" r="4.7"/>
<circle cx="112.8" cy="25.4" r="4.7"/>
<circle cx="114.9" cy="31.6" r="4.7"/>
<circle cx="116.9" cy="37.8" r="4.69"/>
<circle cx="118.9" cy="44" r="3.4"/>
<circle cx="120.9" cy="50.2" r="3.08"/>
<circle cx="122.9" cy="56.4" r="2.92"/>
<circle cx="124.9" cy="62.6" r="2.79"/>
<circle cx="126.9" cy="68.8" r="2.68"/>
<circle cx="129" cy="75" r="2.58"/>
<circle cx="131" cy="81.2" r="2.46"/>
<circle cx="133" cy="87.4" r="2.28"/>
<circle cx="135" cy="93.6" r="2.12"/>
<circle cx="137" cy="99.8" r="1.94"/>
<circle cx="139" cy="106" r="1.75"/>
<circle cx="141" cy="112.2" r="1.59"/>
<circle cx="143.1" cy="118.4" r="1.46"/>
<circle cx="145.1" cy="124.6" r="1.4"/>
<circle cx="147.1" cy="130.8" r="1.4"/>
<circle cx="149.1" cy="137" r="1.48"/>
<circle cx="151.1" cy="143.2" r="1.61"/>
<circle cx="153.1" cy="149.4" r="1.77"/>
<circle cx="155.1" cy="155.6" r="1.96"/>
<circle cx="157.2" cy="161.8" r="2.13"/>
<circle cx="159.2" cy="168" r="2.3"/>
<circle cx="161.2" cy="174.2" r="2.48"/>
<circle cx="163.2" cy="180.4" r="2.59"/>
<circle cx="165.2" cy="186.6" r="2.69"/>
<circle cx="167.2" cy="192.8" r="2.81"/>
<circle cx="169.3" cy="199" r="2.93"/>
<circle cx="171.3" cy="205.2" r="3.1"/>
<circle cx="173.3" cy="211.4" r="3.45"/>
<circle cx="175.3" cy="217.6" r="4.7"/>
<circle cx="177.3" cy="223.8" r="4.7"/>
<circle cx="179.3" cy="230" r="4.7"/>
<circle cx="181.3" cy="236.2" r="4.7"/>
<circle cx="183.4" cy="242.4" r="4.7"/>
<circle cx="185.4" cy="248.6" r="4.7"/>
<circle cx="111" cy="-1.4" r="4.7"/>
<circle cx="113" cy="4.8" r="4.7"/>
<circle cx="115" cy="11" r="4.7"/>
<circle cx="117" cy="17.2" r="4.7"/>
<circle cx="119" cy="23.4" r="4.7"/>
<circle cx="121.1" cy="29.6" r="4.7"/>
<circle cx="123.1" cy="35.8" r="4.7"/>
<circle cx="125.1" cy="42" r="3.63"/>
<circle cx="127.1" cy="48.2" r="3.15"/>
<circle cx="129.1" cy="54.4" r="2.96"/>
<circle cx="131.1" cy="60.6" r="2.84"/>
<circle cx="133.1" cy="66.8" r="2.73"/>
<circle cx="135.2" cy="73" r="2.63"/>
<circle cx="137.2" cy="79.2" r="2.53"/>
<circle cx="139.2" cy="85.4" r="2.39"/>
<circle cx="141.2" cy="91.6" r="2.23"/>
<circle cx="143.2" cy="97.8" r="2.09"/>
<circle cx="145.2" cy="104" r="1.94"/>
<circle cx="147.2" cy="110.2" r="1.81"/>
<circle cx="149.3" cy="116.4" r="1.71"/>
<circle cx="151.3" cy="122.6" r="1.66"/>
<circle cx="153.3" cy="128.8" r="1.66"/>
<circle cx="155.3" cy="135" r="1.72"/>
<circle cx="157.3" cy="141.2" r="1.82"/>
<circle cx="159.3" cy="147.4" r="1.96"/>
<circle cx="161.4" cy="153.6" r="2.11"/>
<circle cx="163.4" cy="159.8" r="2.24"/>
<circle cx="165.4" cy="166" r="2.41"/>
<circle cx="167.4" cy="172.2" r="2.54"/>
<circle cx="169.4" cy="178.4" r="2.64"/>
<circle cx="171.4" cy="184.6" r="2.74"/>
<circle cx="173.4" cy="190.8" r="2.85"/>
<circle cx="175.5" cy="197" r="2.98"/>
<circle cx="177.5" cy="203.2" r="3.17"/>
<circle cx="179.5" cy="209.4" r="3.79"/>
<circle cx="181.5" cy="215.6" r="4.7"/>
<circle cx="183.5" cy="221.8" r="4.7"/>
<circle cx="185.5" cy="228" r="4.7"/>
<circle cx="187.5" cy="234.2" r="4.7"/>
<circle cx="189.6" cy="240.4" r="4.7"/>
<circle cx="191.6" cy="246.6" r="4.7"/>
<circle cx="193.6" cy="252.8" r="4.7"/>
<circle cx="117.2" cy="-3.4" r="4.7"/>
<circle cx="119.2" cy="2.8" r="4.7"/>
<circle cx="121.2" cy="9" r="4.7"/>
<circle cx="123.2" cy="15.2" r="4.7"/>
<circle cx="125.2" cy="21.4" r="4.7"/>
<circle cx="127.3" cy="27.6" r="4.7"/>
<circle cx="129.3" cy="33.8" r="4.7"/>
<circle cx="131.3" cy="40" r="4.18"/>
<circle cx="133.3" cy="46.2" r="3.26"/>
<circle cx="135.3" cy="52.4" r="3.03"/>
<circle cx="137.3" cy="58.6" r="2.89"/>
<circle cx="139.3" cy="64.8" r="2.78"/>
<circle cx="141.4" cy="71" r="2.68"/>
<circle cx="143.4" cy="77.2" r="2.59"/>
<circle cx="145.4" cy="83.4" r="2.51"/>
<circle cx="147.4" cy="89.6" r="2.36"/>
<circle cx="149.4" cy="95.8" r="2.23"/>
<circle cx="151.4" cy="102" r="2.12"/>
<circle cx="153.4" cy="108.2" r="2.03"/>
<circle cx="155.5" cy="114.4" r="1.95"/>
<circle cx="157.5" cy="120.6" r="1.91"/>
<circle cx="159.5" cy="126.8" r="1.91"/>
<circle cx="161.5" cy="133" r="1.96"/>
<circle cx="163.5" cy="139.2" r="2.04"/>
<circle cx="165.5" cy="145.4" r="2.13"/>
<circle cx="167.6" cy="151.6" r="2.24"/>
<circle cx="169.6" cy="157.8" r="2.38"/>
<circle cx="171.6" cy="164" r="2.52"/>
<circle cx="173.6" cy="170.2" r="2.6"/>
<circle cx="175.6" cy="176.4" r="2.69"/>
<circle cx="177.6" cy="182.6" r="2.79"/>
<circle cx="179.6" cy="188.8" r="2.91"/>
<circle cx="181.7" cy="195" r="3.05"/>
<circle cx="183.7" cy="201.2" r="3.31"/>
<circle cx="185.7" cy="207.4" r="4.34"/>
<circle cx="187.7" cy="213.6" r="4.7"/>
<circle cx="189.7" cy="219.8" r="4.7"/>
<circle cx="191.7" cy="226" r="4.7"/>
<circle cx="193.7" cy="232.2" r="4.7"/>
<circle cx="195.8" cy="238.4" r="4.7"/>
<circle cx="197.8" cy="244.6" r="4.7"/>
<circle cx="199.8" cy="250.8" r="4.7"/>
<circle cx="125.4" cy=".7" r="4.7"/>
<circle cx="127.4" cy="6.9" r="4.7"/>
<circle cx="129.4" cy="13.1" r="4.7"/>
<circle cx="131.4" cy="19.3" r="4.7"/>
<circle cx="133.5" cy="25.5" r="4.7"/>
<circle cx="135.5" cy="31.8" r="4.7"/>
<circle cx="137.5" cy="38" r="4.7"/>
<circle cx="139.5" cy="44.2" r="3.48"/>
<circle cx="141.5" cy="50.4" r="3.13"/>
<circle cx="143.5" cy="56.6" r="2.96"/>
<circle cx="145.5" cy="62.8" r="2.85"/>
<circle cx="147.6" cy="69" r="2.75"/>
<circle cx="149.6" cy="75.2" r="2.66"/>
<circle cx="151.6" cy="81.4" r="2.58"/>
<circle cx="153.6" cy="87.6" r="2.51"/>
<circle cx="155.6" cy="93.8" r="2.39"/>
<circle cx="157.6" cy="100" r="2.29"/>
<circle cx="159.6" cy="106.2" r="2.21"/>
<circle cx="161.7" cy="112.4" r="2.16"/>
<circle cx="163.7" cy="118.6" r="2.13"/>
<circle cx="165.7" cy="124.8" r="2.13"/>
<circle cx="167.7" cy="131" r="2.16"/>
<circle cx="169.7" cy="137.2" r="2.22"/>
<circle cx="171.7" cy="143.4" r="2.3"/>
<circle cx="173.8" cy="149.6" r="2.41"/>
<circle cx="175.8" cy="155.8" r="2.52"/>
<circle cx="177.8" cy="162" r="2.59"/>
<circle cx="179.8" cy="168.2" r="2.67"/>
<circle cx="181.8" cy="174.4" r="2.76"/>
<circle cx="183.8" cy="180.6" r="2.86"/>
<circle cx="185.8" cy="186.8" r="2.98"/>
<circle cx="187.9" cy="193" r="3.15"/>
<circle cx="189.9" cy="199.2" r="3.58"/>
<circle cx="191.9" cy="205.4" r="4.7"/>
<circle cx="193.9" cy="211.6" r="4.7"/>
<circle cx="195.9" cy="217.8" r="4.7"/>
<circle cx="197.9" cy="224" r="4.7"/>
<circle cx="199.9" cy="230.2" r="4.7"/>
<circle cx="202" cy="236.4" r="4.7"/>
<circle cx="204" cy="242.6" r="4.7"/>
<circle cx="206" cy="248.8" r="4.7"/>
<circle cx="131.6" cy="-1.3" r="4.7"/>
<circle cx="133.6" cy="4.9" r="4.7"/>
<circle cx="135.6" cy="11.1" r="4.7"/>
<circle cx="137.6" cy="17.3" r="4.7"/>
<circle cx="139.7" cy="23.5" r="4.7"/>
<circle cx="141.7" cy="29.7" r="4.7"/>
<circle cx="143.7" cy="35.9" r="4.7"/>
<circle cx="145.7" cy="42.1" r="4.19"/>
<circle cx="147.7" cy="48.3" r="3.3"/>
<circle cx="149.7" cy="54.5" r="3.07"/>
<circle cx="151.7" cy="60.7" r="2.93"/>
<circle cx="153.8" cy="66.9" r="2.83"/>
<circle cx="155.8" cy="73.1" r="2.74"/>
<circle cx="157.8" cy="79.3" r="2.66"/>
<circle cx="159.8" cy="85.5" r="2.6"/>
<circle cx="161.8" cy="91.7" r="2.54"/>
<circle cx="163.8" cy="97.9" r="2.47"/>
<circle cx="165.8" cy="104.1" r="2.4"/>
<circle cx="167.9" cy="110.3" r="2.35"/>
<circle cx="169.9" cy="116.5" r="2.32"/>
<circle cx="171.9" cy="122.7" r="2.32"/>
<circle cx="173.9" cy="128.9" r="2.35"/>
<circle cx="175.9" cy="135.2" r="2.4"/>
<circle cx="177.9" cy="141.4" r="2.48"/>
<circle cx="180" cy="147.6" r="2.54"/>
<circle cx="182" cy="153.8" r="2.6"/>
<circle cx="184" cy="160" r="2.67"/>
<circle cx="186" cy="166.2" r="2.75"/>
<circle cx="188" cy="172.4" r="2.84"/>
<circle cx="190" cy="178.6" r="2.94"/>
<circle cx="192" cy="184.8" r="3.09"/>
<circle cx="194.1" cy="191" r="3.35"/>
<circle cx="196.1" cy="197.2" r="4.34"/>
<circle cx="198.1" cy="203.4" r="4.7"/>
<circle cx="200.1" cy="209.6" r="4.7"/>
<circle cx="202.1" cy="215.8" r="4.7"/>
<circle cx="204.1" cy="222" r="4.7"/>
<circle cx="206.1" cy="228.2" r="4.7"/>
<circle cx="208.2" cy="234.4" r="4.7"/>
<circle cx="210.2" cy="240.6" r="4.7"/>
<circle cx="212.2" cy="246.8" r="4.7"/>
<circle cx="214.2" cy="253" r="4.7"/>
<circle cx="137.8" cy="-3.3" r="4.7"/>
<circle cx="139.8" cy="2.9" r="4.7"/>
<circle cx="141.8" cy="9.1" r="4.7"/>
<circle cx="143.8" cy="15.3" r="4.7"/>
<circle cx="145.9" cy="21.5" r="4.7"/>
<circle cx="147.9" cy="27.7" r="4.7"/>
<circle cx="149.9" cy="33.9" r="4.7"/>
<circle cx="151.9" cy="40.1" r="4.7"/>
<circle cx="153.9" cy="46.3" r="3.77"/>
<circle cx="155.9" cy="52.5" r="3.2"/>
<circle cx="157.9" cy="58.7" r="3.03"/>
<circle cx="160" cy="64.9" r="2.92"/>
<circle cx="162" cy="71.1" r="2.83"/>
<circle cx="164" cy="77.3" r="2.75"/>
<circle cx="166" cy="83.5" r="2.69"/>
<circle cx="168" cy="89.7" r="2.63"/>
<circle cx="170" cy="95.9" r="2.59"/>
<circle cx="172.1" cy="102.1" r="2.55"/>
<circle cx="174.1" cy="108.3" r="2.53"/>
<circle cx="176.1" cy="114.5" r="2.51"/>
<circle cx="178.1" cy="120.7" r="2.51"/>
<circle cx="180.1" cy="126.9" r="2.53"/>
<circle cx="182.1" cy="133.1" r="2.55"/>
<circle cx="184.1" cy="139.3" r="2.59"/>
<circle cx="186.2" cy="145.5" r="2.64"/>
<circle cx="188.2" cy="151.7" r="2.69"/>
<circle cx="190.2" cy="157.9" r="2.76"/>
<circle cx="192.2" cy="164.1" r="2.84"/>
<circle cx="194.2" cy="170.3" r="2.93"/>
<circle cx="196.2" cy="176.5" r="3.05"/>
<circle cx="198.2" cy="182.7" r="3.24"/>
<circle cx="200.3" cy="188.9" r="3.91"/>
<circle cx="202.3" cy="195.1" r="4.7"/>
<circle cx="204.3" cy="201.3" r="4.7"/>
<circle cx="206.3" cy="207.5" r="4.7"/>
<circle cx="208.3" cy="213.7" r="4.7"/>
<circle cx="210.3" cy="219.9" r="4.7"/>
<circle cx="212.3" cy="226.1" r="4.7"/>
<circle cx="214.4" cy="232.4" r="4.7"/>
<circle cx="216.4" cy="238.6" r="4.7"/>
<circle cx="218.4" cy="244.8" r="4.7"/>
<circle cx="220.4" cy="251" r="4.7"/>
<circle cx="146" cy=".9" r="4.7"/>
<circle cx="148" cy="7.1" r="4.7"/>
<circle cx="150" cy="13.3" r="4.7"/>
<circle cx="152.1" cy="19.5" r="4.7"/>
<circle cx="154.1" cy="25.7" r="4.7"/>
<circle cx="156.1" cy="31.9" r="4.7"/>
<circle cx="158.1" cy="38.1" r="4.7"/>
<circle cx="160.1" cy="44.3" r="4.7"/>
<circle cx="162.1" cy="50.5" r="3.56"/>
<circle cx="164.1" cy="56.7" r="3.18"/>
<circle cx="166.2" cy="62.9" r="3.04"/>
<circle cx="168.2" cy="69.1" r="2.93"/>
<circle cx="170.2" cy="75.3" r="2.85"/>
<circle cx="172.2" cy="81.5" r="2.79"/>
<circle cx="174.2" cy="87.7" r="2.73"/>
<circle cx="176.2" cy="93.9" r="2.69"/>
<circle cx="178.3" cy="100.1" r="2.66"/>
<circle cx="180.3" cy="106.3" r="2.64"/>
<circle cx="182.3" cy="112.5" r="2.62"/>
<circle cx="184.3" cy="118.7" r="2.63"/>
<circle cx="186.3" cy="124.9" r="2.64"/>
<circle cx="188.3" cy="131.1" r="2.66"/>
<circle cx="190.3" cy="137.3" r="2.69"/>
<circle cx="192.4" cy="143.5" r="2.74"/>
<circle cx="194.4" cy="149.7" r="2.79"/>
<circle cx="196.4" cy="155.9" r="2.86"/>
<circle cx="198.4" cy="162.1" r="2.94"/>
<circle cx="200.4" cy="168.3" r="3.05"/>
<circle cx="202.4" cy="174.5" r="3.2"/>
<circle cx="204.4" cy="180.7" r="3.69"/>
<circle cx="206.5" cy="186.9" r="4.7"/>
<circle cx="208.5" cy="193.1" r="4.7"/>
<circle cx="210.5" cy="199.3" r="4.7"/>
<circle cx="212.5" cy="205.5" r="4.7"/>
<circle cx="214.5" cy="211.7" r="4.7"/>
<circle cx="216.5" cy="217.9" r="4.7"/>
<circle cx="218.5" cy="224.1" r="4.7"/>
<circle cx="220.6" cy="230.3" r="4.7"/>
<circle cx="222.6" cy="236.5" r="4.7"/>
<circle cx="224.6" cy="242.7" r="4.7"/>
<circle cx="226.6" cy="248.9" r="4.7"/>
<circle cx="152.2" cy="-1.1" r="4.7"/>
<circle cx="154.2" cy="5.1" r="4.7"/>
<circle cx="156.2" cy="11.3" r="4.7"/>
<circle cx="158.3" cy="17.5" r="4.7"/>
<circle cx="160.3" cy="23.7" r="4.7"/>
<circle cx="162.3" cy="29.9" r="4.7"/>
<circle cx="164.3" cy="36.1" r="4.7"/>
<circle cx="166.3" cy="42.3" r="4.7"/>
<circle cx="168.3" cy="48.5" r="4.64"/>
<circle cx="170.3" cy="54.7" r="3.57"/>
<circle cx="172.4" cy="60.9" r="3.21"/>
<circle cx="174.4" cy="67.1" r="3.07"/>
<circle cx="176.4" cy="73.3" r="2.97"/>
<circle cx="178.4" cy="79.5" r="2.9"/>
<circle cx="180.4" cy="85.7" r="2.84"/>
<circle cx="182.4" cy="91.9" r="2.8"/>
<circle cx="184.5" cy="98.1" r="2.77"/>
<circle cx="186.5" cy="104.3" r="2.75"/>
<circle cx="188.5" cy="110.5" r="2.73"/>
<circle cx="190.5" cy="116.7" r="2.74"/>
<circle cx="192.5" cy="122.9" r="2.75"/>
<circle cx="194.5" cy="129.1" r="2.77"/>
<circle cx="196.5" cy="135.3" r="2.8"/>
<circle cx="198.6" cy="141.5" r="2.85"/>
<circle cx="200.6" cy="147.7" r="2.91"/>
<circle cx="202.6" cy="153.9" r="2.98"/>
<circle cx="204.6" cy="160.1" r="3.09"/>
<circle cx="206.6" cy="166.3" r="3.24"/>
<circle cx="208.6" cy="172.5" r="3.69"/>
<circle cx="210.6" cy="178.7" r="4.7"/>
<circle cx="212.7" cy="184.9" r="4.7"/>
<circle cx="214.7" cy="191.1" r="4.7"/>
<circle cx="216.7" cy="197.3" r="4.7"/>
<circle cx="218.7" cy="203.5" r="4.7"/>
<circle cx="220.7" cy="209.7" r="4.7"/>
<circle cx="222.7" cy="215.9" r="4.7"/>
<circle cx="224.7" cy="222.1" r="4.7"/>
<circle cx="226.8" cy="228.3" r="4.7"/>
<circle cx="228.8" cy="234.5" r="4.7"/>
<circle cx="230.8" cy="240.7" r="4.7"/>
<circle cx="232.8" cy="246.9" r="4.7"/>
<circle cx="234.8" cy="253.1" r="4.7"/>
<circle cx="158.4" cy="-3.1" r="4.7"/>
<circle cx="160.4" cy="3.1" r="4.7"/>
<circle cx="162.4" cy="9.3" r="4.7"/>
<circle cx="164.5" cy="15.5" r="4.7"/>
<circle cx="166.5" cy="21.7" r="4.7"/>
<circle cx="168.5" cy="27.9" r="4.7"/>
<circle cx="170.5" cy="34.1" r="4.7"/>
<circle cx="172.5" cy="40.3" r="4.7"/>
<circle cx="174.5" cy="46.5" r="4.7"/>
<circle cx="176.5" cy="52.7" r="4.7"/>
<circle cx="178.6" cy="58.9" r="3.8"/>
<circle cx="180.6" cy="65.1" r="3.32"/>
<circle cx="182.6" cy="71.3" r="3.14"/>
<circle cx="184.6" cy="77.5" r="3.04"/>
<circle cx="186.6" cy="83.7" r="2.97"/>
<circle cx="188.6" cy="89.9" r="2.93"/>
<circle cx="190.7" cy="96.1" r="2.89"/>
<circle cx="192.7" cy="102.3" r="2.87"/>
<circle cx="194.7" cy="108.5" r="2.86"/>
<circle cx="196.7" cy="114.7" r="2.86"/>
<circle cx="198.7" cy="120.9" r="2.87"/>
<circle cx="200.7" cy="127.1" r="2.89"/>
<circle cx="202.7" cy="133.3" r="2.93"/>
<circle cx="204.8" cy="139.5" r="2.98"/>
<circle cx="206.8" cy="145.7" r="3.05"/>
<circle cx="208.8" cy="151.9" r="3.15"/>
<circle cx="210.8" cy="158.1" r="3.35"/>
<circle cx="212.8" cy="164.3" r="3.9"/>
<circle cx="214.8" cy="170.5" r="4.7"/>
<circle cx="216.8" cy="176.7" r="4.7"/>
<circle cx="218.9" cy="182.9" r="4.7"/>
<circle cx="220.9" cy="189.1" r="4.7"/>
<circle cx="222.9" cy="195.3" r="4.7"/>
<circle cx="224.9" cy="201.5" r="4.7"/>
<circle cx="226.9" cy="207.7" r="4.7"/>
<circle cx="228.9" cy="213.9" r="4.7"/>
<circle cx="230.9" cy="220.1" r="4.7"/>
<circle cx="233" cy="226.3" r="4.7"/>
<circle cx="235" cy="232.5" r="4.7"/>
<circle cx="237" cy="238.7" r="4.7"/>
<circle cx="239" cy="244.9" r="4.7"/>
<circle cx="241" cy="251.1" r="4.7"/>
<circle cx="166.6" cy="1.1" r="4.7"/>
<circle cx="168.6" cy="7.3" r="4.7"/>
<circle cx="170.7" cy="13.5" r="4.7"/>
<circle cx="172.7" cy="19.7" r="4.7"/>
<circle cx="174.7" cy="25.9" r="4.7"/>
<circle cx="176.7" cy="32.1" r="4.7"/>
<circle cx="178.7" cy="38.3" r="4.7"/>
<circle cx="180.7" cy="44.5" r="4.7"/>
<circle cx="182.8" cy="50.7" r="4.7"/>
<circle cx="184.8" cy="56.9" r="4.7"/>
<circle cx="186.8" cy="63.1" r="4.24"/>
<circle cx="188.8" cy="69.3" r="3.5"/>
<circle cx="190.8" cy="75.5" r="3.29"/>
<circle cx="192.8" cy="81.7" r="3.16"/>
<circle cx="194.8" cy="87.9" r="3.09"/>
<circle cx="196.9" cy="94.1" r="3.04"/>
<circle cx="198.9" cy="100.3" r="3.01"/>
<circle cx="200.9" cy="106.5" r="3"/>
<circle cx="202.9" cy="112.7" r="3"/>
<circle cx="204.9" cy="118.9" r="3.01"/>
<circle cx="206.9" cy="125.1" r="3.05"/>
<circle cx="208.9" cy="131.3" r="3.1"/>
<circle cx="211" cy="137.5" r="3.17"/>
<circle cx="213" cy="143.7" r="3.31"/>
<circle cx="215" cy="149.9" r="3.57"/>
<circle cx="217" cy="156.1" r="4.33"/>
<circle cx="219" cy="162.3" r="4.7"/>
<circle cx="221" cy="168.5" r="4.7"/>
<circle cx="223" cy="174.7" r="4.7"/>
<circle cx="225.1" cy="180.9" r="4.7"/>
<circle cx="227.1" cy="187.1" r="4.7"/>
<circle cx="229.1" cy="193.3" r="4.7"/>
<circle cx="231.1" cy="199.5" r="4.7"/>
<circle cx="233.1" cy="205.7" r="4.7"/>
<circle cx="235.1" cy="211.9" r="4.7"/>
<circle cx="237.1" cy="218.1" r="4.7"/>
<circle cx="239.2" cy="224.3" r="4.7"/>
<circle cx="241.2" cy="230.5" r="4.7"/>
<circle cx="243.2" cy="236.7" r="4.7"/>
<circle cx="245.2" cy="242.9" r="4.7"/>
<circle cx="247.2" cy="249.1" r="4.7"/>
<circle cx="172.8" cy="-1" r="4.7"/>
<circle cx="174.8" cy="5.2" r="4.7"/>
<circle cx="176.9" cy="11.4" r="4.7"/>
<circle cx="178.9" cy="17.6" r="4.7"/>
<circle cx="180.9" cy="23.8" r="4.7"/>
<circle cx="182.9" cy="30" r="4.7"/>
<circle cx="184.9" cy="36.2" r="4.7"/>
<circle cx="186.9" cy="42.5" r="4.7"/>
<circle cx="189" cy="48.7" r="4.7"/>
<circle cx="191" cy="54.9" r="4.7"/>
<circle cx="193" cy="61.1" r="4.7"/>
<circle cx="195" cy="67.3" r="4.7"/>
<circle cx="197" cy="73.5" r="4.26"/>
<circle cx="199" cy="79.7" r="3.72"/>
<circle cx="201" cy="85.9" r="3.43"/>
<circle cx="203.1" cy="92.1" r="3.33"/>
<circle cx="205.1" cy="98.3" r="3.26"/>
<circle cx="207.1" cy="104.5" r="3.23"/>
<circle cx="209.1" cy="110.7" r="3.23"/>
<circle cx="211.1" cy="116.9" r="3.27"/>
<circle cx="213.1" cy="123.1" r="3.34"/>
<circle cx="215.1" cy="129.3" r="3.45"/>
<circle cx="217.2" cy="135.5" r="3.78"/>
<circle cx="219.2" cy="141.7" r="4.33"/>
<circle cx="221.2" cy="147.9" r="4.7"/>
<circle cx="223.2" cy="154.1" r="4.7"/>
<circle cx="225.2" cy="160.3" r="4.7"/>
<circle cx="227.2" cy="166.5" r="4.7"/>
<circle cx="229.2" cy="172.7" r="4.7"/>
<circle cx="231.3" cy="178.9" r="4.7"/>
<circle cx="233.3" cy="185.1" r="4.7"/>
<circle cx="235.3" cy="191.3" r="4.7"/>
<circle cx="237.3" cy="197.5" r="4.7"/>
<circle cx="239.3" cy="203.7" r="4.7"/>
<circle cx="241.3" cy="209.9" r="4.7"/>
<circle cx="243.4" cy="216.1" r="4.7"/>
<circle cx="245.4" cy="222.3" r="4.7"/>
<circle cx="247.4" cy="228.5" r="4.7"/>
<circle cx="249.4" cy="234.7" r="4.7"/>
<circle cx="251.4" cy="240.9" r="4.7"/>
<circle cx="253.4" cy="247.1" r="4.7"/>
<circle cx="179" cy="-3" r="4.7"/>
<circle cx="181" cy="3.2" r="4.7"/>
<circle cx="183.1" cy="9.4" r="4.7"/>
<circle cx="185.1" cy="15.6" r="4.7"/>
<circle cx="187.1" cy="21.8" r="4.7"/>
<circle cx="189.1" cy="28" r="4.7"/>
<circle cx="191.1" cy="34.2" r="4.7"/>
<circle cx="193.1" cy="40.4" r="4.7"/>
<circle cx="195.2" cy="46.6" r="4.7"/>
<circle cx="197.2" cy="52.8" r="4.7"/>
<circle cx="199.2" cy="59" r="4.7"/>
<circle cx="201.2" cy="65.2" r="4.7"/>
<circle cx="203.2" cy="71.4" r="4.7"/>
<circle cx="205.2" cy="77.6" r="4.7"/>
<circle cx="207.2" cy="83.8" r="4.7"/>
<circle cx="209.3" cy="90" r="4.5"/>
<circle cx="211.3" cy="96.2" r="4.29"/>
<circle cx="213.3" cy="102.4" r="4.19"/>
<circle cx="215.3" cy="108.6" r="4.19"/>
<circle cx="217.3" cy="114.8" r="4.31"/>
<circle cx="219.3" cy="121" r="4.53"/>
<circle cx="221.3" cy="127.2" r="4.7"/>
<circle cx="223.4" cy="133.4" r="4.7"/>
<circle cx="225.4" cy="139.6" r="4.7"/>
<circle cx="227.4" cy="145.9" r="4.7"/>
<circle cx="229.4" cy="152.1" r="4.7"/>
<circle cx="231.4" cy="158.3" r="4.7"/>
<circle cx="233.4" cy="164.5" r="4.7"/>
<circle cx="235.4" cy="170.7" r="4.7"/>
<circle cx="237.5" cy="176.9" r="4.7"/>
<circle cx="239.5" cy="183.1" r="4.7"/>
<circle cx="241.5" cy="189.3" r="4.7"/>
<circle cx="243.5" cy="195.5" r="4.7"/>
<circle cx="245.5" cy="201.7" r="4.7"/>
<circle cx="247.5" cy="207.9" r="4.7"/>
<circle cx="249.6" cy="214.1" r="4.7"/>
<circle cx="251.6" cy="220.3" r="4.7"/>
<circle cx="253.6" cy="226.5" r="4.7"/>
<circle cx="185.2" cy="-5" r="4.7"/>
<circle cx="187.2" cy="1.2" r="4.7"/>
<circle cx="189.3" cy="7.4" r="4.7"/>
<circle cx="191.3" cy="13.6" r="4.7"/>
<circle cx="193.3" cy="19.8" r="4.7"/>
<circle cx="195.3" cy="26" r="4.7"/>
<circle cx="197.3" cy="32.2" r="4.7"/>
<circle cx="199.3" cy="38.4" r="4.7"/>
<circle cx="201.4" cy="44.6" r="4.7"/>
<circle cx="203.4" cy="50.8" r="4.7"/>
<circle cx="205.4" cy="57" r="4.7"/>
<circle cx="207.4" cy="63.2" r="4.7"/>
<circle cx="209.4" cy="69.4" r="4.7"/>
<circle cx="211.4" cy="75.6" r="4.7"/>
<circle cx="213.4" cy="81.8" r="4.7"/>
<circle cx="215.5" cy="88" r="4.7"/>
<circle cx="217.5" cy="94.2" r="4.7"/>
<circle cx="219.5" cy="100.4" r="4.7"/>
<circle cx="221.5" cy="106.6" r="4.7"/>
<circle cx="223.5" cy="112.8" r="4.7"/>
<circle cx="225.5" cy="119" r="4.7"/>
<circle cx="227.5" cy="125.2" r="4.7"/>
<circle cx="229.6" cy="131.4" r="4.7"/>
<circle cx="231.6" cy="137.6" r="4.7"/>
<circle cx="233.6" cy="143.8" r="4.7"/>
<circle cx="235.6" cy="150" r="4.7"/>
<circle cx="237.6" cy="156.2" r="4.7"/>
<circle cx="239.6" cy="162.4" r="4.7"/>
<circle cx="241.6" cy="168.6" r="4.7"/>
<circle cx="243.7" cy="174.8" r="4.7"/>
<circle cx="245.7" cy="181" r="4.7"/>
<circle cx="247.7" cy="187.2" r="4.7"/>
<circle cx="249.7" cy="193.4" r="4.7"/>
<circle cx="251.7" cy="199.6" r="4.7"/>
<circle cx="253.7" cy="205.8" r="4.7"/>
<circle cx="193.5" cy="-.8" r="4.7"/>
<circle cx="195.5" cy="5.4" r="4.7"/>
<circle cx="197.5" cy="11.6" r="4.7"/>
<circle cx="199.5" cy="17.8" r="4.7"/>
<circle cx="201.5" cy="24" r="4.7"/>
<circle cx="203.5" cy="30.2" r="4.7"/>
<circle cx="205.5" cy="36.4" r="4.7"/>
<circle cx="207.6" cy="42.6" r="4.7"/>
<circle cx="209.6" cy="48.8" r="4.7"/>
<circle cx="211.6" cy="55" r="4.7"/>
<circle cx="213.6" cy="61.2" r="4.7"/>
<circle cx="215.6" cy="67.4" r="4.7"/>
<circle cx="217.6" cy="73.6" r="4.7"/>
<circle cx="219.6" cy="79.8" r="4.7"/>
<circle cx="221.7" cy="86" r="4.7"/>
<circle cx="223.7" cy="92.2" r="4.7"/>
<circle cx="225.7" cy="98.4" r="4.7"/>
<circle cx="227.7" cy="104.6" r="4.7"/>
<circle cx="229.7" cy="110.8" r="4.7"/>
<circle cx="231.7" cy="117" r="4.7"/>
<circle cx="233.7" cy="123.2" r="4.7"/>
<circle cx="235.8" cy="129.4" r="4.7"/>
<circle cx="237.8" cy="135.6" r="4.7"/>
<circle cx="239.8" cy="141.8" r="4.7"/>
<circle cx="241.8" cy="148" r="4.7"/>
<circle cx="243.8" cy="154.2" r="4.7"/>
<circle cx="245.8" cy="160.4" r="4.7"/>
<circle cx="247.8" cy="166.6" r="4.7"/>
<circle cx="249.9" cy="172.8" r="4.7"/>
<circle cx="251.9" cy="179" r="4.7"/>
<circle cx="253.9" cy="185.2" r="4.7"/>
<circle cx="199.7" cy="-2.8" r="4.7"/>
<circle cx="201.7" cy="3.4" r="4.7"/>
<circle cx="203.7" cy="9.6" r="4.7"/>
<circle cx="205.7" cy="15.8" r="4.7"/>
<circle cx="207.7" cy="22" r="4.7"/>
<circle cx="209.7" cy="28.2" r="4.7"/>
<circle cx="211.7" cy="34.4" r="4.7"/>
<circle cx="213.8" cy="40.6" r="4.7"/>
<circle cx="215.8" cy="46.8" r="4.7"/>
<circle cx="217.8" cy="53" r="4.7"/>
<circle cx="219.8" cy="59.2" r="4.7"/>
<circle cx="221.8" cy="65.4" r="4.7"/>
<circle cx="223.8" cy="71.6" r="4.7"/>
<circle cx="225.8" cy="77.8" r="4.7"/>
<circle cx="227.9" cy="84" r="4.7"/>
<circle cx="229.9" cy="90.2" r="4.7"/>
<circle cx="231.9" cy="96.4" r="4.7"/>
<circle cx="233.9" cy="102.6" r="4.7"/>
<circle cx="235.9" cy="108.8" r="4.7"/>
<circle cx="237.9" cy="115" r="4.7"/>
<circle cx="239.9" cy="121.2" r="4.7"/>
<circle cx="242" cy="127.4" r="4.7"/>
<circle cx="244" cy="133.6" r="4.7"/>
<circle cx="246" cy="139.8" r="4.7"/>
<circle cx="248" cy="146" r="4.7"/>
<circle cx="250" cy="152.2" r="4.7"/>
<circle cx="252" cy="158.4" r="4.7"/>
<circle cx="254.1" cy="164.6" r="4.7"/>
<circle cx="205.9" cy="-4.8" r="4.7"/>
<circle cx="207.9" cy="1.4" r="4.7"/>
<circle cx="209.9" cy="7.6" r="4.7"/>
<circle cx="211.9" cy="13.8" r="4.7"/>
<circle cx="213.9" cy="20" r="4.7"/>
<circle cx="215.9" cy="26.2" r="4.7"/>
<circle cx="217.9" cy="32.4" r="4.7"/>
<circle cx="220" cy="38.6" r="4.7"/>
<circle cx="222" cy="44.8" r="4.7"/>
<circle cx="224" cy="51" r="4.7"/>
<circle cx="226" cy="57.2" r="4.7"/>
<circle cx="228" cy="63.4" r="4.7"/>
<circle cx="230" cy="69.6" r="4.7"/>
<circle cx="232" cy="75.8" r="4.7"/>
<circle cx="234.1" cy="82" r="4.7"/>
<circle cx="236.1" cy="88.2" r="4.7"/>
<circle cx="238.1" cy="94.4" r="4.7"/>
<circle cx="240.1" cy="100.6" r="4.7"/>
<circle cx="242.1" cy="106.8" r="4.7"/>
<circle cx="244.1" cy="113" r="4.7"/>
<circle cx="246.1" cy="119.2" r="4.7"/>
<circle cx="248.2" cy="125.4" r="4.7"/>
<circle cx="250.2" cy="131.6" r="4.7"/>
<circle cx="252.2" cy="137.8" r="4.7"/>
<circle cx="214.1" cy="-.6" r="4.7"/>
<circle cx="216.1" cy="5.6" r="4.7"/>
<circle cx="218.1" cy="11.8" r="4.7"/>
<circle cx="220.1" cy="18" r="4.7"/>
<circle cx="222.1" cy="24.2" r="4.7"/>
<circle cx="224.1" cy="30.4" r="4.7"/>
<circle cx="226.2" cy="36.6" r="4.7"/>
<circle cx="228.2" cy="42.8" r="4.7"/>
<circle cx="230.2" cy="49" r="4.7"/>
<circle cx="232.2" cy="55.2" r="4.7"/>
<circle cx="234.2" cy="61.4" r="4.7"/>
<circle cx="236.2" cy="67.6" r="4.7"/>
<circle cx="238.2" cy="73.8" r="4.7"/>
<circle cx="240.3" cy="80" r="4.7"/>
<circle cx="242.3" cy="86.2" r="4.7"/>
<circle cx="244.3" cy="92.4" r="4.7"/>
<circle cx="246.3" cy="98.6" r="4.7"/>
<circle cx="248.3" cy="104.8" r="4.7"/>
<circle cx="250.3" cy="111" r="4.7"/>
<circle cx="252.3" cy="117.2" r="4.7"/>
<circle cx="220.3" cy="-2.7" r="4.7"/>
<circle cx="222.3" cy="3.5" r="4.7"/>
<circle cx="224.3" cy="9.7" r="4.7"/>
<circle cx="226.3" cy="15.9" r="4.7"/>
<circle cx="228.3" cy="22.1" r="4.7"/>
<circle cx="230.3" cy="28.3" r="4.7"/>
<circle cx="232.4" cy="34.5" r="4.7"/>
<circle cx="234.4" cy="40.7" r="4.7"/>
<circle cx="236.4" cy="46.9" r="4.7"/>
<circle cx="238.4" cy="53.2" r="4.7"/>
<circle cx="240.4" cy="59.4" r="4.7"/>
<circle cx="242.4" cy="65.6" r="4.7"/>
<circle cx="244.4" cy="71.8" r="4.7"/>
<circle cx="246.5" cy="78" r="4.7"/>
<circle cx="248.5" cy="84.2" r="4.7"/>
<circle cx="250.5" cy="90.4" r="4.7"/>
<circle cx="252.5" cy="96.6" r="4.7"/>
<circle cx="226.5" cy="-4.7" r="4.7"/>
<circle cx="228.5" cy="1.5" r="4.7"/>
<circle cx="230.5" cy="7.7" r="4.7"/>
<circle cx="232.5" cy="13.9" r="4.7"/>
<circle cx="234.5" cy="20.1" r="4.7"/>
<circle cx="236.5" cy="26.3" r="4.7"/>
<circle cx="238.6" cy="32.5" r="4.7"/>
<circle cx="240.6" cy="38.7" r="4.7"/>
<circle cx="242.6" cy="44.9" r="4.7"/>
<circle cx="244.6" cy="51.1" r="4.7"/>
<circle cx="246.6" cy="57.3" r="4.7"/>
<circle cx="248.6" cy="63.5" r="4.7"/>
<circle cx="250.6" cy="69.7" r="4.7"/>
<circle cx="252.7" cy="75.9" r="4.7"/>
<circle cx="234.7" cy="-.5" r="4.7"/>
<circle cx="236.7" cy="5.7" r="4.7"/>
<circle cx="238.7" cy="11.9" r="4.7"/>
<circle cx="240.7" cy="18.1" r="4.7"/>
<circle cx="242.7" cy="24.3" r="4.7"/>
<circle cx="244.8" cy="30.5" r="4.7"/>
<circle cx="246.8" cy="36.7" r="4.7"/>
<circle cx="248.8" cy="42.9" r="4.7"/>
<circle cx="250.8" cy="49.1" r="4.7"/>
<circle cx="252.8" cy="55.3" r="4.7"/>
<circle cx="240.9" cy="-2.5" r="4.7"/>
<circle cx="242.9" cy="3.7" r="4.7"/>
<circle cx="244.9" cy="9.9" r="4.7"/>
<circle cx="246.9" cy="16.1" r="4.7"/>
<circle cx="248.9" cy="22.3" r="4.7"/>
<circle cx="251" cy="28.5" r="4.7"/>
<circle cx="253" cy="34.7" r="4.7"/>
<circle cx="247.1" cy="-4.5" r="4.7"/>
<circle cx="249.1" cy="1.7" r="4.7"/>
<circle cx="251.1" cy="7.9" r="4.7"/>
<circle cx="253.1" cy="14.1" r="4.7"/>
<path fill="#fff" d="M-2.81 249.68q1 .74 2.19 1.11q-.74 1 -1.11 2.19q-1 -.74 -2.19 -1.11q.74 -1 1.11 -2.19z
M-2.66 229.06q1 .74 2.19 1.11q-.74 1 -1.11 2.19q-1 -.74 -2.19 -1.11q.74 -1 1.11 -2.19z
M-.64 235.26q1 .74 2.19 1.11q-.74 1 -1.11 2.19q-1 -.74 -2.19 -1.11q.74 -1 1.11 -2.19z
M1.37 241.46q1 .74 2.19 1.11q-.74 1 -1.11 2.19q-1 -.74 -2.19 -1.11q.74 -1 1.11 -2.19z
M3.39 247.66q1 .74 2.19 1.11q-.74 1 -1.11 2.19q-1 -.74 -2.19 -1.11q.74 -1 1.11 -2.19z
M-2.5 208.44q1 .74 2.19 1.12q-.74 1 -1.12 2.19q-1 -.74 -2.19 -1.12q.74 -1 1.12 -2.19z
M-.49 214.64q1 .74 2.19 1.11q-.74 1 -1.11 2.19q-1 -.74 -2.19 -1.11q.74 -1 1.11 -2.19z
M1.53 220.84q1 .74 2.19 1.11q-.74 1 -1.11 2.19q-1 -.74 -2.19 -1.11q.74 -1 1.11 -2.19z
M3.54 227.04q1 .74 2.19 1.11q-.74 1 -1.11 2.19q-1 -.74 -2.19 -1.11q.74 -1 1.11 -2.19z
M5.56 233.24q1 .74 2.19 1.11q-.74 1 -1.11 2.19q-1 -.74 -2.19 -1.11q.74 -1 1.11 -2.19z
M7.57 239.44q1 .74 2.19 1.11q-.74 1 -1.11 2.19q-1 -.74 -2.19 -1.11q.74 -1 1.11 -2.19z
M9.59 245.64q1 .74 2.19 1.11q-.74 1 -1.11 2.19q-1 -.74 -2.19 -1.11q.74 -1 1.11 -2.19z
M-2.35 187.82q1 .74 2.19 1.12q-.74 1 -1.12 2.19q-1 -.74 -2.19 -1.12q.74 -1 1.12 -2.19z
M-.33 194.02q1 .74 2.19 1.12q-.74 1 -1.12 2.19q-1 -.74 -2.19 -1.12q.74 -1 1.12 -2.19z
M1.68 200.22q1 .74 2.19 1.12q-.74 1 -1.12 2.19q-1 -.74 -2.19 -1.12q.74 -1 1.12 -2.19z
M3.7 206.42q1 .74 2.19 1.12q-.74 1 -1.12 2.19q-1 -.74 -2.19 -1.12q.74 -1 1.12 -2.19z
M5.71 212.62q1 .74 2.19 1.12q-.74 1 -1.12 2.19q-1 -.74 -2.19 -1.12q.74 -1 1.12 -2.19z
M7.73 218.82q1 .74 2.19 1.12q-.74 1 -1.12 2.19q-1 -.74 -2.19 -1.12q.74 -1 1.12 -2.19z
M9.74 225.03q1 .74 2.19 1.12q-.74 1 -1.12 2.19q-1 -.74 -2.19 -1.12q.74 -1 1.12 -2.19z
M11.76 231.23q1 .74 2.19 1.11q-.74 1 -1.11 2.19q-1 -.74 -2.19 -1.11q.74 -1 1.11 -2.19z
M13.77 237.43q1 .74 2.19 1.11q-.74 1 -1.11 2.19q-1 -.74 -2.19 -1.11q.74 -1 1.11 -2.19z
M15.79 243.63q1 .74 2.19 1.11q-.74 1 -1.11 2.19q-1 -.74 -2.19 -1.11q.74 -1 1.11 -2.19z
M17.8 249.83q1 .74 2.19 1.11q-.74 1 -1.11 2.19q-1 -.74 -2.19 -1.11q.74 -1 1.11 -2.19z
M-2.19 167.2q1.01 .74 2.19 1.12q-.74 1.01 -1.12 2.19q-1.01 -.74 -2.19 -1.12q.74 -1.01 1.12 -2.19z
M-.18 173.4q1.01 .74 2.19 1.12q-.74 1.01 -1.12 2.19q-1.01 -.74 -2.19 -1.12q.74 -1.01 1.12 -2.19z
M1.84 179.6q1.01 .74 2.19 1.12q-.74 1.01 -1.12 2.19q-1.01 -.74 -2.19 -1.12q.74 -1.01 1.12 -2.19z
M3.85 185.8q1 .74 2.19 1.12q-.74 1 -1.12 2.19q-1 -.74 -2.19 -1.12q.74 -1 1.12 -2.19z
M5.87 192q1 .74 2.19 1.12q-.74 1 -1.12 2.19q-1 -.74 -2.19 -1.12q.74 -1 1.12 -2.19z
M7.88 198.21q1 .74 2.19 1.12q-.74 1 -1.12 2.19q-1 -.74 -2.19 -1.12q.74 -1 1.12 -2.19z
M9.9 204.41q1 .74 2.19 1.12q-.74 1 -1.12 2.19q-1 -.74 -2.19 -1.12q.74 -1 1.12 -2.19z
M11.91 210.61q1 .74 2.19 1.12q-.74 1 -1.12 2.19q-1 -.74 -2.19 -1.12q.74 -1 1.12 -2.19z
M13.93 216.81q1 .74 2.19 1.12q-.74 1 -1.12 2.19q-1 -.74 -2.19 -1.12q.74 -1 1.12 -2.19z
M15.94 223.01q1 .74 2.19 1.12q-.74 1 -1.12 2.19q-1 -.74 -2.19 -1.12q.74 -1 1.12 -2.19z
M17.96 229.21q1 .74 2.19 1.12q-.74 1 -1.12 2.19q-1 -.74 -2.19 -1.12q.74 -1 1.12 -2.19z
M19.97 235.41q1 .74 2.19 1.12q-.74 1 -1.12 2.19q-1 -.74 -2.19 -1.12q.74 -1 1.12 -2.19z
M21.99 241.61q1 .74 2.19 1.11q-.74 1 -1.11 2.19q-1 -.74 -2.19 -1.11q.74 -1 1.11 -2.19z
M24 247.81q1 .74 2.19 1.11q-.74 1 -1.11 2.19q-1 -.74 -2.19 -1.11q.74 -1 1.11 -2.19z
M-2.03 146.58q1.01 .73 2.19 1.12q-.73 1.01 -1.12 2.19q-1.01 -.73 -2.19 -1.12q.73 -1.01 1.12 -2.19z
M-.02 152.78q1.01 .73 2.19 1.12q-.73 1.01 -1.12 2.19q-1.01 -.73 -2.19 -1.12q.73 -1.01 1.12 -2.19z
M1.99 158.98q1.01 .74 2.2 1.12q-.74 1.01 -1.12 2.2q-1.01 -.74 -2.2 -1.12q.74 -1.01 1.12 -2.2z
M4.01 165.17q1.01 .74 2.21 1.12q-.74 1.01 -1.12 2.21q-1.01 -.74 -2.21 -1.12q.74 -1.01 1.12 -2.21z
M6.02 171.37q1.01 .74 2.21 1.12q-.74 1.01 -1.12 2.21q-1.01 -.74 -2.21 -1.12q.74 -1.01 1.12 -2.21z
M8.04 177.58q1.01 .74 2.21 1.12q-.74 1.01 -1.12 2.21q-1.01 -.74 -2.21 -1.12q.74 -1.01 1.12 -2.21z
M10.05 183.78q1.01 .74 2.2 1.12q-.74 1.01 -1.12 2.2q-1.01 -.74 -2.2 -1.12q.74 -1.01 1.12 -2.2z
M12.07 189.99q1.01 .73 2.19 1.12q-.73 1.01 -1.12 2.19q-1.01 -.73 -2.19 -1.12q.73 -1.01 1.12 -2.19z
M14.08 196.19q1.01 .73 2.19 1.12q-.73 1.01 -1.12 2.19q-1.01 -.73 -2.19 -1.12q.73 -1.01 1.12 -2.19z
M16.1 202.39q1.01 .73 2.19 1.12q-.73 1.01 -1.12 2.19q-1.01 -.73 -2.19 -1.12q.73 -1.01 1.12 -2.19z
M18.11 208.59q1.01 .74 2.19 1.12q-.74 1.01 -1.12 2.19q-1.01 -.74 -2.19 -1.12q.74 -1.01 1.12 -2.19z
M20.13 214.79q1 .74 2.19 1.12q-.74 1 -1.12 2.19q-1 -.74 -2.19 -1.12q.74 -1 1.12 -2.19z
M22.14 220.99q1 .74 2.19 1.12q-.74 1 -1.12 2.19q-1 -.74 -2.19 -1.12q.74 -1 1.12 -2.19z
M24.16 227.2q1 .74 2.19 1.12q-.74 1 -1.12 2.19q-1 -.74 -2.19 -1.12q.74 -1 1.12 -2.19z
M26.17 233.4q1 .74 2.19 1.12q-.74 1 -1.12 2.19q-1 -.74 -2.19 -1.12q.74 -1 1.12 -2.19z
M28.19 239.6q1 .74 2.19 1.12q-.74 1 -1.12 2.19q-1 -.74 -2.19 -1.12q.74 -1 1.12 -2.19z
M30.2 245.8q1 .74 2.19 1.12q-.74 1 -1.12 2.19q-1 -.74 -2.19 -1.12q.74 -1 1.12 -2.19z
M-1.88 125.97q1.01 .73 2.19 1.12q-.73 1.01 -1.12 2.19q-1.01 -.73 -2.19 -1.12q.73 -1.01 1.12 -2.19z
M.13 132.15q1.02 .74 2.21 1.13q-.74 1.02 -1.13 2.21q-1.02 -.74 -2.21 -1.13q.74 -1.02 1.13 -2.21z
M2.14 138.34q1.03 .74 2.23 1.14q-.74 1.03 -1.14 2.23q-1.03 -.74 -2.23 -1.14q.74 -1.03 1.14 -2.23z
M4.15 144.52q1.04 .74 2.25 1.15q-.74 1.04 -1.15 2.25q-1.04 -.74 -2.25 -1.15q.74 -1.04 1.15 -2.25z
M6.16 150.71q1.05 .73 2.27 1.15q-.73 1.05 -1.15 2.27q-1.05 -.73 -2.27 -1.15q.73 -1.05 1.15 -2.27z
M8.18 156.91q1.06 .73 2.28 1.16q-.73 1.06 -1.16 2.28q-1.06 -.73 -2.28 -1.16q.73 -1.06 1.16 -2.28z
M10.19 163.1q1.07 .72 2.28 1.16q-.72 1.07 -1.16 2.28q-1.07 -.72 -2.28 -1.16q.72 -1.07 1.16 -2.28z
M12.2 169.3q1.07 .72 2.28 1.16q-.72 1.07 -1.16 2.28q-1.07 -.72 -2.28 -1.16q.72 -1.07 1.16 -2.28z
M14.22 175.5q1.07 .72 2.28 1.16q-.72 1.07 -1.16 2.28q-1.07 -.72 -2.28 -1.16q.72 -1.07 1.16 -2.28z
M16.24 181.71q1.06 .73 2.28 1.16q-.73 1.06 -1.16 2.28q-1.06 -.73 -2.28 -1.16q.73 -1.06 1.16 -2.28z
M18.25 187.92q1.05 .73 2.26 1.15q-.73 1.05 -1.15 2.26q-1.05 -.73 -2.26 -1.15q.73 -1.05 1.15 -2.26z
M20.27 194.13q1.04 .74 2.25 1.15q-.74 1.04 -1.15 2.25q-1.04 -.74 -2.25 -1.15q.74 -1.04 1.15 -2.25z
M22.29 200.35q1.03 .74 2.23 1.14q-.74 1.03 -1.14 2.23q-1.03 -.74 -2.23 -1.14q.74 -1.03 1.14 -2.23z
M24.31 206.56q1.01 .74 2.21 1.13q-.74 1.01 -1.13 2.21q-1.01 -.74 -2.21 -1.13q.74 -1.01 1.13 -2.21z
M26.33 212.78q1.01 .73 2.19 1.12q-.73 1.01 -1.12 2.19q-1.01 -.73 -2.19 -1.12q.73 -1.01 1.12 -2.19z
M28.34 218.98q1.01 .74 2.19 1.12q-.74 1.01 -1.12 2.19q-1.01 -.74 -2.19 -1.12q.74 -1.01 1.12 -2.19z
M30.36 225.18q1 .74 2.19 1.12q-.74 1 -1.12 2.19q-1 -.74 -2.19 -1.12q.74 -1 1.12 -2.19z
M32.37 231.38q1 .74 2.19 1.12q-.74 1 -1.12 2.19q-1 -.74 -2.19 -1.12q.74 -1 1.12 -2.19z
M34.39 237.58q1 .74 2.19 1.12q-.74 1 -1.12 2.19q-1 -.74 -2.19 -1.12q.74 -1 1.12 -2.19z
M36.4 243.78q1 .74 2.19 1.12q-.74 1 -1.12 2.19q-1 -.74 -2.19 -1.12q.74 -1 1.12 -2.19z
M38.42 249.99q1 .74 2.19 1.12q-.74 1 -1.12 2.19q-1 -.74 -2.19 -1.12q.74 -1 1.12 -2.19z
M-1.72 105.35q1.01 .73 2.19 1.12q-.73 1.01 -1.12 2.19q-1.01 -.73 -2.19 -1.12q.73 -1.01 1.12 -2.19z
M.29 111.55q1.01 .73 2.19 1.12q-.73 1.01 -1.12 2.19q-1.01 -.73 -2.19 -1.12q.73 -1.01 1.12 -2.19z
M2.3 117.72q1.02 .75 2.23 1.13q-.75 1.02 -1.13 2.23q-1.02 -.75 -2.23 -1.13q.75 -1.02 1.13 -2.23z
M4.31 123.9q1.05 .73 2.26 1.15q-.73 1.05 -1.15 2.26q-1.05 -.73 -2.26 -1.15q.73 -1.05 1.15 -2.26z
M6.32 130.08q1.07 .72 2.28 1.16q-.72 1.07 -1.16 2.28q-1.07 -.72 -2.28 -1.16q.72 -1.07 1.16 -2.28z
M8.32 136.27q1.09 .71 2.31 1.18q-.71 1.09 -1.18 2.31q-1.09 -.71 -2.31 -1.18q.71 -1.09 1.18 -2.31z
M10.33 142.44q1.11 .71 2.34 1.19q-.71 1.11 -1.19 2.34q-1.11 -.71 -2.34 -1.19q.71 -1.11 1.19 -2.34z
M12.34 148.62q1.13 .71 2.37 1.21q-.71 1.13 -1.21 2.37q-1.13 -.71 -2.37 -1.21q.71 -1.13 1.21 -2.37z
M14.35 154.81q1.14 .71 2.39 1.22q-.71 1.14 -1.22 2.39q-1.14 -.71 -2.39 -1.22q.71 -1.14 1.22 -2.39z
M16.36 161q1.15 .7 2.4 1.22q-.7 1.15 -1.22 2.4q-1.15 -.7 -2.4 -1.22q.7 -1.15 1.22 -2.4z
M18.38 167.2q1.15 .7 2.4 1.22q-.7 1.15 -1.22 2.4q-1.15 -.7 -2.4 -1.22q.7 -1.15 1.22 -2.4z
M20.39 173.4q1.15 .7 2.4 1.22q-.7 1.15 -1.22 2.4q-1.15 -.7 -2.4 -1.22q.7 -1.15 1.22 -2.4z
M22.41 179.61q1.14 .71 2.39 1.22q-.71 1.14 -1.22 2.39q-1.14 -.71 -2.39 -1.22q.71 -1.14 1.22 -2.39z
M24.43 185.83q1.13 .71 2.36 1.2q-.71 1.13 -1.2 2.36q-1.13 -.71 -2.36 -1.2q.71 -1.13 1.2 -2.36z
M26.45 192.05q1.11 .71 2.34 1.19q-.71 1.11 -1.19 2.34q-1.11 -.71 -2.34 -1.19q.71 -1.11 1.19 -2.34z
M28.47 198.28q1.09 .72 2.3 1.17q-.72 1.09 -1.17 2.3q-1.09 -.72 -2.3 -1.17q.72 -1.09 1.17 -2.3z
M30.49 204.5q1.07 .73 2.28 1.16q-.73 1.07 -1.16 2.28q-1.07 -.73 -2.28 -1.16q.73 -1.07 1.16 -2.28z
M32.52 210.72q1.04 .74 2.25 1.15q-.74 1.04 -1.15 2.25q-1.04 -.74 -2.25 -1.15q.74 -1.04 1.15 -2.25z
M34.54 216.94q1.02 .74 2.22 1.13q-.74 1.02 -1.13 2.22q-1.02 -.74 -2.22 -1.13q.74 -1.02 1.13 -2.22z
M36.56 223.17q1.01 .73 2.19 1.12q-.73 1.01 -1.12 2.19q-1.01 -.73 -2.19 -1.12q.73 -1.01 1.12 -2.19z
M38.58 229.37q1.01 .74 2.19 1.12q-.74 1.01 -1.12 2.19q-1.01 -.74 -2.19 -1.12q.74 -1.01 1.12 -2.19z
M40.59 235.57q1 .74 2.19 1.12q-.74 1 -1.12 2.19q-1 -.74 -2.19 -1.12q.74 -1 1.12 -2.19z
M42.6 241.77q1 .74 2.19 1.12q-.74 1 -1.12 2.19q-1 -.74 -2.19 -1.12q.74 -1 1.12 -2.19z
M44.62 247.97q1 .74 2.19 1.12q-.74 1 -1.12 2.19q-1 -.74 -2.19 -1.12q.74 -1 1.12 -2.19z
M-1.56 84.73q1 .74 2.19 1.12q-.74 1 -1.12 2.19q-1 -.74 -2.19 -1.12q.74 -1 1.12 -2.19z
M.45 90.93q1.01 .74 2.19 1.12q-.74 1.01 -1.12 2.19q-1.01 -.74 -2.19 -1.12q.74 -1.01 1.12 -2.19z
M2.47 97.13q1.01 .73 2.19 1.12q-.73 1.01 -1.12 2.19q-1.01 -.73 -2.19 -1.12q.73 -1.01 1.12 -2.19z
M4.47 103.31q1.02 .74 2.22 1.13q-.74 1.02 -1.13 2.22q-1.02 -.74 -2.22 -1.13q.74 -1.02 1.13 -2.22z
M6.48 109.48q1.05 .73 2.26 1.15q-.73 1.05 -1.15 2.26q-1.05 -.73 -2.26 -1.15q.73 -1.05 1.15 -2.26z
M8.48 115.66q1.08 .72 2.29 1.17q-.72 1.08 -1.17 2.29q-1.08 -.72 -2.29 -1.17q.72 -1.08 1.17 -2.29z
M10.49 121.82q1.11 .71 2.34 1.19q-.71 1.11 -1.19 2.34q-1.11 -.71 -2.34 -1.19q.71 -1.11 1.19 -2.34z
M12.49 127.99q1.15 .71 2.39 1.22q-.71 1.15 -1.22 2.39q-1.15 -.71 -2.39 -1.22q.71 -1.15 1.22 -2.39z
M14.49 134.15q1.18 .7 2.44 1.24q-.7 1.18 -1.24 2.44q-1.18 -.7 -2.44 -1.24q.7 -1.18 1.24 -2.44z
M16.5 140.33q1.2 .69 2.47 1.26q-.69 1.2 -1.26 2.47q-1.2 -.69 -2.47 -1.26q.69 -1.2 1.26 -2.47z
M18.51 146.5q1.22 .69 2.5 1.28q-.69 1.22 -1.28 2.5q-1.22 -.69 -2.5 -1.28q.69 -1.22 1.28 -2.5z
M20.52 152.69q1.24 .69 2.53 1.29q-.69 1.24 -1.29 2.53q-1.24 -.69 -2.53 -1.29q.69 -1.24 1.29 -2.53z
M22.53 158.88q1.25 .69 2.54 1.3q-.69 1.25 -1.3 2.54q-1.25 -.69 -2.54 -1.3q.69 -1.25 1.3 -2.54z
M24.54 165.07q1.25 .69 2.55 1.3q-.69 1.25 -1.3 2.55q-1.25 -.69 -2.55 -1.3q.69 -1.25 1.3 -2.55z
M26.56 171.28q1.25 .69 2.54 1.29q-.69 1.25 -1.29 2.54q-1.25 -.69 -2.54 -1.29q.69 -1.25 1.29 -2.54z
M28.58 177.49q1.24 .69 2.52 1.29q-.69 1.24 -1.29 2.52q-1.24 -.69 -2.52 -1.29q.69 -1.24 1.29 -2.52z
M30.6 183.71q1.22 .69 2.5 1.27q-.69 1.22 -1.27 2.5q-1.22 -.69 -2.5 -1.27q.69 -1.22 1.27 -2.5z
M32.62 189.94q1.2 .7 2.47 1.26q-.7 1.2 -1.26 2.47q-1.2 -.7 -2.47 -1.26q.7 -1.2 1.26 -2.47z
M34.64 196.16q1.17 .7 2.43 1.24q-.7 1.17 -1.24 2.43q-1.17 -.7 -2.43 -1.24q.7 -1.17 1.24 -2.43z
M36.67 202.4q1.14 .71 2.39 1.22q-.71 1.14 -1.22 2.39q-1.14 -.71 -2.39 -1.22q.71 -1.14 1.22 -2.39z
M38.7 208.64q1.11 .71 2.33 1.19q-.71 1.11 -1.19 2.33q-1.11 -.71 -2.33 -1.19q.71 -1.11 1.19 -2.33z
M40.72 214.87q1.08 .72 2.29 1.17q-.72 1.08 -1.17 2.29q-1.08 -.72 -2.29 -1.17q.72 -1.08 1.17 -2.29z
M42.75 221.1q1.05 .74 2.25 1.15q-.74 1.05 -1.15 2.25q-1.05 -.74 -2.25 -1.15q.74 -1.05 1.15 -2.25z
M44.77 227.33q1.02 .74 2.22 1.13q-.74 1.02 -1.13 2.22q-1.02 -.74 -2.22 -1.13q.74 -1.02 1.13 -2.22z
M46.79 233.55q1.01 .73 2.19 1.12q-.73 1.01 -1.12 2.19q-1.01 -.73 -2.19 -1.12q.73 -1.01 1.12 -2.19z
M48.81 239.75q1 .74 2.19 1.12q-.74 1 -1.12 2.19q-1 -.74 -2.19 -1.12q.74 -1 1.12 -2.19z
M50.82 245.95q1 .74 2.19 1.12q-.74 1 -1.12 2.19q-1 -.74 -2.19 -1.12q.74 -1 1.12 -2.19z
M-3.42 57.91q1 .74 2.19 1.12q-.74 1 -1.12 2.19q-1 -.74 -2.19 -1.12q.74 -1 1.12 -2.19z
M-1.41 64.11q1 .74 2.19 1.12q-.74 1 -1.12 2.19q-1 -.74 -2.19 -1.12q.74 -1 1.12 -2.19z
M.61 70.32q1 .74 2.19 1.12q-.74 1 -1.12 2.19q-1 -.74 -2.19 -1.12q.74 -1 1.12 -2.19z
M2.62 76.52q1 .74 2.19 1.12q-.74 1 -1.12 2.19q-1 -.74 -2.19 -1.12q.74 -1 1.12 -2.19z
M4.64 82.72q1.01 .74 2.19 1.12q-.74 1.01 -1.12 2.19q-1.01 -.74 -2.19 -1.12q.74 -1.01 1.12 -2.19z
M6.65 88.91q1.01 .74 2.19 1.12q-.74 1.01 -1.12 2.19q-1.01 -.74 -2.19 -1.12q.74 -1.01 1.12 -2.19z
M8.65 95.08q1.03 .74 2.24 1.14q-.74 1.03 -1.14 2.24q-1.03 -.74 -2.24 -1.14q.74 -1.03 1.14 -2.24z
M10.66 101.25q1.07 .72 2.28 1.16q-.72 1.07 -1.16 2.28q-1.07 -.72 -2.28 -1.16q.72 -1.07 1.16 -2.28z
M12.66 107.41q1.11 .71 2.34 1.19q-.71 1.11 -1.19 2.34q-1.11 -.71 -2.34 -1.19q.71 -1.11 1.19 -2.34z
M14.66 113.56q1.16 .7 2.41 1.23q-.7 1.16 -1.23 2.41q-1.16 -.7 -2.41 -1.23q.7 -1.16 1.23 -2.41z
M16.66 119.71q1.2 .7 2.47 1.26q-.7 1.2 -1.26 2.47q-1.2 -.7 -2.47 -1.26q.7 -1.2 1.26 -2.47z
M18.66 125.87q1.24 .69 2.52 1.28q-.69 1.24 -1.28 2.52q-1.24 -.69 -2.52 -1.28q.69 -1.24 1.28 -2.52z
M20.66 132.02q1.28 .68 2.59 1.32q-.68 1.28 -1.32 2.59q-1.28 -.68 -2.59 -1.32q.68 -1.28 1.32 -2.59z
M22.66 138.18q1.32 .68 2.64 1.35q-.68 1.32 -1.35 2.64q-1.32 -.68 -2.64 -1.35q.68 -1.32 1.35 -2.64z
M24.66 144.35q1.34 .68 2.68 1.37q-.68 1.34 -1.37 2.68q-1.34 -.68 -2.68 -1.37q.68 -1.34 1.37 -2.68z
M26.67 150.53q1.36 .69 2.71 1.38q-.69 1.36 -1.38 2.71q-1.36 -.69 -2.71 -1.38q.69 -1.36 1.38 -2.71z
M28.68 156.72q1.37 .7 2.73 1.39q-.7 1.37 -1.39 2.73q-1.37 -.7 -2.73 -1.39q.7 -1.37 1.39 -2.73z
M30.69 162.91q1.37 .7 2.74 1.4q-.7 1.37 -1.4 2.74q-1.37 -.7 -2.74 -1.4q.7 -1.37 1.4 -2.74z
M32.71 169.12q1.37 .7 2.73 1.39q-.7 1.37 -1.39 2.73q-1.37 -.7 -2.73 -1.39q.7 -1.37 1.39 -2.73z
M34.73 175.34q1.36 .69 2.71 1.38q-.69 1.36 -1.38 2.71q-1.36 -.69 -2.71 -1.38q.69 -1.36 1.38 -2.71z
M36.75 181.56q1.34 .68 2.68 1.37q-.68 1.34 -1.37 2.68q-1.34 -.68 -2.68 -1.37q.68 -1.34 1.37 -2.68z
M38.78 187.8q1.31 .68 2.64 1.34q-.68 1.31 -1.34 2.64q-1.31 -.68 -2.64 -1.34q.68 -1.31 1.34 -2.64z
M40.81 194.04q1.28 .68 2.58 1.31q-.68 1.28 -1.31 2.58q-1.28 -.68 -2.58 -1.31q.68 -1.28 1.31 -2.58z
M42.84 200.29q1.23 .69 2.52 1.28q-.69 1.23 -1.28 2.52q-1.23 -.69 -2.52 -1.28q.69 -1.23 1.28 -2.52z
M44.87 206.53q1.19 .7 2.46 1.25q-.7 1.19 -1.25 2.46q-1.19 -.7 -2.46 -1.25q.7 -1.19 1.25 -2.46z
M46.9 212.78q1.15 .7 2.4 1.22q-.7 1.15 -1.22 2.4q-1.15 -.7 -2.4 -1.22q.7 -1.15 1.22 -2.4z
M48.93 219.03q1.1 .71 2.33 1.19q-.71 1.1 -1.19 2.33q-1.1 -.71 -2.33 -1.19q.71 -1.1 1.19 -2.33z
M50.96 225.27q1.07 .73 2.28 1.16q-.73 1.07 -1.16 2.28q-1.07 -.73 -2.28 -1.16q.73 -1.07 1.16 -2.28z
M52.98 231.5q1.03 .74 2.24 1.14q-.74 1.03 -1.14 2.24q-1.03 -.74 -2.24 -1.14q.74 -1.03 1.14 -2.24z
M55.01 237.74q1.01 .73 2.19 1.12q-.73 1.01 -1.12 2.19q-1.01 -.73 -2.19 -1.12q.73 -1.01 1.12 -2.19z
M57.02 243.94q1.01 .74 2.19 1.12q-.74 1.01 -1.12 2.19q-1.01 -.74 -2.19 -1.12q.74 -1.01 1.12 -2.19z
M59.04 250.14q1 .74 2.19 1.12q-.74 1 -1.12 2.19q-1 -.74 -2.19 -1.12q.74 -1 1.12 -2.19z
M-3.27 37.3q1 .74 2.19 1.11q-.74 1 -1.11 2.19q-1 -.74 -2.19 -1.11q.74 -1 1.11 -2.19z
M-1.25 43.5q1 .74 2.19 1.11q-.74 1 -1.11 2.19q-1 -.74 -2.19 -1.11q.74 -1 1.11 -2.19z
M.76 49.7q1 .74 2.19 1.11q-.74 1 -1.11 2.19q-1 -.74 -2.19 -1.11q.74 -1 1.11 -2.19z
M2.78 55.9q1 .74 2.19 1.12q-.74 1 -1.12 2.19q-1 -.74 -2.19 -1.12q.74 -1 1.12 -2.19z
M4.79 62.1q1 .74 2.19 1.12q-.74 1 -1.12 2.19q-1 -.74 -2.19 -1.12q.74 -1 1.12 -2.19z
M6.81 68.3q1 .74 2.19 1.12q-.74 1 -1.12 2.19q-1 -.74 -2.19 -1.12q.74 -1 1.12 -2.19z
M8.82 74.5q1.01 .74 2.19 1.12q-.74 1.01 -1.12 2.19q-1.01 -.74 -2.19 -1.12q.74 -1.01 1.12 -2.19z
M10.83 80.69q1.01 .74 2.2 1.12q-.74 1.01 -1.12 2.2q-1.01 -.74 -2.2 -1.12q.74 -1.01 1.12 -2.2z
M12.84 86.86q1.04 .74 2.25 1.15q-.74 1.04 -1.15 2.25q-1.04 -.74 -2.25 -1.15q.74 -1.04 1.15 -2.25z
M14.84 93.02q1.08 .72 2.3 1.17q-.72 1.08 -1.17 2.3q-1.08 -.72 -2.3 -1.17q.72 -1.08 1.17 -2.3z
M16.84 99.16q1.14 .71 2.38 1.21q-.71 1.14 -1.21 2.38q-1.14 -.71 -2.38 -1.21q.71 -1.14 1.21 -2.38z
M18.83 105.31q1.19 .7 2.45 1.25q-.7 1.19 -1.25 2.45q-1.19 -.7 -2.45 -1.25q.7 -1.19 1.25 -2.45z
M20.83 111.45q1.24 .69 2.53 1.29q-.69 1.24 -1.29 2.53q-1.24 -.69 -2.53 -1.29q.69 -1.24 1.29 -2.53z
M22.82 117.58q1.3 .68 2.62 1.33q-.68 1.3 -1.33 2.62q-1.3 -.68 -2.62 -1.33q.68 -1.3 1.33 -2.62z
M24.82 123.72q1.35 .69 2.7 1.37q-.69 1.35 -1.37 2.7q-1.35 -.69 -2.7 -1.37q.69 -1.35 1.37 -2.7z
M26.81 129.87q1.38 .71 2.77 1.41q-.71 1.38 -1.41 2.77q-1.38 -.71 -2.77 -1.41q.71 -1.38 1.41 -2.77z
M28.81 136.03q1.41 .72 2.83 1.44q-.72 1.41 -1.44 2.83q-1.41 -.72 -2.83 -1.44q.72 -1.41 1.44 -2.83z
M30.82 142.19q1.44 .73 2.88 1.47q-.73 1.44 -1.47 2.88q-1.44 -.73 -2.88 -1.47q.73 -1.44 1.47 -2.88z
M32.82 148.36q1.46 .75 2.93 1.49q-.75 1.46 -1.49 2.93q-1.46 -.75 -2.93 -1.49q.75 -1.46 1.49 -2.93z
M34.83 154.54q1.47 .75 2.95 1.5q-.75 1.47 -1.5 2.95q-1.47 -.75 -2.95 -1.5q.75 -1.47 1.5 -2.95z
M36.84 160.73q1.48 .75 2.96 1.51q-.75 1.48 -1.51 2.96q-1.48 -.75 -2.96 -1.51q.75 -1.48 1.51 -2.96z
M38.86 166.94q1.47 .75 2.95 1.5q-.75 1.47 -1.5 2.95q-1.47 -.75 -2.95 -1.5q.75 -1.47 1.5 -2.95z
M40.88 173.16q1.46 .74 2.92 1.49q-.74 1.46 -1.49 2.92q-1.46 -.74 -2.92 -1.49q.74 -1.46 1.49 -2.92z
M42.91 179.4q1.44 .73 2.88 1.47q-.73 1.44 -1.47 2.88q-1.44 -.73 -2.88 -1.47q.73 -1.44 1.47 -2.88z
M44.93 185.64q1.41 .72 2.82 1.44q-.72 1.41 -1.44 2.82q-1.41 -.72 -2.82 -1.44q.72 -1.41 1.44 -2.82z
M46.96 191.89q1.38 .7 2.76 1.41q-.7 1.38 -1.41 2.76q-1.38 -.7 -2.76 -1.41q.7 -1.38 1.41 -2.76z
M49 198.14q1.34 .69 2.69 1.37q-.69 1.34 -1.37 2.69q-1.34 -.69 -2.69 -1.37q.69 -1.34 1.37 -2.69z
M51.03 204.4q1.29 .68 2.61 1.33q-.68 1.29 -1.33 2.61q-1.29 -.68 -2.61 -1.33q.68 -1.29 1.33 -2.61z
M53.07 210.67q1.24 .69 2.52 1.28q-.69 1.24 -1.28 2.52q-1.24 -.69 -2.52 -1.28q.69 -1.24 1.28 -2.52z
M55.1 216.93q1.18 .7 2.45 1.25q-.7 1.18 -1.25 2.45q-1.18 -.7 -2.45 -1.25q.7 -1.18 1.25 -2.45z
M57.13 223.19q1.13 .71 2.37 1.21q-.71 1.13 -1.21 2.37q-1.13 -.71 -2.37 -1.21q.71 -1.13 1.21 -2.37z
M59.17 229.44q1.08 .72 2.3 1.17q-.72 1.08 -1.17 2.3q-1.08 -.72 -2.3 -1.17q.72 -1.08 1.17 -2.3z
M61.19 235.68q1.04 .74 2.25 1.14q-.74 1.04 -1.14 2.25q-1.04 -.74 -2.25 -1.14q.74 -1.04 1.14 -2.25z
M63.22 241.92q1.01 .74 2.2 1.12q-.74 1.01 -1.12 2.2q-1.01 -.74 -2.2 -1.12q.74 -1.01 1.12 -2.2z
M65.24 248.13q1.01 .74 2.19 1.12q-.74 1.01 -1.12 2.19q-1.01 -.74 -2.19 -1.12q.74 -1.01 1.12 -2.19z
M-3.11 16.68q1 .74 2.19 1.11q-.74 1 -1.11 2.19q-1 -.74 -2.19 -1.11q.74 -1 1.11 -2.19z
M-1.09 22.88q1 .74 2.19 1.11q-.74 1 -1.11 2.19q-1 -.74 -2.19 -1.11q.74 -1 1.11 -2.19z
M.92 29.08q1 .74 2.19 1.11q-.74 1 -1.11 2.19q-1 -.74 -2.19 -1.11q.74 -1 1.11 -2.19z
M2.94 35.28q1 .74 2.19 1.11q-.74 1 -1.11 2.19q-1 -.74 -2.19 -1.11q.74 -1 1.11 -2.19z
M4.95 41.48q1 .74 2.19 1.11q-.74 1 -1.11 2.19q-1 -.74 -2.19 -1.11q.74 -1 1.11 -2.19z
M6.96 47.68q1 .74 2.19 1.12q-.74 1 -1.12 2.19q-1 -.74 -2.19 -1.12q.74 -1 1.12 -2.19z
M8.98 53.88q1 .74 2.19 1.12q-.74 1 -1.12 2.19q-1 -.74 -2.19 -1.12q.74 -1 1.12 -2.19z
M10.99 60.08q1 .74 2.19 1.12q-.74 1 -1.12 2.19q-1 -.74 -2.19 -1.12q.74 -1 1.12 -2.19z
M13.01 66.28q1.01 .74 2.19 1.12q-.74 1.01 -1.12 2.19q-1.01 -.74 -2.19 -1.12q.74 -1.01 1.12 -2.19z
M15.02 72.48q1.01 .74 2.2 1.12q-.74 1.01 -1.12 2.2q-1.01 -.74 -2.2 -1.12q.74 -1.01 1.12 -2.2z
M17.02 78.64q1.05 .73 2.26 1.15q-.73 1.05 -1.15 2.26q-1.05 -.73 -2.26 -1.15q.73 -1.05 1.15 -2.26z
M19.02 84.8q1.09 .71 2.31 1.18q-.71 1.09 -1.18 2.31q-1.09 -.71 -2.31 -1.18q.71 -1.09 1.18 -2.31z
M21.02 90.93q1.15 .7 2.4 1.22q-.7 1.15 -1.22 2.4q-1.15 -.7 -2.4 -1.22q.7 -1.15 1.22 -2.4z
M23.01 97.07q1.21 .69 2.49 1.27q-.69 1.21 -1.27 2.49q-1.21 -.69 -2.49 -1.27q.69 -1.21 1.27 -2.49z
M25 103.19q1.28 .68 2.59 1.32q-.68 1.28 -1.32 2.59q-1.28 -.68 -2.59 -1.32q.68 -1.28 1.32 -2.59z
M26.99 109.31q1.35 .69 2.69 1.37q-.69 1.35 -1.37 2.69q-1.35 -.69 -2.69 -1.37q.69 -1.35 1.37 -2.69z
M28.98 115.44q1.39 .71 2.79 1.42q-.71 1.39 -1.42 2.79q-1.39 -.71 -2.79 -1.42q.71 -1.39 1.42 -2.79z
M30.97 121.57q1.44 .74 2.89 1.47q-.74 1.44 -1.47 2.89q-1.44 -.74 -2.89 -1.47q.74 -1.44 1.47 -2.89z
M32.96 127.7q1.49 .76 2.98 1.52q-.76 1.49 -1.52 2.98q-1.49 -.76 -2.98 -1.52q.76 -1.49 1.52 -2.98z
M35.03 134.07q1.38 .7 2.75 1.4q-.7 1.38 -1.4 2.75q-1.38 -.7 -2.75 -1.4q.7 -1.38 1.4 -2.75z
M37.67 142.2q.1 .05 .2 .1q-.05 .1 -.1 .2q-.1 -.05 -.2 -.1q.05 -.1 .1 -.2z
M49.7 179.21q.23 .12 .45 .23q-.12 .23 -.23 .45q-.23 -.12 -.45 -.23q.12 -.23 .23 -.45z
M51.08 183.46q1.52 .78 3.05 1.55q-.78 1.52 -1.55 3.05q-1.52 -.78 -3.05 -1.55q.78 -1.52 1.55 -3.05z
M53.11 189.72q1.48 .76 2.97 1.51q-.76 1.48 -1.51 2.97q-1.48 -.76 -2.97 -1.51q.76 -1.48 1.51 -2.97z
M55.15 195.99q1.44 .73 2.88 1.47q-.73 1.44 -1.47 2.88q-1.44 -.73 -2.88 -1.47q.73 -1.44 1.47 -2.88z
M57.19 202.26q1.39 .71 2.78 1.42q-.71 1.39 -1.42 2.78q-1.39 -.71 -2.78 -1.42q.71 -1.39 1.42 -2.78z
M59.23 208.54q1.34 .68 2.68 1.37q-.68 1.34 -1.37 2.68q-1.34 -.68 -2.68 -1.37q.68 -1.34 1.37 -2.68z
M61.27 214.82q1.27 .69 2.58 1.31q-.69 1.27 -1.31 2.58q-1.27 -.69 -2.58 -1.31q.69 -1.27 1.31 -2.58z
M63.31 221.09q1.21 .69 2.48 1.26q-.69 1.21 -1.26 2.48q-1.21 -.69 -2.48 -1.26q.69 -1.21 1.26 -2.48z
M65.34 227.36q1.15 .71 2.39 1.22q-.71 1.15 -1.22 2.39q-1.15 -.71 -2.39 -1.22q.71 -1.15 1.22 -2.39z
M67.38 233.62q1.09 .72 2.3 1.17q-.72 1.09 -1.17 2.3q-1.09 -.72 -2.3 -1.17q.72 -1.09 1.17 -2.3z
M69.41 239.86q1.04 .74 2.25 1.15q-.74 1.04 -1.15 2.25q-1.04 -.74 -2.25 -1.15q.74 -1.04 1.15 -2.25z
M71.44 246.11q1.01 .74 2.2 1.12q-.74 1.01 -1.12 2.2q-1.01 -.74 -2.2 -1.12q.74 -1.01 1.12 -2.2z
M-2.95 -3.93q.99 .75 2.18 1.11q-.75 .99 -1.11 2.18q-.99 -.75 -2.18 -1.11q.75 -.99 1.11 -2.18z
M-.94 2.27q1 .75 2.18 1.11q-.75 1 -1.11 2.18q-1 -.75 -2.18 -1.11q.75 -1 1.11 -2.18z
M1.08 8.47q1 .74 2.18 1.11q-.74 1 -1.11 2.18q-1 -.74 -2.18 -1.11q.74 -1 1.11 -2.18z
M3.09 14.67q1 .74 2.19 1.11q-.74 1 -1.11 2.19q-1 -.74 -2.19 -1.11q.74 -1 1.11 -2.19z
M5.11 20.87q1 .74 2.19 1.11q-.74 1 -1.11 2.19q-1 -.74 -2.19 -1.11q.74 -1 1.11 -2.19z
M7.12 27.07q1 .74 2.19 1.11q-.74 1 -1.11 2.19q-1 -.74 -2.19 -1.11q.74 -1 1.11 -2.19z
M9.14 33.27q1 .74 2.19 1.11q-.74 1 -1.11 2.19q-1 -.74 -2.19 -1.11q.74 -1 1.11 -2.19z
M11.15 39.47q1 .74 2.19 1.12q-.74 1 -1.12 2.19q-1 -.74 -2.19 -1.12q.74 -1 1.12 -2.19z
M13.17 45.67q1 .74 2.19 1.12q-.74 1 -1.12 2.19q-1 -.74 -2.19 -1.12q.74 -1 1.12 -2.19z
M15.18 51.87q1 .74 2.19 1.12q-.74 1 -1.12 2.19q-1 -.74 -2.19 -1.12q.74 -1 1.12 -2.19z
M17.19 58.07q1.01 .74 2.19 1.12q-.74 1.01 -1.12 2.19q-1.01 -.74 -2.19 -1.12q.74 -1.01 1.12 -2.19z
M19.21 64.27q1.01 .74 2.19 1.12q-.74 1.01 -1.12 2.19q-1.01 -.74 -2.19 -1.12q.74 -1.01 1.12 -2.19z
M21.21 70.42q1.04 .74 2.25 1.15q-.74 1.04 -1.15 2.25q-1.04 -.74 -2.25 -1.15q.74 -1.04 1.15 -2.25z
M23.21 76.58q1.09 .71 2.31 1.18q-.71 1.09 -1.18 2.31q-1.09 -.71 -2.31 -1.18q.71 -1.09 1.18 -2.31z
M25.2 82.71q1.16 .7 2.41 1.23q-.7 1.16 -1.23 2.41q-1.16 -.7 -2.41 -1.23q.7 -1.16 1.23 -2.41z
M27.19 88.84q1.23 .69 2.51 1.28q-.69 1.23 -1.28 2.51q-1.23 -.69 -2.51 -1.28q.69 -1.23 1.28 -2.51z
M29.18 94.95q1.31 .68 2.63 1.34q-.68 1.31 -1.34 2.63q-1.31 -.68 -2.63 -1.34q.68 -1.31 1.34 -2.63z
M31.16 101.06q1.37 .7 2.74 1.4q-.7 1.37 -1.4 2.74q-1.37 -.7 -2.74 -1.4q.7 -1.37 1.4 -2.74z
M33.15 107.17q1.43 .73 2.86 1.46q-.73 1.43 -1.46 2.86q-1.43 -.73 -2.86 -1.46q.73 -1.43 1.46 -2.86z
M35.13 113.28q1.49 .76 2.99 1.52q-.76 1.49 -1.52 2.99q-1.49 -.76 -2.99 -1.52q.76 -1.49 1.52 -2.99z
M37.67 121.09q.43 .22 .86 .44q-.22 .43 -.44 .86q-.43 -.22 -.86 -.44q.22 -.43 .44 -.86z
M61.73 195.12q.68 .34 1.35 .69q-.34 .68 -.69 1.35q-.68 -.34 -1.35 -.69q.34 -.68 .69 -1.35z
M63.34 200.1q1.49 .76 2.97 1.52q-.76 1.49 -1.52 2.97q-1.49 -.76 -2.97 -1.52q.76 -1.49 1.52 -2.97z
M65.39 206.39q1.42 .73 2.85 1.45q-.73 1.42 -1.45 2.85q-1.42 -.73 -2.85 -1.45q.73 -1.42 1.45 -2.85z
M67.43 212.68q1.37 .7 2.73 1.39q-.7 1.37 -1.39 2.73q-1.37 -.7 -2.73 -1.39q.7 -1.37 1.39 -2.73z
M69.48 218.97q1.3 .68 2.61 1.33q-.68 1.3 -1.33 2.61q-1.3 -.68 -2.61 -1.33q.68 -1.3 1.33 -2.61z
M71.52 225.26q1.22 .69 2.49 1.27q-.69 1.22 -1.27 2.49q-1.22 -.69 -2.49 -1.27q.69 -1.22 1.27 -2.49z
M73.56 231.54q1.15 .7 2.4 1.22q-.7 1.15 -1.22 2.4q-1.15 -.7 -2.4 -1.22q.7 -1.15 1.22 -2.4z
M75.6 237.81q1.09 .72 2.3 1.17q-.72 1.09 -1.17 2.3q-1.09 -.72 -2.3 -1.17q.72 -1.09 1.17 -2.3z
M77.63 244.05q1.04 .74 2.25 1.14q-.74 1.04 -1.14 2.25q-1.04 -.74 -2.25 -1.14q.74 -1.04 1.14 -2.25z
M5.26 .25q1 .74 2.18 1.11q-.74 1 -1.11 2.18q-1 -.74 -2.18 -1.11q.74 -1 1.11 -2.18z
M7.28 6.45q1 .74 2.19 1.11q-.74 1 -1.11 2.19q-1 -.74 -2.19 -1.11q.74 -1 1.11 -2.19z
M9.29 12.65q1 .74 2.19 1.11q-.74 1 -1.11 2.19q-1 -.74 -2.19 -1.11q.74 -1 1.11 -2.19z
M11.31 18.85q1 .74 2.19 1.11q-.74 1 -1.11 2.19q-1 -.74 -2.19 -1.11q.74 -1 1.11 -2.19z
M13.32 25.05q1 .74 2.19 1.11q-.74 1 -1.11 2.19q-1 -.74 -2.19 -1.11q.74 -1 1.11 -2.19z
M15.34 31.25q1 .74 2.19 1.11q-.74 1 -1.11 2.19q-1 -.74 -2.19 -1.11q.74 -1 1.11 -2.19z
M17.35 37.45q1 .74 2.19 1.12q-.74 1 -1.12 2.19q-1 -.74 -2.19 -1.12q.74 -1 1.12 -2.19z
M19.37 43.65q1 .74 2.19 1.12q-.74 1 -1.12 2.19q-1 -.74 -2.19 -1.12q.74 -1 1.12 -2.19z
M21.38 49.85q1 .74 2.19 1.12q-.74 1 -1.12 2.19q-1 -.74 -2.19 -1.12q.74 -1 1.12 -2.19z
M23.4 56.05q1.01 .73 2.19 1.12q-.73 1.01 -1.12 2.19q-1.01 -.73 -2.19 -1.12q.73 -1.01 1.12 -2.19z
M25.4 62.22q1.03 .74 2.24 1.14q-.74 1.03 -1.14 2.24q-1.03 -.74 -2.24 -1.14q.74 -1.03 1.14 -2.24z
M27.4 68.37q1.08 .72 2.3 1.17q-.72 1.08 -1.17 2.3q-1.08 -.72 -2.3 -1.17q.72 -1.08 1.17 -2.3z
M29.39 74.5q1.15 .7 2.4 1.22q-.7 1.15 -1.22 2.4q-1.15 -.7 -2.4 -1.22q.7 -1.15 1.22 -2.4z
M31.38 80.62q1.23 .69 2.51 1.28q-.69 1.23 -1.28 2.51q-1.23 -.69 -2.51 -1.28q.69 -1.23 1.28 -2.51z
M33.36 86.72q1.31 .68 2.64 1.34q-.68 1.31 -1.34 2.64q-1.31 -.68 -2.64 -1.34q.68 -1.31 1.34 -2.64z
M35.34 92.82q1.38 .71 2.77 1.41q-.71 1.38 -1.41 2.77q-1.38 -.71 -2.77 -1.41q.71 -1.38 1.41 -2.77z
M37.32 98.92q1.46 .74 2.91 1.48q-.74 1.46 -1.48 2.91q-1.46 -.74 -2.91 -1.48q.74 -1.46 1.48 -2.91z
M39.4 105.31q1.33 .68 2.65 1.35q-.68 1.33 -1.35 2.65q-1.33 -.68 -2.65 -1.35q.68 -1.33 1.35 -2.65z
M71.54 204.23q1.52 .77 3.04 1.55q-.77 1.52 -1.55 3.04q-1.52 -.77 -3.04 -1.55q.77 -1.52 1.55 -3.04z
M73.59 210.54q1.45 .74 2.9 1.48q-.74 1.45 -1.48 2.9q-1.45 -.74 -2.9 -1.48q.74 -1.45 1.48 -2.9z
M75.64 216.85q1.38 .7 2.75 1.4q-.7 1.38 -1.4 2.75q-1.38 -.7 -2.75 -1.4q.7 -1.38 1.4 -2.75z
M77.69 223.15q1.3 .68 2.62 1.34q-.68 1.3 -1.34 2.62q-1.3 -.68 -2.62 -1.34q.68 -1.3 1.34 -2.62z
M79.74 229.45q1.22 .69 2.49 1.27q-.69 1.22 -1.27 2.49q-1.22 -.69 -2.49 -1.27q.69 -1.22 1.27 -2.49z
M81.78 235.73q1.15 .71 2.39 1.22q-.71 1.15 -1.22 2.39q-1.15 -.71 -2.39 -1.22q.71 -1.15 1.22 -2.39z
M83.81 242q1.08 .72 2.29 1.17q-.72 1.08 -1.17 2.29q-1.08 -.72 -2.29 -1.17q.72 -1.08 1.17 -2.29z
M85.84 248.25q1.03 .74 2.23 1.14q-.74 1.03 -1.14 2.23q-1.03 -.74 -2.23 -1.14q.74 -1.03 1.14 -2.23z
M11.47 -1.76q1 .74 2.18 1.11q-.74 1 -1.11 2.18q-1 -.74 -2.18 -1.11q.74 -1 1.11 -2.18z
M13.48 4.44q1 .74 2.19 1.11q-.74 1 -1.11 2.19q-1 -.74 -2.19 -1.11q.74 -1 1.11 -2.19z
M15.49 10.64q1 .74 2.19 1.11q-.74 1 -1.11 2.19q-1 -.74 -2.19 -1.11q.74 -1 1.11 -2.19z
M17.51 16.84q1 .74 2.19 1.11q-.74 1 -1.11 2.19q-1 -.74 -2.19 -1.11q.74 -1 1.11 -2.19z
M19.52 23.04q1 .74 2.19 1.11q-.74 1 -1.11 2.19q-1 -.74 -2.19 -1.11q.74 -1 1.11 -2.19z
M21.54 29.24q1 .74 2.19 1.12q-.74 1 -1.12 2.19q-1 -.74 -2.19 -1.12q.74 -1 1.12 -2.19z
M23.55 35.44q1 .74 2.19 1.12q-.74 1 -1.12 2.19q-1 -.74 -2.19 -1.12q.74 -1 1.12 -2.19z
M25.57 41.64q1 .74 2.19 1.12q-.74 1 -1.12 2.19q-1 -.74 -2.19 -1.12q.74 -1 1.12 -2.19z
M27.58 47.84q1.01 .73 2.19 1.12q-.73 1.01 -1.12 2.19q-1.01 -.73 -2.19 -1.12q.73 -1.01 1.12 -2.19z
M29.59 54.02q1.02 .74 2.22 1.13q-.74 1.02 -1.13 2.22q-1.02 -.74 -2.22 -1.13q.74 -1.02 1.13 -2.22z
M31.59 60.17q1.07 .72 2.28 1.16q-.72 1.07 -1.16 2.28q-1.07 -.72 -2.28 -1.16q.72 -1.07 1.16 -2.28z
M33.58 66.3q1.14 .71 2.38 1.21q-.71 1.14 -1.21 2.38q-1.14 -.71 -2.38 -1.21q.71 -1.14 1.21 -2.38z
M35.57 72.42q1.21 .69 2.49 1.27q-.69 1.21 -1.27 2.49q-1.21 -.69 -2.49 -1.27q.69 -1.21 1.27 -2.49z
M37.55 78.52q1.31 .68 2.63 1.34q-.68 1.31 -1.34 2.63q-1.31 -.68 -2.63 -1.34q.68 -1.31 1.34 -2.63z
M39.53 84.61q1.38 .71 2.77 1.41q-.71 1.38 -1.41 2.77q-1.38 -.71 -2.77 -1.41q.71 -1.38 1.41 -2.77z
M41.5 90.69q1.46 .75 2.93 1.49q-.75 1.46 -1.49 2.93q-1.46 -.75 -2.93 -1.49q.75 -1.46 1.49 -2.93z
M43.95 98.22q.58 .3 1.17 .59q-.3 .58 -.59 1.17q-.58 -.3 -1.17 -.59q.3 -.58 .59 -1.17z
M80.04 209.27q.95 .49 1.91 .97q-.49 .95 -.97 1.91q-.95 -.49 -1.91 -.97q.49 -.95 .97 -1.91z
M81.8 214.72q1.46 .74 2.91 1.48q-.74 1.46 -1.48 2.91q-1.46 -.74 -2.91 -1.48q.74 -1.46 1.48 -2.91z
M83.86 221.04q1.38 .7 2.75 1.4q-.7 1.38 -1.4 2.75q-1.38 -.7 -2.75 -1.4q.7 -1.38 1.4 -2.75z
M85.91 227.35q1.3 .68 2.61 1.33q-.68 1.3 -1.33 2.61q-1.3 -.68 -2.61 -1.33q.68 -1.3 1.33 -2.61z
M87.96 233.65q1.21 .69 2.48 1.26q-.69 1.21 -1.26 2.48q-1.21 -.69 -2.48 -1.26q.69 -1.21 1.26 -2.48z
M90 239.93q1.13 .71 2.37 1.21q-.71 1.13 -1.21 2.37q-1.13 -.71 -2.37 -1.21q.71 -1.13 1.21 -2.37z
M92.03 246.2q1.06 .73 2.28 1.16q-.73 1.06 -1.16 2.28q-1.06 -.73 -2.28 -1.16q.73 -1.06 1.16 -2.28z
M17.67 -3.78q1 .74 2.18 1.11q-.74 1 -1.11 2.18q-1 -.74 -2.18 -1.11q.74 -1 1.11 -2.18z
M19.68 2.42q1 .74 2.19 1.11q-.74 1 -1.11 2.19q-1 -.74 -2.19 -1.11q.74 -1 1.11 -2.19z
M21.7 8.62q1 .74 2.19 1.11q-.74 1 -1.11 2.19q-1 -.74 -2.19 -1.11q.74 -1 1.11 -2.19z
M23.71 14.82q1 .74 2.19 1.11q-.74 1 -1.11 2.19q-1 -.74 -2.19 -1.11q.74 -1 1.11 -2.19z
M25.72 21.02q1 .74 2.19 1.11q-.74 1 -1.11 2.19q-1 -.74 -2.19 -1.11q.74 -1 1.11 -2.19z
M27.74 27.22q1 .74 2.19 1.12q-.74 1 -1.12 2.19q-1 -.74 -2.19 -1.12q.74 -1 1.12 -2.19z
M29.75 33.42q1 .74 2.19 1.12q-.74 1 -1.12 2.19q-1 -.74 -2.19 -1.12q.74 -1 1.12 -2.19z
M31.77 39.62q1 .74 2.19 1.12q-.74 1 -1.12 2.19q-1 -.74 -2.19 -1.12q.74 -1 1.12 -2.19z
M33.78 45.82q1.01 .73 2.19 1.12q-.73 1.01 -1.12 2.19q-1.01 -.73 -2.19 -1.12q.73 -1.01 1.12 -2.19z
M35.78 51.97q1.05 .73 2.26 1.15q-.73 1.05 -1.15 2.26q-1.05 -.73 -2.26 -1.15q.73 -1.05 1.15 -2.26z
M37.78 58.11q1.11 .71 2.34 1.19q-.71 1.11 -1.19 2.34q-1.11 -.71 -2.34 -1.19q.71 -1.11 1.19 -2.34z
M39.76 64.23q1.19 .7 2.46 1.25q-.7 1.19 -1.25 2.46q-1.19 -.7 -2.46 -1.25q.7 -1.19 1.25 -2.46z
M41.74 70.33q1.28 .68 2.59 1.32q-.68 1.28 -1.32 2.59q-1.28 -.68 -2.59 -1.32q.68 -1.28 1.32 -2.59z
M43.72 76.41q1.37 .7 2.74 1.4q-.7 1.37 -1.4 2.74q-1.37 -.7 -2.74 -1.4q.7 -1.37 1.4 -2.74z
M45.69 82.48q1.46 .74 2.91 1.48q-.74 1.46 -1.48 2.91q-1.46 -.74 -2.91 -1.48q.74 -1.46 1.48 -2.91z
M48.14 90.01q.58 .29 1.16 .59q-.29 .58 -.59 1.16q-.58 -.29 -1.16 -.59q.29 -.58 .59 -1.16z
M88.23 213.4q.99 .51 1.98 1.01q-.51 .99 -1.01 1.98q-.99 -.51 -1.98 -1.01q.51 -.99 1.01 -1.98z
M90.02 218.92q1.45 .74 2.89 1.47q-.74 1.45 -1.47 2.89q-1.45 -.74 -2.89 -1.47q.74 -1.45 1.47 -2.89z
M92.08 225.25q1.36 .69 2.73 1.39q-.69 1.36 -1.39 2.73q-1.36 -.69 -2.73 -1.39q.69 -1.36 1.39 -2.73z
M94.13 231.56q1.27 .69 2.57 1.31q-.69 1.27 -1.31 2.57q-1.27 -.69 -2.57 -1.31q.69 -1.27 1.31 -2.57z
M96.18 237.86q1.18 .7 2.44 1.24q-.7 1.18 -1.24 2.44q-1.18 -.7 -2.44 -1.24q.7 -1.18 1.24 -2.44z
M98.22 244.15q1.1 .71 2.32 1.18q-.71 1.1 -1.18 2.32q-1.1 -.71 -2.32 -1.18q.71 -1.1 1.18 -2.32z
M25.88 .41q1 .74 2.19 1.11q-.74 1 -1.11 2.19q-1 -.74 -2.19 -1.11q.74 -1 1.11 -2.19z
M27.9 6.61q1 .74 2.19 1.11q-.74 1 -1.11 2.19q-1 -.74 -2.19 -1.11q.74 -1 1.11 -2.19z
M29.91 12.81q1 .74 2.19 1.11q-.74 1 -1.11 2.19q-1 -.74 -2.19 -1.11q.74 -1 1.11 -2.19z
M31.93 19.01q1 .74 2.19 1.12q-.74 1 -1.12 2.19q-1 -.74 -2.19 -1.12q.74 -1 1.12 -2.19z
M33.94 25.21q1 .74 2.19 1.12q-.74 1 -1.12 2.19q-1 -.74 -2.19 -1.12q.74 -1 1.12 -2.19z
M35.95 31.41q1 .74 2.19 1.12q-.74 1 -1.12 2.19q-1 -.74 -2.19 -1.12q.74 -1 1.12 -2.19z
M37.97 37.61q1.01 .73 2.19 1.12q-.73 1.01 -1.12 2.19q-1.01 -.73 -2.19 -1.12q.73 -1.01 1.12 -2.19z
M39.98 43.78q1.02 .75 2.23 1.13q-.75 1.02 -1.13 2.23q-1.02 -.75 -2.23 -1.13q.75 -1.02 1.13 -2.23z
M41.97 49.93q1.08 .72 2.29 1.17q-.72 1.08 -1.17 2.29q-1.08 -.72 -2.29 -1.17q.72 -1.08 1.17 -2.29z
M43.96 56.05q1.16 .7 2.41 1.23q-.7 1.16 -1.23 2.41q-1.16 -.7 -2.41 -1.23q.7 -1.16 1.23 -2.41z
M45.95 62.16q1.24 .69 2.53 1.29q-.69 1.24 -1.29 2.53q-1.24 -.69 -2.53 -1.29q.69 -1.24 1.29 -2.53z
M47.92 68.23q1.35 .69 2.69 1.37q-.69 1.35 -1.37 2.69q-1.35 -.69 -2.69 -1.37q.69 -1.35 1.37 -2.69z
M49.89 74.31q1.43 .73 2.86 1.46q-.73 1.43 -1.46 2.86q-1.43 -.73 -2.86 -1.46q.73 -1.43 1.46 -2.86z
M51.97 80.69q1.31 .67 2.62 1.34q-.67 1.31 -1.34 2.62q-1.31 -.67 -2.62 -1.34q.67 -1.31 1.34 -2.62z
M96.19 216.8q1.52 .77 3.04 1.55q-.77 1.52 -1.55 3.04q-1.52 -.77 -3.04 -1.55q.77 -1.52 1.55 -3.04z
M98.25 223.14q1.42 .72 2.84 1.45q-.72 1.42 -1.45 2.84q-1.42 -.72 -2.84 -1.45q.72 -1.42 1.45 -2.84z
M100.31 229.47q1.34 .68 2.68 1.36q-.68 1.34 -1.36 2.68q-1.34 -.68 -2.68 -1.36q.68 -1.34 1.36 -2.68z
M102.36 235.79q1.23 .69 2.51 1.28q-.69 1.23 -1.28 2.51q-1.23 -.69 -2.51 -1.28q.69 -1.23 1.28 -2.51z
M104.41 242.09q1.15 .71 2.39 1.22q-.71 1.15 -1.22 2.39q-1.15 -.71 -2.39 -1.22q.71 -1.15 1.22 -2.39z
M106.45 248.37q1.07 .72 2.29 1.17q-.72 1.07 -1.17 2.29q-1.07 -.72 -2.29 -1.17q.72 -1.07 1.17 -2.29z
M32.08 -1.61q1 .74 2.19 1.11q-.74 1 -1.11 2.19q-1 -.74 -2.19 -1.11q.74 -1 1.11 -2.19z
M34.1 4.59q1 .74 2.19 1.11q-.74 1 -1.11 2.19q-1 -.74 -2.19 -1.11q.74 -1 1.11 -2.19z
M36.11 10.79q1 .74 2.19 1.11q-.74 1 -1.11 2.19q-1 -.74 -2.19 -1.11q.74 -1 1.11 -2.19z
M38.13 16.99q1 .74 2.19 1.12q-.74 1 -1.12 2.19q-1 -.74 -2.19 -1.12q.74 -1 1.12 -2.19z
M40.14 23.19q1 .74 2.19 1.12q-.74 1 -1.12 2.19q-1 -.74 -2.19 -1.12q.74 -1 1.12 -2.19z
M42.16 29.39q1 .74 2.19 1.12q-.74 1 -1.12 2.19q-1 -.74 -2.19 -1.12q.74 -1 1.12 -2.19z
M44.17 35.59q1.01 .73 2.19 1.12q-.73 1.01 -1.12 2.19q-1.01 -.73 -2.19 -1.12q.73 -1.01 1.12 -2.19z
M46.17 41.74q1.05 .73 2.26 1.15q-.73 1.05 -1.15 2.26q-1.05 -.73 -2.26 -1.15q.73 -1.05 1.15 -2.26z
M48.16 47.88q1.11 .71 2.34 1.19q-.71 1.11 -1.19 2.34q-1.11 -.71 -2.34 -1.19q.71 -1.11 1.19 -2.34z
M50.15 53.99q1.2 .7 2.47 1.26q-.7 1.2 -1.26 2.47q-1.2 -.7 -2.47 -1.26q.7 -1.2 1.26 -2.47z
M52.12 60.07q1.3 .68 2.62 1.33q-.68 1.3 -1.33 2.62q-1.3 -.68 -2.62 -1.33q.68 -1.3 1.33 -2.62z
M54.1 66.15q1.39 .71 2.79 1.42q-.71 1.39 -1.42 2.79q-1.39 -.71 -2.79 -1.42q.71 -1.39 1.42 -2.79z
M56.06 72.2q1.49 .76 2.99 1.52q-.76 1.49 -1.52 2.99q-1.49 -.76 -2.99 -1.52q.76 -1.49 1.52 -2.99z
M104.42 221.04q1.48 .76 2.97 1.51q-.76 1.48 -1.51 2.97q-1.48 -.76 -2.97 -1.51q.76 -1.48 1.51 -2.97z
M106.49 227.38q1.38 .71 2.77 1.41q-.71 1.38 -1.41 2.77q-1.38 -.71 -2.77 -1.41q.71 -1.38 1.41 -2.77z
M108.54 233.71q1.29 .68 2.6 1.32q-.68 1.29 -1.32 2.6q-1.29 -.68 -2.6 -1.32q.68 -1.29 1.32 -2.6z
M110.59 240.02q1.19 .7 2.45 1.25q-.7 1.19 -1.25 2.45q-1.19 -.7 -2.45 -1.25q.7 -1.19 1.25 -2.45z
M112.64 246.32q1.1 .71 2.33 1.19q-.71 1.1 -1.19 2.33q-1.1 -.71 -2.33 -1.19q.71 -1.1 1.19 -2.33z
M38.28 -3.62q1 .74 2.19 1.11q-.74 1 -1.11 2.19q-1 -.74 -2.19 -1.11q.74 -1 1.11 -2.19z
M40.3 2.58q1 .74 2.19 1.11q-.74 1 -1.11 2.19q-1 -.74 -2.19 -1.11q.74 -1 1.11 -2.19z
M42.31 8.78q1 .74 2.19 1.11q-.74 1 -1.11 2.19q-1 -.74 -2.19 -1.11q.74 -1 1.11 -2.19z
M44.33 14.98q1 .74 2.19 1.12q-.74 1 -1.12 2.19q-1 -.74 -2.19 -1.12q.74 -1 1.12 -2.19z
M46.34 21.18q1 .74 2.19 1.12q-.74 1 -1.12 2.19q-1 -.74 -2.19 -1.12q.74 -1 1.12 -2.19z
M48.36 27.38q1.01 .74 2.19 1.12q-.74 1.01 -1.12 2.19q-1.01 -.74 -2.19 -1.12q.74 -1.01 1.12 -2.19z
M50.37 33.56q1.02 .74 2.21 1.13q-.74 1.02 -1.13 2.21q-1.02 -.74 -2.21 -1.13q.74 -1.02 1.13 -2.21z
M52.36 39.71q1.07 .72 2.28 1.16q-.72 1.07 -1.16 2.28q-1.07 -.72 -2.28 -1.16q.72 -1.07 1.16 -2.28z
M54.35 45.83q1.15 .71 2.39 1.22q-.71 1.15 -1.22 2.39q-1.15 -.71 -2.39 -1.22q.71 -1.15 1.22 -2.39z
M56.33 51.93q1.24 .69 2.52 1.29q-.69 1.24 -1.29 2.52q-1.24 -.69 -2.52 -1.29q.69 -1.24 1.29 -2.52z
M58.31 58q1.35 .69 2.7 1.38q-.69 1.35 -1.38 2.7q-1.35 -.69 -2.7 -1.38q.69 -1.35 1.38 -2.7z
M60.27 64.06q1.44 .74 2.89 1.47q-.74 1.44 -1.47 2.89q-1.44 -.74 -2.89 -1.47q.74 -1.44 1.47 -2.89z
M62.8 71.84q.4 .2 .8 .41q-.2 .4 -.41 .8q-.4 -.2 -.8 -.41q.2 -.4 .41 -.8z
M110.91 219.91q.9 .46 1.79 .91q-.46 .9 -.91 1.79q-.9 -.46 -1.79 -.91q.46 -.9 .91 -1.79z
M112.66 225.3q1.43 .73 2.86 1.46q-.73 1.43 -1.46 2.86q-1.43 -.73 -2.86 -1.46q.73 -1.43 1.46 -2.86z
M114.72 231.64q1.34 .68 2.68 1.37q-.68 1.34 -1.37 2.68q-1.34 -.68 -2.68 -1.37q.68 -1.34 1.37 -2.68z
M116.78 237.97q1.23 .69 2.51 1.28q-.69 1.23 -1.28 2.51q-1.23 -.69 -2.51 -1.28q.69 -1.23 1.28 -2.51z
M118.83 244.27q1.14 .71 2.38 1.21q-.71 1.14 -1.21 2.38q-1.14 -.71 -2.38 -1.21q.71 -1.14 1.21 -2.38z
M46.5 .56q1 .74 2.19 1.11q-.74 1 -1.11 2.19q-1 -.74 -2.19 -1.11q.74 -1 1.11 -2.19z
M48.51 6.76q1 .74 2.19 1.12q-.74 1 -1.12 2.19q-1 -.74 -2.19 -1.12q.74 -1 1.12 -2.19z
M50.53 12.96q1 .74 2.19 1.12q-.74 1 -1.12 2.19q-1 -.74 -2.19 -1.12q.74 -1 1.12 -2.19z
M52.54 19.16q1 .74 2.19 1.12q-.74 1 -1.12 2.19q-1 -.74 -2.19 -1.12q.74 -1 1.12 -2.19z
M54.56 25.36q1.01 .73 2.19 1.12q-.73 1.01 -1.12 2.19q-1.01 -.73 -2.19 -1.12q.73 -1.01 1.12 -2.19z
M56.56 31.53q1.03 .74 2.23 1.14q-.74 1.03 -1.14 2.23q-1.03 -.74 -2.23 -1.14q.74 -1.03 1.14 -2.23z
M58.56 37.68q1.09 .71 2.31 1.18q-.71 1.09 -1.18 2.31q-1.09 -.71 -2.31 -1.18q.71 -1.09 1.18 -2.31z
M60.54 43.78q1.18 .7 2.44 1.24q-.7 1.18 -1.24 2.44q-1.18 -.7 -2.44 -1.24q.7 -1.18 1.24 -2.44z
M62.52 49.87q1.28 .68 2.59 1.32q-.68 1.28 -1.32 2.59q-1.28 -.68 -2.59 -1.32q.68 -1.28 1.32 -2.59z
M64.49 55.93q1.38 .71 2.77 1.41q-.71 1.38 -1.41 2.77q-1.38 -.71 -2.77 -1.41q.71 -1.38 1.41 -2.77z
M66.45 61.97q1.49 .76 2.98 1.52q-.76 1.49 -1.52 2.98q-1.49 -.76 -2.98 -1.52q.76 -1.49 1.52 -2.98z
M118.84 223.21q1.48 .75 2.95 1.51q-.75 1.48 -1.51 2.95q-1.48 -.75 -2.95 -1.51q.75 -1.48 1.51 -2.95z
M120.91 229.57q1.37 .7 2.75 1.4q-.7 1.37 -1.4 2.75q-1.37 -.7 -2.75 -1.4q.7 -1.37 1.4 -2.75z
M122.97 235.91q1.27 .69 2.57 1.31q-.69 1.27 -1.31 2.57q-1.27 -.69 -2.57 -1.31q.69 -1.27 1.31 -2.57z
M125.02 242.22q1.17 .7 2.42 1.23q-.7 1.17 -1.23 2.42q-1.17 -.7 -2.42 -1.23q.7 -1.17 1.23 -2.42z
M127.06 248.51q1.08 .72 2.3 1.17q-.72 1.08 -1.17 2.3q-1.08 -.72 -2.3 -1.17q.72 -1.08 1.17 -2.3z
M52.7 -1.45q1 .74 2.19 1.11q-.74 1 -1.11 2.19q-1 -.74 -2.19 -1.11q.74 -1 1.11 -2.19z
M54.71 4.75q1 .74 2.19 1.12q-.74 1 -1.12 2.19q-1 -.74 -2.19 -1.12q.74 -1 1.12 -2.19z
M56.73 10.95q1 .74 2.19 1.12q-.74 1 -1.12 2.19q-1 -.74 -2.19 -1.12q.74 -1 1.12 -2.19z
M58.74 17.15q1 .74 2.19 1.12q-.74 1 -1.12 2.19q-1 -.74 -2.19 -1.12q.74 -1 1.12 -2.19z
M60.76 23.35q1.01 .73 2.19 1.12q-.73 1.01 -1.12 2.19q-1.01 -.73 -2.19 -1.12q.73 -1.01 1.12 -2.19z
M62.76 29.5q1.04 .74 2.25 1.15q-.74 1.04 -1.15 2.25q-1.04 -.74 -2.25 -1.15q.74 -1.04 1.15 -2.25z
M64.75 35.64q1.11 .71 2.34 1.19q-.71 1.11 -1.19 2.34q-1.11 -.71 -2.34 -1.19q.71 -1.11 1.19 -2.34z
M66.73 41.74q1.2 .69 2.48 1.26q-.69 1.2 -1.26 2.48q-1.2 -.69 -2.48 -1.26q.69 -1.2 1.26 -2.48z
M68.71 47.81q1.32 .68 2.64 1.35q-.68 1.32 -1.35 2.64q-1.32 -.68 -2.64 -1.35q.68 -1.32 1.35 -2.64z
M70.67 53.87q1.42 .72 2.83 1.44q-.72 1.42 -1.44 2.83q-1.42 -.72 -2.83 -1.44q.72 -1.42 1.44 -2.83z
M72.73 60.19q1.33 .68 2.67 1.36q-.68 1.33 -1.36 2.67q-1.33 -.68 -2.67 -1.36q.68 -1.33 1.36 -2.67z
M125.03 221.14q1.52 .77 3.03 1.54q-.77 1.52 -1.54 3.03q-1.52 -.77 -3.03 -1.54q.77 -1.52 1.54 -3.03z
M127.09 227.51q1.4 .71 2.81 1.43q-.71 1.4 -1.43 2.81q-1.4 -.71 -2.81 -1.43q.71 -1.4 1.43 -2.81z
M129.15 233.85q1.3 .68 2.62 1.34q-.68 1.3 -1.34 2.62q-1.3 -.68 -2.62 -1.34q.68 -1.3 1.34 -2.62z
M131.21 240.18q1.19 .7 2.46 1.25q-.7 1.19 -1.25 2.46q-1.19 -.7 -2.46 -1.25q.7 -1.19 1.25 -2.46z
M133.26 246.48q1.1 .71 2.33 1.19q-.71 1.1 -1.19 2.33q-1.1 -.71 -2.33 -1.19q.71 -1.1 1.19 -2.33z
M58.9 -3.47q1 .74 2.19 1.11q-.74 1 -1.11 2.19q-1 -.74 -2.19 -1.11q.74 -1 1.11 -2.19z
M60.91 2.73q1 .74 2.19 1.12q-.74 1 -1.12 2.19q-1 -.74 -2.19 -1.12q.74 -1 1.12 -2.19z
M62.93 8.93q1 .74 2.19 1.12q-.74 1 -1.12 2.19q-1 -.74 -2.19 -1.12q.74 -1 1.12 -2.19z
M64.94 15.13q1 .74 2.19 1.12q-.74 1 -1.12 2.19q-1 -.74 -2.19 -1.12q.74 -1 1.12 -2.19z
M66.96 21.33q1.01 .73 2.19 1.12q-.73 1.01 -1.12 2.19q-1.01 -.73 -2.19 -1.12q.73 -1.01 1.12 -2.19z
M68.95 27.48q1.06 .73 2.27 1.15q-.73 1.06 -1.15 2.27q-1.06 -.73 -2.27 -1.15q.73 -1.06 1.15 -2.27z
M70.94 33.6q1.13 .71 2.37 1.21q-.71 1.13 -1.21 2.37q-1.13 -.71 -2.37 -1.21q.71 -1.13 1.21 -2.37z
M72.93 39.7q1.23 .69 2.5 1.28q-.69 1.23 -1.28 2.5q-1.23 -.69 -2.5 -1.28q.69 -1.23 1.28 -2.5z
M74.9 45.76q1.34 .68 2.69 1.37q-.68 1.34 -1.37 2.69q-1.34 -.68 -2.69 -1.37q.68 -1.34 1.37 -2.69z
M76.86 51.81q1.44 .74 2.89 1.47q-.74 1.44 -1.47 2.89q-1.44 -.74 -2.89 -1.47q.74 -1.44 1.47 -2.89z
M79.56 60.11q.05 .03 .11 .05q-.03 .05 -.05 .11q-.05 -.03 -.11 -.05q.03 -.05 .05 -.11z
M131.68 220.52q.59 .3 1.19 .61q-.3 .59 -.61 1.19q-.59 -.3 -1.19 -.61q.3 -.59 .61 -1.19z
M133.28 225.46q1.43 .73 2.86 1.46q-.73 1.43 -1.46 2.86q-1.43 -.73 -2.86 -1.46q.73 -1.43 1.46 -2.86z
M135.35 231.81q1.33 .68 2.66 1.36q-.68 1.33 -1.36 2.66q-1.33 -.68 -2.66 -1.36q.68 -1.33 1.36 -2.66z
M137.4 238.14q1.21 .69 2.49 1.27q-.69 1.21 -1.27 2.49q-1.21 -.69 -2.49 -1.27q.69 -1.21 1.27 -2.49z
M139.45 244.44q1.12 .71 2.35 1.2q-.71 1.12 -1.2 2.35q-1.12 -.71 -2.35 -1.2q.71 -1.12 1.2 -2.35z
M67.12 .72q1 .74 2.19 1.12q-.74 1 -1.12 2.19q-1 -.74 -2.19 -1.12q.74 -1 1.12 -2.19z
M69.13 6.92q1 .74 2.19 1.12q-.74 1 -1.12 2.19q-1 -.74 -2.19 -1.12q.74 -1 1.12 -2.19z
M71.14 13.12q1 .74 2.19 1.12q-.74 1 -1.12 2.19q-1 -.74 -2.19 -1.12q.74 -1 1.12 -2.19z
M73.16 19.31q1.01 .74 2.2 1.12q-.74 1.01 -1.12 2.2q-1.01 -.74 -2.2 -1.12q.74 -1.01 1.12 -2.2z
M75.15 25.45q1.06 .73 2.28 1.16q-.73 1.06 -1.16 2.28q-1.06 -.73 -2.28 -1.16q.73 -1.06 1.16 -2.28z
M77.14 31.57q1.14 .71 2.39 1.22q-.71 1.14 -1.22 2.39q-1.14 -.71 -2.39 -1.22q.71 -1.14 1.22 -2.39z
M79.12 37.67q1.24 .69 2.53 1.29q-.69 1.24 -1.29 2.53q-1.24 -.69 -2.53 -1.29q.69 -1.24 1.29 -2.53z
M81.09 43.73q1.36 .69 2.72 1.38q-.69 1.36 -1.38 2.72q-1.36 -.69 -2.72 -1.38q.69 -1.36 1.38 -2.72z
M83.05 49.77q1.46 .75 2.93 1.49q-.75 1.46 -1.49 2.93q-1.46 -.75 -2.93 -1.49q.75 -1.46 1.49 -2.93z
M139.47 223.41q1.45 .74 2.9 1.48q-.74 1.45 -1.48 2.9q-1.45 -.74 -2.9 -1.48q.74 -1.45 1.48 -2.9z
M141.54 229.77q1.35 .69 2.7 1.37q-.69 1.35 -1.37 2.7q-1.35 -.69 -2.7 -1.37q.69 -1.35 1.37 -2.7z
M143.6 236.11q1.23 .69 2.51 1.28q-.69 1.23 -1.28 2.51q-1.23 -.69 -2.51 -1.28q.69 -1.23 1.28 -2.51z
M145.65 242.41q1.13 .71 2.37 1.21q-.71 1.13 -1.21 2.37q-1.13 -.71 -2.37 -1.21q.71 -1.13 1.21 -2.37z
M147.69 248.69q1.06 .73 2.27 1.16q-.73 1.06 -1.16 2.27q-1.06 -.73 -2.27 -1.16q.73 -1.06 1.16 -2.27z
M73.32 -1.3q1 .74 2.19 1.12q-.74 1 -1.12 2.19q-1 -.74 -2.19 -1.12q.74 -1 1.12 -2.19z
M75.33 4.9q1 .74 2.19 1.12q-.74 1 -1.12 2.19q-1 -.74 -2.19 -1.12q.74 -1 1.12 -2.19z
M77.35 11.1q1.01 .74 2.19 1.12q-.74 1.01 -1.12 2.19q-1.01 -.74 -2.19 -1.12q.74 -1.01 1.12 -2.19z
M79.36 17.29q1.01 .74 2.21 1.12q-.74 1.01 -1.12 2.21q-1.01 -.74 -2.21 -1.12q.74 -1.01 1.12 -2.21z
M81.35 23.44q1.07 .72 2.28 1.16q-.72 1.07 -1.16 2.28q-1.07 -.72 -2.28 -1.16q.72 -1.07 1.16 -2.28z
M83.34 29.55q1.15 .7 2.4 1.22q-.7 1.15 -1.22 2.4q-1.15 -.7 -2.4 -1.22q.7 -1.15 1.22 -2.4z
M85.32 35.64q1.25 .69 2.54 1.3q-.69 1.25 -1.3 2.54q-1.25 -.69 -2.54 -1.3q.69 -1.25 1.3 -2.54z
M87.29 41.7q1.37 .7 2.74 1.39q-.7 1.37 -1.39 2.74q-1.37 -.7 -2.74 -1.39q.7 -1.37 1.39 -2.74z
M89.25 47.73q1.48 .75 2.95 1.5q-.75 1.48 -1.5 2.95q-1.48 -.75 -2.95 -1.5q.75 -1.48 1.5 -2.95z
M145.67 221.38q1.46 .75 2.93 1.49q-.75 1.46 -1.49 2.93q-1.46 -.75 -2.93 -1.49q.75 -1.46 1.49 -2.93z
M147.73 227.74q1.36 .69 2.71 1.38q-.69 1.36 -1.38 2.71q-1.36 -.69 -2.71 -1.38q.69 -1.36 1.38 -2.71z
M149.8 234.08q1.24 .69 2.52 1.29q-.69 1.24 -1.29 2.52q-1.24 -.69 -2.52 -1.29q.69 -1.24 1.29 -2.52z
M151.85 240.39q1.14 .71 2.38 1.22q-.71 1.14 -1.22 2.38q-1.14 -.71 -2.38 -1.22q.71 -1.14 1.22 -2.38z
M153.89 246.67q1.06 .73 2.27 1.16q-.73 1.06 -1.16 2.27q-1.06 -.73 -2.27 -1.16q.73 -1.06 1.16 -2.27z
M79.52 -3.31q1 .74 2.19 1.12q-.74 1 -1.12 2.19q-1 -.74 -2.19 -1.12q.74 -1 1.12 -2.19z
M81.53 2.89q1 .74 2.19 1.12q-.74 1 -1.12 2.19q-1 -.74 -2.19 -1.12q.74 -1 1.12 -2.19z
M83.55 9.09q1.01 .74 2.19 1.12q-.74 1.01 -1.12 2.19q-1.01 -.74 -2.19 -1.12q.74 -1.01 1.12 -2.19z
M85.56 15.28q1.01 .74 2.21 1.13q-.74 1.01 -1.13 2.21q-1.01 -.74 -2.21 -1.13q.74 -1.01 1.13 -2.21z
M87.55 21.42q1.07 .72 2.29 1.16q-.72 1.07 -1.16 2.29q-1.07 -.72 -2.29 -1.16q.72 -1.07 1.16 -2.29z
M89.54 27.53q1.16 .7 2.4 1.22q-.7 1.16 -1.22 2.4q-1.16 -.7 -2.4 -1.22q.7 -1.16 1.22 -2.4z
M91.52 33.62q1.26 .69 2.55 1.3q-.69 1.26 -1.3 2.55q-1.26 -.69 -2.55 -1.3q.69 -1.26 1.3 -2.55z
M93.49 39.68q1.37 .7 2.74 1.4q-.7 1.37 -1.4 2.74q-1.37 -.7 -2.74 -1.4q.7 -1.37 1.4 -2.74z
M95.45 45.71q1.48 .75 2.96 1.51q-.75 1.48 -1.51 2.96q-1.48 -.75 -2.96 -1.51q.75 -1.48 1.51 -2.96z
M151.87 219.36q1.47 .75 2.93 1.49q-.75 1.47 -1.49 2.93q-1.47 -.75 -2.93 -1.49q.75 -1.47 1.49 -2.93z
M153.93 225.72q1.36 .69 2.72 1.39q-.69 1.36 -1.39 2.72q-1.36 -.69 -2.72 -1.39q.69 -1.36 1.39 -2.72z
M156 232.07q1.24 .69 2.53 1.29q-.69 1.24 -1.29 2.53q-1.24 -.69 -2.53 -1.29q.69 -1.24 1.29 -2.53z
M158.05 238.37q1.14 .71 2.39 1.22q-.71 1.14 -1.22 2.39q-1.14 -.71 -2.39 -1.22q.71 -1.14 1.22 -2.39z
M160.09 244.66q1.06 .73 2.28 1.16q-.73 1.06 -1.16 2.28q-1.06 -.73 -2.28 -1.16q.73 -1.06 1.16 -2.28z
M87.73 .87q1 .74 2.19 1.12q-.74 1 -1.12 2.19q-1 -.74 -2.19 -1.12q.74 -1 1.12 -2.19z
M89.75 7.07q1.01 .74 2.19 1.12q-.74 1.01 -1.12 2.19q-1.01 -.74 -2.19 -1.12q.74 -1.01 1.12 -2.19z
M91.76 13.26q1.01 .74 2.21 1.12q-.74 1.01 -1.12 2.21q-1.01 -.74 -2.21 -1.12q.74 -1.01 1.12 -2.21z
M93.75 19.41q1.07 .72 2.28 1.16q-.72 1.07 -1.16 2.28q-1.07 -.72 -2.28 -1.16q.72 -1.07 1.16 -2.28z
M95.74 25.52q1.15 .7 2.4 1.22q-.7 1.15 -1.22 2.4q-1.15 -.7 -2.4 -1.22q.7 -1.15 1.22 -2.4z
M97.72 31.61q1.25 .69 2.54 1.3q-.69 1.25 -1.3 2.54q-1.25 -.69 -2.54 -1.3q.69 -1.25 1.3 -2.54z
M99.69 37.67q1.37 .7 2.73 1.39q-.7 1.37 -1.39 2.73q-1.37 -.7 -2.73 -1.39q.7 -1.37 1.39 -2.73z
M101.65 43.71q1.48 .75 2.95 1.5q-.75 1.48 -1.5 2.95q-1.48 -.75 -2.95 -1.5q.75 -1.48 1.5 -2.95z
M158.07 217.35q1.46 .75 2.92 1.49q-.75 1.46 -1.49 2.92q-1.46 -.75 -2.92 -1.49q.75 -1.46 1.49 -2.92z
M160.14 223.71q1.36 .69 2.71 1.38q-.69 1.36 -1.38 2.71q-1.36 -.69 -2.71 -1.38q.69 -1.36 1.38 -2.71z
M162.2 230.06q1.24 .69 2.52 1.29q-.69 1.24 -1.29 2.52q-1.24 -.69 -2.52 -1.29q.69 -1.24 1.29 -2.52z
M164.25 236.36q1.14 .71 2.38 1.21q-.71 1.14 -1.21 2.38q-1.14 -.71 -2.38 -1.21q.71 -1.14 1.21 -2.38z
M166.29 242.64q1.06 .73 2.27 1.16q-.73 1.06 -1.16 2.27q-1.06 -.73 -2.27 -1.16q.73 -1.06 1.16 -2.27z
M168.32 248.9q1.01 .74 2.2 1.12q-.74 1.01 -1.12 2.2q-1.01 -.74 -2.2 -1.12q.74 -1.01 1.12 -2.2z
M93.93 -1.14q1 .74 2.19 1.12q-.74 1 -1.12 2.19q-1 -.74 -2.19 -1.12q.74 -1 1.12 -2.19z
M95.95 5.06q1 .74 2.19 1.12q-.74 1 -1.12 2.19q-1 -.74 -2.19 -1.12q.74 -1 1.12 -2.19z
M97.96 11.25q1.01 .74 2.2 1.12q-.74 1.01 -1.12 2.2q-1.01 -.74 -2.2 -1.12q.74 -1.01 1.12 -2.2z
M99.96 17.4q1.06 .73 2.28 1.16q-.73 1.06 -1.16 2.28q-1.06 -.73 -2.28 -1.16q.73 -1.06 1.16 -2.28z
M101.94 23.51q1.14 .71 2.39 1.22q-.71 1.14 -1.22 2.39q-1.14 -.71 -2.39 -1.22q.71 -1.14 1.22 -2.39z
M103.93 29.61q1.24 .69 2.53 1.29q-.69 1.24 -1.29 2.53q-1.24 -.69 -2.53 -1.29q.69 -1.24 1.29 -2.53z
M105.89 35.67q1.36 .69 2.71 1.38q-.69 1.36 -1.38 2.71q-1.36 -.69 -2.71 -1.38q.69 -1.36 1.38 -2.71z
M107.86 41.71q1.46 .75 2.92 1.49q-.75 1.46 -1.49 2.92q-1.46 -.75 -2.92 -1.49q.75 -1.46 1.49 -2.92z
M164.28 215.35q1.45 .74 2.9 1.48q-.74 1.45 -1.48 2.9q-1.45 -.74 -2.9 -1.48q.74 -1.45 1.48 -2.9z
M166.34 221.71q1.35 .69 2.69 1.37q-.69 1.35 -1.37 2.69q-1.35 -.69 -2.69 -1.37q.69 -1.35 1.37 -2.69z
M168.4 228.05q1.23 .69 2.51 1.28q-.69 1.23 -1.28 2.51q-1.23 -.69 -2.51 -1.28q.69 -1.23 1.28 -2.51z
M170.45 234.35q1.13 .71 2.37 1.21q-.71 1.13 -1.21 2.37q-1.13 -.71 -2.37 -1.21q.71 -1.13 1.21 -2.37z
M172.49 240.63q1.06 .73 2.27 1.16q-.73 1.06 -1.16 2.27q-1.06 -.73 -2.27 -1.16q.73 -1.06 1.16 -2.27z
M174.52 246.89q1.01 .73 2.19 1.12q-.73 1.01 -1.12 2.19q-1.01 -.73 -2.19 -1.12q.73 -1.01 1.12 -2.19z
M100.13 -3.16q1 .74 2.19 1.12q-.74 1 -1.12 2.19q-1 -.74 -2.19 -1.12q.74 -1 1.12 -2.19z
M102.15 3.04q1 .74 2.19 1.12q-.74 1 -1.12 2.19q-1 -.74 -2.19 -1.12q.74 -1 1.12 -2.19z
M104.16 9.24q1.01 .73 2.19 1.12q-.73 1.01 -1.12 2.19q-1.01 -.73 -2.19 -1.12q.73 -1.01 1.12 -2.19z
M106.16 15.39q1.05 .73 2.27 1.15q-.73 1.05 -1.15 2.27q-1.05 -.73 -2.27 -1.15q.73 -1.05 1.15 -2.27z
M108.15 21.51q1.13 .71 2.37 1.21q-.71 1.13 -1.21 2.37q-1.13 -.71 -2.37 -1.21q.71 -1.13 1.21 -2.37z
M110.13 27.61q1.22 .69 2.5 1.27q-.69 1.22 -1.27 2.5q-1.22 -.69 -2.5 -1.27q.69 -1.22 1.27 -2.5z
M112.1 33.68q1.34 .68 2.68 1.37q-.68 1.34 -1.37 2.68q-1.34 -.68 -2.68 -1.37q.68 -1.34 1.37 -2.68z
M114.07 39.73q1.44 .73 2.88 1.47q-.73 1.44 -1.47 2.88q-1.44 -.73 -2.88 -1.47q.73 -1.44 1.47 -2.88z
M116.72 47.88q.15 .08 .3 .15q-.08 .15 -.15 .3q-.15 -.08 -.3 -.15q.08 -.15 .15 -.3z
M168.84 208.29q.69 .35 1.38 .7q-.35 .69 -.7 1.38q-.69 -.35 -1.38 -.7q.35 -.69 .7 -1.38z
M170.49 213.37q1.43 .73 2.86 1.46q-.73 1.43 -1.46 2.86q-1.43 -.73 -2.86 -1.46q.73 -1.43 1.46 -2.86z
M172.55 219.72q1.33 .68 2.66 1.36q-.68 1.33 -1.36 2.66q-1.33 -.68 -2.66 -1.36q.68 -1.33 1.36 -2.66z
M174.61 226.05q1.21 .69 2.49 1.27q-.69 1.21 -1.27 2.49q-1.21 -.69 -2.49 -1.27q.69 -1.21 1.27 -2.49z
M176.66 232.36q1.12 .71 2.35 1.2q-.71 1.12 -1.2 2.35q-1.12 -.71 -2.35 -1.2q.71 -1.12 1.2 -2.35z
M178.69 238.63q1.05 .73 2.26 1.15q-.73 1.05 -1.15 2.26q-1.05 -.73 -2.26 -1.15q.73 -1.05 1.15 -2.26z
M180.73 244.88q1.01 .73 2.19 1.12q-.73 1.01 -1.12 2.19q-1.01 -.73 -2.19 -1.12q.73 -1.01 1.12 -2.19z
M108.35 1.03q1 .74 2.19 1.12q-.74 1 -1.12 2.19q-1 -.74 -2.19 -1.12q.74 -1 1.12 -2.19z
M110.36 7.23q1.01 .73 2.19 1.12q-.73 1.01 -1.12 2.19q-1.01 -.73 -2.19 -1.12q.73 -1.01 1.12 -2.19z
M112.36 13.39q1.04 .74 2.25 1.15q-.74 1.04 -1.15 2.25q-1.04 -.74 -2.25 -1.15q.74 -1.04 1.15 -2.25z
M114.36 19.52q1.11 .71 2.34 1.19q-.71 1.11 -1.19 2.34q-1.11 -.71 -2.34 -1.19q.71 -1.11 1.19 -2.34z
M116.34 25.62q1.2 .69 2.47 1.26q-.69 1.2 -1.26 2.47q-1.2 -.69 -2.47 -1.26q.69 -1.2 1.26 -2.47z
M118.31 31.7q1.31 .68 2.64 1.34q-.68 1.31 -1.34 2.64q-1.31 -.68 -2.64 -1.34q.68 -1.31 1.34 -2.64z
M120.28 37.76q1.41 .72 2.82 1.44q-.72 1.41 -1.44 2.82q-1.41 -.72 -2.82 -1.44q.72 -1.41 1.44 -2.82z
M122.27 43.88q1.46 .74 2.92 1.49q-.74 1.46 -1.49 2.92q-1.46 -.74 -2.92 -1.49q.74 -1.46 1.49 -2.92z
M174.63 205.03q1.51 .77 3.02 1.54q-.77 1.51 -1.54 3.02q-1.51 -.77 -3.02 -1.54q.77 -1.51 1.54 -3.02z
M176.7 211.4q1.4 .71 2.8 1.43q-.71 1.4 -1.43 2.8q-1.4 -.71 -2.8 -1.43q.71 -1.4 1.43 -2.8z
M178.76 217.74q1.3 .68 2.62 1.33q-.68 1.3 -1.33 2.62q-1.3 -.68 -2.62 -1.33q.68 -1.3 1.33 -2.62z
M180.82 224.06q1.19 .7 2.46 1.25q-.7 1.19 -1.25 2.46q-1.19 -.7 -2.46 -1.25q.7 -1.19 1.25 -2.46z
M182.86 230.36q1.1 .71 2.32 1.18q-.71 1.1 -1.18 2.32q-1.1 -.71 -2.32 -1.18q.71 -1.1 1.18 -2.32z
M184.9 236.62q1.04 .74 2.24 1.14q-.74 1.04 -1.14 2.24q-1.04 -.74 -2.24 -1.14q.74 -1.04 1.14 -2.24z
M186.93 242.86q1.01 .73 2.19 1.12q-.73 1.01 -1.12 2.19q-1.01 -.73 -2.19 -1.12q.73 -1.01 1.12 -2.19z
M188.94 249.06q1 .74 2.19 1.12q-.74 1 -1.12 2.19q-1 -.74 -2.19 -1.12q.74 -1 1.12 -2.19z
M114.55 -.99q1 .74 2.19 1.12q-.74 1 -1.12 2.19q-1 -.74 -2.19 -1.12q.74 -1 1.12 -2.19z
M116.57 5.21q1.01 .73 2.19 1.12q-.73 1.01 -1.12 2.19q-1.01 -.73 -2.19 -1.12q.73 -1.01 1.12 -2.19z
M118.57 11.38q1.03 .74 2.23 1.14q-.74 1.03 -1.14 2.23q-1.03 -.74 -2.23 -1.14q.74 -1.03 1.14 -2.23z
M120.57 17.53q1.09 .72 2.31 1.17q-.72 1.09 -1.17 2.31q-1.09 -.72 -2.31 -1.17q.72 -1.09 1.17 -2.31z
M122.55 23.63q1.18 .7 2.43 1.24q-.7 1.18 -1.24 2.43q-1.18 -.7 -2.43 -1.24q.7 -1.18 1.24 -2.43z
M124.53 29.72q1.28 .68 2.58 1.32q-.68 1.28 -1.32 2.58q-1.28 -.68 -2.58 -1.32q.68 -1.28 1.32 -2.58z
M126.5 35.79q1.38 .7 2.76 1.41q-.7 1.38 -1.41 2.76q-1.38 -.7 -2.76 -1.41q.7 -1.38 1.41 -2.76z
M128.46 41.83q1.49 .76 2.97 1.51q-.76 1.49 -1.51 2.97q-1.49 -.76 -2.97 -1.51q.76 -1.49 1.51 -2.97z
M180.85 203.07q1.47 .75 2.95 1.5q-.75 1.47 -1.5 2.95q-1.47 -.75 -2.95 -1.5q.75 -1.47 1.5 -2.95z
M182.92 209.43q1.37 .7 2.74 1.4q-.7 1.37 -1.4 2.74q-1.37 -.7 -2.74 -1.4q.7 -1.37 1.4 -2.74z
M184.98 215.76q1.26 .69 2.56 1.31q-.69 1.26 -1.31 2.56q-1.26 -.69 -2.56 -1.31q.69 -1.26 1.31 -2.56z
M187.03 222.07q1.17 .7 2.42 1.23q-.7 1.17 -1.23 2.42q-1.17 -.7 -2.42 -1.23q.7 -1.17 1.23 -2.42z
M189.07 228.37q1.08 .72 2.3 1.17q-.72 1.08 -1.17 2.3q-1.08 -.72 -2.3 -1.17q.72 -1.08 1.17 -2.3z
M191.1 234.62q1.02 .74 2.22 1.13q-.74 1.02 -1.13 2.22q-1.02 -.74 -2.22 -1.13q.74 -1.02 1.13 -2.22z
M193.13 240.85q1.01 .74 2.19 1.12q-.74 1.01 -1.12 2.19q-1.01 -.74 -2.19 -1.12q.74 -1.01 1.12 -2.19z
M195.14 247.05q1 .74 2.19 1.12q-.74 1 -1.12 2.19q-1 -.74 -2.19 -1.12q.74 -1 1.12 -2.19z
M120.75 -3q1 .74 2.19 1.12q-.74 1 -1.12 2.19q-1 -.74 -2.19 -1.12q.74 -1 1.12 -2.19z
M122.77 3.2q1.01 .74 2.19 1.12q-.74 1.01 -1.12 2.19q-1.01 -.74 -2.19 -1.12q.74 -1.01 1.12 -2.19z
M124.78 9.39q1.01 .74 2.21 1.13q-.74 1.01 -1.13 2.21q-1.01 -.74 -2.21 -1.13q.74 -1.01 1.13 -2.21z
M126.77 15.53q1.07 .72 2.28 1.16q-.72 1.07 -1.16 2.28q-1.07 -.72 -2.28 -1.16q.72 -1.07 1.16 -2.28z
M128.76 21.65q1.15 .71 2.39 1.22q-.71 1.15 -1.22 2.39q-1.15 -.71 -2.39 -1.22q.71 -1.15 1.22 -2.39z
M130.75 27.76q1.23 .69 2.52 1.28q-.69 1.23 -1.28 2.52q-1.23 -.69 -2.52 -1.28q.69 -1.23 1.28 -2.52z
M132.72 33.83q1.35 .69 2.69 1.37q-.69 1.35 -1.37 2.69q-1.35 -.69 -2.69 -1.37q.69 -1.35 1.37 -2.69z
M134.69 39.89q1.44 .73 2.88 1.47q-.73 1.44 -1.47 2.88q-1.44 -.73 -2.88 -1.47q.73 -1.44 1.47 -2.88z
M137.12 47.37q.59 .3 1.18 .6q-.3 .59 -.6 1.18q-.59 -.3 -1.18 -.6q.3 -.59 .6 -1.18z
M185.23 195.44q1.09 .55 2.17 1.11q-.55 1.09 -1.11 2.17q-1.09 -.55 -2.17 -1.11q.55 -1.09 1.11 -2.17z
M187.08 201.13q1.43 .73 2.86 1.46q-.73 1.43 -1.46 2.86q-1.43 -.73 -2.86 -1.46q.73 -1.43 1.46 -2.86z
M189.14 207.47q1.34 .68 2.67 1.36q-.68 1.34 -1.36 2.67q-1.34 -.68 -2.67 -1.36q.68 -1.34 1.36 -2.67z
M191.19 213.79q1.22 .69 2.5 1.28q-.69 1.22 -1.28 2.5q-1.22 -.69 -2.5 -1.28q.69 -1.22 1.28 -2.5z
M193.24 220.09q1.14 .71 2.37 1.21q-.71 1.14 -1.21 2.37q-1.14 -.71 -2.37 -1.21q.71 -1.14 1.21 -2.37z
M195.28 226.37q1.06 .73 2.27 1.16q-.73 1.06 -1.16 2.27q-1.06 -.73 -2.27 -1.16q.73 -1.06 1.16 -2.27z
M197.31 232.63q1.01 .74 2.2 1.12q-.74 1.01 -1.12 2.2q-1.01 -.74 -2.2 -1.12q.74 -1.01 1.12 -2.2z
M199.33 238.83q1 .74 2.19 1.12q-.74 1 -1.12 2.19q-1 -.74 -2.19 -1.12q.74 -1 1.12 -2.19z
M201.34 245.04q1 .74 2.19 1.12q-.74 1 -1.12 2.19q-1 -.74 -2.19 -1.12q.74 -1 1.12 -2.19z
M128.97 1.19q1 .74 2.19 1.12q-.74 1 -1.12 2.19q-1 -.74 -2.19 -1.12q.74 -1 1.12 -2.19z
M130.98 7.39q1.01 .73 2.19 1.12q-.73 1.01 -1.12 2.19q-1.01 -.73 -2.19 -1.12q.73 -1.01 1.12 -2.19z
M132.98 13.54q1.05 .74 2.25 1.15q-.74 1.05 -1.15 2.25q-1.05 -.74 -2.25 -1.15q.74 -1.05 1.15 -2.25z
M134.98 19.68q1.11 .71 2.34 1.19q-.71 1.11 -1.19 2.34q-1.11 -.71 -2.34 -1.19q.71 -1.11 1.19 -2.34z
M136.96 25.78q1.2 .7 2.46 1.25q-.7 1.2 -1.25 2.46q-1.2 -.7 -2.46 -1.25q.7 -1.2 1.25 -2.46z
M138.94 31.87q1.3 .68 2.61 1.33q-.68 1.3 -1.33 2.61q-1.3 -.68 -2.61 -1.33q.68 -1.3 1.33 -2.61z
M140.91 37.95q1.39 .71 2.78 1.42q-.71 1.39 -1.42 2.78q-1.39 -.71 -2.78 -1.42q.71 -1.39 1.42 -2.78z
M142.88 44q1.49 .76 2.98 1.52q-.76 1.49 -1.52 2.98q-1.49 -.76 -2.98 -1.52q.76 -1.49 1.52 -2.98z
M191.24 192.84q1.48 .75 2.96 1.51q-.75 1.48 -1.51 2.96q-1.48 -.75 -2.96 -1.51q.75 -1.48 1.51 -2.96z
M193.3 199.18q1.38 .7 2.76 1.41q-.7 1.38 -1.41 2.76q-1.38 -.7 -2.76 -1.41q.7 -1.38 1.41 -2.76z
M195.36 205.51q1.28 .68 2.59 1.32q-.68 1.28 -1.32 2.59q-1.28 -.68 -2.59 -1.32q.68 -1.28 1.32 -2.59z
M197.41 211.82q1.19 .7 2.45 1.25q-.7 1.19 -1.25 2.45q-1.19 -.7 -2.45 -1.25q.7 -1.19 1.25 -2.45z
M199.45 218.12q1.1 .71 2.32 1.18q-.71 1.1 -1.18 2.32q-1.1 -.71 -2.32 -1.18q.71 -1.1 1.18 -2.32z
M201.49 224.38q1.04 .74 2.25 1.14q-.74 1.04 -1.14 2.25q-1.04 -.74 -2.25 -1.14q.74 -1.04 1.14 -2.25z
M203.51 230.62q1.01 .73 2.19 1.12q-.73 1.01 -1.12 2.19q-1.01 -.73 -2.19 -1.12q.73 -1.01 1.12 -2.19z
M205.53 236.82q1 .74 2.19 1.12q-.74 1 -1.12 2.19q-1 -.74 -2.19 -1.12q.74 -1 1.12 -2.19z
M207.54 243.02q1 .74 2.19 1.12q-.74 1 -1.12 2.19q-1 -.74 -2.19 -1.12q.74 -1 1.12 -2.19z
M209.56 249.22q1 .74 2.19 1.12q-.74 1 -1.12 2.19q-1 -.74 -2.19 -1.12q.74 -1 1.12 -2.19z
M135.17 -.83q1 .74 2.19 1.12q-.74 1 -1.12 2.19q-1 -.74 -2.19 -1.12q.74 -1 1.12 -2.19z
M137.18 5.37q1.01 .73 2.19 1.12q-.73 1.01 -1.12 2.19q-1.01 -.73 -2.19 -1.12q.73 -1.01 1.12 -2.19z
M139.19 11.55q1.02 .74 2.22 1.13q-.74 1.02 -1.13 2.22q-1.02 -.74 -2.22 -1.13q.74 -1.02 1.13 -2.22z
M141.19 17.7q1.08 .72 2.29 1.17q-.72 1.08 -1.17 2.29q-1.08 -.72 -2.29 -1.17q.72 -1.08 1.17 -2.29z
M143.18 23.82q1.15 .7 2.4 1.22q-.7 1.15 -1.22 2.4q-1.15 -.7 -2.4 -1.22q.7 -1.15 1.22 -2.4z
M145.16 29.93q1.24 .69 2.52 1.28q-.69 1.24 -1.28 2.52q-1.24 -.69 -2.52 -1.28q.69 -1.24 1.28 -2.52z
M147.14 36q1.34 .68 2.68 1.37q-.68 1.34 -1.37 2.68q-1.34 -.68 -2.68 -1.37q.68 -1.34 1.37 -2.68z
M149.11 42.08q1.43 .73 2.85 1.45q-.73 1.43 -1.45 2.85q-1.43 -.73 -2.85 -1.45q.73 -1.43 1.45 -2.85z
M151.08 48.13q1.52 .78 3.04 1.55q-.78 1.52 -1.55 3.04q-1.52 -.78 -3.04 -1.55q.78 -1.52 1.55 -3.04z
M195.41 184.57q1.51 .77 3.02 1.54q-.77 1.51 -1.54 3.02q-1.51 -.77 -3.02 -1.54q.77 -1.51 1.54 -3.02z
M197.47 190.92q1.42 .72 2.83 1.44q-.72 1.42 -1.44 2.83q-1.42 -.72 -2.83 -1.44q.72 -1.42 1.44 -2.83z
M199.52 197.24q1.33 .68 2.67 1.36q-.68 1.33 -1.36 2.67q-1.33 -.68 -2.67 -1.36q.68 -1.33 1.36 -2.67z
M201.58 203.56q1.23 .69 2.51 1.28q-.69 1.23 -1.28 2.51q-1.23 -.69 -2.51 -1.28q.69 -1.23 1.28 -2.51z
M203.62 209.85q1.14 .71 2.39 1.22q-.71 1.14 -1.22 2.39q-1.14 -.71 -2.39 -1.22q.71 -1.14 1.22 -2.39z
M205.66 216.13q1.07 .72 2.28 1.16q-.72 1.07 -1.16 2.28q-1.07 -.72 -2.28 -1.16q.72 -1.07 1.16 -2.28z
M207.69 222.38q1.02 .74 2.22 1.13q-.74 1.02 -1.13 2.22q-1.02 -.74 -2.22 -1.13q.74 -1.02 1.13 -2.22z
M209.72 228.6q1.01 .74 2.19 1.12q-.74 1.01 -1.12 2.19q-1.01 -.74 -2.19 -1.12q.74 -1.01 1.12 -2.19z
M211.73 234.81q1 .74 2.19 1.12q-.74 1 -1.12 2.19q-1 -.74 -2.19 -1.12q.74 -1 1.12 -2.19z
M213.75 241.01q1 .74 2.19 1.12q-.74 1 -1.12 2.19q-1 -.74 -2.19 -1.12q.74 -1 1.12 -2.19z
M215.76 247.21q1 .74 2.19 1.12q-.74 1 -1.12 2.19q-1 -.74 -2.19 -1.12q.74 -1 1.12 -2.19z
M141.37 -2.84q1 .74 2.19 1.12q-.74 1 -1.12 2.19q-1 -.74 -2.19 -1.12q.74 -1 1.12 -2.19z
M143.38 3.36q1 .74 2.19 1.12q-.74 1 -1.12 2.19q-1 -.74 -2.19 -1.12q.74 -1 1.12 -2.19z
M145.4 9.56q1.01 .73 2.19 1.12q-.73 1.01 -1.12 2.19q-1.01 -.73 -2.19 -1.12q.73 -1.01 1.12 -2.19z
M147.4 15.71q1.05 .73 2.26 1.15q-.73 1.05 -1.15 2.26q-1.05 -.73 -2.26 -1.15q.73 -1.05 1.15 -2.26z
M149.39 21.85q1.11 .71 2.33 1.19q-.71 1.11 -1.19 2.33q-1.11 -.71 -2.33 -1.19q.71 -1.11 1.19 -2.33z
M151.38 27.97q1.19 .7 2.45 1.25q-.7 1.19 -1.25 2.45q-1.19 -.7 -2.45 -1.25q.7 -1.19 1.25 -2.45z
M153.36 34.07q1.28 .68 2.58 1.31q-.68 1.28 -1.31 2.58q-1.28 -.68 -2.58 -1.31q.68 -1.28 1.31 -2.58z
M155.34 40.15q1.37 .7 2.73 1.39q-.7 1.37 -1.39 2.73q-1.37 -.7 -2.73 -1.39q.7 -1.37 1.39 -2.73z
M157.31 46.23q1.45 .74 2.9 1.48q-.74 1.45 -1.48 2.9q-1.45 -.74 -2.9 -1.48q.74 -1.45 1.48 -2.9z
M159.62 53.31q.87 .44 1.73 .88q-.44 .87 -.88 1.73q-.87 -.44 -1.73 -.88q.44 -.87 .88 -1.73z
M199.71 176.71q1.28 .65 2.55 1.3q-.65 1.28 -1.3 2.55q-1.28 -.65 -2.55 -1.3q.65 -1.28 1.3 -2.55z
M201.64 182.66q1.44 .73 2.88 1.47q-.73 1.44 -1.47 2.88q-1.44 -.73 -2.88 -1.47q.73 -1.44 1.47 -2.88z
M203.7 188.99q1.36 .69 2.72 1.38q-.69 1.36 -1.38 2.72q-1.36 -.69 -2.72 -1.38q.69 -1.36 1.38 -2.72z
M205.75 195.3q1.26 .69 2.56 1.31q-.69 1.26 -1.31 2.56q-1.26 -.69 -2.56 -1.31q.69 -1.26 1.31 -2.56z
M207.8 201.6q1.18 .7 2.44 1.24q-.7 1.18 -1.24 2.44q-1.18 -.7 -2.44 -1.24q.7 -1.18 1.24 -2.44z
M209.84 207.89q1.1 .71 2.32 1.18q-.71 1.1 -1.18 2.32q-1.1 -.71 -2.32 -1.18q.71 -1.1 1.18 -2.32z
M211.87 214.14q1.04 .74 2.25 1.15q-.74 1.04 -1.15 2.25q-1.04 -.74 -2.25 -1.15q.74 -1.04 1.15 -2.25z
M213.9 220.39q1.01 .73 2.19 1.12q-.73 1.01 -1.12 2.19q-1.01 -.73 -2.19 -1.12q.73 -1.01 1.12 -2.19z
M215.92 226.59q1 .74 2.19 1.12q-.74 1 -1.12 2.19q-1 -.74 -2.19 -1.12q.74 -1 1.12 -2.19z
M217.93 232.79q1 .74 2.19 1.12q-.74 1 -1.12 2.19q-1 -.74 -2.19 -1.12q.74 -1 1.12 -2.19z
M219.95 238.99q1 .74 2.19 1.12q-.74 1 -1.12 2.19q-1 -.74 -2.19 -1.12q.74 -1 1.12 -2.19z
M221.96 245.19q1 .74 2.19 1.11q-.74 1 -1.11 2.19q-1 -.74 -2.19 -1.11q.74 -1 1.11 -2.19z
M149.59 1.34q1 .74 2.19 1.12q-.74 1 -1.12 2.19q-1 -.74 -2.19 -1.12q.74 -1 1.12 -2.19z
M151.6 7.54q1.01 .74 2.19 1.12q-.74 1.01 -1.12 2.19q-1.01 -.74 -2.19 -1.12q.74 -1.01 1.12 -2.19z
M153.61 13.72q1.02 .74 2.22 1.13q-.74 1.02 -1.13 2.22q-1.02 -.74 -2.22 -1.13q.74 -1.02 1.13 -2.22z
M155.61 19.88q1.07 .73 2.28 1.16q-.73 1.07 -1.16 2.28q-1.07 -.73 -2.28 -1.16q.73 -1.07 1.16 -2.28z
M157.6 26.01q1.13 .71 2.37 1.21q-.71 1.13 -1.21 2.37q-1.13 -.71 -2.37 -1.21q.71 -1.13 1.21 -2.37z
M159.59 32.13q1.21 .69 2.48 1.26q-.69 1.21 -1.26 2.48q-1.21 -.69 -2.48 -1.26q.69 -1.21 1.26 -2.48z
M161.57 38.23q1.3 .68 2.61 1.33q-.68 1.3 -1.33 2.61q-1.3 -.68 -2.61 -1.33q.68 -1.3 1.33 -2.61z
M163.55 44.32q1.38 .7 2.76 1.41q-.7 1.38 -1.41 2.76q-1.38 -.7 -2.76 -1.41q.7 -1.38 1.41 -2.76z
M165.53 50.4q1.46 .74 2.92 1.49q-.74 1.46 -1.49 2.92q-1.46 -.74 -2.92 -1.49q.74 -1.46 1.49 -2.92z
M167.81 57.44q.9 .46 1.8 .92q-.46 .9 -.92 1.8q-.9 -.46 -1.8 -.92q.46 -.9 .92 -1.8z
M203.9 168.5q1.27 .65 2.54 1.3q-.65 1.27 -1.3 2.54q-1.27 -.65 -2.54 -1.3q.65 -1.27 1.3 -2.54z
M205.83 174.43q1.45 .74 2.9 1.48q-.74 1.45 -1.48 2.9q-1.45 -.74 -2.9 -1.48q.74 -1.45 1.48 -2.9z
M207.88 180.75q1.37 .7 2.74 1.4q-.7 1.37 -1.4 2.74q-1.37 -.7 -2.74 -1.4q.7 -1.37 1.4 -2.74z
M209.93 187.06q1.29 .68 2.6 1.32q-.68 1.29 -1.32 2.6q-1.29 -.68 -2.6 -1.32q.68 -1.29 1.32 -2.6z
M211.98 193.36q1.2 .7 2.47 1.26q-.7 1.2 -1.26 2.47q-1.2 -.7 -2.47 -1.26q.7 -1.2 1.26 -2.47z
M214.02 199.64q1.12 .71 2.36 1.2q-.71 1.12 -1.2 2.36q-1.12 -.71 -2.36 -1.2q.71 -1.12 1.2 -2.36z
M216.05 205.91q1.06 .73 2.27 1.16q-.73 1.06 -1.16 2.27q-1.06 -.73 -2.27 -1.16q.73 -1.06 1.16 -2.27z
M218.08 212.16q1.01 .74 2.21 1.13q-.74 1.01 -1.13 2.21q-1.01 -.74 -2.21 -1.13q.74 -1.01 1.13 -2.21z
M220.1 218.37q1.01 .74 2.19 1.12q-.74 1.01 -1.12 2.19q-1.01 -.74 -2.19 -1.12q.74 -1.01 1.12 -2.19z
M222.12 224.57q1 .74 2.19 1.12q-.74 1 -1.12 2.19q-1 -.74 -2.19 -1.12q.74 -1 1.12 -2.19z
M224.13 230.78q1 .74 2.19 1.12q-.74 1 -1.12 2.19q-1 -.74 -2.19 -1.12q.74 -1 1.12 -2.19z
M226.15 236.98q1 .74 2.19 1.12q-.74 1 -1.12 2.19q-1 -.74 -2.19 -1.12q.74 -1 1.12 -2.19z
M228.16 243.18q1 .74 2.19 1.11q-.74 1 -1.11 2.19q-1 -.74 -2.19 -1.11q.74 -1 1.11 -2.19z
M230.18 249.38q1 .74 2.19 1.11q-.74 1 -1.11 2.19q-1 -.74 -2.19 -1.11q.74 -1 1.11 -2.19z
M155.79 -.67q1 .74 2.19 1.12q-.74 1 -1.12 2.19q-1 -.74 -2.19 -1.12q.74 -1 1.12 -2.19z
M157.8 5.53q1 .74 2.19 1.12q-.74 1 -1.12 2.19q-1 -.74 -2.19 -1.12q.74 -1 1.12 -2.19z
M159.82 11.73q1.01 .73 2.19 1.12q-.73 1.01 -1.12 2.19q-1.01 -.73 -2.19 -1.12q.73 -1.01 1.12 -2.19z
M161.82 17.9q1.03 .74 2.24 1.14q-.74 1.03 -1.14 2.24q-1.03 -.74 -2.24 -1.14q.74 -1.03 1.14 -2.24z
M163.82 24.05q1.08 .72 2.3 1.17q-.72 1.08 -1.17 2.3q-1.08 -.72 -2.3 -1.17q.72 -1.08 1.17 -2.3z
M165.81 30.18q1.15 .71 2.39 1.22q-.71 1.15 -1.22 2.39q-1.15 -.71 -2.39 -1.22q.71 -1.15 1.22 -2.39z
M167.8 36.3q1.22 .69 2.5 1.27q-.69 1.22 -1.27 2.5q-1.22 -.69 -2.5 -1.27q.69 -1.22 1.27 -2.5z
M169.78 42.41q1.31 .68 2.63 1.34q-.68 1.31 -1.34 2.63q-1.31 -.68 -2.63 -1.34q.68 -1.31 1.34 -2.63z
M171.77 48.51q1.38 .7 2.76 1.4q-.7 1.38 -1.4 2.76q-1.38 -.7 -2.76 -1.4q.7 -1.38 1.4 -2.76z
M173.75 54.6q1.45 .74 2.9 1.48q-.74 1.45 -1.48 2.9q-1.45 -.74 -2.9 -1.48q.74 -1.45 1.48 -2.9z
M175.73 60.7q1.52 .77 3.04 1.55q-.77 1.52 -1.55 3.04q-1.52 -.77 -3.04 -1.55q.77 -1.52 1.55 -3.04z
M207.97 159.92q1.51 .77 3.02 1.54q-.77 1.51 -1.54 3.02q-1.51 -.77 -3.02 -1.54q.77 -1.51 1.54 -3.02z
M210.02 166.23q1.44 .73 2.88 1.47q-.73 1.44 -1.47 2.88q-1.44 -.73 -2.88 -1.47q.73 -1.44 1.47 -2.88z
M212.06 172.54q1.37 .7 2.74 1.4q-.7 1.37 -1.4 2.74q-1.37 -.7 -2.74 -1.4q.7 -1.37 1.4 -2.74z
M214.11 178.84q1.3 .68 2.61 1.33q-.68 1.3 -1.33 2.61q-1.3 -.68 -2.61 -1.33q.68 -1.3 1.33 -2.61z
M216.16 185.13q1.21 .69 2.49 1.27q-.69 1.21 -1.27 2.49q-1.21 -.69 -2.49 -1.27q.69 -1.21 1.27 -2.49z
M218.2 191.41q1.14 .71 2.38 1.21q-.71 1.14 -1.21 2.38q-1.14 -.71 -2.38 -1.21q.71 -1.14 1.21 -2.38z
M220.23 197.68q1.08 .72 2.29 1.17q-.72 1.08 -1.17 2.29q-1.08 -.72 -2.29 -1.17q.72 -1.08 1.17 -2.29z
M222.26 203.93q1.03 .74 2.23 1.14q-.74 1.03 -1.14 2.23q-1.03 -.74 -2.23 -1.14q.74 -1.03 1.14 -2.23z
M224.29 210.16q1.01 .73 2.19 1.12q-.73 1.01 -1.12 2.19q-1.01 -.73 -2.19 -1.12q.73 -1.01 1.12 -2.19z
M226.3 216.36q1 .74 2.19 1.12q-.74 1 -1.12 2.19q-1 -.74 -2.19 -1.12q.74 -1 1.12 -2.19z
M228.32 222.56q1 .74 2.19 1.12q-.74 1 -1.12 2.19q-1 -.74 -2.19 -1.12q.74 -1 1.12 -2.19z
M230.33 228.76q1 .74 2.19 1.12q-.74 1 -1.12 2.19q-1 -.74 -2.19 -1.12q.74 -1 1.12 -2.19z
M232.35 234.96q1 .74 2.19 1.11q-.74 1 -1.11 2.19q-1 -.74 -2.19 -1.11q.74 -1 1.11 -2.19z
M234.36 241.16q1 .74 2.19 1.11q-.74 1 -1.11 2.19q-1 -.74 -2.19 -1.11q.74 -1 1.11 -2.19z
M236.38 247.37q1 .74 2.19 1.11q-.74 1 -1.11 2.19q-1 -.74 -2.19 -1.11q.74 -1 1.11 -2.19z
M161.99 -2.69q1 .74 2.19 1.12q-.74 1 -1.12 2.19q-1 -.74 -2.19 -1.12q.74 -1 1.12 -2.19z
M164 3.51q1 .74 2.19 1.12q-.74 1 -1.12 2.19q-1 -.74 -2.19 -1.12q.74 -1 1.12 -2.19z
M166.02 9.71q1.01 .74 2.19 1.12q-.74 1.01 -1.12 2.19q-1.01 -.74 -2.19 -1.12q.74 -1.01 1.12 -2.19z
M168.03 15.91q1.01 .73 2.19 1.12q-.73 1.01 -1.12 2.19q-1.01 -.73 -2.19 -1.12q.73 -1.01 1.12 -2.19z
M170.03 22.07q1.04 .74 2.25 1.15q-.74 1.04 -1.15 2.25q-1.04 -.74 -2.25 -1.15q.74 -1.04 1.15 -2.25z
M172.03 28.23q1.09 .72 2.31 1.17q-.72 1.09 -1.17 2.31q-1.09 -.72 -2.31 -1.17q.72 -1.09 1.17 -2.31z
M174.02 34.36q1.15 .7 2.4 1.22q-.7 1.15 -1.22 2.4q-1.15 -.7 -2.4 -1.22q.7 -1.15 1.22 -2.4z
M176.02 40.49q1.22 .69 2.5 1.27q-.69 1.22 -1.27 2.5q-1.22 -.69 -2.5 -1.27q.69 -1.22 1.27 -2.5z
M178 46.6q1.3 .68 2.61 1.33q-.68 1.3 -1.33 2.61q-1.3 -.68 -2.61 -1.33q.68 -1.3 1.33 -2.61z
M179.99 52.71q1.37 .7 2.73 1.39q-.7 1.37 -1.39 2.73q-1.37 -.7 -2.73 -1.39q.7 -1.37 1.39 -2.73z
M181.97 58.83q1.42 .73 2.85 1.45q-.73 1.42 -1.45 2.85q-1.42 -.73 -2.85 -1.45q.73 -1.42 1.45 -2.85z
M183.96 64.93q1.48 .76 2.97 1.51q-.76 1.48 -1.51 2.97q-1.48 -.76 -2.97 -1.51q.76 -1.48 1.51 -2.97z
M186.3 72.15q.81 .41 1.62 .83q-.41 .81 -.83 1.62q-.81 -.41 -1.62 -.83q.41 -.81 .83 -1.62z
M210.36 146.19q1.06 .54 2.12 1.08q-.54 1.06 -1.08 2.12q-1.06 -.54 -2.12 -1.08q.54 -1.06 1.08 -2.12z
M212.17 151.76q1.48 .75 2.96 1.51q-.75 1.48 -1.51 2.96q-1.48 -.75 -2.96 -1.51q.75 -1.48 1.51 -2.96z
M214.21 158.05q1.42 .72 2.83 1.44q-.72 1.42 -1.44 2.83q-1.42 -.72 -2.83 -1.44q.72 -1.42 1.44 -2.83z
M216.26 164.34q1.36 .69 2.72 1.38q-.69 1.36 -1.38 2.72q-1.36 -.69 -2.72 -1.38q.69 -1.36 1.38 -2.72z
M218.3 170.63q1.29 .68 2.6 1.32q-.68 1.29 -1.32 2.6q-1.29 -.68 -2.6 -1.32q.68 -1.29 1.32 -2.6z
M220.34 176.92q1.21 .69 2.49 1.27q-.69 1.21 -1.27 2.49q-1.21 -.69 -2.49 -1.27q.69 -1.21 1.27 -2.49z
M222.38 183.19q1.15 .71 2.39 1.22q-.71 1.15 -1.22 2.39q-1.15 -.71 -2.39 -1.22q.71 -1.15 1.22 -2.39z
M224.42 189.46q1.08 .72 2.3 1.17q-.72 1.08 -1.17 2.3q-1.08 -.72 -2.3 -1.17q.72 -1.08 1.17 -2.3z
M226.45 195.7q1.04 .74 2.24 1.14q-.74 1.04 -1.14 2.24q-1.04 -.74 -2.24 -1.14q.74 -1.04 1.14 -2.24z
M228.47 201.94q1.01 .73 2.19 1.12q-.73 1.01 -1.12 2.19q-1.01 -.73 -2.19 -1.12q.73 -1.01 1.12 -2.19z
M230.49 208.14q1 .74 2.19 1.12q-.74 1 -1.12 2.19q-1 -.74 -2.19 -1.12q.74 -1 1.12 -2.19z
M232.5 214.34q1 .74 2.19 1.12q-.74 1 -1.12 2.19q-1 -.74 -2.19 -1.12q.74 -1 1.12 -2.19z
M234.52 220.55q1 .74 2.19 1.12q-.74 1 -1.12 2.19q-1 -.74 -2.19 -1.12q.74 -1 1.12 -2.19z
M236.53 226.75q1 .74 2.19 1.12q-.74 1 -1.12 2.19q-1 -.74 -2.19 -1.12q.74 -1 1.12 -2.19z
M238.55 232.95q1 .74 2.19 1.11q-.74 1 -1.11 2.19q-1 -.74 -2.19 -1.11q.74 -1 1.11 -2.19z
M240.56 239.15q1 .74 2.19 1.11q-.74 1 -1.11 2.19q-1 -.74 -2.19 -1.11q.74 -1 1.11 -2.19z
M242.58 245.35q1 .74 2.19 1.11q-.74 1 -1.11 2.19q-1 -.74 -2.19 -1.11q.74 -1 1.11 -2.19z
M170.2 1.5q1 .74 2.19 1.12q-.74 1 -1.12 2.19q-1 -.74 -2.19 -1.12q.74 -1 1.12 -2.19z
M172.22 7.7q1 .74 2.19 1.12q-.74 1 -1.12 2.19q-1 -.74 -2.19 -1.12q.74 -1 1.12 -2.19z
M174.23 13.9q1.01 .74 2.19 1.12q-.74 1.01 -1.12 2.19q-1.01 -.74 -2.19 -1.12q.74 -1.01 1.12 -2.19z
M176.25 20.1q1.01 .74 2.2 1.12q-.74 1.01 -1.12 2.2q-1.01 -.74 -2.2 -1.12q.74 -1.01 1.12 -2.2z
M178.25 26.26q1.04 .74 2.25 1.15q-.74 1.04 -1.15 2.25q-1.04 -.74 -2.25 -1.15q.74 -1.04 1.15 -2.25z
M180.25 32.42q1.09 .72 2.3 1.17q-.72 1.09 -1.17 2.3q-1.09 -.72 -2.3 -1.17q.72 -1.09 1.17 -2.3z
M182.24 38.55q1.15 .71 2.39 1.22q-.71 1.15 -1.22 2.39q-1.15 -.71 -2.39 -1.22q.71 -1.15 1.22 -2.39z
M184.24 44.69q1.21 .69 2.48 1.26q-.69 1.21 -1.26 2.48q-1.21 -.69 -2.48 -1.26q.69 -1.21 1.26 -2.48z
M186.23 50.82q1.27 .69 2.57 1.31q-.69 1.27 -1.31 2.57q-1.27 -.69 -2.57 -1.31q.69 -1.27 1.31 -2.57z
M188.22 56.94q1.34 .68 2.68 1.36q-.68 1.34 -1.36 2.68q-1.34 -.68 -2.68 -1.36q.68 -1.34 1.36 -2.68z
M190.21 63.07q1.39 .71 2.77 1.41q-.71 1.39 -1.41 2.77q-1.39 -.71 -2.77 -1.41q.71 -1.39 1.41 -2.77z
M192.2 69.2q1.43 .73 2.87 1.46q-.73 1.43 -1.46 2.87q-1.43 -.73 -2.87 -1.46q.73 -1.43 1.46 -2.87z
M194.19 75.33q1.48 .75 2.96 1.51q-.75 1.48 -1.51 2.96q-1.48 -.75 -2.96 -1.51q.75 -1.48 1.51 -2.96z
M196.19 81.47q1.52 .77 3.03 1.55q-.77 1.52 -1.55 3.03q-1.52 -.77 -3.03 -1.55q.77 -1.52 1.55 -3.03z
M198.69 89.18q.52 .26 1.04 .53q-.26 .52 -.53 1.04q-.52 -.26 -1.04 -.53q.26 -.52 .53 -1.04z
M210.72 126.2q.64 .33 1.29 .65q-.33 .64 -.65 1.29q-.64 -.33 -1.29 -.65q.33 -.64 .65 -1.29z
M212.31 131.09q1.51 .77 3.03 1.54q-.77 1.51 -1.54 3.03q-1.51 -.77 -3.03 -1.54q.77 -1.51 1.54 -3.03z
M214.34 137.35q1.47 .75 2.95 1.5q-.75 1.47 -1.5 2.95q-1.47 -.75 -2.95 -1.5q.75 -1.47 1.5 -2.95z
M216.38 143.62q1.43 .73 2.86 1.46q-.73 1.43 -1.46 2.86q-1.43 -.73 -2.86 -1.46q.73 -1.43 1.46 -2.86z
M218.42 149.89q1.38 .7 2.76 1.41q-.7 1.38 -1.41 2.76q-1.38 -.7 -2.76 -1.41q.7 -1.38 1.41 -2.76z
M220.46 156.16q1.33 .68 2.67 1.36q-.68 1.33 -1.36 2.67q-1.33 -.68 -2.67 -1.36q.68 -1.33 1.36 -2.67z
M222.5 162.44q1.26 .69 2.56 1.31q-.69 1.26 -1.31 2.56q-1.26 -.69 -2.56 -1.31q.69 -1.26 1.31 -2.56z
M224.53 168.71q1.2 .7 2.47 1.26q-.7 1.2 -1.26 2.47q-1.2 -.7 -2.47 -1.26q.7 -1.2 1.26 -2.47z
M226.57 174.98q1.14 .71 2.38 1.21q-.71 1.14 -1.21 2.38q-1.14 -.71 -2.38 -1.21q.71 -1.14 1.21 -2.38z
M228.6 181.24q1.08 .72 2.3 1.17q-.72 1.08 -1.17 2.3q-1.08 -.72 -2.3 -1.17q.72 -1.08 1.17 -2.3z
M230.63 187.48q1.04 .74 2.25 1.14q-.74 1.04 -1.14 2.25q-1.04 -.74 -2.25 -1.14q.74 -1.04 1.14 -2.25z
M232.66 193.73q1.01 .73 2.19 1.12q-.73 1.01 -1.12 2.19q-1.01 -.73 -2.19 -1.12q.73 -1.01 1.12 -2.19z
M234.68 199.93q1.01 .74 2.19 1.12q-.74 1.01 -1.12 2.19q-1.01 -.74 -2.19 -1.12q.74 -1.01 1.12 -2.19z
M236.69 206.13q1 .74 2.19 1.12q-.74 1 -1.12 2.19q-1 -.74 -2.19 -1.12q.74 -1 1.12 -2.19z
M238.71 212.33q1 .74 2.19 1.12q-.74 1 -1.12 2.19q-1 -.74 -2.19 -1.12q.74 -1 1.12 -2.19z
M240.72 218.53q1 .74 2.19 1.12q-.74 1 -1.12 2.19q-1 -.74 -2.19 -1.12q.74 -1 1.12 -2.19z
M242.74 224.73q1 .74 2.19 1.11q-.74 1 -1.11 2.19q-1 -.74 -2.19 -1.11q.74 -1 1.11 -2.19z
M244.75 230.93q1 .74 2.19 1.11q-.74 1 -1.11 2.19q-1 -.74 -2.19 -1.11q.74 -1 1.11 -2.19z
M246.77 237.14q1 .74 2.19 1.11q-.74 1 -1.11 2.19q-1 -.74 -2.19 -1.11q.74 -1 1.11 -2.19z
M248.78 243.34q1 .74 2.19 1.11q-.74 1 -1.11 2.19q-1 -.74 -2.19 -1.11q.74 -1 1.11 -2.19z
M250.8 249.54q1 .74 2.19 1.11q-.74 1 -1.11 2.19q-1 -.74 -2.19 -1.11q.74 -1 1.11 -2.19z
M176.4 -.51q1 .74 2.19 1.12q-.74 1 -1.12 2.19q-1 -.74 -2.19 -1.12q.74 -1 1.12 -2.19z
M178.42 5.69q1 .74 2.19 1.12q-.74 1 -1.12 2.19q-1 -.74 -2.19 -1.12q.74 -1 1.12 -2.19z
M180.43 11.89q1 .74 2.19 1.12q-.74 1 -1.12 2.19q-1 -.74 -2.19 -1.12q.74 -1 1.12 -2.19z
M182.45 18.09q1.01 .74 2.19 1.12q-.74 1.01 -1.12 2.19q-1.01 -.74 -2.19 -1.12q.74 -1.01 1.12 -2.19z
M184.46 24.28q1.01 .74 2.2 1.12q-.74 1.01 -1.12 2.2q-1.01 -.74 -2.2 -1.12q.74 -1.01 1.12 -2.2z
M186.46 30.45q1.04 .74 2.25 1.15q-.74 1.04 -1.15 2.25q-1.04 -.74 -2.25 -1.15q.74 -1.04 1.15 -2.25z
M188.47 36.61q1.08 .72 2.3 1.17q-.72 1.08 -1.17 2.3q-1.08 -.72 -2.3 -1.17q.72 -1.08 1.17 -2.3z
M190.46 42.76q1.13 .71 2.37 1.21q-.71 1.13 -1.21 2.37q-1.13 -.71 -2.37 -1.21q.71 -1.13 1.21 -2.37z
M192.46 48.9q1.18 .7 2.44 1.25q-.7 1.18 -1.25 2.44q-1.18 -.7 -2.44 -1.25q.7 -1.18 1.25 -2.44z
M194.46 55.05q1.23 .69 2.52 1.28q-.69 1.23 -1.28 2.52q-1.23 -.69 -2.52 -1.28q.69 -1.23 1.28 -2.52z
M196.45 61.18q1.29 .68 2.6 1.33q-.68 1.29 -1.33 2.6q-1.29 -.68 -2.6 -1.33q.68 -1.29 1.33 -2.6z
M198.45 67.32q1.34 .68 2.68 1.37q-.68 1.34 -1.37 2.68q-1.34 -.68 -2.68 -1.37q.68 -1.34 1.37 -2.68z
M200.44 73.47q1.38 .7 2.75 1.4q-.7 1.38 -1.4 2.75q-1.38 -.7 -2.75 -1.4q.7 -1.38 1.4 -2.75z
M202.44 79.63q1.4 .72 2.81 1.43q-.72 1.4 -1.43 2.81q-1.4 -.72 -2.81 -1.43q.72 -1.4 1.43 -2.81z
M204.45 85.79q1.43 .73 2.86 1.46q-.73 1.43 -1.46 2.86q-1.43 -.73 -2.86 -1.46q.73 -1.43 1.46 -2.86z
M206.45 91.96q1.45 .74 2.91 1.48q-.74 1.45 -1.48 2.91q-1.45 -.74 -2.91 -1.48q.74 -1.45 1.48 -2.91z
M208.46 98.14q1.46 .75 2.93 1.49q-.75 1.46 -1.49 2.93q-1.46 -.75 -2.93 -1.49q.75 -1.46 1.49 -2.93z
M210.47 104.34q1.47 .75 2.94 1.5q-.75 1.47 -1.5 2.94q-1.47 -.75 -2.94 -1.5q.75 -1.47 1.5 -2.94z
M212.49 110.54q1.46 .75 2.93 1.49q-.75 1.46 -1.49 2.93q-1.46 -.75 -2.93 -1.49q.75 -1.46 1.49 -2.93z
M214.51 116.76q1.45 .74 2.9 1.48q-.74 1.45 -1.48 2.9q-1.45 -.74 -2.9 -1.48q.74 -1.45 1.48 -2.9z
M216.54 123q1.43 .73 2.86 1.46q-.73 1.43 -1.46 2.86q-1.43 -.73 -2.86 -1.46q.73 -1.43 1.46 -2.86z
M218.56 129.24q1.4 .71 2.8 1.43q-.71 1.4 -1.43 2.8q-1.4 -.71 -2.8 -1.43q.71 -1.4 1.43 -2.8z
M220.59 135.49q1.37 .7 2.74 1.4q-.7 1.37 -1.4 2.74q-1.37 -.7 -2.74 -1.4q.7 -1.37 1.4 -2.74z
M222.62 141.74q1.34 .68 2.67 1.36q-.68 1.34 -1.36 2.67q-1.34 -.68 -2.67 -1.36q.68 -1.34 1.36 -2.67z
M224.66 148q1.28 .68 2.59 1.32q-.68 1.28 -1.32 2.59q-1.28 -.68 -2.59 -1.32q.68 -1.28 1.32 -2.59z
M226.7 154.27q1.23 .69 2.51 1.28q-.69 1.23 -1.28 2.51q-1.23 -.69 -2.51 -1.28q.69 -1.23 1.28 -2.51z
M228.73 160.52q1.18 .7 2.44 1.24q-.7 1.18 -1.24 2.44q-1.18 -.7 -2.44 -1.24q.7 -1.18 1.24 -2.44z
M230.76 166.78q1.12 .71 2.36 1.2q-.71 1.12 -1.2 2.36q-1.12 -.71 -2.36 -1.2q.71 -1.12 1.2 -2.36z
M232.79 173.03q1.08 .72 2.29 1.17q-.72 1.08 -1.17 2.29q-1.08 -.72 -2.29 -1.17q.72 -1.08 1.17 -2.29z
M234.82 179.27q1.04 .74 2.24 1.14q-.74 1.04 -1.14 2.24q-1.04 -.74 -2.24 -1.14q.74 -1.04 1.14 -2.24z
M236.85 185.51q1.01 .73 2.19 1.12q-.73 1.01 -1.12 2.19q-1.01 -.73 -2.19 -1.12q.73 -1.01 1.12 -2.19z
M238.86 191.71q1.01 .74 2.19 1.12q-.74 1.01 -1.12 2.19q-1.01 -.74 -2.19 -1.12q.74 -1.01 1.12 -2.19z
M240.88 197.91q1 .74 2.19 1.12q-.74 1 -1.12 2.19q-1 -.74 -2.19 -1.12q.74 -1 1.12 -2.19z
M242.89 204.11q1 .74 2.19 1.12q-.74 1 -1.12 2.19q-1 -.74 -2.19 -1.12q.74 -1 1.12 -2.19z
M244.91 210.32q1 .74 2.19 1.12q-.74 1 -1.12 2.19q-1 -.74 -2.19 -1.12q.74 -1 1.12 -2.19z
M246.92 216.52q1 .74 2.19 1.11q-.74 1 -1.11 2.19q-1 -.74 -2.19 -1.11q.74 -1 1.11 -2.19z
M248.94 222.72q1 .74 2.19 1.11q-.74 1 -1.11 2.19q-1 -.74 -2.19 -1.11q.74 -1 1.11 -2.19z
M250.95 228.92q1 .74 2.19 1.11q-.74 1 -1.11 2.19q-1 -.74 -2.19 -1.11q.74 -1 1.11 -2.19z
M182.6 -2.53q1 .74 2.19 1.12q-.74 1 -1.12 2.19q-1 -.74 -2.19 -1.12q.74 -1 1.12 -2.19z
M184.62 3.67q1 .74 2.19 1.12q-.74 1 -1.12 2.19q-1 -.74 -2.19 -1.12q.74 -1 1.12 -2.19z
M186.63 9.87q1 .74 2.19 1.12q-.74 1 -1.12 2.19q-1 -.74 -2.19 -1.12q.74 -1 1.12 -2.19z
M188.65 16.07q1 .74 2.19 1.12q-.74 1 -1.12 2.19q-1 -.74 -2.19 -1.12q.74 -1 1.12 -2.19z
M190.66 22.27q1.01 .74 2.19 1.12q-.74 1.01 -1.12 2.19q-1.01 -.74 -2.19 -1.12q.74 -1.01 1.12 -2.19z
M192.68 28.47q1.01 .73 2.19 1.12q-.73 1.01 -1.12 2.19q-1.01 -.73 -2.19 -1.12q.73 -1.01 1.12 -2.19z
M194.68 34.64q1.03 .74 2.23 1.14q-.74 1.03 -1.14 2.23q-1.03 -.74 -2.23 -1.14q.74 -1.03 1.14 -2.23z
M196.69 40.81q1.07 .73 2.28 1.16q-.73 1.07 -1.16 2.28q-1.07 -.73 -2.28 -1.16q.73 -1.07 1.16 -2.28z
M198.69 46.97q1.1 .71 2.33 1.19q-.71 1.1 -1.19 2.33q-1.1 -.71 -2.33 -1.19q.71 -1.1 1.19 -2.33z
M200.69 53.12q1.15 .71 2.39 1.22q-.71 1.15 -1.22 2.39q-1.15 -.71 -2.39 -1.22q.71 -1.15 1.22 -2.39z
M202.69 59.28q1.19 .7 2.46 1.25q-.7 1.19 -1.25 2.46q-1.19 -.7 -2.46 -1.25q.7 -1.19 1.25 -2.46z
M204.69 65.44q1.23 .69 2.51 1.28q-.69 1.23 -1.28 2.51q-1.23 -.69 -2.51 -1.28q.69 -1.23 1.28 -2.51z
M206.69 71.59q1.27 .69 2.57 1.31q-.69 1.27 -1.31 2.57q-1.27 -.69 -2.57 -1.31q.69 -1.27 1.31 -2.57z
M208.69 77.75q1.31 .68 2.63 1.34q-.68 1.31 -1.34 2.63q-1.31 -.68 -2.63 -1.34q.68 -1.31 1.34 -2.63z
M210.69 83.92q1.33 .68 2.67 1.36q-.68 1.33 -1.36 2.67q-1.33 -.68 -2.67 -1.36q.68 -1.33 1.36 -2.67z
M212.7 90.1q1.35 .69 2.7 1.37q-.69 1.35 -1.37 2.7q-1.35 -.69 -2.7 -1.37q.69 -1.35 1.37 -2.7z
M214.71 96.29q1.36 .69 2.72 1.38q-.69 1.36 -1.38 2.72q-1.36 -.69 -2.72 -1.38q.69 -1.36 1.38 -2.72z
M216.73 102.48q1.36 .69 2.72 1.39q-.69 1.36 -1.39 2.72q-1.36 -.69 -2.72 -1.39q.69 -1.36 1.39 -2.72z
M218.74 108.69q1.36 .69 2.72 1.38q-.69 1.36 -1.38 2.72q-1.36 -.69 -2.72 -1.38q.69 -1.36 1.38 -2.72z
M220.76 114.9q1.35 .69 2.7 1.37q-.69 1.35 -1.37 2.7q-1.35 -.69 -2.7 -1.37q.69 -1.35 1.37 -2.7z
M222.78 121.13q1.33 .68 2.66 1.36q-.68 1.33 -1.36 2.66q-1.33 -.68 -2.66 -1.36q.68 -1.33 1.36 -2.66z
M224.81 127.36q1.3 .68 2.62 1.33q-.68 1.3 -1.33 2.62q-1.3 -.68 -2.62 -1.33q.68 -1.3 1.33 -2.62z
M226.84 133.61q1.27 .69 2.56 1.31q-.69 1.27 -1.31 2.56q-1.27 -.69 -2.56 -1.31q.69 -1.27 1.31 -2.56z
M228.87 139.85q1.23 .69 2.5 1.28q-.69 1.23 -1.28 2.5q-1.23 -.69 -2.5 -1.28q.69 -1.23 1.28 -2.5z
M230.9 146.1q1.19 .7 2.45 1.25q-.7 1.19 -1.25 2.45q-1.19 -.7 -2.45 -1.25q.7 -1.19 1.25 -2.45z
M232.93 152.34q1.14 .71 2.39 1.22q-.71 1.14 -1.22 2.39q-1.14 -.71 -2.39 -1.22q.71 -1.14 1.22 -2.39z
M234.96 158.59q1.1 .71 2.32 1.18q-.71 1.1 -1.18 2.32q-1.1 -.71 -2.32 -1.18q.71 -1.1 1.18 -2.32z
M236.98 164.83q1.06 .73 2.27 1.16q-.73 1.06 -1.16 2.27q-1.06 -.73 -2.27 -1.16q.73 -1.06 1.16 -2.27z
M239.01 171.06q1.03 .74 2.23 1.14q-.74 1.03 -1.14 2.23q-1.03 -.74 -2.23 -1.14q.74 -1.03 1.14 -2.23z
M241.03 177.29q1.01 .73 2.19 1.12q-.73 1.01 -1.12 2.19q-1.01 -.73 -2.19 -1.12q.73 -1.01 1.12 -2.19z
M243.05 183.5q1.01 .74 2.19 1.12q-.74 1.01 -1.12 2.19q-1.01 -.74 -2.19 -1.12q.74 -1.01 1.12 -2.19z
M245.06 189.7q1 .74 2.19 1.12q-.74 1 -1.12 2.19q-1 -.74 -2.19 -1.12q.74 -1 1.12 -2.19z
M247.08 195.9q1 .74 2.19 1.12q-.74 1 -1.12 2.19q-1 -.74 -2.19 -1.12q.74 -1 1.12 -2.19z
M249.09 202.1q1 .74 2.19 1.12q-.74 1 -1.12 2.19q-1 -.74 -2.19 -1.12q.74 -1 1.12 -2.19z
M251.11 208.3q1 .74 2.19 1.11q-.74 1 -1.11 2.19q-1 -.74 -2.19 -1.11q.74 -1 1.11 -2.19z
M188.81 -4.54q1 .74 2.19 1.11q-.74 1 -1.11 2.19q-1 -.74 -2.19 -1.11q.74 -1 1.11 -2.19z
M190.82 1.66q1 .74 2.19 1.12q-.74 1 -1.12 2.19q-1 -.74 -2.19 -1.12q.74 -1 1.12 -2.19z
M192.84 7.86q1 .74 2.19 1.12q-.74 1 -1.12 2.19q-1 -.74 -2.19 -1.12q.74 -1 1.12 -2.19z
M194.85 14.06q1 .74 2.19 1.12q-.74 1 -1.12 2.19q-1 -.74 -2.19 -1.12q.74 -1 1.12 -2.19z
M196.86 20.26q1 .74 2.19 1.12q-.74 1 -1.12 2.19q-1 -.74 -2.19 -1.12q.74 -1 1.12 -2.19z
M198.88 26.46q1 .74 2.19 1.12q-.74 1 -1.12 2.19q-1 -.74 -2.19 -1.12q.74 -1 1.12 -2.19z
M200.89 32.66q1.01 .73 2.19 1.12q-.73 1.01 -1.12 2.19q-1.01 -.73 -2.19 -1.12q.73 -1.01 1.12 -2.19z
M202.9 38.84q1.02 .74 2.21 1.13q-.74 1.02 -1.13 2.21q-1.02 -.74 -2.21 -1.13q.74 -1.02 1.13 -2.21z
M204.91 45.01q1.04 .74 2.25 1.15q-.74 1.04 -1.15 2.25q-1.04 -.74 -2.25 -1.15q.74 -1.04 1.15 -2.25z
M206.91 51.19q1.07 .72 2.29 1.17q-.72 1.07 -1.17 2.29q-1.07 -.72 -2.29 -1.17q.72 -1.07 1.17 -2.29z
M208.92 57.36q1.1 .71 2.33 1.19q-.71 1.1 -1.19 2.33q-1.1 -.71 -2.33 -1.19q.71 -1.1 1.19 -2.33z
M210.92 63.52q1.14 .71 2.38 1.21q-.71 1.14 -1.21 2.38q-1.14 -.71 -2.38 -1.21q.71 -1.14 1.21 -2.38z
M212.92 69.69q1.17 .7 2.43 1.24q-.7 1.17 -1.24 2.43q-1.17 -.7 -2.43 -1.24q.7 -1.17 1.24 -2.43z
M214.93 75.86q1.2 .7 2.46 1.25q-.7 1.2 -1.25 2.46q-1.2 -.7 -2.46 -1.25q.7 -1.2 1.25 -2.46z
M216.94 82.04q1.22 .69 2.49 1.27q-.69 1.22 -1.27 2.49q-1.22 -.69 -2.49 -1.27q.69 -1.22 1.27 -2.49z
M218.95 88.23q1.23 .69 2.51 1.28q-.69 1.23 -1.28 2.51q-1.23 -.69 -2.51 -1.28q.69 -1.23 1.28 -2.51z
M220.96 94.42q1.24 .69 2.53 1.29q-.69 1.24 -1.29 2.53q-1.24 -.69 -2.53 -1.29q.69 -1.24 1.29 -2.53z
M222.97 100.61q1.24 .69 2.53 1.29q-.69 1.24 -1.29 2.53q-1.24 -.69 -2.53 -1.29q.69 -1.24 1.29 -2.53z
M224.99 106.82q1.24 .69 2.52 1.29q-.69 1.24 -1.29 2.52q-1.24 -.69 -2.52 -1.29q.69 -1.24 1.29 -2.52z
M227.01 113.03q1.23 .69 2.51 1.28q-.69 1.23 -1.28 2.51q-1.23 -.69 -2.51 -1.28q.69 -1.23 1.28 -2.51z
M229.03 119.25q1.21 .69 2.49 1.27q-.69 1.21 -1.27 2.49q-1.21 -.69 -2.49 -1.27q.69 -1.21 1.27 -2.49z
M231.05 125.47q1.19 .7 2.46 1.25q-.7 1.19 -1.25 2.46q-1.19 -.7 -2.46 -1.25q.7 -1.19 1.25 -2.46z
M233.07 131.7q1.17 .7 2.42 1.23q-.7 1.17 -1.23 2.42q-1.17 -.7 -2.42 -1.23q.7 -1.17 1.23 -2.42z
M235.1 137.93q1.14 .71 2.38 1.21q-.71 1.14 -1.21 2.38q-1.14 -.71 -2.38 -1.21q.71 -1.14 1.21 -2.38z
M237.13 144.18q1.1 .71 2.32 1.18q-.71 1.1 -1.18 2.32q-1.1 -.71 -2.32 -1.18q.71 -1.1 1.18 -2.32z
M239.15 150.41q1.07 .72 2.28 1.16q-.72 1.07 -1.16 2.28q-1.07 -.72 -2.28 -1.16q.72 -1.07 1.16 -2.28z
M241.18 156.63q1.04 .74 2.25 1.15q-.74 1.04 -1.15 2.25q-1.04 -.74 -2.25 -1.15q.74 -1.04 1.15 -2.25z
M243.2 162.86q1.01 .74 2.21 1.13q-.74 1.01 -1.13 2.21q-1.01 -.74 -2.21 -1.13q.74 -1.01 1.13 -2.21z
M245.22 169.08q1.01 .73 2.19 1.12q-.73 1.01 -1.12 2.19q-1.01 -.73 -2.19 -1.12q.73 -1.01 1.12 -2.19z
M247.23 175.28q1 .74 2.19 1.12q-.74 1 -1.12 2.19q-1 -.74 -2.19 -1.12q.74 -1 1.12 -2.19z
M249.25 181.48q1 .74 2.19 1.12q-.74 1 -1.12 2.19q-1 -.74 -2.19 -1.12q.74 -1 1.12 -2.19z
M251.26 187.68q1 .74 2.19 1.12q-.74 1 -1.12 2.19q-1 -.74 -2.19 -1.12q.74 -1 1.12 -2.19z
M197.02 -.36q1 .74 2.19 1.11q-.74 1 -1.11 2.19q-1 -.74 -2.19 -1.11q.74 -1 1.11 -2.19z
M199.04 5.84q1 .74 2.19 1.12q-.74 1 -1.12 2.19q-1 -.74 -2.19 -1.12q.74 -1 1.12 -2.19z
M201.05 12.04q1 .74 2.19 1.12q-.74 1 -1.12 2.19q-1 -.74 -2.19 -1.12q.74 -1 1.12 -2.19z
M203.07 18.24q1 .74 2.19 1.12q-.74 1 -1.12 2.19q-1 -.74 -2.19 -1.12q.74 -1 1.12 -2.19z
M205.08 24.44q1 .74 2.19 1.12q-.74 1 -1.12 2.19q-1 -.74 -2.19 -1.12q.74 -1 1.12 -2.19z
M207.09 30.65q1 .74 2.19 1.12q-.74 1 -1.12 2.19q-1 -.74 -2.19 -1.12q.74 -1 1.12 -2.19z
M209.11 36.85q1.01 .74 2.19 1.12q-.74 1.01 -1.12 2.19q-1.01 -.74 -2.19 -1.12q.74 -1.01 1.12 -2.19z
M211.12 43.05q1.01 .73 2.19 1.12q-.73 1.01 -1.12 2.19q-1.01 -.73 -2.19 -1.12q.73 -1.01 1.12 -2.19z
M213.13 49.23q1.02 .74 2.22 1.13q-.74 1.02 -1.13 2.22q-1.02 -.74 -2.22 -1.13q.74 -1.02 1.13 -2.22z
M215.14 55.4q1.04 .74 2.25 1.15q-.74 1.04 -1.15 2.25q-1.04 -.74 -2.25 -1.15q.74 -1.04 1.15 -2.25z
M217.15 61.58q1.06 .73 2.28 1.16q-.73 1.06 -1.16 2.28q-1.06 -.73 -2.28 -1.16q.73 -1.06 1.16 -2.28z
M219.16 67.77q1.08 .72 2.3 1.17q-.72 1.08 -1.17 2.3q-1.08 -.72 -2.3 -1.17q.72 -1.08 1.17 -2.3z
M221.16 73.95q1.1 .71 2.33 1.19q-.71 1.1 -1.19 2.33q-1.1 -.71 -2.33 -1.19q.71 -1.1 1.19 -2.33z
M223.17 80.13q1.12 .71 2.36 1.2q-.71 1.12 -1.2 2.36q-1.12 -.71 -2.36 -1.2q.71 -1.12 1.2 -2.36z
M225.18 86.31q1.14 .71 2.38 1.21q-.71 1.14 -1.21 2.38q-1.14 -.71 -2.38 -1.21q.71 -1.14 1.21 -2.38z
M227.19 92.51q1.14 .71 2.39 1.22q-.71 1.14 -1.22 2.39q-1.14 -.71 -2.39 -1.22q.71 -1.14 1.22 -2.39z
M229.21 98.7q1.15 .71 2.39 1.22q-.71 1.15 -1.22 2.39q-1.15 -.71 -2.39 -1.22q.71 -1.15 1.22 -2.39z
M231.22 104.91q1.14 .71 2.39 1.22q-.71 1.14 -1.22 2.39q-1.14 -.71 -2.39 -1.22q.71 -1.14 1.22 -2.39z
M233.24 111.12q1.13 .71 2.37 1.21q-.71 1.13 -1.21 2.37q-1.13 -.71 -2.37 -1.21q.71 -1.13 1.21 -2.37z
M235.26 117.33q1.12 .71 2.35 1.2q-.71 1.12 -1.2 2.35q-1.12 -.71 -2.35 -1.2q.71 -1.12 1.2 -2.35z
M237.28 123.56q1.1 .71 2.32 1.18q-.71 1.1 -1.18 2.32q-1.1 -.71 -2.32 -1.18q.71 -1.1 1.18 -2.32z
M239.31 129.78q1.08 .72 2.3 1.17q-.72 1.08 -1.17 2.3q-1.08 -.72 -2.3 -1.17q.72 -1.08 1.17 -2.3z
M241.33 136q1.06 .73 2.27 1.16q-.73 1.06 -1.16 2.27q-1.06 -.73 -2.27 -1.16q.73 -1.06 1.16 -2.27z
M243.35 142.22q1.04 .74 2.25 1.14q-.74 1.04 -1.14 2.25q-1.04 -.74 -2.25 -1.14q.74 -1.04 1.14 -2.25z
M245.37 148.44q1.02 .74 2.22 1.13q-.74 1.02 -1.13 2.22q-1.02 -.74 -2.22 -1.13q.74 -1.02 1.13 -2.22z
M247.39 154.66q1.01 .73 2.19 1.12q-.73 1.01 -1.12 2.19q-1.01 -.73 -2.19 -1.12q.73 -1.01 1.12 -2.19z
M249.41 160.86q1.01 .74 2.19 1.12q-.74 1.01 -1.12 2.19q-1.01 -.74 -2.19 -1.12q.74 -1.01 1.12 -2.19z
M251.42 167.06q1 .74 2.19 1.12q-.74 1 -1.12 2.19q-1 -.74 -2.19 -1.12q.74 -1 1.12 -2.19z
M203.22 -2.37q1 .74 2.19 1.11q-.74 1 -1.11 2.19q-1 -.74 -2.19 -1.11q.74 -1 1.11 -2.19z
M205.24 3.83q1 .74 2.19 1.11q-.74 1 -1.11 2.19q-1 -.74 -2.19 -1.11q.74 -1 1.11 -2.19z
M207.25 10.03q1 .74 2.19 1.11q-.74 1 -1.11 2.19q-1 -.74 -2.19 -1.11q.74 -1 1.11 -2.19z
M209.27 16.23q1 .74 2.19 1.12q-.74 1 -1.12 2.19q-1 -.74 -2.19 -1.12q.74 -1 1.12 -2.19z
M211.28 22.43q1 .74 2.19 1.12q-.74 1 -1.12 2.19q-1 -.74 -2.19 -1.12q.74 -1 1.12 -2.19z
M213.3 28.63q1 .74 2.19 1.12q-.74 1 -1.12 2.19q-1 -.74 -2.19 -1.12q.74 -1 1.12 -2.19z
M215.31 34.83q1 .74 2.19 1.12q-.74 1 -1.12 2.19q-1 -.74 -2.19 -1.12q.74 -1 1.12 -2.19z
M217.33 41.03q1 .74 2.19 1.12q-.74 1 -1.12 2.19q-1 -.74 -2.19 -1.12q.74 -1 1.12 -2.19z
M219.34 47.23q1.01 .74 2.19 1.12q-.74 1.01 -1.12 2.19q-1.01 -.74 -2.19 -1.12q.74 -1.01 1.12 -2.19z
M221.35 53.43q1.01 .73 2.19 1.12q-.73 1.01 -1.12 2.19q-1.01 -.73 -2.19 -1.12q.73 -1.01 1.12 -2.19z
M223.37 59.62q1.01 .74 2.2 1.12q-.74 1.01 -1.12 2.2q-1.01 -.74 -2.2 -1.12q.74 -1.01 1.12 -2.2z
M225.38 65.81q1.02 .75 2.23 1.13q-.75 1.02 -1.13 2.23q-1.02 -.75 -2.23 -1.13q.75 -1.02 1.13 -2.23z
M227.39 72q1.04 .74 2.25 1.14q-.74 1.04 -1.14 2.25q-1.04 -.74 -2.25 -1.14q.74 -1.04 1.14 -2.25z
M229.4 78.19q1.05 .73 2.26 1.15q-.73 1.05 -1.15 2.26q-1.05 -.73 -2.26 -1.15q.73 -1.05 1.15 -2.26z
M231.41 84.38q1.06 .73 2.27 1.16q-.73 1.06 -1.16 2.27q-1.06 -.73 -2.27 -1.16q.73 -1.06 1.16 -2.27z
M233.42 90.57q1.06 .73 2.28 1.16q-.73 1.06 -1.16 2.28q-1.06 -.73 -2.28 -1.16q.73 -1.06 1.16 -2.28z
M235.44 96.77q1.06 .73 2.28 1.16q-.73 1.06 -1.16 2.28q-1.06 -.73 -2.28 -1.16q.73 -1.06 1.16 -2.28z
M237.45 102.98q1.06 .73 2.28 1.16q-.73 1.06 -1.16 2.28q-1.06 -.73 -2.28 -1.16q.73 -1.06 1.16 -2.28z
M239.47 109.18q1.06 .73 2.27 1.16q-.73 1.06 -1.16 2.27q-1.06 -.73 -2.27 -1.16q.73 -1.06 1.16 -2.27z
M241.49 115.39q1.05 .73 2.26 1.15q-.73 1.05 -1.15 2.26q-1.05 -.73 -2.26 -1.15q.73 -1.05 1.15 -2.26z
M243.5 121.6q1.04 .74 2.24 1.14q-.74 1.04 -1.14 2.24q-1.04 -.74 -2.24 -1.14q.74 -1.04 1.14 -2.24z
M245.52 127.82q1.02 .74 2.22 1.13q-.74 1.02 -1.13 2.22q-1.02 -.74 -2.22 -1.13q.74 -1.02 1.13 -2.22z
M247.54 134.04q1.01 .74 2.2 1.12q-.74 1.01 -1.12 2.2q-1.01 -.74 -2.2 -1.12q.74 -1.01 1.12 -2.2z
M249.56 140.25q1.01 .73 2.19 1.12q-.73 1.01 -1.12 2.19q-1.01 -.73 -2.19 -1.12q.73 -1.01 1.12 -2.19z
M251.58 146.45q1.01 .74 2.19 1.12q-.74 1.01 -1.12 2.19q-1.01 -.74 -2.19 -1.12q.74 -1.01 1.12 -2.19z
M209.42 -4.39q1 .74 2.19 1.11q-.74 1 -1.11 2.19q-1 -.74 -2.19 -1.11q.74 -1 1.11 -2.19z
M211.44 1.81q1 .74 2.19 1.11q-.74 1 -1.11 2.19q-1 -.74 -2.19 -1.11q.74 -1 1.11 -2.19z
M213.45 8.01q1 .74 2.19 1.11q-.74 1 -1.11 2.19q-1 -.74 -2.19 -1.11q.74 -1 1.11 -2.19z
M215.47 14.22q1 .74 2.19 1.11q-.74 1 -1.11 2.19q-1 -.74 -2.19 -1.11q.74 -1 1.11 -2.19z
M217.48 20.42q1 .74 2.19 1.12q-.74 1 -1.12 2.19q-1 -.74 -2.19 -1.12q.74 -1 1.12 -2.19z
M219.5 26.62q1 .74 2.19 1.12q-.74 1 -1.12 2.19q-1 -.74 -2.19 -1.12q.74 -1 1.12 -2.19z
M221.51 32.82q1 .74 2.19 1.12q-.74 1 -1.12 2.19q-1 -.74 -2.19 -1.12q.74 -1 1.12 -2.19z
M223.53 39.02q1 .74 2.19 1.12q-.74 1 -1.12 2.19q-1 -.74 -2.19 -1.12q.74 -1 1.12 -2.19z
M225.54 45.22q1 .74 2.19 1.12q-.74 1 -1.12 2.19q-1 -.74 -2.19 -1.12q.74 -1 1.12 -2.19z
M227.56 51.42q1 .74 2.19 1.12q-.74 1 -1.12 2.19q-1 -.74 -2.19 -1.12q.74 -1 1.12 -2.19z
M229.57 57.62q1.01 .74 2.19 1.12q-.74 1.01 -1.12 2.19q-1.01 -.74 -2.19 -1.12q.74 -1.01 1.12 -2.19z
M231.59 63.82q1.01 .73 2.19 1.12q-.73 1.01 -1.12 2.19q-1.01 -.73 -2.19 -1.12q.73 -1.01 1.12 -2.19z
M233.6 70.02q1.01 .73 2.19 1.12q-.73 1.01 -1.12 2.19q-1.01 -.73 -2.19 -1.12q.73 -1.01 1.12 -2.19z
M235.61 76.22q1.01 .73 2.19 1.12q-.73 1.01 -1.12 2.19q-1.01 -.73 -2.19 -1.12q.73 -1.01 1.12 -2.19z
M237.63 82.42q1.01 .74 2.19 1.12q-.74 1.01 -1.12 2.19q-1.01 -.74 -2.19 -1.12q.74 -1.01 1.12 -2.19z
M239.64 88.62q1.01 .74 2.2 1.12q-.74 1.01 -1.12 2.2q-1.01 -.74 -2.2 -1.12q.74 -1.01 1.12 -2.2z
M241.66 94.82q1.01 .74 2.2 1.12q-.74 1.01 -1.12 2.2q-1.01 -.74 -2.2 -1.12q.74 -1.01 1.12 -2.2z
M243.67 101.02q1.01 .74 2.2 1.12q-.74 1.01 -1.12 2.2q-1.01 -.74 -2.2 -1.12q.74 -1.01 1.12 -2.2z
M245.69 107.23q1.01 .73 2.19 1.12q-.73 1.01 -1.12 2.19q-1.01 -.73 -2.19 -1.12q.73 -1.01 1.12 -2.19z
M247.7 113.43q1.01 .73 2.19 1.12q-.73 1.01 -1.12 2.19q-1.01 -.73 -2.19 -1.12q.73 -1.01 1.12 -2.19z
M249.72 119.63q1.01 .73 2.19 1.12q-.73 1.01 -1.12 2.19q-1.01 -.73 -2.19 -1.12q.73 -1.01 1.12 -2.19z
M217.64 -.2q1 .74 2.19 1.11q-.74 1 -1.11 2.19q-1 -.74 -2.19 -1.11q.74 -1 1.11 -2.19z
M219.65 6q1 .74 2.19 1.11q-.74 1 -1.11 2.19q-1 -.74 -2.19 -1.11q.74 -1 1.11 -2.19z
M221.67 12.2q1 .74 2.19 1.11q-.74 1 -1.11 2.19q-1 -.74 -2.19 -1.11q.74 -1 1.11 -2.19z
M223.68 18.4q1 .74 2.19 1.11q-.74 1 -1.11 2.19q-1 -.74 -2.19 -1.11q.74 -1 1.11 -2.19z
M225.7 24.6q1 .74 2.19 1.11q-.74 1 -1.11 2.19q-1 -.74 -2.19 -1.11q.74 -1 1.11 -2.19z
M227.71 30.8q1 .74 2.19 1.12q-.74 1 -1.12 2.19q-1 -.74 -2.19 -1.12q.74 -1 1.12 -2.19z
M229.73 37q1 .74 2.19 1.12q-.74 1 -1.12 2.19q-1 -.74 -2.19 -1.12q.74 -1 1.12 -2.19z
M231.74 43.2q1 .74 2.19 1.12q-.74 1 -1.12 2.19q-1 -.74 -2.19 -1.12q.74 -1 1.12 -2.19z
M233.76 49.4q1 .74 2.19 1.12q-.74 1 -1.12 2.19q-1 -.74 -2.19 -1.12q.74 -1 1.12 -2.19z
M235.77 55.61q1 .74 2.19 1.12q-.74 1 -1.12 2.19q-1 -.74 -2.19 -1.12q.74 -1 1.12 -2.19z
M237.79 61.81q1 .74 2.19 1.12q-.74 1 -1.12 2.19q-1 -.74 -2.19 -1.12q.74 -1 1.12 -2.19z
M239.8 68.01q1 .74 2.19 1.12q-.74 1 -1.12 2.19q-1 -.74 -2.19 -1.12q.74 -1 1.12 -2.19z
M241.82 74.21q1 .74 2.19 1.12q-.74 1 -1.12 2.19q-1 -.74 -2.19 -1.12q.74 -1 1.12 -2.19z
M243.83 80.41q1 .74 2.19 1.12q-.74 1 -1.12 2.19q-1 -.74 -2.19 -1.12q.74 -1 1.12 -2.19z
M245.85 86.61q1 .74 2.19 1.12q-.74 1 -1.12 2.19q-1 -.74 -2.19 -1.12q.74 -1 1.12 -2.19z
M247.86 92.81q1 .74 2.19 1.12q-.74 1 -1.12 2.19q-1 -.74 -2.19 -1.12q.74 -1 1.12 -2.19z
M249.87 99.01q1 .74 2.19 1.12q-.74 1 -1.12 2.19q-1 -.74 -2.19 -1.12q.74 -1 1.12 -2.19z
M223.84 -2.21q1 .74 2.19 1.11q-.74 1 -1.11 2.19q-1 -.74 -2.19 -1.11q.74 -1 1.11 -2.19z
M225.86 3.99q1 .74 2.19 1.11q-.74 1 -1.11 2.19q-1 -.74 -2.19 -1.11q.74 -1 1.11 -2.19z
M227.87 10.19q1 .74 2.19 1.11q-.74 1 -1.11 2.19q-1 -.74 -2.19 -1.11q.74 -1 1.11 -2.19z
M229.88 16.39q1 .74 2.19 1.11q-.74 1 -1.11 2.19q-1 -.74 -2.19 -1.11q.74 -1 1.11 -2.19z
M231.9 22.59q1 .74 2.19 1.11q-.74 1 -1.11 2.19q-1 -.74 -2.19 -1.11q.74 -1 1.11 -2.19z
M233.91 28.79q1 .74 2.19 1.11q-.74 1 -1.11 2.19q-1 -.74 -2.19 -1.11q.74 -1 1.11 -2.19z
M235.93 34.99q1 .74 2.19 1.11q-.74 1 -1.11 2.19q-1 -.74 -2.19 -1.11q.74 -1 1.11 -2.19z
M237.94 41.19q1 .74 2.19 1.12q-.74 1 -1.12 2.19q-1 -.74 -2.19 -1.12q.74 -1 1.12 -2.19z
M239.96 47.39q1 .74 2.19 1.12q-.74 1 -1.12 2.19q-1 -.74 -2.19 -1.12q.74 -1 1.12 -2.19z
M241.97 53.59q1 .74 2.19 1.12q-.74 1 -1.12 2.19q-1 -.74 -2.19 -1.12q.74 -1 1.12 -2.19z
M243.99 59.79q1 .74 2.19 1.12q-.74 1 -1.12 2.19q-1 -.74 -2.19 -1.12q.74 -1 1.12 -2.19z
M246 65.99q1 .74 2.19 1.12q-.74 1 -1.12 2.19q-1 -.74 -2.19 -1.12q.74 -1 1.12 -2.19z
M248.02 72.19q1 .74 2.19 1.12q-.74 1 -1.12 2.19q-1 -.74 -2.19 -1.12q.74 -1 1.12 -2.19z
M250.03 78.39q1 .74 2.19 1.12q-.74 1 -1.12 2.19q-1 -.74 -2.19 -1.12q.74 -1 1.12 -2.19z
M230.04 -4.23q1 .74 2.18 1.11q-.74 1 -1.11 2.18q-1 -.74 -2.18 -1.11q.74 -1 1.11 -2.18z
M232.06 1.97q1 .74 2.19 1.11q-.74 1 -1.11 2.19q-1 -.74 -2.19 -1.11q.74 -1 1.11 -2.19z
M234.07 8.17q1 .74 2.19 1.11q-.74 1 -1.11 2.19q-1 -.74 -2.19 -1.11q.74 -1 1.11 -2.19z
M236.09 14.37q1 .74 2.19 1.11q-.74 1 -1.11 2.19q-1 -.74 -2.19 -1.11q.74 -1 1.11 -2.19z
M238.1 20.57q1 .74 2.19 1.11q-.74 1 -1.11 2.19q-1 -.74 -2.19 -1.11q.74 -1 1.11 -2.19z
M240.11 26.77q1 .74 2.19 1.11q-.74 1 -1.11 2.19q-1 -.74 -2.19 -1.11q.74 -1 1.11 -2.19z
M242.13 32.98q1 .74 2.19 1.11q-.74 1 -1.11 2.19q-1 -.74 -2.19 -1.11q.74 -1 1.11 -2.19z
M244.14 39.18q1 .74 2.19 1.11q-.74 1 -1.11 2.19q-1 -.74 -2.19 -1.11q.74 -1 1.11 -2.19z
M246.16 45.38q1 .74 2.19 1.11q-.74 1 -1.11 2.19q-1 -.74 -2.19 -1.11q.74 -1 1.11 -2.19z
M248.17 51.58q1 .74 2.19 1.11q-.74 1 -1.11 2.19q-1 -.74 -2.19 -1.11q.74 -1 1.11 -2.19z
M250.19 57.78q1 .74 2.19 1.12q-.74 1 -1.12 2.19q-1 -.74 -2.19 -1.12q.74 -1 1.12 -2.19z
M238.26 -.04q1 .74 2.18 1.11q-.74 1 -1.11 2.18q-1 -.74 -2.18 -1.11q.74 -1 1.11 -2.18z
M240.27 6.16q1 .74 2.19 1.11q-.74 1 -1.11 2.19q-1 -.74 -2.19 -1.11q.74 -1 1.11 -2.19z
M242.29 12.36q1 .74 2.19 1.11q-.74 1 -1.11 2.19q-1 -.74 -2.19 -1.11q.74 -1 1.11 -2.19z
M244.3 18.56q1 .74 2.19 1.11q-.74 1 -1.11 2.19q-1 -.74 -2.19 -1.11q.74 -1 1.11 -2.19z
M246.32 24.76q1 .74 2.19 1.11q-.74 1 -1.11 2.19q-1 -.74 -2.19 -1.11q.74 -1 1.11 -2.19z
M248.33 30.96q1 .74 2.19 1.11q-.74 1 -1.11 2.19q-1 -.74 -2.19 -1.11q.74 -1 1.11 -2.19z
M250.35 37.16q1 .74 2.19 1.11q-.74 1 -1.11 2.19q-1 -.74 -2.19 -1.11q.74 -1 1.11 -2.19z
M244.46 -2.06q1 .75 2.18 1.11q-.75 1 -1.11 2.18q-1 -.75 -2.18 -1.11q.75 -1 1.11 -2.18z
M246.47 4.14q1 .74 2.18 1.11q-.74 1 -1.11 2.18q-1 -.74 -2.18 -1.11q.74 -1 1.11 -2.18z
M248.49 10.34q1 .74 2.18 1.11q-.74 1 -1.11 2.18q-1 -.74 -2.18 -1.11q.74 -1 1.11 -2.18z
M250.5 16.55q1 .74 2.19 1.11q-.74 1 -1.11 2.19q-1 -.74 -2.19 -1.11q.74 -1 1.11 -2.19z
M250.66 -4.07q.99 .75 2.18 1.11q-.75 .99 -1.11 2.18q-.99 -.75 -2.18 -1.11q.75 -.99 1.11 -2.18z"/>
</svg></div>

<div id="vscroll" class="abs"></div>
<div id="vthumb" class="abs"></div>
<div id="status" class="abs"></div>
<div id="st-left" class="abs"></div><div id="st-track" class="abs"></div>
<svg class="abs" style="left:35.8px;top:558.2px" width="8" height="6" viewBox="0 0 8 6"><path d="M1 1l3 3 3-3" fill="none" stroke="#d8d8d8" stroke-width="1.2"/></svg>
<div class="abs" style="left:47.5px;top:554.8px;width:1px;height:11px;background:#353535"></div>
<svg class="abs" style="left:56.5px;top:557.2px" width="6" height="8" viewBox="0 0 6 8"><path d="M0.5 0.5L5.2 4 0.5 7.5z" fill="#cfcfcf"/></svg>
<svg class="abs" style="left:72.5px;top:557.2px" width="8" height="8" viewBox="0 0 8 8"><path d="M0.5 0.5L5 4 0.5 7.5z" fill="#cfcfcf"/><path d="M6.2 0.5v7" stroke="#cfcfcf" stroke-width="1.2"/></svg>
<svg class="abs" style="left:92px;top:556px" width="13" height="9" viewBox="0 0 13 9"><circle cx="5.500" cy="5.800" r="4.300" fill="none" stroke="#cfcfcf" stroke-width="1.600"/><path d="M6 2.200v3.400h2.600" fill="none" stroke="#cfcfcf" stroke-width="1.100"/><rect x="10.800" y="7.400" width="1.800" height="1.600" fill="#cfcfcf"/></svg>
<div class="stx" style="left:117.4px;letter-spacing:-0.012px">[Basic] (working)</div>
<svg class="abs" style="left:196.2px;top:558.2px" width="8" height="6" viewBox="0 0 8 6"><path d="M1 1l3 3 3-3" fill="none" stroke="#d8d8d8" stroke-width="1.2"/></svg>
<div class="abs" style="left:214.9px;top:556.2px;width:9.2px;height:9.2px;border-radius:50%;background:#e2353a"></div>
<div class="stx" style="left:228px;font-weight:bold;-webkit-text-stroke:0;letter-spacing:-0.213px">4 errors</div>
<svg class="abs" style="left:275.8px;top:558.2px" width="8" height="6" viewBox="0 0 8 6"><path d="M1 1l3 3 3-3" fill="none" stroke="#d8d8d8" stroke-width="1.2"/></svg>
<div id="hthumb" class="abs"></div>
<svg class="abs" style="left:794.5px;top:557px" width="12" height="8" viewBox="0 0 12 8"><rect x="0.6" y="0.6" width="10.8" height="9" fill="none" stroke="#cfcfcf" stroke-width="1.1"/><path d="M6 0.6v8" stroke="#cfcfcf" stroke-width="1.1"/></svg>
<div id="vdiv" class="abs"></div>
<div id="tbhead" class="abs"></div>
<div id="tb" class="abs"></div>
<div id="tbgap" class="abs"></div>
<svg class="ti" style="left:865.4px;top:3.200px" width="7" height="5" viewBox="0 0 7 5"><path d="M0.600 0.500l1.900 1.900-1.900 1.900M3.600 0.500l1.900 1.900-1.900 1.900" fill="none" stroke="#b4b4b4" stroke-width="1"/></svg>
<div class="grip" style="left:840.8px;top:13px"></div>
<div class="abs" style="left:826.4px;top:22.2px;width:21.5px;height:16.8px;background:#2b2b2b;border-radius:2.5px"></div>
<svg class="ti" style="left:831.5px;top:24.5px" width="12" height="13" viewBox="0 0 12 13"><path d="M2 1.2v10.2l3-2.6h4.6z" fill="none" stroke="#d4d4d4" stroke-width="1.1" stroke-linejoin="miter"/></svg>
<svg class="ti" style="left:854px;top:24px" width="13" height="14.500" viewBox="0 0 13 14.500"><path d="M2 0.400v13.500l3.700-3.900h6.300z" fill="#d4d4d4"/></svg>
<svg class="ti" style="left:831.8px;top:42.800px" width="12.500" height="13" viewBox="0 0 12.500 13"><path d="M0.600 0.600h5.600l3.200 3.200v2.600M0.600 0.600v10.200h5.200M6.200 0.600v3.200h3.200" fill="none" stroke="#d4d4d4" stroke-width="1.050"/><path d="M7.400 6.400v6.200l1.700-1.700h3z" fill="#d4d4d4"/></svg>
<svg class="ti" style="left:852.8px;top:44.3px" width="15" height="11" viewBox="0 0 15 11"><path d="M1 0.5v10M14 0.5v10" stroke="#d4d4d4" stroke-width="1.2"/><path d="M4.600 5.500h5.800" stroke="#d4d4d4" stroke-width="1.600"/><path d="M2.400 5.500l2.800-2.200v4.400zM12.600 5.500l-2.800-2.200v4.400z" fill="#d4d4d4"/></svg>
<svg class="ti" style="left:831.2px;top:61.600px" width="12" height="13" viewBox="0 0 12 13"><path d="M1.200 5v6.800h9.600v-6.800" fill="none" stroke="#d4d4d4" stroke-width="1.400"/><path d="M3.400 10.800v-2.200M5.200 10.800v-1.400M7 10.800v-2.800M8.800 10.800v-4" stroke="#d4d4d4" stroke-width="0.900"/><path d="M2 0.600l3.600 3.600" stroke="#d4d4d4" stroke-width="1.300"/><path d="M6.600 1.600v3.800h-3.800z" fill="#d4d4d4"/></svg>
<svg class="ti" style="left:854.600px;top:61.600px" width="12.500" height="13" viewBox="0 0 12.500 13"><path d="M1.200 5v6.800h9.600v-6.800" fill="none" stroke="#d4d4d4" stroke-width="1.400"/><path d="M3.400 10.800v-4M5.200 10.800v-4M7 10.800v-4M8.800 10.800v-4" stroke="#d4d4d4" stroke-width="0.900"/><path d="M5.800 5.400l4.200-4.200" stroke="#d4d4d4" stroke-width="1.300"/><path d="M7.600 0.400h3.800v3.800z" fill="#d4d4d4"/></svg>
<div class="tdiv" style="top:78px"></div>
<svg class="ti" style="left:831.8px;top:83.1px" width="11" height="11" viewBox="0 0 11 11"><path d="M0.400 3.400v-2.900h10.200v2.900h-1.100v-1.500h-3.100v7.700h1.700v1.200h-5.200v-1.200h1.700v-7.700h-3.100v1.500z" fill="#d4d4d4"/></svg>
<svg class="ti" style="left:843.7px;top:95.0px" width="3" height="3" viewBox="0 0 3 3"><path d="M3 0v3h-3z" fill="#d4d4d4"/></svg>
<svg class="ti" style="left:854.4px;top:83.3px" width="12" height="12" viewBox="0 0 12 12"><path d="M0.8 11.2l10.4-10.4" stroke="#d4d4d4" stroke-width="1.1"/></svg>
<svg class="ti" style="left:828.0px;top:102.0px" width="17" height="13" viewBox="0 0 17 13"><path d="M0.200 3.200h5M2.700 0.700v5" stroke="#d4d4d4" stroke-width="1.400"/><path d="M10.6 1l4.6 3.6-1.4 1.8-4.6-3.6z" fill="#d4d4d4"/><path d="M8.6 3.6l4.4 3.4-1.6 3.6-6.6 1.8 0.4-6.6z" fill="#d4d4d4"/><path d="M5 12.2l3.6-4.4" stroke="#535353" stroke-width="0.9"/><circle cx="8.9" cy="7.5" r="0.9" fill="#535353"/></svg>
<svg class="ti" style="left:843.7px;top:114.3px" width="3" height="3" viewBox="0 0 3 3"><path d="M3 0v3h-3z" fill="#d4d4d4"/></svg>
<svg class="ti" style="left:853.7px;top:101.9px" width="13" height="13" viewBox="0 0 13 13"><path d="M9.4 1l2.6 2.6-1.2 1.2-2.6-2.6z" fill="#d4d4d4"/><path d="M7.6 2.8l2.6 2.6-6.2 6.2-3.2 0.8 0.6-3.4z" fill="#d4d4d4"/></svg>
<svg class="ti" style="left:868.1px;top:114.3px" width="3" height="3" viewBox="0 0 3 3"><path d="M3 0v3h-3z" fill="#d4d4d4"/></svg>
<svg class="ti" style="left:830.4px;top:120.9px" width="13" height="11" viewBox="0 0 13 11"><rect x="0.6" y="0.6" width="11.8" height="9.8" fill="none" stroke="#d4d4d4" stroke-width="1.1"/><path d="M0.6 0.6l11.8 9.8M12.4 0.6l-11.8 9.8" stroke="#d4d4d4" stroke-width="0.9"/></svg>
<svg class="ti" style="left:843.7px;top:132.3px" width="3" height="3" viewBox="0 0 3 3"><path d="M3 0v3h-3z" fill="#d4d4d4"/></svg>
<svg class="ti" style="left:853.8px;top:120.8px" width="13" height="11" viewBox="0 0 13 11"><rect x="0.6" y="0.6" width="11.8" height="9.8" fill="#6c6c6c" stroke="#d4d4d4" stroke-width="1.1"/></svg>
<svg class="ti" style="left:868.1px;top:132.3px" width="3" height="3" viewBox="0 0 3 3"><path d="M3 0v3h-3z" fill="#d4d4d4"/></svg>
<div class="tdiv" style="top:136.3px"></div>
<svg class="ti" style="left:830.3px;top:140.7px" width="14" height="13" viewBox="0 0 14 13"><circle cx="11" cy="2.8" r="2" fill="none" stroke="#d4d4d4" stroke-width="1"/><circle cx="11" cy="10.2" r="2" fill="none" stroke="#d4d4d4" stroke-width="1"/><path d="M9.4 4l-8.8 6M9.4 9l-8.8-6" stroke="#d4d4d4" stroke-width="1.2"/></svg>
<svg class="ti" style="left:853.4px;top:140.5px" width="14" height="13" viewBox="0 0 14 13"><rect x="4.2" y="0.6" width="9" height="7.6" rx="0.8" fill="none" stroke="#d4d4d4" stroke-width="1"/><rect x="0.6" y="5.4" width="6.4" height="6.4" rx="0.8" fill="none" stroke="#d4d4d4" stroke-width="1"/><path d="M8.2 5.4l3.2-3.2" stroke="#d4d4d4" stroke-width="0.9"/><path d="M9.4 1.8h2.4v2.4z" fill="#d4d4d4"/></svg>
<svg class="ti" style="left:868.1px;top:153.1px" width="3" height="3" viewBox="0 0 3 3"><path d="M3 0v3h-3z" fill="#d4d4d4"/></svg>
<svg class="ti" style="left:830.6px;top:160.2px" width="13" height="12" viewBox="0 0 13 12"><defs><linearGradient id="gsw" x1="0" x2="1" y1="0" y2="0"><stop offset="0" stop-color="#1c1c1c"/><stop offset="1" stop-color="#e4e4e4"/></linearGradient></defs><rect x="0.6" y="0.6" width="11.8" height="10.8" fill="url(#gsw)" stroke="#d4d4d4" stroke-width="1"/></svg>
<svg class="ti" style="left:854px;top:160.4px" width="13" height="12" viewBox="0 0 13 12"><defs><linearGradient id="gfe" x1="0" x2="0" y1="0" y2="1"><stop offset="0" stop-color="#d4d4d4"/><stop offset="1" stop-color="#6a6a6a"/></linearGradient></defs><rect x="0.6" y="0.6" width="11.8" height="10.6" fill="url(#gfe)" stroke="#d4d4d4" stroke-width="1"/><rect x="1.5" y="1.5" width="2" height="2" fill="#2e2e2e" opacity="1"/><rect x="1.5" y="5.5" width="2" height="2" fill="#2e2e2e" opacity="0.56"/><rect x="3.5" y="3.5" width="2" height="2" fill="#2e2e2e" opacity="0.78"/><rect x="3.5" y="7.5" width="2" height="2" fill="#2e2e2e" opacity="0.34"/><rect x="5.5" y="1.5" width="2" height="2" fill="#2e2e2e" opacity="1"/><rect x="5.5" y="5.5" width="2" height="2" fill="#2e2e2e" opacity="0.56"/><rect x="7.5" y="3.5" width="2" height="2" fill="#2e2e2e" opacity="0.78"/><rect x="7.5" y="7.5" width="2" height="2" fill="#2e2e2e" opacity="0.34"/><rect x="9.5" y="1.5" width="2" height="2" fill="#2e2e2e" opacity="1"/><rect x="9.5" y="5.5" width="2" height="2" fill="#2e2e2e" opacity="0.56"/></svg>
<div class="tdiv" style="top:176.6px"></div>
<svg class="ti" style="left:830.6px;top:180.9px" width="12" height="12" viewBox="0 0 12 12"><path d="M0.8 0.8h10.4v6.8l-3.4 3.6h-7z" fill="#d4d4d4"/><path d="M2.6 3.2h6.8M2.6 5.4h6.8M2.6 7.6h3.6" stroke="#535353" stroke-width="0.9"/><path d="M7.6 11v-3.4h3.4" fill="none" stroke="#535353" stroke-width="0.8"/></svg>
<svg class="ti" style="left:853.2px;top:179.4px" width="14" height="15" viewBox="0 0 14 15"><path d="M9.6 0.8l2.4 2.4-1.6 1.6 0.6 0.6-1 1-3.4-3.4 1-1 0.6 0.6z" fill="#d4d4d4"/><path d="M7.2 4.8l1.8 1.8-5.6 5.6-2 0.8-0.4-0.6 0.8-1.8z" fill="none" stroke="#d4d4d4" stroke-width="0.9"/></svg>
<svg class="ti" style="left:867.4px;top:192.5px" width="3" height="3" viewBox="0 0 3 3"><path d="M3 0v3h-3z" fill="#d4d4d4"/></svg>
<svg class="ti" style="left:830.5px;top:199px" width="13" height="13.5" viewBox="0 0 13 13.5"><g stroke="#d4d4d4" stroke-linecap="round" fill="none"><path d="M4.2 2.6l0.600 5.400M6.700 1.300l0.100 6.700M9.300 2l-0.400 6M12 4.600l-1.500 4" stroke-width="1.700"/><path d="M1 6.800l2.800 3" stroke-width="1.900"/></g><path d="M3.300 8l7.900-0.400c0 3-1.500 5.600-4.200 5.600-2 0-3.400-2.200-3.900-3.800z" fill="#d4d4d4"/></svg>
<svg class="ti" style="left:853.9px;top:199.1px" width="13" height="13" viewBox="0 0 13 13"><circle cx="5" cy="5" r="4" fill="none" stroke="#d4d4d4" stroke-width="1.1"/><path d="M8 8l4.2 4.2" stroke="#d4d4d4" stroke-width="1.5"/></svg>
<div class="tdiv" style="top:215.8px"></div>
<div class="abs" style="left:828px;top:219px;width:27.8px;height:14px;background:#fff"></div>
<svg class="ti" style="left:863.4px;top:219.7px" width="8" height="9" viewBox="0 0 8 9"><path d="M1.6 2.4c3-0.6 4.6 1 4.4 4.4" fill="none" stroke="#d4d4d4" stroke-width="1.1"/><path d="M0.4 2.6l2.6-2.2v4.2z" fill="#d4d4d4"/><path d="M6 8.8l-2.2-2.6h4.2z" fill="#d4d4d4"/></svg>
<div id="dockhead" class="abs"></div>
<div id="dock" class="abs"></div>
<svg class="dicon" style="left:995.6px;top:3.200px" width="7" height="5" viewBox="0 0 7 5"><path d="M2.500 0.500l-1.900 1.900 1.900 1.900M5.500 0.500l-1.900 1.900 1.900 1.900" fill="none" stroke="#b0b0b0" stroke-width="0.950"/></svg>
<div class="ddiv" style="top:84.6px"></div>
<div class="ddiv" style="top:138.4px"></div>
<div class="ddiv" style="top:170.4px"></div>
<div class="ddiv" style="top:201.6px"></div>
<div class="ddiv" style="top:233.5px"></div>
<div class="ddiv" style="top:309.4px"></div>
<div class="ddiv" style="top:341.2px"></div>
<div class="ddiv" style="top:373.0px"></div>
<div class="ddiv" style="top:404.3px"></div>
<div class="grip" style="left:934px;top:13.0px"></div>
<div class="grip" style="left:934px;top:88.3px"></div>
<div class="grip" style="left:934px;top:142.0px"></div>
<div class="grip" style="left:934px;top:174.0px"></div>
<div class="grip" style="left:934px;top:205.9px"></div>
<div class="grip" style="left:934px;top:237.5px"></div>
<div class="grip" style="left:934px;top:312.8px"></div>
<div class="grip" style="left:934px;top:345.0px"></div>
<div class="grip" style="left:934px;top:376.7px"></div>
<div class="abs" style="left:882.2px;top:288.4px;width:119.8px;height:16.400px;background:#303030;border-radius:2px"></div>
<div class="dlabel" style="top:23.1px;letter-spacing:-0.351px">Pages</div>
<div class="dlabel" style="top:45.0px;letter-spacing:-0.004px">Layers</div>
<div class="dlabel" style="top:66.4px;letter-spacing:-0.058px">Links</div>
<div class="dlabel" style="top:98.4px;letter-spacing:-0.004px">Stroke</div>
<div class="dlabel" style="top:119.9px;letter-spacing:0.086px">Color</div>
<div class="dlabel" style="top:151.8px;letter-spacing:-0.144px">Swatches</div>
<div class="dlabel" style="top:183.8px;letter-spacing:0.018px">Review</div>
<div class="dlabel" style="top:215.7px;letter-spacing:0.035px">CC Libraries</div>
<div class="dlabel" style="top:247.6px;letter-spacing:-0.001px">Script Label</div>
<div class="dlabel" style="top:269.4px;letter-spacing:0.206px">Data Merge</div>
<div class="dlabel" style="top:291.3px;letter-spacing:-0.113px">Scripts</div>
<div class="dlabel" style="top:323.2px;letter-spacing:0.018px">Paragraph Styles</div>
<div class="dlabel" style="top:354.8px;letter-spacing:0.021px">Character Styles</div>
<div class="dlabel" style="top:386.7px;letter-spacing:0.049px">Properties</div>
<svg class="dicon" style="left:886.6px;top:21.8px" width="14" height="15" viewBox="0 0 14 15"><path d="M0.6 5.2l3-3h2.200v10.400h-5.200zM13.4 5.200l-3-3h-2.200v10.400h5.200z" fill="#d2d2d2"/><path d="M7 0v15" stroke="#d2d2d2" stroke-width="0.650"/><path d="M0.800 5.400h2.900v-3M13.200 5.400h-2.900v-3" stroke="#535353" stroke-width="0.700" fill="none"/></svg>
<svg class="dicon" style="left:886.6px;top:44.3px" width="14" height="14" viewBox="0 0 14 14"><path d="M7 0.8l6.4 4.200-6.400 4.200-6.400-4.200z" fill="#d2d2d2"/><path d="M0.800 7.800l6.200 4.100 6.200-4.100v1.600l-6.200 4.100-6.200-4.100z" fill="#d2d2d2"/></svg>
<svg class="dicon" style="left:885.6px;top:68.7px" width="16" height="8" viewBox="0 0 16 8"><rect x="0.8" y="1.2" width="8.600" height="5.600" rx="2.800" fill="none" stroke="#d2d2d2" stroke-width="1.300"/><rect x="6.600" y="1.200" width="8.600" height="5.600" rx="2.800" fill="none" stroke="#d2d2d2" stroke-width="1.300"/></svg>
<svg class="dicon" style="left:886.6px;top:98.8px" width="14" height="11" viewBox="0 0 14 11"><path d="M0.400 1h13.200" stroke="#d2d2d2" stroke-width="1"/><path d="M0.400 4.800h13.200" stroke="#d2d2d2" stroke-width="1.800"/><path d="M0.400 9.300h13.200" stroke="#d2d2d2" stroke-width="2.600"/></svg>
<svg class="dicon" style="left:885.6px;top:120.2px" width="16" height="12" viewBox="0 0 16 12"><path d="M8.400 0.600c4.200 0 7 2.200 7 5 0 2-1.400 3-3 2.800-1.400-0.200-2.200 0.200-2 1.200 0.200 1-0.800 1.800-2.800 1.800-4.200 0-7-2.400-7-5.400s3.400-5.400 7.800-5.400z" fill="#d2d2d2"/><circle cx="3.600" cy="6.800" r="1.100" fill="#535353"/><circle cx="5.400" cy="3.600" r="1.100" fill="#535353"/><circle cx="9" cy="2.800" r="1.100" fill="#535353"/><circle cx="12.400" cy="4.400" r="1.100" fill="#535353"/><circle cx="6.600" cy="9.200" r="1" fill="#535353"/></svg>
<svg class="dicon" style="left:886.5px;top:153.3px" width="13" height="9.4" viewBox="0 0 13 9.4"><rect x="0.5" y="0.500" width="12" height="8.400" fill="#6a6a6a" stroke="#d2d2d2" stroke-width="0.900"/><rect x="1.4" y="1.4" width="3" height="3" fill="#d2d2d2"/><rect x="1.4" y="4.8" width="3" height="3" fill="#8a8a8a"/><rect x="5.2" y="1.4" width="3" height="3" fill="#8a8a8a"/><rect x="5.2" y="4.8" width="3" height="3" fill="#d2d2d2"/><rect x="9" y="1.4" width="3" height="3" fill="#d2d2d2"/><rect x="9" y="4.8" width="3" height="3" fill="#8a8a8a"/></svg>
<svg class="dicon" style="left:886.1px;top:183.2px" width="15" height="14" viewBox="0 0 15 14"><path d="M0.600 0.600h10v6.800h-5.800l-2.200 2.400v-2.400h-2z" fill="#d2d2d2"/><path d="M12 3.600h2.400v7.200h-2v2.600l-2.600-2.600h-4.400v-2.200h6.600z" fill="#d2d2d2"/></svg>
<svg class="dicon" style="left:886.5px;top:214.6px" width="13" height="14" viewBox="0 0 13 14"><path d="M0.600 0.800h3.800l1 1.600h7v10.800h-11.800z" fill="none" stroke="#d2d2d2" stroke-width="0.900"/><path d="M2.800 10.600v-3l1.600-1.800 1.400 1.400 1.400-1.800 1.400 1.600 1.600-1.200v4.800z" fill="#d2d2d2"/></svg>
<svg class="dicon" style="left:886.4px;top:247px" width="15" height="14" viewBox="0 0 15 14"><path d="M9.400 3c-1.200-2-5.600-1.600-5.400 1 0.200 2.800 5.400 2.400 5.400 5.600 0 2.600-3.800 3.400-6.200 1.400" fill="none" stroke="#d2d2d2" stroke-width="3.100"/><path d="M3.800 0.800l4.800-0.800 1.400 1.800z" fill="#d2d2d2"/><path d="M5.400 5.200l3 3.400" stroke="#535353" stroke-width="0.800"/><rect x="8.400" y="4.200" width="5.800" height="4" fill="#d2d2d2" stroke="#535353" stroke-width="0.700"/><path d="M9.600 6.200h3.400" stroke="#535353" stroke-width="0.800"/></svg>
<svg class="dicon" style="left:884.400px;top:267.600px" width="19" height="18" viewBox="0 0 19 18"><path d="M0.200 4.400h3.400" stroke="#d2d2d2" stroke-width="1.500"/><path d="M2.800 1.800l3 2.600-3 2.600z" fill="#d2d2d2"/><g transform="translate(4.600,0.200) scale(0.920)"><path d="M9.400 3c-1.200-2-5.600-1.600-5.400 1 0.200 2.800 5.400 2.400 5.400 5.600 0 2.600-3.800 3.400-6.200 1.400" fill="none" stroke="#d2d2d2" stroke-width="3.100"/><path d="M3.800 0.800l4.800-0.800 1.400 1.800z" fill="#d2d2d2"/><path d="M5.400 5.200l3 3.400" stroke="#535353" stroke-width="0.800"/></g><circle cx="14.600" cy="12.800" r="2.500" fill="#535353" stroke="#d2d2d2" stroke-width="1.700"/><path d="M14.600 8.600v8.400M10.400 12.800h8.400M11.600 9.800l6 6M17.600 9.800l-6 6" stroke="#d2d2d2" stroke-width="1.200"/><circle cx="14.600" cy="12.800" r="1.500" fill="#535353"/></svg>
<svg class="dicon" style="left:887.400px;top:290.400px" width="13" height="14" viewBox="0 0 13 14"><path d="M9.400 3c-1.200-2-5.600-1.600-5.400 1 0.200 2.800 5.400 2.400 5.400 5.600 0 2.600-3.800 3.400-6.200 1.400" fill="none" stroke="#d2d2d2" stroke-width="3.100"/><path d="M3.800 0.800l4.800-0.800 1.400 1.800z" fill="#d2d2d2"/><path d="M5.400 5.200l3 3.400" stroke="#535353" stroke-width="0.800"/></svg>
<svg class="dicon" style="left:886.2px;top:322.4px" width="14" height="14" viewBox="0 0 14 14"><path d="M8.400 0.800h5.200M10.400 0.800v9M12.600 0.800v9" stroke="#d2d2d2" stroke-width="1.100" fill="none"/><path d="M10.400 0.800c-4.400-0.400-4.400 5.200 0 4.800z" fill="#d2d2d2"/><rect x="0.600" y="7" width="4.400" height="4.400" fill="none" stroke="#d2d2d2" stroke-width="0.900"/><rect x="2.600" y="9" width="4.400" height="4.400" fill="#535353" stroke="#d2d2d2" stroke-width="0.900"/></svg>
<svg class="dicon" style="left:886.2px;top:353.6px" width="14" height="14" viewBox="0 0 14 14"><path d="M6.400 8.600l3.200-8h1l3.200 8M7.600 5.800h5" fill="none" stroke="#d2d2d2" stroke-width="1.100"/><rect x="0.600" y="7.200" width="4.400" height="4.400" fill="none" stroke="#d2d2d2" stroke-width="0.900"/><rect x="2.600" y="9.200" width="4.400" height="4.400" fill="#535353" stroke="#d2d2d2" stroke-width="0.900"/></svg>
<svg class="dicon" style="left:886.7px;top:386.8px" width="13" height="12" viewBox="0 0 13 12"><path d="M0.400 1.800h12.200M0.400 6h12.200M0.400 10.200h12.200" stroke="#d2d2d2" stroke-width="0.900"/><circle cx="4" cy="1.800" r="1.400" fill="#535353" stroke="#d2d2d2" stroke-width="0.800"/><circle cx="9" cy="6" r="1.400" fill="#535353" stroke="#d2d2d2" stroke-width="0.800"/><circle cx="5" cy="10.200" r="1.400" fill="#535353" stroke="#d2d2d2" stroke-width="0.800"/></svg>
<div id="sp" class="abs"></div>
<div id="sptabs" class="abs"></div>
<div id="sptab" class="abs"></div>
<div class="sptx" style="left:699.3px;width:32.300px;letter-spacing:-0.001px">Script Label</div>
<div class="abs" style="left:732px;top:236px;width:1px;height:21px;background:#383838"></div>
<div class="sptx" style="left:740.8px;width:31.600px;letter-spacing:0.206px">Data Merge</div>
<div class="abs" style="left:772.6px;top:236px;width:1px;height:21px;background:#383838"></div>
<svg class="abs" style="left:778.600px;top:241.800px" width="5" height="8" viewBox="0 0 5 8"><path d="M0.600 3l1.900-2 1.900 2M0.600 5l1.900 2 1.900-2" fill="none" stroke="#c4c4c4" stroke-width="0.800"/></svg>
<div class="sptx" style="left:786.4px;color:#f4f4f4;letter-spacing:-0.071px">Scripts</div>
<svg class="abs" style="left:845px;top:243px" width="9" height="7" viewBox="0 0 9 7"><path d="M0.800 0.800l2.600 2.600-2.600 2.600M4.800 0.800l2.600 2.600-2.600 2.600" fill="none" stroke="#c8c8c8" stroke-width="1"/></svg>
<div class="abs" style="left:858.400px;top:242.500px;width:1px;height:8.500px;background:#9a9a9a"></div>
<svg class="abs" style="left:864px;top:243.400px" width="9" height="7" viewBox="0 0 9 7"><path d="M0 0.800h9M0 3.200h9M0 5.600h9" stroke="#bdbdbd" stroke-width="1.400"/></svg>
<div id="splist" class="abs"></div>
<div class="sprow" style="top:257.9px"></div>
<div class="sprt" style="left:725.4px;top:260.2px;color:#f0f0f0;letter-spacing:0.074px">Application</div>
<div class="sprow" style="top:275.0px"></div>
<div class="sprt" style="left:741.7px;top:277.4px;color:#f0f0f0;letter-spacing:-0.078px">Indic Preferences.js</div>
<div class="sprow" style="top:292.1px"></div>
<div class="sprt" style="left:741.7px;top:294.4px;color:#a8a8a8;letter-spacing:-0.049px">kern_Basic Commercial LT Std....</div>
<div class="sprow" style="top:309.2px"></div>
<div class="sprt" style="left:741.7px;top:311.6px;color:#a8a8a8;letter-spacing:0.035px">kern_Helvetica.txt</div>
<div class="sprow" style="top:326.3px;background:#4b6a88;border-top-color:#4b6a88"></div>
<div class="sprt" style="left:741.7px;top:328.7px;color:#f4f4f4;letter-spacing:0.118px">kern.jsx</div>
<div class="sprow" style="top:343.4px"></div>
<div class="sprt" style="left:741.7px;top:345.8px;color:#f0f0f0;letter-spacing:-0.328px">Samples</div>
<div class="sprow" style="top:360.5px"></div>
<div class="sprt" style="left:741.7px;top:362.9px;color:#f0f0f0;letter-spacing:-0.065px">TheBookCalculator_MarginsCa...</div>
<svg class="abs" style="left:695.4px;top:263.8px" width="8" height="6" viewBox="0 0 8 6"><path d="M1 1.200l3 3 3-3" fill="none" stroke="#b8b8b8" stroke-width="1"/></svg>
<svg class="abs" style="left:709.4px;top:261.4px" width="12" height="10" viewBox="0 0 12 10"><path d="M0.400 0.600h4l0.800 1.400h6.400v1.200h-11.200z" fill="#d2d2d2"/><path d="M0.400 3.800h11.200v5.600h-11.200z" fill="#d2d2d2"/></svg>
<svg class="abs" style="left:725.8px;top:278.2px" width="13" height="11" viewBox="0 0 13 11"><path d="M5.600 2.200c-1-1.400-3.800-1-3.600 0.800 0.200 2 3.800 1.800 3.800 4.200 0 1.800-2.600 2.400-4.200 1" fill="none" stroke="#d2d2d2" stroke-width="2.300"/><path d="M2.400 0.400l3.400-0.400 0.600 1.200z" fill="#d2d2d2"/><ellipse cx="9.300" cy="6.700" rx="2.300" ry="3.500" transform="rotate(12 9.300 6.700)" fill="#d2d2d2"/><path d="M9.900 3.600l-1.300 6.300" stroke="#4f4f4f" stroke-width="0.800"/></svg>
<svg class="abs" style="left:725.3px;top:295.5px" width="10.2" height="10.2" viewBox="0 0 12 12"><circle cx="6" cy="6" r="5.600" fill="#d8d8d8"/><circle cx="6" cy="3.200" r="1" fill="#4f4f4f"/><path d="M4.600 5h2.200v3.600h1v1h-3.400v-1h1.200v-2.600h-1z" fill="#4f4f4f"/></svg>
<svg class="abs" style="left:725.3px;top:312.6px" width="10.2" height="10.2" viewBox="0 0 12 12"><circle cx="6" cy="6" r="5.600" fill="#d8d8d8"/><circle cx="6" cy="3.200" r="1" fill="#4f4f4f"/><path d="M4.600 5h2.200v3.600h1v1h-3.400v-1h1.200v-2.600h-1z" fill="#4f4f4f"/></svg>
<svg class="abs" style="left:725.8px;top:329.6px" width="13" height="11" viewBox="0 0 13 11"><path d="M5.600 2.200c-1-1.400-3.800-1-3.600 0.800 0.200 2 3.800 1.800 3.800 4.200 0 1.800-2.600 2.400-4.200 1" fill="none" stroke="#d2d2d2" stroke-width="2.300"/><path d="M2.400 0.400l3.400-0.400 0.600 1.200z" fill="#d2d2d2"/><ellipse cx="9.300" cy="6.700" rx="2.300" ry="3.500" transform="rotate(12 9.300 6.700)" fill="#d2d2d2"/><path d="M9.900 3.600l-1.300 6.300" stroke="#4f4f4f" stroke-width="0.800"/></svg>
<svg class="abs" style="left:697.8px;top:347.9px" width="6" height="8" viewBox="0 0 6 8"><path d="M1.200 1l3 3-3 3" fill="none" stroke="#b8b8b8" stroke-width="1"/></svg>
<svg class="abs" style="left:725.6px;top:346.9px" width="12" height="10" viewBox="0 0 12 10"><path d="M0.400 0.600h4l0.800 1.400h6.400v1.200h-11.200z" fill="#d2d2d2"/><path d="M0.400 3.800h11.200v5.600h-11.200z" fill="#d2d2d2"/></svg>
<svg class="abs" style="left:725.8px;top:363.8px" width="13" height="11" viewBox="0 0 13 11"><path d="M5.600 2.200c-1-1.400-3.800-1-3.600 0.800 0.200 2 3.800 1.800 3.800 4.200 0 1.800-2.600 2.400-4.200 1" fill="none" stroke="#d2d2d2" stroke-width="2.300"/><path d="M2.400 0.400l3.400-0.400 0.600 1.200z" fill="#d2d2d2"/><ellipse cx="9.300" cy="6.700" rx="2.300" ry="3.500" transform="rotate(12 9.300 6.700)" fill="#d2d2d2"/><path d="M9.900 3.600l-1.300 6.300" stroke="#4f4f4f" stroke-width="0.800"/></svg>
<div id="spsb" class="abs"></div><div id="spthumb" class="abs"></div>
<div id="spfoot" class="abs"></div><div id="spfootline" class="abs"></div><div id="spbot" class="abs"></div>
<svg class="abs" style="left:849.8px;top:381.2px" width="10.4" height="10.4" viewBox="0 0 12 12"><circle cx="6" cy="6" r="5.600" fill="#d8d8d8"/><circle cx="6" cy="3.200" r="1" fill="#535353"/><path d="M4.600 5h2.200v3.600h1v1h-3.400v-1h1.200v-2.600h-1z" fill="#535353"/></svg>
<div class="grip" style="left:775.5px;top:398px;background:repeating-linear-gradient(90deg,#3a3a3a 0 1.150px,#464646 1.150px 1.550px)"></div>
</body>
</html>
